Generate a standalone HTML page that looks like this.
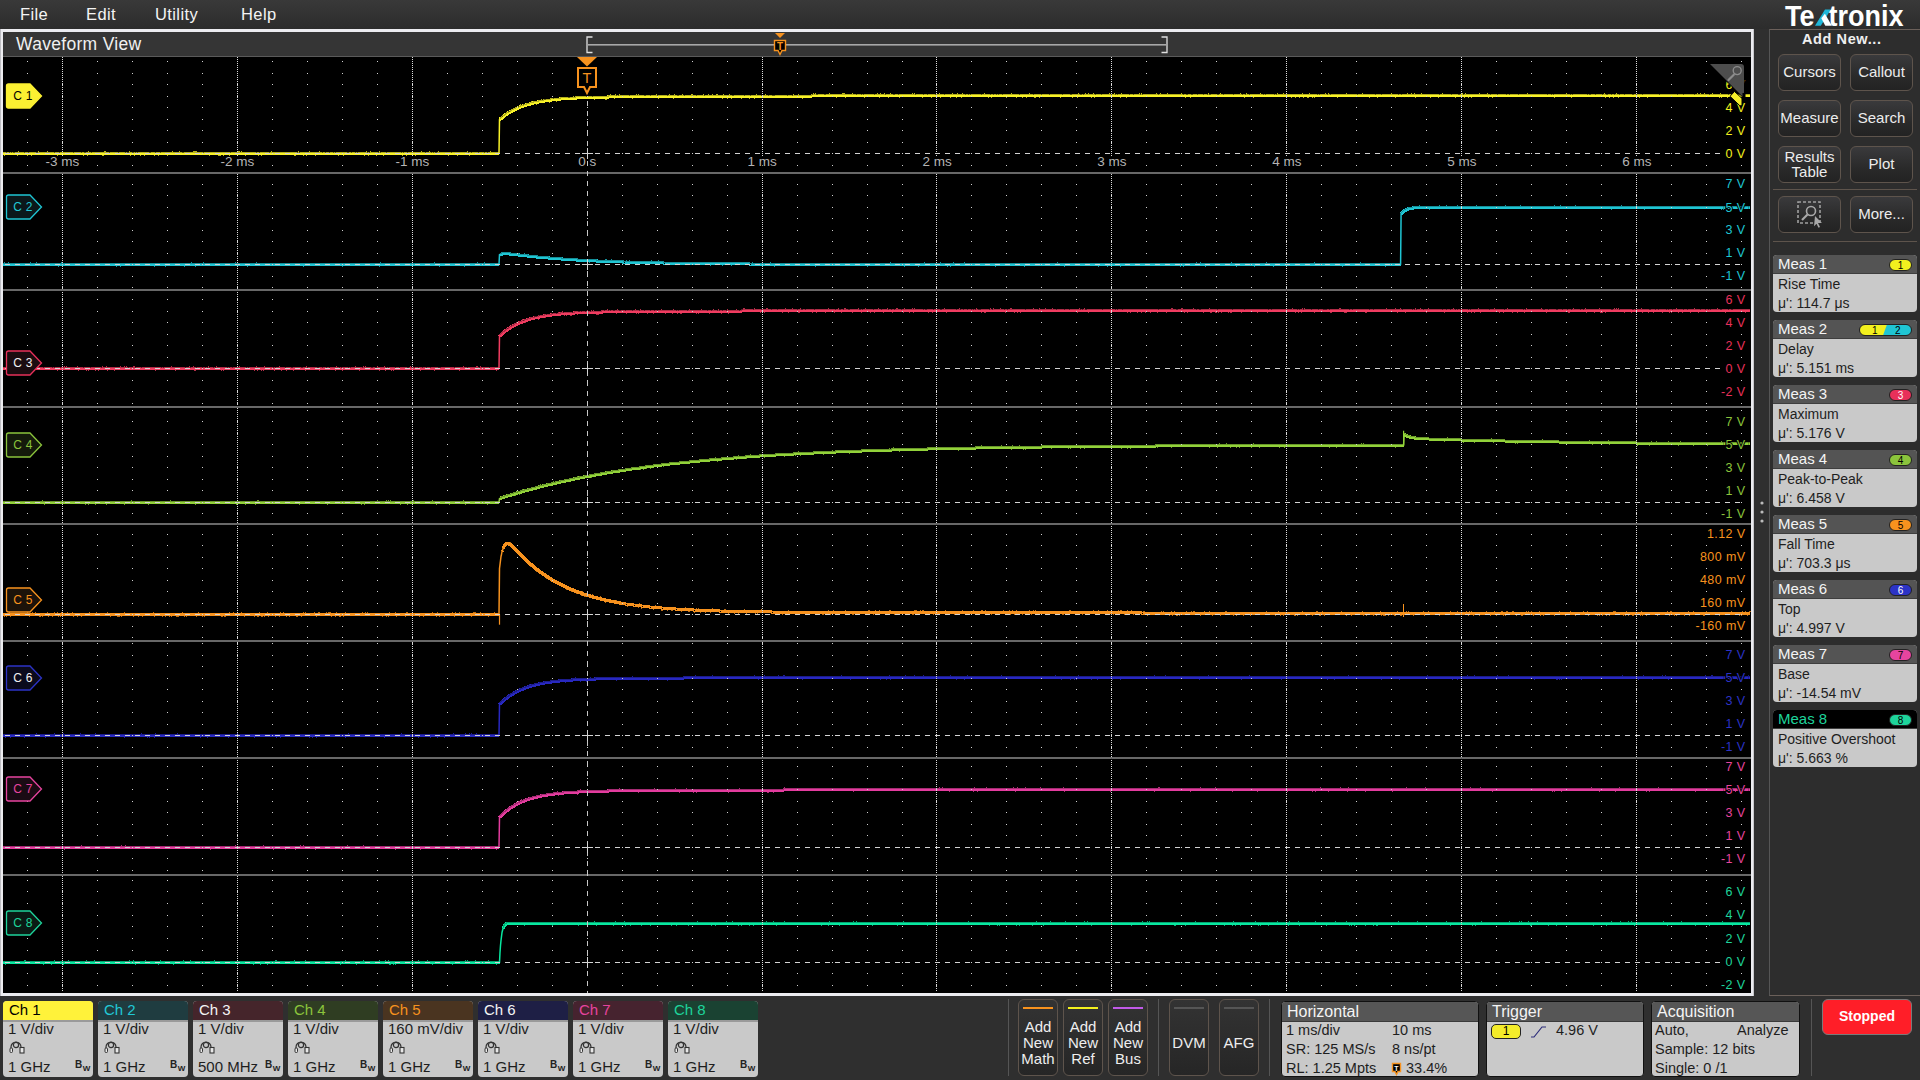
<!DOCTYPE html><html><head><meta charset="utf-8"><style>
*{margin:0;padding:0;box-sizing:border-box}
html,body{width:1920px;height:1080px;overflow:hidden}
body{background:#2f2f2f;font-family:"Liberation Sans",sans-serif;position:relative;color:#eee}
.a{position:absolute}
.menu{left:0;top:0;width:1920px;height:29px;background:linear-gradient(#393939,#2c2c2c)}
.menu span{position:absolute;top:4.5px;font-size:16.5px;color:#f4f4f4;letter-spacing:0.4px}
.frame{left:0;top:29px;width:1754px;height:967px;background:#ececf0;border-left:1px solid #bdbdc2;border-right:1px solid #c8c8cc}
.hdr{left:3px;top:32px;width:1748px;height:25px;background:#353535;border-bottom:1px solid #5a5a5a}
.plot{left:3px;top:57px;width:1748px;height:936px;background:#000}
.rp{left:1769px;top:29px;width:151px;height:967px;border-left:1px solid #555;border-top:1px solid #6b605a;border-bottom:1px solid #6b605a;background:#2d2d2d}
.btn{position:absolute;width:63px;height:37px;border:1px solid #5e544c;border-radius:6px;background:linear-gradient(#3a3a3c,#2a2a2a 60%,#232323);color:#ececec;font-size:15px;text-align:center;line-height:33px}
.meas{position:absolute;left:1773px;width:144px;height:57px;border-radius:4px;overflow:hidden;background:#c9c9c9}
.meas .h{height:19px;background:#545454;color:#f4f4f4;font-size:15px;padding-left:5px;line-height:17px;border-bottom:1px solid #3e3e3e}
.meas .b{color:#1e1e1e;font-size:14px;padding-left:5px;line-height:19px;position:relative;top:1px}
.badge{position:absolute;top:4px;height:12px;border-radius:6px;border:1px solid #222;font-size:10px;line-height:11px;text-align:center;color:#000}
.ch{position:absolute;top:1001px;width:90px;height:76px;border-radius:4px;overflow:hidden;background:#c9c9c9}
.ch .h{height:21px;font-size:15px;line-height:17px;padding-left:6px;border-bottom:2px solid #9a9a9a}
.ch .b{color:#1e1e1e;font-size:15px;padding-left:5px}
.tb{position:absolute;top:999px;width:40px;height:77px;border:1px solid #5e544c;border-radius:6px;background:linear-gradient(#333,#262626);color:#eee;font-size:15px;text-align:center}
.panel{position:absolute;top:1001px;height:76px;border-radius:4px;overflow:hidden;background:#c9c9c9;border:1px solid #111}
.panel .h{height:20px;background:#565656;color:#f4f4f4;font-size:16px;line-height:20px;padding-left:5px;border-bottom:1px solid #3a3a3a}
.panel .r{position:absolute;color:#1e1e1e;font-size:14.5px;white-space:nowrap}
</style></head><body><div class="a menu"><span style="left:20px">File</span><span style="left:86px">Edit</span><span style="left:155px">Utility</span><span style="left:241px">Help</span></div><div class="a frame"></div><div class="a hdr"></div><div class="a plot"></div><div class="a" style="left:16px;top:34px;font-size:17.5px;color:#f0f0f0;letter-spacing:0.3px">Waveform View</div><svg class="a" style="left:0;top:0" width="1920" height="60"><path d="M592.5 37h-5.5v15.5h5.5M1161.5 37h5.5v15.5h-5.5" fill="none" stroke="#e0e0e0" stroke-width="1.3"/><rect x="588" y="44" width="578" height="1.6" fill="#a8a8a8"/><path d="M775 33h10l-5 5z" fill="#f7921e"/><path d="M774.5 40.5h11v10h-3.5l-2 4l-2 -4h-3.5z" fill="#000" stroke="#f7921e" stroke-width="1.4"/><text x="780" y="49.5" fill="#f7921e" font-size="10" font-weight="bold" text-anchor="middle" font-family="Liberation Sans">T</text></svg><svg class="a" style="left:0;top:0" width="1920" height="1080" font-family="Liberation Sans, sans-serif"><g id="tr"><polyline points="3,153.5 5,153.5 7,153.5 9,153.5 11,153.5 13,153.5 15,153.5 17,153.5 19,153.5 21,153.5 23,153.5 25,153.5 27,153.5 29,153.5 31,153.5 33,153.5 35,153.5 37,153.5 39,153.5 41,153.5 43,153.5 45,153.5 47,153.5 49,153.5 51,153.5 53,153.5 55,153.5 57,153.5 59,153.5 61,153.5 63,153.5 65,153.5 67,153.5 69,153.5 71,153.5 73,153.5 75,153.5 77,153.5 79,153.5 81,153.5 83,153.5 85,153.5 87,153.5 89,153.5 91,153.5 93,153.5 95,153.5 97,153.5 99,153.5 101,153.5 103,153.5 105,153.5 107,153.5 109,153.5 111,153.5 113,153.5 115,153.5 117,153.5 119,153.5 121,153.5 123,153.5 125,153.5 127,153.5 129,153.5 131,153.5 133,153.5 135,153.5 137,153.5 139,153.5 141,153.5 143,153.5 145,153.5 147,153.5 149,153.5 151,153.5 153,153.5 155,153.5 157,153.5 159,153.5 161,153.5 163,153.5 165,153.5 167,153.5 169,153.5 171,153.5 173,153.5 175,153.5 177,153.5 179,153.5 181,153.5 183,153.5 185,153.5 187,153.5 189,153.5 191,153.5 193,153.5 195,153.5 197,153.5 199,153.5 201,153.5 203,153.5 205,153.5 207,153.5 209,153.5 211,153.5 213,153.5 215,153.5 217,153.5 219,153.5 221,153.5 223,153.5 225,153.5 227,153.5 229,153.5 231,153.5 233,153.5 235,153.5 237,153.5 239,153.5 241,153.5 243,153.5 245,153.5 247,153.5 249,153.5 251,153.5 253,153.5 255,153.5 257,153.5 259,153.5 261,153.5 263,153.5 265,153.5 267,153.5 269,153.5 271,153.5 273,153.5 275,153.5 277,153.5 279,153.5 281,153.5 283,153.5 285,153.5 287,153.5 289,153.5 291,153.5 293,153.5 295,153.5 297,153.5 299,153.5 301,153.5 303,153.5 305,153.5 307,153.5 309,153.5 311,153.5 313,153.5 315,153.5 317,153.5 319,153.5 321,153.5 323,153.5 325,153.5 327,153.5 329,153.5 331,153.5 333,153.5 335,153.5 337,153.5 339,153.5 341,153.5 343,153.5 345,153.5 347,153.5 349,153.5 351,153.5 353,153.5 355,153.5 357,153.5 359,153.5 361,153.5 363,153.5 365,153.5 367,153.5 369,153.5 371,153.5 373,153.5 375,153.5 377,153.5 379,153.5 381,153.5 383,153.5 385,153.5 387,153.5 389,153.5 391,153.5 393,153.5 395,153.5 397,153.5 399,153.5 401,153.5 403,153.5 405,153.5 407,153.5 409,153.5 411,153.5 413,153.5 415,153.5 417,153.5 419,153.5 421,153.5 423,153.5 425,153.5 427,153.5 429,153.5 431,153.5 433,153.5 435,153.5 437,153.5 439,153.5 441,153.5 443,153.5 445,153.5 447,153.5 449,153.5 451,153.5 453,153.5 455,153.5 457,153.5 459,153.5 461,153.5 463,153.5 465,153.5 467,153.5 469,153.5 471,153.5 473,153.5 475,153.5 477,153.5 479,153.5 481,153.5 483,153.5 485,153.5 487,153.5 489,153.5 491,153.5 493,153.5 495,153.5 495.5,153.5 496,153.5 496.5,153.5 497,153.5 497.5,153.5 498,153.5 498.5,153.5 499,153.5" fill="none" stroke="#f8f228" stroke-width="3" stroke-linejoin="round" shape-rendering="crispEdges"/><polyline points="3,152.5 5,152.5 7,152.5 9,152.5 11,152.5 13,152.5 15,152.5 17,152.5 19,152.5 21,152.5 23,152.5 25,152.5 27,152.5 29,152.5 31,152.5 33,152.5 35,152.5 37,152.5 39,152.5 41,152.5 43,152.5 45,152.5 47,152.5 49,152.5 51,152.5 53,152.5 55,152.5 57,152.5 59,152.5 61,152.5 63,152.5 65,152.5 67,152.5 69,152.5 71,152.5 73,152.5 75,152.5 77,152.5 79,152.5 81,152.5 83,152.5 85,152.5 87,152.5 89,152.5 91,152.5 93,152.5 95,152.5 97,152.5 99,152.5 101,152.5 103,152.5 105,152.5 107,152.5 109,152.5 111,152.5 113,152.5 115,152.5 117,152.5 119,152.5 121,152.5 123,152.5 125,152.5 127,152.5 129,152.5 131,152.5 133,152.5 135,152.5 137,152.5 139,152.5 141,152.5 143,152.5 145,152.5 147,152.5 149,152.5 151,152.5 153,152.5 155,152.5 157,152.5 159,152.5 161,152.5 163,152.5 165,152.5 167,152.5 169,152.5 171,152.5 173,152.5 175,152.5 177,152.5 179,152.5 181,152.5 183,152.5 185,152.5 187,152.5 189,152.5 191,152.5 193,152.5 195,152.5 197,152.5 199,152.5 201,152.5 203,152.5 205,152.5 207,152.5 209,152.5 211,152.5 213,152.5 215,152.5 217,152.5 219,152.5 221,152.5 223,152.5 225,152.5 227,152.5 229,152.5 231,152.5 233,152.5 235,152.5 237,152.5 239,152.5 241,152.5 243,152.5 245,152.5 247,152.5 249,152.5 251,152.5 253,152.5 255,152.5 257,152.5 259,152.5 261,152.5 263,152.5 265,152.5 267,152.5 269,152.5 271,152.5 273,152.5 275,152.5 277,152.5 279,152.5 281,152.5 283,152.5 285,152.5 287,152.5 289,152.5 291,152.5 293,152.5 295,152.5 297,152.5 299,152.5 301,152.5 303,152.5 305,152.5 307,152.5 309,152.5 311,152.5 313,152.5 315,152.5 317,152.5 319,152.5 321,152.5 323,152.5 325,152.5 327,152.5 329,152.5 331,152.5 333,152.5 335,152.5 337,152.5 339,152.5 341,152.5 343,152.5 345,152.5 347,152.5 349,152.5 351,152.5 353,152.5 355,152.5 357,152.5 359,152.5 361,152.5 363,152.5 365,152.5 367,152.5 369,152.5 371,152.5 373,152.5 375,152.5 377,152.5 379,152.5 381,152.5 383,152.5 385,152.5 387,152.5 389,152.5 391,152.5 393,152.5 395,152.5 397,152.5 399,152.5 401,152.5 403,152.5 405,152.5 407,152.5 409,152.5 411,152.5 413,152.5 415,152.5 417,152.5 419,152.5 421,152.5 423,152.5 425,152.5 427,152.5 429,152.5 431,152.5 433,152.5 435,152.5 437,152.5 439,152.5 441,152.5 443,152.5 445,152.5 447,152.5 449,152.5 451,152.5 453,152.5 455,152.5 457,152.5 459,152.5 461,152.5 463,152.5 465,152.5 467,152.5 469,152.5 471,152.5 473,152.5 475,152.5 477,152.5 479,152.5 481,152.5 483,152.5 485,152.5 487,152.5 489,152.5 491,152.5 493,152.5 495,152.5 495.5,152.5 496,152.5 496.5,152.5 497,152.5 497.5,152.5 498,152.5 498.5,152.5 499,152.5" fill="none" stroke="#000" stroke-opacity="0.28" stroke-width="1" shape-rendering="crispEdges"/><polyline points="499.5,119.5 500,119.5 500.5,118.5 501,118.5 501.5,118.5 502,117.5 502.5,117.5 503,116.5 503.5,116.5 504,116.5 504.5,115.5 505,115.5 505.5,114.5 506,114.5 506.5,114.5 507,113.5 507.5,113.5 508,113.5 508.5,112.5 509,112.5 509.5,112.5 510,112.5 510.5,111.5 511,111.5 511.5,111.5 512,110.5 512.5,110.5 513,110.5 513.5,110.5 514,109.5 514.5,109.5 515,109.5 515.5,109.5 516,108.5 516.5,108.5 517,108.5 517.5,108.5 518,108.5 518.5,107.5 519,107.5 519.5,107.5 520,107.5 520.5,106.5 521,106.5 521.5,106.5 522,106.5 522.5,106.5 523,106.5 523.5,105.5 524,105.5 524.5,105.5 525,105.5 525.5,105.5 526,105.5 526.5,104.5 527,104.5 527.5,104.5 528,104.5 528.5,104.5 529,104.5 529.5,104.5 530,103.5 530.5,103.5 531,103.5 531.5,103.5 532,103.5 532.5,103.5 533,103.5 533.5,102.5 534,102.5 534.5,102.5 535,102.5 535.5,102.5 536,102.5 536.5,102.5 537,102.5 537.5,102.5 538,102.5 538.5,101.5 539,101.5 539.5,101.5 540,101.5 540.5,101.5 541,101.5 541.5,101.5 542,101.5 542.5,101.5 543,101.5 543.5,101.5 544,100.5 544.5,100.5 545,100.5 545.5,100.5 546,100.5 546.5,100.5 547,100.5 547.5,100.5 548,100.5 548.5,100.5 549,100.5 549.5,100.5 550,100.5 550.5,100.5 551,99.5 551.5,99.5 552,99.5 552.5,99.5 553,99.5 553.5,99.5 554,99.5 554.5,99.5 555,99.5 555.5,99.5 556,99.5 556.5,99.5 557,99.5 557.5,99.5 558,99.5 558.5,99.5 559,99.5 559.5,99.5 560,99.5 560.5,98.5 561,98.5 561.5,98.5 562,98.5 562.5,98.5 563,98.5 563.5,98.5 564,98.5 564.5,98.5 565,98.5 565.5,98.5 566,98.5 566.5,98.5 567,98.5 567.5,98.5 568,98.5 568.5,98.5 569,98.5 569.5,98.5 570,98.5 570.5,98.5 571,98.5 571.5,98.5 572,98.5 572.5,98.5 573,98.5 573.5,98.5 574,98.5 574.5,98.5 575,98.5 575.5,98.5 576,97.5 576.5,97.5 577,97.5 577.5,97.5 578,97.5 578.5,97.5 579,97.5 579.5,97.5 580,97.5 580.5,97.5 581,97.5 581.5,97.5 582,97.5 582.5,97.5 583,97.5 583.5,97.5 584,97.5 584.5,97.5 585,97.5 585.5,97.5 586,97.5 586.5,97.5 587,97.5 587.5,97.5 588,97.5 588.5,97.5 589,97.5 589.5,97.5 590,97.5 590.5,97.5 591,97.5 591.5,97.5 592,97.5 592.5,97.5 593,97.5 593.5,97.5 594,97.5 594.5,97.5 595,97.5 595.5,97.5 596,97.5 596.5,97.5 597,97.5 597.5,97.5 598,97.5 598.5,97.5 599,97.5 599.5,97.5 600,97.5 600.5,97.5 601,97.5 601.5,97.5 602,97.5 602.5,97.5 603,97.5 603.5,97.5 604,97.5 604.5,97.5 605,97.5 605.5,97.5 606,97.5 606.5,97.5 607,97.5 607.5,97.5 608,97.5 608.5,96.5 609,96.5 609.5,96.5 610,96.5 610.5,96.5 611,96.5 611.5,96.5 612,96.5 612.5,96.5 613,96.5 613.5,96.5 614,96.5 614.5,96.5 615,96.5 615.5,96.5 616,96.5 616.5,96.5 617,96.5 617.5,96.5 618,96.5 618.5,96.5 619,96.5 619.5,96.5 620,96.5 620.5,96.5 622.5,96.5 624.5,96.5 626.5,96.5 628.5,96.5 630.5,96.5 632.5,96.5 634.5,96.5 636.5,96.5 638.5,96.5 640.5,96.5 642.5,96.5 644.5,96.5 646.5,96.5 648.5,96.5 650.5,96.5 652.5,96.5 654.5,96.5 656.5,96.5 658.5,96.5 660.5,96.5 662.5,96.5 664.5,96.5 666.5,96.5 668.5,96.5 670.5,96.5 672.5,96.5 674.5,96.5 676.5,96.5 678.5,96.5 680.5,96.5 682.5,96.5 684.5,96.5 686.5,96.5 688.5,96.5 690.5,96.5 692.5,96.5 694.5,96.5 696.5,96.5 698.5,96.5 700.5,96.5 702.5,96.5 704.5,96.5 706.5,96.5 708.5,96.5 710.5,96.5 712.5,96.5 714.5,96.5 716.5,96.5 718.5,96.5 720.5,96.5 722.5,96.5 724.5,96.5 726.5,96.5 728.5,96.5 730.5,96.5 732.5,96.5 734.5,96.5 736.5,96.5 738.5,96.5 740.5,96.5 742.5,96.5 744.5,96.5 746.5,96.5 748.5,96.5 750.5,96.5 752.5,96.5 754.5,96.5 756.5,96.5 758.5,96.5 760.5,96.5 762.5,96.5 764.5,96.5 766.5,96.5 768.5,96.5 770.5,96.5 772.5,96.5 774.5,96.5 776.5,96.5 778.5,96.5 780.5,96.5 782.5,96.5 784.5,96.5 786.5,96.5 788.5,96.5 790.5,96.5 792.5,96.5 794.5,96.5 796.5,96.5 798.5,96.5 800.5,96.5 802.5,96.5 804.5,96.5 806.5,96.5 808.5,96.5 810.5,96.5 812.5,95.5 814.5,95.5 816.5,95.5 818.5,95.5 820.5,95.5 822.5,95.5 824.5,95.5 826.5,95.5 828.5,95.5 830.5,95.5 832.5,95.5 834.5,95.5 836.5,95.5 838.5,95.5 840.5,95.5 842.5,95.5 844.5,95.5 846.5,95.5 848.5,95.5 850.5,95.5 852.5,95.5 854.5,95.5 856.5,95.5 858.5,95.5 860.5,95.5 862.5,95.5 864.5,95.5 866.5,95.5 868.5,95.5 870.5,95.5 872.5,95.5 874.5,95.5 876.5,95.5 878.5,95.5 880.5,95.5 882.5,95.5 884.5,95.5 886.5,95.5 888.5,95.5 890.5,95.5 892.5,95.5 894.5,95.5 896.5,95.5 898.5,95.5 900.5,95.5 902.5,95.5 904.5,95.5 906.5,95.5 908.5,95.5 910.5,95.5 912.5,95.5 914.5,95.5 916.5,95.5 918.5,95.5 920.5,95.5 922.5,95.5 924.5,95.5 926.5,95.5 928.5,95.5 930.5,95.5 932.5,95.5 934.5,95.5 936.5,95.5 938.5,95.5 940.5,95.5 942.5,95.5 944.5,95.5 946.5,95.5 948.5,95.5 950.5,95.5 952.5,95.5 954.5,95.5 956.5,95.5 958.5,95.5 960.5,95.5 962.5,95.5 964.5,95.5 966.5,95.5 968.5,95.5 970.5,95.5 972.5,95.5 974.5,95.5 976.5,95.5 978.5,95.5 980.5,95.5 982.5,95.5 984.5,95.5 986.5,95.5 988.5,95.5 990.5,95.5 992.5,95.5 994.5,95.5 996.5,95.5 998.5,95.5 1000.5,95.5 1002.5,95.5 1004.5,95.5 1006.5,95.5 1008.5,95.5 1010.5,95.5 1012.5,95.5 1014.5,95.5 1016.5,95.5 1018.5,95.5 1020.5,95.5 1022.5,95.5 1024.5,95.5 1026.5,95.5 1028.5,95.5 1030.5,95.5 1032.5,95.5 1034.5,95.5 1036.5,95.5 1038.5,95.5 1040.5,95.5 1042.5,95.5 1044.5,95.5 1046.5,95.5 1048.5,95.5 1050.5,95.5 1052.5,95.5 1054.5,95.5 1056.5,95.5 1058.5,95.5 1060.5,95.5 1062.5,95.5 1064.5,95.5 1066.5,95.5 1068.5,95.5 1070.5,95.5 1072.5,95.5 1074.5,95.5 1076.5,95.5 1078.5,95.5 1080.5,95.5 1082.5,95.5 1084.5,95.5 1086.5,95.5 1088.5,95.5 1090.5,95.5 1092.5,95.5 1094.5,95.5 1096.5,95.5 1098.5,95.5 1100.5,95.5 1102.5,95.5 1104.5,95.5 1106.5,95.5 1108.5,95.5 1110.5,95.5 1112.5,95.5 1114.5,95.5 1116.5,95.5 1118.5,95.5 1120.5,95.5 1122.5,95.5 1124.5,95.5 1126.5,95.5 1128.5,95.5 1130.5,95.5 1132.5,95.5 1134.5,95.5 1136.5,95.5 1138.5,95.5 1140.5,95.5 1142.5,95.5 1144.5,95.5 1146.5,95.5 1148.5,95.5 1150.5,95.5 1152.5,95.5 1154.5,95.5 1156.5,95.5 1158.5,95.5 1160.5,95.5 1162.5,95.5 1164.5,95.5 1166.5,95.5 1168.5,95.5 1170.5,95.5 1172.5,95.5 1174.5,95.5 1176.5,95.5 1178.5,95.5 1180.5,95.5 1182.5,95.5 1184.5,95.5 1186.5,95.5 1188.5,95.5 1190.5,95.5 1192.5,95.5 1194.5,95.5 1196.5,95.5 1198.5,95.5 1200.5,95.5 1202.5,95.5 1204.5,95.5 1206.5,95.5 1208.5,95.5 1210.5,95.5 1212.5,95.5 1214.5,95.5 1216.5,95.5 1218.5,95.5 1220.5,95.5 1222.5,95.5 1224.5,95.5 1226.5,95.5 1228.5,95.5 1230.5,95.5 1232.5,95.5 1234.5,95.5 1236.5,95.5 1238.5,95.5 1240.5,95.5 1242.5,95.5 1244.5,95.5 1246.5,95.5 1248.5,95.5 1250.5,95.5 1252.5,95.5 1254.5,95.5 1256.5,95.5 1258.5,95.5 1260.5,95.5 1262.5,95.5 1264.5,95.5 1266.5,95.5 1268.5,95.5 1270.5,95.5 1272.5,95.5 1274.5,95.5 1276.5,95.5 1278.5,95.5 1280.5,95.5 1282.5,95.5 1284.5,95.5 1286.5,95.5 1288.5,95.5 1290.5,95.5 1292.5,95.5 1294.5,95.5 1296.5,95.5 1298.5,95.5 1300.5,95.5 1302.5,95.5 1304.5,95.5 1306.5,95.5 1308.5,95.5 1310.5,95.5 1312.5,95.5 1314.5,95.5 1316.5,95.5 1318.5,95.5 1320.5,95.5 1322.5,95.5 1324.5,95.5 1326.5,95.5 1328.5,95.5 1330.5,95.5 1332.5,95.5 1334.5,95.5 1336.5,95.5 1338.5,95.5 1340.5,95.5 1342.5,95.5 1344.5,95.5 1346.5,95.5 1348.5,95.5 1350.5,95.5 1352.5,95.5 1354.5,95.5 1356.5,95.5 1358.5,95.5 1360.5,95.5 1362.5,95.5 1364.5,95.5 1366.5,95.5 1368.5,95.5 1370.5,95.5 1372.5,95.5 1374.5,95.5 1376.5,95.5 1378.5,95.5 1380.5,95.5 1382.5,95.5 1384.5,95.5 1386.5,95.5 1388.5,95.5 1390.5,95.5 1392.5,95.5 1394.5,95.5 1396.5,95.5 1397,95.5 1397.5,95.5 1398,95.5 1398.5,95.5 1399,95.5 1399.5,95.5 1400,95.5 1400.5,95.5 1400.59,95.5 1401.09,95.5 1401.59,95.5 1402.09,95.5 1402.59,95.5 1403.09,95.5 1403.59,95.5 1404.09,95.5 1404.59,95.5 1405.09,95.5 1405.59,95.5 1406.09,95.5 1406.59,95.5 1407.09,95.5 1407.59,95.5 1408.09,95.5 1408.59,95.5 1409.09,95.5 1409.59,95.5 1410.09,95.5 1410.59,95.5 1411.09,95.5 1411.59,95.5 1412.09,95.5 1412.59,95.5 1413.09,95.5 1413.59,95.5 1414.09,95.5 1414.59,95.5 1415.09,95.5 1415.59,95.5 1416.09,95.5 1416.59,95.5 1417.09,95.5 1417.59,95.5 1418.09,95.5 1418.59,95.5 1419.09,95.5 1419.59,95.5 1420.09,95.5 1422.09,95.5 1424.09,95.5 1426.09,95.5 1428.09,95.5 1430.09,95.5 1432.09,95.5 1434.09,95.5 1436.09,95.5 1438.09,95.5 1440.09,95.5 1442.09,95.5 1444.09,95.5 1446.09,95.5 1448.09,95.5 1450.09,95.5 1452.09,95.5 1454.09,95.5 1456.09,95.5 1458.09,95.5 1460.09,95.5 1462.09,95.5 1464.09,95.5 1466.09,95.5 1468.09,95.5 1470.09,95.5 1472.09,95.5 1474.09,95.5 1476.09,95.5 1478.09,95.5 1480.09,95.5 1482.09,95.5 1484.09,95.5 1486.09,95.5 1488.09,95.5 1490.09,95.5 1492.09,95.5 1494.09,95.5 1496.09,95.5 1498.09,95.5 1500.09,95.5 1502.09,95.5 1504.09,95.5 1506.09,95.5 1508.09,95.5 1510.09,95.5 1512.09,95.5 1514.09,95.5 1516.09,95.5 1518.09,95.5 1520.09,95.5 1522.09,95.5 1524.09,95.5 1526.09,95.5 1528.09,95.5 1530.09,95.5 1532.09,95.5 1534.09,95.5 1536.09,95.5 1538.09,95.5 1540.09,95.5 1542.09,95.5 1544.09,95.5 1546.09,95.5 1548.09,95.5 1550.09,95.5 1552.09,95.5 1554.09,95.5 1556.09,95.5 1558.09,95.5 1560.09,95.5 1562.09,95.5 1564.09,95.5 1566.09,95.5 1568.09,95.5 1570.09,95.5 1572.09,95.5 1574.09,95.5 1576.09,95.5 1578.09,95.5 1580.09,95.5 1582.09,95.5 1584.09,95.5 1586.09,95.5 1588.09,95.5 1590.09,95.5 1592.09,95.5 1594.09,95.5 1596.09,95.5 1598.09,95.5 1600.09,95.5 1602.09,95.5 1604.09,95.5 1606.09,95.5 1608.09,95.5 1610.09,95.5 1612.09,95.5 1614.09,95.5 1616.09,95.5 1618.09,95.5 1620.09,95.5 1622.09,95.5 1624.09,95.5 1626.09,95.5 1628.09,95.5 1630.09,95.5 1632.09,95.5 1634.09,95.5 1636.09,95.5 1638.09,95.5 1640.09,95.5 1642.09,95.5 1644.09,95.5 1646.09,95.5 1648.09,95.5 1650.09,95.5 1652.09,95.5 1654.09,95.5 1656.09,95.5 1658.09,95.5 1660.09,95.5 1662.09,95.5 1664.09,95.5 1666.09,95.5 1668.09,95.5 1670.09,95.5 1672.09,95.5 1674.09,95.5 1676.09,95.5 1678.09,95.5 1680.09,95.5 1682.09,95.5 1684.09,95.5 1686.09,95.5 1688.09,95.5 1690.09,95.5 1692.09,95.5 1694.09,95.5 1696.09,95.5 1698.09,95.5 1700.09,95.5 1702.09,95.5 1704.09,95.5 1706.09,95.5 1708.09,95.5 1710.09,95.5 1712.09,95.5 1714.09,95.5 1716.09,95.5 1718.09,95.5 1720.09,95.5 1722.09,95.5 1724.09,95.5 1726.09,95.5 1728.09,95.5 1730.09,95.5 1732.09,95.5 1734.09,95.5 1736.09,95.5 1738.09,95.5 1740.09,95.5 1742.09,95.5 1744.09,95.5 1746.09,95.5 1748.09,95.5 1750.09,95.5" fill="none" stroke="#f8f228" stroke-width="3" stroke-linejoin="round" shape-rendering="crispEdges"/><polyline points="499.5,118.5 500,118.5 500.5,117.5 501,117.5 501.5,117.5 502,116.5 502.5,116.5 503,115.5 503.5,115.5 504,115.5 504.5,114.5 505,114.5 505.5,113.5 506,113.5 506.5,113.5 507,112.5 507.5,112.5 508,112.5 508.5,111.5 509,111.5 509.5,111.5 510,111.5 510.5,110.5 511,110.5 511.5,110.5 512,109.5 512.5,109.5 513,109.5 513.5,109.5 514,108.5 514.5,108.5 515,108.5 515.5,108.5 516,107.5 516.5,107.5 517,107.5 517.5,107.5 518,107.5 518.5,106.5 519,106.5 519.5,106.5 520,106.5 520.5,105.5 521,105.5 521.5,105.5 522,105.5 522.5,105.5 523,105.5 523.5,104.5 524,104.5 524.5,104.5 525,104.5 525.5,104.5 526,104.5 526.5,103.5 527,103.5 527.5,103.5 528,103.5 528.5,103.5 529,103.5 529.5,103.5 530,102.5 530.5,102.5 531,102.5 531.5,102.5 532,102.5 532.5,102.5 533,102.5 533.5,101.5 534,101.5 534.5,101.5 535,101.5 535.5,101.5 536,101.5 536.5,101.5 537,101.5 537.5,101.5 538,101.5 538.5,100.5 539,100.5 539.5,100.5 540,100.5 540.5,100.5 541,100.5 541.5,100.5 542,100.5 542.5,100.5 543,100.5 543.5,100.5 544,99.5 544.5,99.5 545,99.5 545.5,99.5 546,99.5 546.5,99.5 547,99.5 547.5,99.5 548,99.5 548.5,99.5 549,99.5 549.5,99.5 550,99.5 550.5,99.5 551,98.5 551.5,98.5 552,98.5 552.5,98.5 553,98.5 553.5,98.5 554,98.5 554.5,98.5 555,98.5 555.5,98.5 556,98.5 556.5,98.5 557,98.5 557.5,98.5 558,98.5 558.5,98.5 559,98.5 559.5,98.5 560,98.5 560.5,97.5 561,97.5 561.5,97.5 562,97.5 562.5,97.5 563,97.5 563.5,97.5 564,97.5 564.5,97.5 565,97.5 565.5,97.5 566,97.5 566.5,97.5 567,97.5 567.5,97.5 568,97.5 568.5,97.5 569,97.5 569.5,97.5 570,97.5 570.5,97.5 571,97.5 571.5,97.5 572,97.5 572.5,97.5 573,97.5 573.5,97.5 574,97.5 574.5,97.5 575,97.5 575.5,97.5 576,96.5 576.5,96.5 577,96.5 577.5,96.5 578,96.5 578.5,96.5 579,96.5 579.5,96.5 580,96.5 580.5,96.5 581,96.5 581.5,96.5 582,96.5 582.5,96.5 583,96.5 583.5,96.5 584,96.5 584.5,96.5 585,96.5 585.5,96.5 586,96.5 586.5,96.5 587,96.5 587.5,96.5 588,96.5 588.5,96.5 589,96.5 589.5,96.5 590,96.5 590.5,96.5 591,96.5 591.5,96.5 592,96.5 592.5,96.5 593,96.5 593.5,96.5 594,96.5 594.5,96.5 595,96.5 595.5,96.5 596,96.5 596.5,96.5 597,96.5 597.5,96.5 598,96.5 598.5,96.5 599,96.5 599.5,96.5 600,96.5 600.5,96.5 601,96.5 601.5,96.5 602,96.5 602.5,96.5 603,96.5 603.5,96.5 604,96.5 604.5,96.5 605,96.5 605.5,96.5 606,96.5 606.5,96.5 607,96.5 607.5,96.5 608,96.5 608.5,95.5 609,95.5 609.5,95.5 610,95.5 610.5,95.5 611,95.5 611.5,95.5 612,95.5 612.5,95.5 613,95.5 613.5,95.5 614,95.5 614.5,95.5 615,95.5 615.5,95.5 616,95.5 616.5,95.5 617,95.5 617.5,95.5 618,95.5 618.5,95.5 619,95.5 619.5,95.5 620,95.5 620.5,95.5 622.5,95.5 624.5,95.5 626.5,95.5 628.5,95.5 630.5,95.5 632.5,95.5 634.5,95.5 636.5,95.5 638.5,95.5 640.5,95.5 642.5,95.5 644.5,95.5 646.5,95.5 648.5,95.5 650.5,95.5 652.5,95.5 654.5,95.5 656.5,95.5 658.5,95.5 660.5,95.5 662.5,95.5 664.5,95.5 666.5,95.5 668.5,95.5 670.5,95.5 672.5,95.5 674.5,95.5 676.5,95.5 678.5,95.5 680.5,95.5 682.5,95.5 684.5,95.5 686.5,95.5 688.5,95.5 690.5,95.5 692.5,95.5 694.5,95.5 696.5,95.5 698.5,95.5 700.5,95.5 702.5,95.5 704.5,95.5 706.5,95.5 708.5,95.5 710.5,95.5 712.5,95.5 714.5,95.5 716.5,95.5 718.5,95.5 720.5,95.5 722.5,95.5 724.5,95.5 726.5,95.5 728.5,95.5 730.5,95.5 732.5,95.5 734.5,95.5 736.5,95.5 738.5,95.5 740.5,95.5 742.5,95.5 744.5,95.5 746.5,95.5 748.5,95.5 750.5,95.5 752.5,95.5 754.5,95.5 756.5,95.5 758.5,95.5 760.5,95.5 762.5,95.5 764.5,95.5 766.5,95.5 768.5,95.5 770.5,95.5 772.5,95.5 774.5,95.5 776.5,95.5 778.5,95.5 780.5,95.5 782.5,95.5 784.5,95.5 786.5,95.5 788.5,95.5 790.5,95.5 792.5,95.5 794.5,95.5 796.5,95.5 798.5,95.5 800.5,95.5 802.5,95.5 804.5,95.5 806.5,95.5 808.5,95.5 810.5,95.5 812.5,94.5 814.5,94.5 816.5,94.5 818.5,94.5 820.5,94.5 822.5,94.5 824.5,94.5 826.5,94.5 828.5,94.5 830.5,94.5 832.5,94.5 834.5,94.5 836.5,94.5 838.5,94.5 840.5,94.5 842.5,94.5 844.5,94.5 846.5,94.5 848.5,94.5 850.5,94.5 852.5,94.5 854.5,94.5 856.5,94.5 858.5,94.5 860.5,94.5 862.5,94.5 864.5,94.5 866.5,94.5 868.5,94.5 870.5,94.5 872.5,94.5 874.5,94.5 876.5,94.5 878.5,94.5 880.5,94.5 882.5,94.5 884.5,94.5 886.5,94.5 888.5,94.5 890.5,94.5 892.5,94.5 894.5,94.5 896.5,94.5 898.5,94.5 900.5,94.5 902.5,94.5 904.5,94.5 906.5,94.5 908.5,94.5 910.5,94.5 912.5,94.5 914.5,94.5 916.5,94.5 918.5,94.5 920.5,94.5 922.5,94.5 924.5,94.5 926.5,94.5 928.5,94.5 930.5,94.5 932.5,94.5 934.5,94.5 936.5,94.5 938.5,94.5 940.5,94.5 942.5,94.5 944.5,94.5 946.5,94.5 948.5,94.5 950.5,94.5 952.5,94.5 954.5,94.5 956.5,94.5 958.5,94.5 960.5,94.5 962.5,94.5 964.5,94.5 966.5,94.5 968.5,94.5 970.5,94.5 972.5,94.5 974.5,94.5 976.5,94.5 978.5,94.5 980.5,94.5 982.5,94.5 984.5,94.5 986.5,94.5 988.5,94.5 990.5,94.5 992.5,94.5 994.5,94.5 996.5,94.5 998.5,94.5 1000.5,94.5 1002.5,94.5 1004.5,94.5 1006.5,94.5 1008.5,94.5 1010.5,94.5 1012.5,94.5 1014.5,94.5 1016.5,94.5 1018.5,94.5 1020.5,94.5 1022.5,94.5 1024.5,94.5 1026.5,94.5 1028.5,94.5 1030.5,94.5 1032.5,94.5 1034.5,94.5 1036.5,94.5 1038.5,94.5 1040.5,94.5 1042.5,94.5 1044.5,94.5 1046.5,94.5 1048.5,94.5 1050.5,94.5 1052.5,94.5 1054.5,94.5 1056.5,94.5 1058.5,94.5 1060.5,94.5 1062.5,94.5 1064.5,94.5 1066.5,94.5 1068.5,94.5 1070.5,94.5 1072.5,94.5 1074.5,94.5 1076.5,94.5 1078.5,94.5 1080.5,94.5 1082.5,94.5 1084.5,94.5 1086.5,94.5 1088.5,94.5 1090.5,94.5 1092.5,94.5 1094.5,94.5 1096.5,94.5 1098.5,94.5 1100.5,94.5 1102.5,94.5 1104.5,94.5 1106.5,94.5 1108.5,94.5 1110.5,94.5 1112.5,94.5 1114.5,94.5 1116.5,94.5 1118.5,94.5 1120.5,94.5 1122.5,94.5 1124.5,94.5 1126.5,94.5 1128.5,94.5 1130.5,94.5 1132.5,94.5 1134.5,94.5 1136.5,94.5 1138.5,94.5 1140.5,94.5 1142.5,94.5 1144.5,94.5 1146.5,94.5 1148.5,94.5 1150.5,94.5 1152.5,94.5 1154.5,94.5 1156.5,94.5 1158.5,94.5 1160.5,94.5 1162.5,94.5 1164.5,94.5 1166.5,94.5 1168.5,94.5 1170.5,94.5 1172.5,94.5 1174.5,94.5 1176.5,94.5 1178.5,94.5 1180.5,94.5 1182.5,94.5 1184.5,94.5 1186.5,94.5 1188.5,94.5 1190.5,94.5 1192.5,94.5 1194.5,94.5 1196.5,94.5 1198.5,94.5 1200.5,94.5 1202.5,94.5 1204.5,94.5 1206.5,94.5 1208.5,94.5 1210.5,94.5 1212.5,94.5 1214.5,94.5 1216.5,94.5 1218.5,94.5 1220.5,94.5 1222.5,94.5 1224.5,94.5 1226.5,94.5 1228.5,94.5 1230.5,94.5 1232.5,94.5 1234.5,94.5 1236.5,94.5 1238.5,94.5 1240.5,94.5 1242.5,94.5 1244.5,94.5 1246.5,94.5 1248.5,94.5 1250.5,94.5 1252.5,94.5 1254.5,94.5 1256.5,94.5 1258.5,94.5 1260.5,94.5 1262.5,94.5 1264.5,94.5 1266.5,94.5 1268.5,94.5 1270.5,94.5 1272.5,94.5 1274.5,94.5 1276.5,94.5 1278.5,94.5 1280.5,94.5 1282.5,94.5 1284.5,94.5 1286.5,94.5 1288.5,94.5 1290.5,94.5 1292.5,94.5 1294.5,94.5 1296.5,94.5 1298.5,94.5 1300.5,94.5 1302.5,94.5 1304.5,94.5 1306.5,94.5 1308.5,94.5 1310.5,94.5 1312.5,94.5 1314.5,94.5 1316.5,94.5 1318.5,94.5 1320.5,94.5 1322.5,94.5 1324.5,94.5 1326.5,94.5 1328.5,94.5 1330.5,94.5 1332.5,94.5 1334.5,94.5 1336.5,94.5 1338.5,94.5 1340.5,94.5 1342.5,94.5 1344.5,94.5 1346.5,94.5 1348.5,94.5 1350.5,94.5 1352.5,94.5 1354.5,94.5 1356.5,94.5 1358.5,94.5 1360.5,94.5 1362.5,94.5 1364.5,94.5 1366.5,94.5 1368.5,94.5 1370.5,94.5 1372.5,94.5 1374.5,94.5 1376.5,94.5 1378.5,94.5 1380.5,94.5 1382.5,94.5 1384.5,94.5 1386.5,94.5 1388.5,94.5 1390.5,94.5 1392.5,94.5 1394.5,94.5 1396.5,94.5 1397,94.5 1397.5,94.5 1398,94.5 1398.5,94.5 1399,94.5 1399.5,94.5 1400,94.5 1400.5,94.5 1400.59,94.5 1401.09,94.5 1401.59,94.5 1402.09,94.5 1402.59,94.5 1403.09,94.5 1403.59,94.5 1404.09,94.5 1404.59,94.5 1405.09,94.5 1405.59,94.5 1406.09,94.5 1406.59,94.5 1407.09,94.5 1407.59,94.5 1408.09,94.5 1408.59,94.5 1409.09,94.5 1409.59,94.5 1410.09,94.5 1410.59,94.5 1411.09,94.5 1411.59,94.5 1412.09,94.5 1412.59,94.5 1413.09,94.5 1413.59,94.5 1414.09,94.5 1414.59,94.5 1415.09,94.5 1415.59,94.5 1416.09,94.5 1416.59,94.5 1417.09,94.5 1417.59,94.5 1418.09,94.5 1418.59,94.5 1419.09,94.5 1419.59,94.5 1420.09,94.5 1422.09,94.5 1424.09,94.5 1426.09,94.5 1428.09,94.5 1430.09,94.5 1432.09,94.5 1434.09,94.5 1436.09,94.5 1438.09,94.5 1440.09,94.5 1442.09,94.5 1444.09,94.5 1446.09,94.5 1448.09,94.5 1450.09,94.5 1452.09,94.5 1454.09,94.5 1456.09,94.5 1458.09,94.5 1460.09,94.5 1462.09,94.5 1464.09,94.5 1466.09,94.5 1468.09,94.5 1470.09,94.5 1472.09,94.5 1474.09,94.5 1476.09,94.5 1478.09,94.5 1480.09,94.5 1482.09,94.5 1484.09,94.5 1486.09,94.5 1488.09,94.5 1490.09,94.5 1492.09,94.5 1494.09,94.5 1496.09,94.5 1498.09,94.5 1500.09,94.5 1502.09,94.5 1504.09,94.5 1506.09,94.5 1508.09,94.5 1510.09,94.5 1512.09,94.5 1514.09,94.5 1516.09,94.5 1518.09,94.5 1520.09,94.5 1522.09,94.5 1524.09,94.5 1526.09,94.5 1528.09,94.5 1530.09,94.5 1532.09,94.5 1534.09,94.5 1536.09,94.5 1538.09,94.5 1540.09,94.5 1542.09,94.5 1544.09,94.5 1546.09,94.5 1548.09,94.5 1550.09,94.5 1552.09,94.5 1554.09,94.5 1556.09,94.5 1558.09,94.5 1560.09,94.5 1562.09,94.5 1564.09,94.5 1566.09,94.5 1568.09,94.5 1570.09,94.5 1572.09,94.5 1574.09,94.5 1576.09,94.5 1578.09,94.5 1580.09,94.5 1582.09,94.5 1584.09,94.5 1586.09,94.5 1588.09,94.5 1590.09,94.5 1592.09,94.5 1594.09,94.5 1596.09,94.5 1598.09,94.5 1600.09,94.5 1602.09,94.5 1604.09,94.5 1606.09,94.5 1608.09,94.5 1610.09,94.5 1612.09,94.5 1614.09,94.5 1616.09,94.5 1618.09,94.5 1620.09,94.5 1622.09,94.5 1624.09,94.5 1626.09,94.5 1628.09,94.5 1630.09,94.5 1632.09,94.5 1634.09,94.5 1636.09,94.5 1638.09,94.5 1640.09,94.5 1642.09,94.5 1644.09,94.5 1646.09,94.5 1648.09,94.5 1650.09,94.5 1652.09,94.5 1654.09,94.5 1656.09,94.5 1658.09,94.5 1660.09,94.5 1662.09,94.5 1664.09,94.5 1666.09,94.5 1668.09,94.5 1670.09,94.5 1672.09,94.5 1674.09,94.5 1676.09,94.5 1678.09,94.5 1680.09,94.5 1682.09,94.5 1684.09,94.5 1686.09,94.5 1688.09,94.5 1690.09,94.5 1692.09,94.5 1694.09,94.5 1696.09,94.5 1698.09,94.5 1700.09,94.5 1702.09,94.5 1704.09,94.5 1706.09,94.5 1708.09,94.5 1710.09,94.5 1712.09,94.5 1714.09,94.5 1716.09,94.5 1718.09,94.5 1720.09,94.5 1722.09,94.5 1724.09,94.5 1726.09,94.5 1728.09,94.5 1730.09,94.5 1732.09,94.5 1734.09,94.5 1736.09,94.5 1738.09,94.5 1740.09,94.5 1742.09,94.5 1744.09,94.5 1746.09,94.5 1748.09,94.5 1750.09,94.5" fill="none" stroke="#000" stroke-opacity="0.28" stroke-width="1" shape-rendering="crispEdges"/><path d="M499.00 153.5L499.50 119.5" fill="none" stroke="#f8f228" stroke-width="1.5" stroke-linecap="round"/><path d="M6 152h1v1h-1zM9 152h1v1h-1zM11 152h1v1h-1zM13 152h1v1h-1zM14 152h1v1h-1zM24 152h1v1h-1zM28 152h1v1h-1zM36 152h1v1h-1zM37 152h1v1h-1zM54 152h1v1h-1zM59 152h1v1h-1zM73 152h1v1h-1zM81 152h1v1h-1zM84 152h1v1h-1zM85 152h1v1h-1zM91 152h1v1h-1zM109 152h1v1h-1zM118 152h1v1h-1zM125 152h1v1h-1zM127 152h1v1h-1zM128 152h1v1h-1zM132 152h1v1h-1zM133 152h1v1h-1zM135 152h1v1h-1zM137 152h1v1h-1zM149 152h1v1h-1zM150 152h1v1h-1zM155 152h1v1h-1zM160 152h1v1h-1zM182 152h1v1h-1zM183 152h1v1h-1zM203 152h1v1h-1zM230 152h1v1h-1zM256 152h1v1h-1zM259 152h1v1h-1zM269 152h1v1h-1zM297 152h1v1h-1zM299 152h1v1h-1zM322 152h1v1h-1zM325 152h1v1h-1zM329 152h1v1h-1zM333 152h1v1h-1zM335 152h1v1h-1zM347 152h1v1h-1zM348 152h1v1h-1zM351 152h1v1h-1zM355 152h1v1h-1zM357 152h1v1h-1zM367 152h1v1h-1zM369 152h1v1h-1zM378 152h1v1h-1zM380 152h1v1h-1zM386 152h1v1h-1zM401 152h1v1h-1zM403 152h1v1h-1zM407 152h1v1h-1zM425 152h1v1h-1zM431 152h1v1h-1zM433 152h1v1h-1zM435 152h1v1h-1zM436 152h1v1h-1zM451 152h1v1h-1zM468 152h1v1h-1zM471 152h1v1h-1zM478 152h1v1h-1zM484 152h1v1h-1zM487 152h1v1h-1zM502 116h1v1h-1zM508 111h1v1h-1zM509 111h1v1h-1zM518 106h1v1h-1zM523 104h1v1h-1zM544 99h1v1h-1zM545 99h1v1h-1zM553 98h1v1h-1zM568 97h1v1h-1zM569 97h1v1h-1zM586 96h1v1h-1zM592 96h1v1h-1zM616 95h1v1h-1zM618 95h1v1h-1zM629 95h1v1h-1zM644 95h1v1h-1zM645 95h1v1h-1zM650 95h1v1h-1zM657 95h1v1h-1zM667 95h1v1h-1zM677 95h1v1h-1zM678 95h1v1h-1zM684 95h1v1h-1zM696 95h1v1h-1zM704 95h1v1h-1zM732 95h1v1h-1zM733 95h1v1h-1zM744 95h1v1h-1zM750 95h1v1h-1zM761 95h1v1h-1zM768 95h1v1h-1zM772 95h1v1h-1zM773 95h1v1h-1zM774 95h1v1h-1zM787 95h1v1h-1zM792 95h1v1h-1zM812 94h1v1h-1zM816 94h1v1h-1zM817 94h1v1h-1zM824 94h1v1h-1zM825 94h1v1h-1zM856 94h1v1h-1zM861 94h1v1h-1zM863 94h1v1h-1zM874 94h1v1h-1zM885 94h1v1h-1zM893 94h1v1h-1zM894 94h1v1h-1zM898 94h1v1h-1zM915 94h1v1h-1zM923 94h1v1h-1zM927 94h1v1h-1zM935 94h1v1h-1zM944 94h1v1h-1zM965 94h1v1h-1zM968 94h1v1h-1zM970 94h1v1h-1zM981 94h1v1h-1zM990 94h1v1h-1zM993 94h1v1h-1zM996 94h1v1h-1zM998 94h1v1h-1zM1002 94h1v1h-1zM1019 94h1v1h-1zM1033 94h1v1h-1zM1041 94h1v1h-1zM1049 94h1v1h-1zM1062 94h1v1h-1zM1070 94h1v1h-1zM1071 94h1v1h-1zM1080 94h1v1h-1zM1081 94h1v1h-1zM1083 94h1v1h-1zM1095 94h1v1h-1zM1101 94h1v1h-1zM1111 94h1v1h-1zM1115 94h1v1h-1zM1117 94h1v1h-1zM1129 94h1v1h-1zM1133 94h1v1h-1zM1140 94h1v1h-1zM1142 94h1v1h-1zM1158 94h1v1h-1zM1183 94h1v1h-1zM1186 94h1v1h-1zM1187 94h1v1h-1zM1191 94h1v1h-1zM1192 94h1v1h-1zM1197 94h1v1h-1zM1203 94h1v1h-1zM1207 94h1v1h-1zM1209 94h1v1h-1zM1210 94h1v1h-1zM1217 94h1v1h-1zM1218 94h1v1h-1zM1223 94h1v1h-1zM1233 94h1v1h-1zM1242 94h1v1h-1zM1245 94h1v1h-1zM1249 94h1v1h-1zM1263 94h1v1h-1zM1265 94h1v1h-1zM1274 94h1v1h-1zM1276 94h1v1h-1zM1317 94h1v1h-1zM1319 94h1v1h-1zM1327 94h1v1h-1zM1330 94h1v1h-1zM1357 94h1v1h-1zM1375 94h1v1h-1zM1381 94h1v1h-1zM1398 94h1v1h-1zM1401 94h1v1h-1zM1439 94h1v1h-1zM1451 94h1v1h-1zM1458 94h1v1h-1zM1459 94h1v1h-1zM1463 94h1v1h-1zM1490 94h1v1h-1zM1497 94h1v1h-1zM1506 94h1v1h-1zM1509 94h1v1h-1zM1518 94h1v1h-1zM1547 94h1v1h-1zM1551 94h1v1h-1zM1553 94h1v1h-1zM1570 94h1v1h-1zM1572 94h1v1h-1zM1587 94h1v1h-1zM1589 94h1v1h-1zM1590 94h1v1h-1zM1595 94h1v1h-1zM1602 94h1v1h-1zM1606 94h1v1h-1zM1607 94h1v1h-1zM1611 94h1v1h-1zM1614 94h1v1h-1zM1619 94h1v1h-1zM1624 94h1v1h-1zM1632 94h1v1h-1zM1633 94h1v1h-1zM1636 94h1v1h-1zM1642 94h1v1h-1zM1659 94h1v1h-1zM1677 94h1v1h-1zM1683 94h1v1h-1zM1694 94h1v1h-1zM1709 94h1v1h-1zM1728 94h1v1h-1zM1731 94h1v1h-1zM1738 94h1v1h-1zM1739 94h1v1h-1z" fill="#000" opacity="0.45"/><path d="M4 155h1v1h-1zM17 155h1v1h-1zM18 151h1v1h-1zM27 155h1v1h-1zM31 155h1v1h-1zM38 151h1v1h-1zM47 151h1v1h-1zM57 155h1v1h-1zM83 155h1v1h-1zM87 155h1v1h-1zM88 151h1v1h-1zM102 155h1v1h-1zM103 155h1v1h-1zM104 151h1v1h-1zM105 151h1v1h-1zM129 151h1v1h-1zM130 155h1v1h-1zM134 155h1v1h-1zM140 155h1v1h-1zM144 155h1v1h-1zM154 155h1v1h-1zM158 155h1v1h-1zM167 155h1v1h-1zM172 151h1v1h-1zM179 151h1v1h-1zM193 151h1v1h-1zM194 151h1v1h-1zM195 151h1v1h-1zM196 151h1v1h-1zM209 155h1v1h-1zM218 155h1v1h-1zM219 155h1v1h-1zM220 155h1v1h-1zM223 155h1v1h-1zM229 155h1v1h-1zM238 151h1v1h-1zM239 151h1v1h-1zM241 151h1v1h-1zM245 155h1v1h-1zM258 155h1v1h-1zM261 155h1v1h-1zM271 151h1v1h-1zM294 155h1v1h-1zM295 155h1v1h-1zM298 151h1v1h-1zM303 155h1v1h-1zM306 155h1v1h-1zM309 151h1v1h-1zM315 155h1v1h-1zM319 151h1v1h-1zM338 155h1v1h-1zM343 155h1v1h-1zM364 155h1v1h-1zM366 151h1v1h-1zM368 155h1v1h-1zM370 151h1v1h-1zM376 155h1v1h-1zM379 151h1v1h-1zM383 155h1v1h-1zM402 155h1v1h-1zM406 155h1v1h-1zM412 151h1v1h-1zM415 155h1v1h-1zM421 151h1v1h-1zM429 151h1v1h-1zM438 151h1v1h-1zM448 155h1v1h-1zM457 155h1v1h-1zM467 151h1v1h-1zM469 155h1v1h-1zM490 151h1v1h-1zM503 118h1v1h-1zM520 104h1v1h-1zM529 102h1v1h-1zM531 101h1v1h-1zM533 104h1v1h-1zM536 104h1v1h-1zM541 99h1v1h-1zM549 102h1v1h-1zM556 101h1v1h-1zM573 96h1v1h-1zM576 99h1v1h-1zM594 99h1v1h-1zM605 99h1v1h-1zM606 99h1v1h-1zM607 95h1v1h-1zM610 94h1v1h-1zM614 98h1v1h-1zM615 94h1v1h-1zM619 94h1v1h-1zM632 98h1v1h-1zM636 94h1v1h-1zM638 94h1v1h-1zM656 94h1v1h-1zM658 98h1v1h-1zM669 94h1v1h-1zM673 98h1v1h-1zM674 94h1v1h-1zM682 94h1v1h-1zM691 94h1v1h-1zM692 94h1v1h-1zM703 94h1v1h-1zM708 94h1v1h-1zM712 94h1v1h-1zM716 94h1v1h-1zM717 94h1v1h-1zM722 98h1v1h-1zM723 94h1v1h-1zM727 98h1v1h-1zM729 94h1v1h-1zM731 98h1v1h-1zM741 98h1v1h-1zM749 98h1v1h-1zM754 98h1v1h-1zM756 94h1v1h-1zM765 94h1v1h-1zM793 94h1v1h-1zM798 94h1v1h-1zM802 98h1v1h-1zM813 93h1v1h-1zM815 93h1v1h-1zM829 93h1v1h-1zM836 97h1v1h-1zM842 93h1v1h-1zM843 93h1v1h-1zM844 93h1v1h-1zM845 97h1v1h-1zM852 93h1v1h-1zM864 97h1v1h-1zM877 93h1v1h-1zM879 97h1v1h-1zM880 93h1v1h-1zM884 93h1v1h-1zM888 97h1v1h-1zM890 93h1v1h-1zM899 97h1v1h-1zM912 93h1v1h-1zM914 93h1v1h-1zM922 97h1v1h-1zM931 97h1v1h-1zM939 93h1v1h-1zM940 97h1v1h-1zM950 97h1v1h-1zM952 93h1v1h-1zM956 97h1v1h-1zM957 93h1v1h-1zM961 97h1v1h-1zM962 93h1v1h-1zM984 93h1v1h-1zM988 97h1v1h-1zM991 97h1v1h-1zM1006 97h1v1h-1zM1011 93h1v1h-1zM1016 97h1v1h-1zM1022 97h1v1h-1zM1026 97h1v1h-1zM1029 93h1v1h-1zM1034 97h1v1h-1zM1035 97h1v1h-1zM1039 97h1v1h-1zM1060 97h1v1h-1zM1072 97h1v1h-1zM1077 97h1v1h-1zM1078 93h1v1h-1zM1085 93h1v1h-1zM1088 93h1v1h-1zM1091 97h1v1h-1zM1093 93h1v1h-1zM1094 97h1v1h-1zM1109 93h1v1h-1zM1114 93h1v1h-1zM1120 97h1v1h-1zM1121 93h1v1h-1zM1126 97h1v1h-1zM1139 93h1v1h-1zM1141 93h1v1h-1zM1156 93h1v1h-1zM1160 93h1v1h-1zM1167 93h1v1h-1zM1181 93h1v1h-1zM1185 97h1v1h-1zM1190 97h1v1h-1zM1208 93h1v1h-1zM1220 93h1v1h-1zM1240 93h1v1h-1zM1244 97h1v1h-1zM1246 93h1v1h-1zM1253 97h1v1h-1zM1260 93h1v1h-1zM1277 93h1v1h-1zM1283 93h1v1h-1zM1291 97h1v1h-1zM1295 97h1v1h-1zM1299 97h1v1h-1zM1302 93h1v1h-1zM1303 97h1v1h-1zM1307 97h1v1h-1zM1308 97h1v1h-1zM1309 93h1v1h-1zM1312 97h1v1h-1zM1314 97h1v1h-1zM1325 93h1v1h-1zM1328 93h1v1h-1zM1337 97h1v1h-1zM1346 93h1v1h-1zM1362 93h1v1h-1zM1369 97h1v1h-1zM1377 97h1v1h-1zM1391 93h1v1h-1zM1395 97h1v1h-1zM1407 93h1v1h-1zM1411 93h1v1h-1zM1414 93h1v1h-1zM1415 97h1v1h-1zM1421 93h1v1h-1zM1430 97h1v1h-1zM1438 97h1v1h-1zM1442 93h1v1h-1zM1455 97h1v1h-1zM1462 93h1v1h-1zM1464 97h1v1h-1zM1465 93h1v1h-1zM1468 97h1v1h-1zM1471 97h1v1h-1zM1479 93h1v1h-1zM1487 93h1v1h-1zM1488 97h1v1h-1zM1492 97h1v1h-1zM1527 93h1v1h-1zM1554 97h1v1h-1zM1566 93h1v1h-1zM1571 97h1v1h-1zM1604 93h1v1h-1zM1605 97h1v1h-1zM1609 97h1v1h-1zM1613 97h1v1h-1zM1616 93h1v1h-1zM1618 97h1v1h-1zM1639 97h1v1h-1zM1647 97h1v1h-1zM1697 93h1v1h-1zM1700 93h1v1h-1zM1704 93h1v1h-1zM1712 93h1v1h-1zM1719 97h1v1h-1zM1720 93h1v1h-1zM1721 97h1v1h-1zM1727 97h1v1h-1zM1734 97h1v1h-1z" fill="#f8f228" opacity="0.75"/><polyline points="3,264.5 5,264.5 7,264.5 9,264.5 11,264.5 13,264.5 15,264.5 17,264.5 19,264.5 21,264.5 23,264.5 25,264.5 27,264.5 29,264.5 31,264.5 33,264.5 35,264.5 37,264.5 39,264.5 41,264.5 43,264.5 45,264.5 47,264.5 49,264.5 51,264.5 53,264.5 55,264.5 57,264.5 59,264.5 61,264.5 63,264.5 65,264.5 67,264.5 69,264.5 71,264.5 73,264.5 75,264.5 77,264.5 79,264.5 81,264.5 83,264.5 85,264.5 87,264.5 89,264.5 91,264.5 93,264.5 95,264.5 97,264.5 99,264.5 101,264.5 103,264.5 105,264.5 107,264.5 109,264.5 111,264.5 113,264.5 115,264.5 117,264.5 119,264.5 121,264.5 123,264.5 125,264.5 127,264.5 129,264.5 131,264.5 133,264.5 135,264.5 137,264.5 139,264.5 141,264.5 143,264.5 145,264.5 147,264.5 149,264.5 151,264.5 153,264.5 155,264.5 157,264.5 159,264.5 161,264.5 163,264.5 165,264.5 167,264.5 169,264.5 171,264.5 173,264.5 175,264.5 177,264.5 179,264.5 181,264.5 183,264.5 185,264.5 187,264.5 189,264.5 191,264.5 193,264.5 195,264.5 197,264.5 199,264.5 201,264.5 203,264.5 205,264.5 207,264.5 209,264.5 211,264.5 213,264.5 215,264.5 217,264.5 219,264.5 221,264.5 223,264.5 225,264.5 227,264.5 229,264.5 231,264.5 233,264.5 235,264.5 237,264.5 239,264.5 241,264.5 243,264.5 245,264.5 247,264.5 249,264.5 251,264.5 253,264.5 255,264.5 257,264.5 259,264.5 261,264.5 263,264.5 265,264.5 267,264.5 269,264.5 271,264.5 273,264.5 275,264.5 277,264.5 279,264.5 281,264.5 283,264.5 285,264.5 287,264.5 289,264.5 291,264.5 293,264.5 295,264.5 297,264.5 299,264.5 301,264.5 303,264.5 305,264.5 307,264.5 309,264.5 311,264.5 313,264.5 315,264.5 317,264.5 319,264.5 321,264.5 323,264.5 325,264.5 327,264.5 329,264.5 331,264.5 333,264.5 335,264.5 337,264.5 339,264.5 341,264.5 343,264.5 345,264.5 347,264.5 349,264.5 351,264.5 353,264.5 355,264.5 357,264.5 359,264.5 361,264.5 363,264.5 365,264.5 367,264.5 369,264.5 371,264.5 373,264.5 375,264.5 377,264.5 379,264.5 381,264.5 383,264.5 385,264.5 387,264.5 389,264.5 391,264.5 393,264.5 395,264.5 397,264.5 399,264.5 401,264.5 403,264.5 405,264.5 407,264.5 409,264.5 411,264.5 413,264.5 415,264.5 417,264.5 419,264.5 421,264.5 423,264.5 425,264.5 427,264.5 429,264.5 431,264.5 433,264.5 435,264.5 437,264.5 439,264.5 441,264.5 443,264.5 445,264.5 447,264.5 449,264.5 451,264.5 453,264.5 455,264.5 457,264.5 459,264.5 461,264.5 463,264.5 465,264.5 467,264.5 469,264.5 471,264.5 473,264.5 475,264.5 477,264.5 479,264.5 481,264.5 483,264.5 485,264.5 487,264.5 489,264.5 491,264.5 493,264.5 495,264.5 495.5,264.5 496,264.5 496.5,264.5 497,264.5 497.5,264.5 498,264.5 498.5,264.5 499,264.5" fill="none" stroke="#1fc5d3" stroke-width="3" stroke-linejoin="round" shape-rendering="crispEdges"/><polyline points="3,263.5 5,263.5 7,263.5 9,263.5 11,263.5 13,263.5 15,263.5 17,263.5 19,263.5 21,263.5 23,263.5 25,263.5 27,263.5 29,263.5 31,263.5 33,263.5 35,263.5 37,263.5 39,263.5 41,263.5 43,263.5 45,263.5 47,263.5 49,263.5 51,263.5 53,263.5 55,263.5 57,263.5 59,263.5 61,263.5 63,263.5 65,263.5 67,263.5 69,263.5 71,263.5 73,263.5 75,263.5 77,263.5 79,263.5 81,263.5 83,263.5 85,263.5 87,263.5 89,263.5 91,263.5 93,263.5 95,263.5 97,263.5 99,263.5 101,263.5 103,263.5 105,263.5 107,263.5 109,263.5 111,263.5 113,263.5 115,263.5 117,263.5 119,263.5 121,263.5 123,263.5 125,263.5 127,263.5 129,263.5 131,263.5 133,263.5 135,263.5 137,263.5 139,263.5 141,263.5 143,263.5 145,263.5 147,263.5 149,263.5 151,263.5 153,263.5 155,263.5 157,263.5 159,263.5 161,263.5 163,263.5 165,263.5 167,263.5 169,263.5 171,263.5 173,263.5 175,263.5 177,263.5 179,263.5 181,263.5 183,263.5 185,263.5 187,263.5 189,263.5 191,263.5 193,263.5 195,263.5 197,263.5 199,263.5 201,263.5 203,263.5 205,263.5 207,263.5 209,263.5 211,263.5 213,263.5 215,263.5 217,263.5 219,263.5 221,263.5 223,263.5 225,263.5 227,263.5 229,263.5 231,263.5 233,263.5 235,263.5 237,263.5 239,263.5 241,263.5 243,263.5 245,263.5 247,263.5 249,263.5 251,263.5 253,263.5 255,263.5 257,263.5 259,263.5 261,263.5 263,263.5 265,263.5 267,263.5 269,263.5 271,263.5 273,263.5 275,263.5 277,263.5 279,263.5 281,263.5 283,263.5 285,263.5 287,263.5 289,263.5 291,263.5 293,263.5 295,263.5 297,263.5 299,263.5 301,263.5 303,263.5 305,263.5 307,263.5 309,263.5 311,263.5 313,263.5 315,263.5 317,263.5 319,263.5 321,263.5 323,263.5 325,263.5 327,263.5 329,263.5 331,263.5 333,263.5 335,263.5 337,263.5 339,263.5 341,263.5 343,263.5 345,263.5 347,263.5 349,263.5 351,263.5 353,263.5 355,263.5 357,263.5 359,263.5 361,263.5 363,263.5 365,263.5 367,263.5 369,263.5 371,263.5 373,263.5 375,263.5 377,263.5 379,263.5 381,263.5 383,263.5 385,263.5 387,263.5 389,263.5 391,263.5 393,263.5 395,263.5 397,263.5 399,263.5 401,263.5 403,263.5 405,263.5 407,263.5 409,263.5 411,263.5 413,263.5 415,263.5 417,263.5 419,263.5 421,263.5 423,263.5 425,263.5 427,263.5 429,263.5 431,263.5 433,263.5 435,263.5 437,263.5 439,263.5 441,263.5 443,263.5 445,263.5 447,263.5 449,263.5 451,263.5 453,263.5 455,263.5 457,263.5 459,263.5 461,263.5 463,263.5 465,263.5 467,263.5 469,263.5 471,263.5 473,263.5 475,263.5 477,263.5 479,263.5 481,263.5 483,263.5 485,263.5 487,263.5 489,263.5 491,263.5 493,263.5 495,263.5 495.5,263.5 496,263.5 496.5,263.5 497,263.5 497.5,263.5 498,263.5 498.5,263.5 499,263.5" fill="none" stroke="#000" stroke-opacity="0.28" stroke-width="1" shape-rendering="crispEdges"/><polyline points="499.5,254.5 500,254.5 500.5,254.5 501,254.5 501.5,254.5 502,253.5 502.5,253.5 503,253.5 503.5,253.5 504,253.5 504.5,253.5 505,253.5 505.5,253.5 506,253.5 506.5,253.5 507,253.5 507.5,253.5 508,253.5 508.5,253.5 509,253.5 509.5,253.5 510,253.5 510.5,254.5 511,254.5 511.5,254.5 512,254.5 512.5,254.5 513,254.5 513.5,254.5 514,254.5 514.5,254.5 515,254.5 515.5,254.5 516,254.5 516.5,254.5 517,254.5 517.5,254.5 518,254.5 518.5,254.5 519,255.5 519.5,255.5 520,255.5 520.5,255.5 521,255.5 521.5,255.5 522,255.5 522.5,255.5 523,255.5 523.5,255.5 524,255.5 524.5,255.5 525,255.5 525.5,255.5 526,255.5 526.5,255.5 527,255.5 527.5,255.5 528,256.5 528.5,256.5 529,256.5 529.5,256.5 530,256.5 530.5,256.5 531,256.5 531.5,256.5 532,256.5 532.5,256.5 533,256.5 533.5,256.5 534,256.5 534.5,256.5 535,256.5 535.5,256.5 536,256.5 536.5,256.5 537,256.5 537.5,257.5 538,257.5 538.5,257.5 539,257.5 539.5,257.5 540,257.5 540.5,257.5 541,257.5 541.5,257.5 542,257.5 542.5,257.5 543,257.5 543.5,257.5 544,257.5 544.5,257.5 545,257.5 545.5,257.5 546,257.5 546.5,257.5 547,257.5 547.5,257.5 548,257.5 548.5,257.5 549,258.5 549.5,258.5 550,258.5 550.5,258.5 551,258.5 551.5,258.5 552,258.5 552.5,258.5 553,258.5 553.5,258.5 554,258.5 554.5,258.5 555,258.5 555.5,258.5 556,258.5 556.5,258.5 557,258.5 557.5,258.5 558,258.5 558.5,258.5 559,258.5 559.5,258.5 560,258.5 560.5,258.5 561,258.5 561.5,258.5 562,259.5 562.5,259.5 563,259.5 563.5,259.5 564,259.5 564.5,259.5 565,259.5 565.5,259.5 566,259.5 566.5,259.5 567,259.5 567.5,259.5 568,259.5 568.5,259.5 569,259.5 569.5,259.5 570,259.5 570.5,259.5 571,259.5 571.5,259.5 572,259.5 572.5,259.5 573,259.5 573.5,259.5 574,259.5 574.5,259.5 575,259.5 575.5,259.5 576,259.5 576.5,259.5 577,259.5 577.5,260.5 578,260.5 578.5,260.5 579,260.5 579.5,260.5 580,260.5 580.5,260.5 581,260.5 581.5,260.5 582,260.5 582.5,260.5 583,260.5 583.5,260.5 584,260.5 584.5,260.5 585,260.5 585.5,260.5 586,260.5 586.5,260.5 587,260.5 587.5,260.5 588,260.5 588.5,260.5 589,260.5 589.5,260.5 590,260.5 590.5,260.5 591,260.5 591.5,260.5 592,260.5 592.5,260.5 593,260.5 593.5,260.5 594,260.5 594.5,260.5 595,260.5 595.5,260.5 596,260.5 596.5,260.5 597,261.5 597.5,261.5 598,261.5 598.5,261.5 599,261.5 599.5,261.5 600,261.5 600.5,261.5 601,261.5 601.5,261.5 602,261.5 602.5,261.5 603,261.5 603.5,261.5 604,261.5 604.5,261.5 605,261.5 605.5,261.5 606,261.5 606.5,261.5 607,261.5 607.5,261.5 608,261.5 608.5,261.5 609,261.5 609.5,261.5 610,261.5 610.5,261.5 611,261.5 611.5,261.5 612,261.5 612.5,261.5 613,261.5 613.5,261.5 614,261.5 614.5,261.5 615,261.5 615.5,261.5 616,261.5 616.5,261.5 617,261.5 617.5,261.5 618,261.5 618.5,261.5 619,261.5 619.5,261.5 620,261.5 620.5,261.5 622.5,261.5 624.5,262.5 626.5,262.5 628.5,262.5 630.5,262.5 632.5,262.5 634.5,262.5 636.5,262.5 638.5,262.5 640.5,262.5 642.5,262.5 644.5,262.5 646.5,262.5 648.5,262.5 650.5,262.5 652.5,262.5 654.5,262.5 656.5,262.5 658.5,262.5 660.5,262.5 662.5,262.5 664.5,263.5 666.5,263.5 668.5,263.5 670.5,263.5 672.5,263.5 674.5,263.5 676.5,263.5 678.5,263.5 680.5,263.5 682.5,263.5 684.5,263.5 686.5,263.5 688.5,263.5 690.5,263.5 692.5,263.5 694.5,263.5 696.5,263.5 698.5,263.5 700.5,263.5 702.5,263.5 704.5,263.5 706.5,263.5 708.5,263.5 710.5,263.5 712.5,263.5 714.5,263.5 716.5,263.5 718.5,263.5 720.5,263.5 722.5,263.5 724.5,263.5 726.5,263.5 728.5,263.5 730.5,263.5 732.5,263.5 734.5,263.5 736.5,263.5 738.5,263.5 740.5,263.5 742.5,263.5 744.5,263.5 746.5,263.5 748.5,263.5 750.5,264.5 752.5,264.5 754.5,264.5 756.5,264.5 758.5,264.5 760.5,264.5 762.5,264.5 764.5,264.5 766.5,264.5 768.5,264.5 770.5,264.5 772.5,264.5 774.5,264.5 776.5,264.5 778.5,264.5 780.5,264.5 782.5,264.5 784.5,264.5 786.5,264.5 788.5,264.5 790.5,264.5 792.5,264.5 794.5,264.5 796.5,264.5 798.5,264.5 800.5,264.5 802.5,264.5 804.5,264.5 806.5,264.5 808.5,264.5 810.5,264.5 812.5,264.5 814.5,264.5 816.5,264.5 818.5,264.5 820.5,264.5 822.5,264.5 824.5,264.5 826.5,264.5 828.5,264.5 830.5,264.5 832.5,264.5 834.5,264.5 836.5,264.5 838.5,264.5 840.5,264.5 842.5,264.5 844.5,264.5 846.5,264.5 848.5,264.5 850.5,264.5 852.5,264.5 854.5,264.5 856.5,264.5 858.5,264.5 860.5,264.5 862.5,264.5 864.5,264.5 866.5,264.5 868.5,264.5 870.5,264.5 872.5,264.5 874.5,264.5 876.5,264.5 878.5,264.5 880.5,264.5 882.5,264.5 884.5,264.5 886.5,264.5 888.5,264.5 890.5,264.5 892.5,264.5 894.5,264.5 896.5,264.5 898.5,264.5 900.5,264.5 902.5,264.5 904.5,264.5 906.5,264.5 908.5,264.5 910.5,264.5 912.5,264.5 914.5,264.5 916.5,264.5 918.5,264.5 920.5,264.5 922.5,264.5 924.5,264.5 926.5,264.5 928.5,264.5 930.5,264.5 932.5,264.5 934.5,264.5 936.5,264.5 938.5,264.5 940.5,264.5 942.5,264.5 944.5,264.5 946.5,264.5 948.5,264.5 950.5,264.5 952.5,264.5 954.5,264.5 956.5,264.5 958.5,264.5 960.5,264.5 962.5,264.5 964.5,264.5 966.5,264.5 968.5,264.5 970.5,264.5 972.5,264.5 974.5,264.5 976.5,264.5 978.5,264.5 980.5,264.5 982.5,264.5 984.5,264.5 986.5,264.5 988.5,264.5 990.5,264.5 992.5,264.5 994.5,264.5 996.5,264.5 998.5,264.5 1000.5,264.5 1002.5,264.5 1004.5,264.5 1006.5,264.5 1008.5,264.5 1010.5,264.5 1012.5,264.5 1014.5,264.5 1016.5,264.5 1018.5,264.5 1020.5,264.5 1022.5,264.5 1024.5,264.5 1026.5,264.5 1028.5,264.5 1030.5,264.5 1032.5,264.5 1034.5,264.5 1036.5,264.5 1038.5,264.5 1040.5,264.5 1042.5,264.5 1044.5,264.5 1046.5,264.5 1048.5,264.5 1050.5,264.5 1052.5,264.5 1054.5,264.5 1056.5,264.5 1058.5,264.5 1060.5,264.5 1062.5,264.5 1064.5,264.5 1066.5,264.5 1068.5,264.5 1070.5,264.5 1072.5,264.5 1074.5,264.5 1076.5,264.5 1078.5,264.5 1080.5,264.5 1082.5,264.5 1084.5,264.5 1086.5,264.5 1088.5,264.5 1090.5,264.5 1092.5,264.5 1094.5,264.5 1096.5,264.5 1098.5,264.5 1100.5,264.5 1102.5,264.5 1104.5,264.5 1106.5,264.5 1108.5,264.5 1110.5,264.5 1112.5,264.5 1114.5,264.5 1116.5,264.5 1118.5,264.5 1120.5,264.5 1122.5,264.5 1124.5,264.5 1126.5,264.5 1128.5,264.5 1130.5,264.5 1132.5,264.5 1134.5,264.5 1136.5,264.5 1138.5,264.5 1140.5,264.5 1142.5,264.5 1144.5,264.5 1146.5,264.5 1148.5,264.5 1150.5,264.5 1152.5,264.5 1154.5,264.5 1156.5,264.5 1158.5,264.5 1160.5,264.5 1162.5,264.5 1164.5,264.5 1166.5,264.5 1168.5,264.5 1170.5,264.5 1172.5,264.5 1174.5,264.5 1176.5,264.5 1178.5,264.5 1180.5,264.5 1182.5,264.5 1184.5,264.5 1186.5,264.5 1188.5,264.5 1190.5,264.5 1192.5,264.5 1194.5,264.5 1196.5,264.5 1198.5,264.5 1200.5,264.5 1202.5,264.5 1204.5,264.5 1206.5,264.5 1208.5,264.5 1210.5,264.5 1212.5,264.5 1214.5,264.5 1216.5,264.5 1218.5,264.5 1220.5,264.5 1222.5,264.5 1224.5,264.5 1226.5,264.5 1228.5,264.5 1230.5,264.5 1232.5,264.5 1234.5,264.5 1236.5,264.5 1238.5,264.5 1240.5,264.5 1242.5,264.5 1244.5,264.5 1246.5,264.5 1248.5,264.5 1250.5,264.5 1252.5,264.5 1254.5,264.5 1256.5,264.5 1258.5,264.5 1260.5,264.5 1262.5,264.5 1264.5,264.5 1266.5,264.5 1268.5,264.5 1270.5,264.5 1272.5,264.5 1274.5,264.5 1276.5,264.5 1278.5,264.5 1280.5,264.5 1282.5,264.5 1284.5,264.5 1286.5,264.5 1288.5,264.5 1290.5,264.5 1292.5,264.5 1294.5,264.5 1296.5,264.5 1298.5,264.5 1300.5,264.5 1302.5,264.5 1304.5,264.5 1306.5,264.5 1308.5,264.5 1310.5,264.5 1312.5,264.5 1314.5,264.5 1316.5,264.5 1318.5,264.5 1320.5,264.5 1322.5,264.5 1324.5,264.5 1326.5,264.5 1328.5,264.5 1330.5,264.5 1332.5,264.5 1334.5,264.5 1336.5,264.5 1338.5,264.5 1340.5,264.5 1342.5,264.5 1344.5,264.5 1346.5,264.5 1348.5,264.5 1350.5,264.5 1352.5,264.5 1354.5,264.5 1356.5,264.5 1358.5,264.5 1360.5,264.5 1362.5,264.5 1364.5,264.5 1366.5,264.5 1368.5,264.5 1370.5,264.5 1372.5,264.5 1374.5,264.5 1376.5,264.5 1378.5,264.5 1380.5,264.5 1382.5,264.5 1384.5,264.5 1386.5,264.5 1388.5,264.5 1390.5,264.5 1392.5,264.5 1394.5,264.5 1396.5,264.5 1397,264.5 1397.5,264.5 1398,264.5 1398.5,264.5 1399,264.5 1399.5,264.5 1400,264.5 1400.5,264.5 1400.59,264.5" fill="none" stroke="#1fc5d3" stroke-width="3" stroke-linejoin="round" shape-rendering="crispEdges"/><polyline points="499.5,253.5 500,253.5 500.5,253.5 501,253.5 501.5,253.5 502,252.5 502.5,252.5 503,252.5 503.5,252.5 504,252.5 504.5,252.5 505,252.5 505.5,252.5 506,252.5 506.5,252.5 507,252.5 507.5,252.5 508,252.5 508.5,252.5 509,252.5 509.5,252.5 510,252.5 510.5,253.5 511,253.5 511.5,253.5 512,253.5 512.5,253.5 513,253.5 513.5,253.5 514,253.5 514.5,253.5 515,253.5 515.5,253.5 516,253.5 516.5,253.5 517,253.5 517.5,253.5 518,253.5 518.5,253.5 519,254.5 519.5,254.5 520,254.5 520.5,254.5 521,254.5 521.5,254.5 522,254.5 522.5,254.5 523,254.5 523.5,254.5 524,254.5 524.5,254.5 525,254.5 525.5,254.5 526,254.5 526.5,254.5 527,254.5 527.5,254.5 528,255.5 528.5,255.5 529,255.5 529.5,255.5 530,255.5 530.5,255.5 531,255.5 531.5,255.5 532,255.5 532.5,255.5 533,255.5 533.5,255.5 534,255.5 534.5,255.5 535,255.5 535.5,255.5 536,255.5 536.5,255.5 537,255.5 537.5,256.5 538,256.5 538.5,256.5 539,256.5 539.5,256.5 540,256.5 540.5,256.5 541,256.5 541.5,256.5 542,256.5 542.5,256.5 543,256.5 543.5,256.5 544,256.5 544.5,256.5 545,256.5 545.5,256.5 546,256.5 546.5,256.5 547,256.5 547.5,256.5 548,256.5 548.5,256.5 549,257.5 549.5,257.5 550,257.5 550.5,257.5 551,257.5 551.5,257.5 552,257.5 552.5,257.5 553,257.5 553.5,257.5 554,257.5 554.5,257.5 555,257.5 555.5,257.5 556,257.5 556.5,257.5 557,257.5 557.5,257.5 558,257.5 558.5,257.5 559,257.5 559.5,257.5 560,257.5 560.5,257.5 561,257.5 561.5,257.5 562,258.5 562.5,258.5 563,258.5 563.5,258.5 564,258.5 564.5,258.5 565,258.5 565.5,258.5 566,258.5 566.5,258.5 567,258.5 567.5,258.5 568,258.5 568.5,258.5 569,258.5 569.5,258.5 570,258.5 570.5,258.5 571,258.5 571.5,258.5 572,258.5 572.5,258.5 573,258.5 573.5,258.5 574,258.5 574.5,258.5 575,258.5 575.5,258.5 576,258.5 576.5,258.5 577,258.5 577.5,259.5 578,259.5 578.5,259.5 579,259.5 579.5,259.5 580,259.5 580.5,259.5 581,259.5 581.5,259.5 582,259.5 582.5,259.5 583,259.5 583.5,259.5 584,259.5 584.5,259.5 585,259.5 585.5,259.5 586,259.5 586.5,259.5 587,259.5 587.5,259.5 588,259.5 588.5,259.5 589,259.5 589.5,259.5 590,259.5 590.5,259.5 591,259.5 591.5,259.5 592,259.5 592.5,259.5 593,259.5 593.5,259.5 594,259.5 594.5,259.5 595,259.5 595.5,259.5 596,259.5 596.5,259.5 597,260.5 597.5,260.5 598,260.5 598.5,260.5 599,260.5 599.5,260.5 600,260.5 600.5,260.5 601,260.5 601.5,260.5 602,260.5 602.5,260.5 603,260.5 603.5,260.5 604,260.5 604.5,260.5 605,260.5 605.5,260.5 606,260.5 606.5,260.5 607,260.5 607.5,260.5 608,260.5 608.5,260.5 609,260.5 609.5,260.5 610,260.5 610.5,260.5 611,260.5 611.5,260.5 612,260.5 612.5,260.5 613,260.5 613.5,260.5 614,260.5 614.5,260.5 615,260.5 615.5,260.5 616,260.5 616.5,260.5 617,260.5 617.5,260.5 618,260.5 618.5,260.5 619,260.5 619.5,260.5 620,260.5 620.5,260.5 622.5,260.5 624.5,261.5 626.5,261.5 628.5,261.5 630.5,261.5 632.5,261.5 634.5,261.5 636.5,261.5 638.5,261.5 640.5,261.5 642.5,261.5 644.5,261.5 646.5,261.5 648.5,261.5 650.5,261.5 652.5,261.5 654.5,261.5 656.5,261.5 658.5,261.5 660.5,261.5 662.5,261.5 664.5,262.5 666.5,262.5 668.5,262.5 670.5,262.5 672.5,262.5 674.5,262.5 676.5,262.5 678.5,262.5 680.5,262.5 682.5,262.5 684.5,262.5 686.5,262.5 688.5,262.5 690.5,262.5 692.5,262.5 694.5,262.5 696.5,262.5 698.5,262.5 700.5,262.5 702.5,262.5 704.5,262.5 706.5,262.5 708.5,262.5 710.5,262.5 712.5,262.5 714.5,262.5 716.5,262.5 718.5,262.5 720.5,262.5 722.5,262.5 724.5,262.5 726.5,262.5 728.5,262.5 730.5,262.5 732.5,262.5 734.5,262.5 736.5,262.5 738.5,262.5 740.5,262.5 742.5,262.5 744.5,262.5 746.5,262.5 748.5,262.5 750.5,263.5 752.5,263.5 754.5,263.5 756.5,263.5 758.5,263.5 760.5,263.5 762.5,263.5 764.5,263.5 766.5,263.5 768.5,263.5 770.5,263.5 772.5,263.5 774.5,263.5 776.5,263.5 778.5,263.5 780.5,263.5 782.5,263.5 784.5,263.5 786.5,263.5 788.5,263.5 790.5,263.5 792.5,263.5 794.5,263.5 796.5,263.5 798.5,263.5 800.5,263.5 802.5,263.5 804.5,263.5 806.5,263.5 808.5,263.5 810.5,263.5 812.5,263.5 814.5,263.5 816.5,263.5 818.5,263.5 820.5,263.5 822.5,263.5 824.5,263.5 826.5,263.5 828.5,263.5 830.5,263.5 832.5,263.5 834.5,263.5 836.5,263.5 838.5,263.5 840.5,263.5 842.5,263.5 844.5,263.5 846.5,263.5 848.5,263.5 850.5,263.5 852.5,263.5 854.5,263.5 856.5,263.5 858.5,263.5 860.5,263.5 862.5,263.5 864.5,263.5 866.5,263.5 868.5,263.5 870.5,263.5 872.5,263.5 874.5,263.5 876.5,263.5 878.5,263.5 880.5,263.5 882.5,263.5 884.5,263.5 886.5,263.5 888.5,263.5 890.5,263.5 892.5,263.5 894.5,263.5 896.5,263.5 898.5,263.5 900.5,263.5 902.5,263.5 904.5,263.5 906.5,263.5 908.5,263.5 910.5,263.5 912.5,263.5 914.5,263.5 916.5,263.5 918.5,263.5 920.5,263.5 922.5,263.5 924.5,263.5 926.5,263.5 928.5,263.5 930.5,263.5 932.5,263.5 934.5,263.5 936.5,263.5 938.5,263.5 940.5,263.5 942.5,263.5 944.5,263.5 946.5,263.5 948.5,263.5 950.5,263.5 952.5,263.5 954.5,263.5 956.5,263.5 958.5,263.5 960.5,263.5 962.5,263.5 964.5,263.5 966.5,263.5 968.5,263.5 970.5,263.5 972.5,263.5 974.5,263.5 976.5,263.5 978.5,263.5 980.5,263.5 982.5,263.5 984.5,263.5 986.5,263.5 988.5,263.5 990.5,263.5 992.5,263.5 994.5,263.5 996.5,263.5 998.5,263.5 1000.5,263.5 1002.5,263.5 1004.5,263.5 1006.5,263.5 1008.5,263.5 1010.5,263.5 1012.5,263.5 1014.5,263.5 1016.5,263.5 1018.5,263.5 1020.5,263.5 1022.5,263.5 1024.5,263.5 1026.5,263.5 1028.5,263.5 1030.5,263.5 1032.5,263.5 1034.5,263.5 1036.5,263.5 1038.5,263.5 1040.5,263.5 1042.5,263.5 1044.5,263.5 1046.5,263.5 1048.5,263.5 1050.5,263.5 1052.5,263.5 1054.5,263.5 1056.5,263.5 1058.5,263.5 1060.5,263.5 1062.5,263.5 1064.5,263.5 1066.5,263.5 1068.5,263.5 1070.5,263.5 1072.5,263.5 1074.5,263.5 1076.5,263.5 1078.5,263.5 1080.5,263.5 1082.5,263.5 1084.5,263.5 1086.5,263.5 1088.5,263.5 1090.5,263.5 1092.5,263.5 1094.5,263.5 1096.5,263.5 1098.5,263.5 1100.5,263.5 1102.5,263.5 1104.5,263.5 1106.5,263.5 1108.5,263.5 1110.5,263.5 1112.5,263.5 1114.5,263.5 1116.5,263.5 1118.5,263.5 1120.5,263.5 1122.5,263.5 1124.5,263.5 1126.5,263.5 1128.5,263.5 1130.5,263.5 1132.5,263.5 1134.5,263.5 1136.5,263.5 1138.5,263.5 1140.5,263.5 1142.5,263.5 1144.5,263.5 1146.5,263.5 1148.5,263.5 1150.5,263.5 1152.5,263.5 1154.5,263.5 1156.5,263.5 1158.5,263.5 1160.5,263.5 1162.5,263.5 1164.5,263.5 1166.5,263.5 1168.5,263.5 1170.5,263.5 1172.5,263.5 1174.5,263.5 1176.5,263.5 1178.5,263.5 1180.5,263.5 1182.5,263.5 1184.5,263.5 1186.5,263.5 1188.5,263.5 1190.5,263.5 1192.5,263.5 1194.5,263.5 1196.5,263.5 1198.5,263.5 1200.5,263.5 1202.5,263.5 1204.5,263.5 1206.5,263.5 1208.5,263.5 1210.5,263.5 1212.5,263.5 1214.5,263.5 1216.5,263.5 1218.5,263.5 1220.5,263.5 1222.5,263.5 1224.5,263.5 1226.5,263.5 1228.5,263.5 1230.5,263.5 1232.5,263.5 1234.5,263.5 1236.5,263.5 1238.5,263.5 1240.5,263.5 1242.5,263.5 1244.5,263.5 1246.5,263.5 1248.5,263.5 1250.5,263.5 1252.5,263.5 1254.5,263.5 1256.5,263.5 1258.5,263.5 1260.5,263.5 1262.5,263.5 1264.5,263.5 1266.5,263.5 1268.5,263.5 1270.5,263.5 1272.5,263.5 1274.5,263.5 1276.5,263.5 1278.5,263.5 1280.5,263.5 1282.5,263.5 1284.5,263.5 1286.5,263.5 1288.5,263.5 1290.5,263.5 1292.5,263.5 1294.5,263.5 1296.5,263.5 1298.5,263.5 1300.5,263.5 1302.5,263.5 1304.5,263.5 1306.5,263.5 1308.5,263.5 1310.5,263.5 1312.5,263.5 1314.5,263.5 1316.5,263.5 1318.5,263.5 1320.5,263.5 1322.5,263.5 1324.5,263.5 1326.5,263.5 1328.5,263.5 1330.5,263.5 1332.5,263.5 1334.5,263.5 1336.5,263.5 1338.5,263.5 1340.5,263.5 1342.5,263.5 1344.5,263.5 1346.5,263.5 1348.5,263.5 1350.5,263.5 1352.5,263.5 1354.5,263.5 1356.5,263.5 1358.5,263.5 1360.5,263.5 1362.5,263.5 1364.5,263.5 1366.5,263.5 1368.5,263.5 1370.5,263.5 1372.5,263.5 1374.5,263.5 1376.5,263.5 1378.5,263.5 1380.5,263.5 1382.5,263.5 1384.5,263.5 1386.5,263.5 1388.5,263.5 1390.5,263.5 1392.5,263.5 1394.5,263.5 1396.5,263.5 1397,263.5 1397.5,263.5 1398,263.5 1398.5,263.5 1399,263.5 1399.5,263.5 1400,263.5 1400.5,263.5 1400.59,263.5" fill="none" stroke="#000" stroke-opacity="0.28" stroke-width="1" shape-rendering="crispEdges"/><polyline points="1401.09,213.5 1401.59,213.5 1402.09,212.5 1402.59,212.5 1403.09,211.5 1403.59,211.5 1404.09,210.5 1404.59,210.5 1405.09,210.5 1405.59,210.5 1406.09,209.5 1406.59,209.5 1407.09,209.5 1407.59,209.5 1408.09,208.5 1408.59,208.5 1409.09,208.5 1409.59,208.5 1410.09,208.5 1410.59,208.5 1411.09,208.5 1411.59,208.5 1412.09,208.5 1412.59,208.5 1413.09,207.5 1413.59,207.5 1414.09,207.5 1414.59,207.5 1415.09,207.5 1415.59,207.5 1416.09,207.5 1416.59,207.5 1417.09,207.5 1417.59,207.5 1418.09,207.5 1418.59,207.5 1419.09,207.5 1419.59,207.5 1420.09,207.5 1422.09,207.5 1424.09,207.5 1426.09,207.5 1428.09,207.5 1430.09,207.5 1432.09,207.5 1434.09,207.5 1436.09,207.5 1438.09,207.5 1440.09,207.5 1442.09,207.5 1444.09,207.5 1446.09,207.5 1448.09,207.5 1450.09,207.5 1452.09,207.5 1454.09,207.5 1456.09,207.5 1458.09,207.5 1460.09,207.5 1462.09,207.5 1464.09,207.5 1466.09,207.5 1468.09,207.5 1470.09,207.5 1472.09,207.5 1474.09,207.5 1476.09,207.5 1478.09,207.5 1480.09,207.5 1482.09,207.5 1484.09,207.5 1486.09,207.5 1488.09,207.5 1490.09,207.5 1492.09,207.5 1494.09,207.5 1496.09,207.5 1498.09,207.5 1500.09,207.5 1502.09,207.5 1504.09,207.5 1506.09,207.5 1508.09,207.5 1510.09,207.5 1512.09,207.5 1514.09,207.5 1516.09,207.5 1518.09,207.5 1520.09,207.5 1522.09,207.5 1524.09,207.5 1526.09,207.5 1528.09,207.5 1530.09,207.5 1532.09,207.5 1534.09,207.5 1536.09,207.5 1538.09,207.5 1540.09,207.5 1542.09,207.5 1544.09,207.5 1546.09,207.5 1548.09,207.5 1550.09,207.5 1552.09,207.5 1554.09,207.5 1556.09,207.5 1558.09,207.5 1560.09,207.5 1562.09,207.5 1564.09,207.5 1566.09,207.5 1568.09,207.5 1570.09,207.5 1572.09,207.5 1574.09,207.5 1576.09,207.5 1578.09,207.5 1580.09,207.5 1582.09,207.5 1584.09,207.5 1586.09,207.5 1588.09,207.5 1590.09,207.5 1592.09,207.5 1594.09,207.5 1596.09,207.5 1598.09,207.5 1600.09,207.5 1602.09,207.5 1604.09,207.5 1606.09,207.5 1608.09,207.5 1610.09,207.5 1612.09,207.5 1614.09,207.5 1616.09,207.5 1618.09,207.5 1620.09,207.5 1622.09,207.5 1624.09,207.5 1626.09,207.5 1628.09,207.5 1630.09,207.5 1632.09,207.5 1634.09,207.5 1636.09,207.5 1638.09,207.5 1640.09,207.5 1642.09,207.5 1644.09,207.5 1646.09,207.5 1648.09,207.5 1650.09,207.5 1652.09,207.5 1654.09,207.5 1656.09,207.5 1658.09,207.5 1660.09,207.5 1662.09,207.5 1664.09,207.5 1666.09,207.5 1668.09,207.5 1670.09,207.5 1672.09,207.5 1674.09,207.5 1676.09,207.5 1678.09,207.5 1680.09,207.5 1682.09,207.5 1684.09,207.5 1686.09,207.5 1688.09,207.5 1690.09,207.5 1692.09,207.5 1694.09,207.5 1696.09,207.5 1698.09,207.5 1700.09,207.5 1702.09,207.5 1704.09,207.5 1706.09,207.5 1708.09,207.5 1710.09,207.5 1712.09,207.5 1714.09,207.5 1716.09,207.5 1718.09,207.5 1720.09,207.5 1722.09,207.5 1724.09,207.5 1726.09,207.5 1728.09,207.5 1730.09,207.5 1732.09,207.5 1734.09,207.5 1736.09,207.5 1738.09,207.5 1740.09,207.5 1742.09,207.5 1744.09,207.5 1746.09,207.5 1748.09,207.5 1750.09,207.5" fill="none" stroke="#1fc5d3" stroke-width="3" stroke-linejoin="round" shape-rendering="crispEdges"/><polyline points="1401.09,212.5 1401.59,212.5 1402.09,211.5 1402.59,211.5 1403.09,210.5 1403.59,210.5 1404.09,209.5 1404.59,209.5 1405.09,209.5 1405.59,209.5 1406.09,208.5 1406.59,208.5 1407.09,208.5 1407.59,208.5 1408.09,207.5 1408.59,207.5 1409.09,207.5 1409.59,207.5 1410.09,207.5 1410.59,207.5 1411.09,207.5 1411.59,207.5 1412.09,207.5 1412.59,207.5 1413.09,206.5 1413.59,206.5 1414.09,206.5 1414.59,206.5 1415.09,206.5 1415.59,206.5 1416.09,206.5 1416.59,206.5 1417.09,206.5 1417.59,206.5 1418.09,206.5 1418.59,206.5 1419.09,206.5 1419.59,206.5 1420.09,206.5 1422.09,206.5 1424.09,206.5 1426.09,206.5 1428.09,206.5 1430.09,206.5 1432.09,206.5 1434.09,206.5 1436.09,206.5 1438.09,206.5 1440.09,206.5 1442.09,206.5 1444.09,206.5 1446.09,206.5 1448.09,206.5 1450.09,206.5 1452.09,206.5 1454.09,206.5 1456.09,206.5 1458.09,206.5 1460.09,206.5 1462.09,206.5 1464.09,206.5 1466.09,206.5 1468.09,206.5 1470.09,206.5 1472.09,206.5 1474.09,206.5 1476.09,206.5 1478.09,206.5 1480.09,206.5 1482.09,206.5 1484.09,206.5 1486.09,206.5 1488.09,206.5 1490.09,206.5 1492.09,206.5 1494.09,206.5 1496.09,206.5 1498.09,206.5 1500.09,206.5 1502.09,206.5 1504.09,206.5 1506.09,206.5 1508.09,206.5 1510.09,206.5 1512.09,206.5 1514.09,206.5 1516.09,206.5 1518.09,206.5 1520.09,206.5 1522.09,206.5 1524.09,206.5 1526.09,206.5 1528.09,206.5 1530.09,206.5 1532.09,206.5 1534.09,206.5 1536.09,206.5 1538.09,206.5 1540.09,206.5 1542.09,206.5 1544.09,206.5 1546.09,206.5 1548.09,206.5 1550.09,206.5 1552.09,206.5 1554.09,206.5 1556.09,206.5 1558.09,206.5 1560.09,206.5 1562.09,206.5 1564.09,206.5 1566.09,206.5 1568.09,206.5 1570.09,206.5 1572.09,206.5 1574.09,206.5 1576.09,206.5 1578.09,206.5 1580.09,206.5 1582.09,206.5 1584.09,206.5 1586.09,206.5 1588.09,206.5 1590.09,206.5 1592.09,206.5 1594.09,206.5 1596.09,206.5 1598.09,206.5 1600.09,206.5 1602.09,206.5 1604.09,206.5 1606.09,206.5 1608.09,206.5 1610.09,206.5 1612.09,206.5 1614.09,206.5 1616.09,206.5 1618.09,206.5 1620.09,206.5 1622.09,206.5 1624.09,206.5 1626.09,206.5 1628.09,206.5 1630.09,206.5 1632.09,206.5 1634.09,206.5 1636.09,206.5 1638.09,206.5 1640.09,206.5 1642.09,206.5 1644.09,206.5 1646.09,206.5 1648.09,206.5 1650.09,206.5 1652.09,206.5 1654.09,206.5 1656.09,206.5 1658.09,206.5 1660.09,206.5 1662.09,206.5 1664.09,206.5 1666.09,206.5 1668.09,206.5 1670.09,206.5 1672.09,206.5 1674.09,206.5 1676.09,206.5 1678.09,206.5 1680.09,206.5 1682.09,206.5 1684.09,206.5 1686.09,206.5 1688.09,206.5 1690.09,206.5 1692.09,206.5 1694.09,206.5 1696.09,206.5 1698.09,206.5 1700.09,206.5 1702.09,206.5 1704.09,206.5 1706.09,206.5 1708.09,206.5 1710.09,206.5 1712.09,206.5 1714.09,206.5 1716.09,206.5 1718.09,206.5 1720.09,206.5 1722.09,206.5 1724.09,206.5 1726.09,206.5 1728.09,206.5 1730.09,206.5 1732.09,206.5 1734.09,206.5 1736.09,206.5 1738.09,206.5 1740.09,206.5 1742.09,206.5 1744.09,206.5 1746.09,206.5 1748.09,206.5 1750.09,206.5" fill="none" stroke="#000" stroke-opacity="0.28" stroke-width="1" shape-rendering="crispEdges"/><path d="M499.00 264.5L499.50 254.5M1400.59 264.5L1401.09 213.5" fill="none" stroke="#1fc5d3" stroke-width="1.5" stroke-linecap="round"/><path d="M4 262h1v1h-1zM8 262h1v1h-1zM30 262h1v1h-1zM36 262h1v1h-1zM58 266h1v1h-1zM61 262h1v1h-1zM116 266h1v1h-1zM120 266h1v1h-1zM154 266h1v1h-1zM165 266h1v1h-1zM184 266h1v1h-1zM191 262h1v1h-1zM195 266h1v1h-1zM203 262h1v1h-1zM235 262h1v1h-1zM247 266h1v1h-1zM256 262h1v1h-1zM303 266h1v1h-1zM342 266h1v1h-1zM379 266h1v1h-1zM380 262h1v1h-1zM434 262h1v1h-1zM439 266h1v1h-1zM464 266h1v1h-1zM477 262h1v1h-1zM484 262h1v1h-1zM524 253h1v1h-1zM589 262h1v1h-1zM605 259h1v1h-1zM606 259h1v1h-1zM611 259h1v1h-1zM622 263h1v1h-1zM626 260h1v1h-1zM629 260h1v1h-1zM651 260h1v1h-1zM658 260h1v1h-1zM710 265h1v1h-1zM722 265h1v1h-1zM731 265h1v1h-1zM752 262h1v1h-1zM770 262h1v1h-1zM774 266h1v1h-1zM815 266h1v1h-1zM867 266h1v1h-1zM890 262h1v1h-1zM904 266h1v1h-1zM918 266h1v1h-1zM924 262h1v1h-1zM940 262h1v1h-1zM947 266h1v1h-1zM950 266h1v1h-1zM953 262h1v1h-1zM964 262h1v1h-1zM995 266h1v1h-1zM1024 266h1v1h-1zM1057 262h1v1h-1zM1064 266h1v1h-1zM1098 266h1v1h-1zM1107 266h1v1h-1zM1120 266h1v1h-1zM1180 266h1v1h-1zM1183 266h1v1h-1zM1196 262h1v1h-1zM1200 262h1v1h-1zM1205 266h1v1h-1zM1231 262h1v1h-1zM1236 266h1v1h-1zM1254 266h1v1h-1zM1266 262h1v1h-1zM1273 266h1v1h-1zM1314 262h1v1h-1zM1342 266h1v1h-1zM1360 262h1v1h-1zM1385 266h1v1h-1zM1402 210h1v1h-1zM1419 205h1v1h-1zM1429 209h1v1h-1zM1439 205h1v1h-1zM1446 205h1v1h-1zM1457 205h1v1h-1zM1476 205h1v1h-1zM1505 205h1v1h-1zM1520 205h1v1h-1zM1554 205h1v1h-1zM1560 205h1v1h-1zM1575 205h1v1h-1zM1611 209h1v1h-1zM1621 205h1v1h-1zM1636 205h1v1h-1zM1644 209h1v1h-1zM1721 209h1v1h-1zM1723 209h1v1h-1zM1743 205h1v1h-1z" fill="#1fc5d3" opacity="0.75"/><polyline points="3,368.5 5,368.5 7,368.5 9,368.5 11,368.5 13,368.5 15,368.5 17,368.5 19,368.5 21,368.5 23,368.5 25,368.5 27,368.5 29,368.5 31,368.5 33,368.5 35,368.5 37,368.5 39,368.5 41,368.5 43,368.5 45,368.5 47,368.5 49,368.5 51,368.5 53,368.5 55,368.5 57,368.5 59,368.5 61,368.5 63,368.5 65,368.5 67,368.5 69,368.5 71,368.5 73,368.5 75,368.5 77,368.5 79,368.5 81,368.5 83,368.5 85,368.5 87,368.5 89,368.5 91,368.5 93,368.5 95,368.5 97,368.5 99,368.5 101,368.5 103,368.5 105,368.5 107,368.5 109,368.5 111,368.5 113,368.5 115,368.5 117,368.5 119,368.5 121,368.5 123,368.5 125,368.5 127,368.5 129,368.5 131,368.5 133,368.5 135,368.5 137,368.5 139,368.5 141,368.5 143,368.5 145,368.5 147,368.5 149,368.5 151,368.5 153,368.5 155,368.5 157,368.5 159,368.5 161,368.5 163,368.5 165,368.5 167,368.5 169,368.5 171,368.5 173,368.5 175,368.5 177,368.5 179,368.5 181,368.5 183,368.5 185,368.5 187,368.5 189,368.5 191,368.5 193,368.5 195,368.5 197,368.5 199,368.5 201,368.5 203,368.5 205,368.5 207,368.5 209,368.5 211,368.5 213,368.5 215,368.5 217,368.5 219,368.5 221,368.5 223,368.5 225,368.5 227,368.5 229,368.5 231,368.5 233,368.5 235,368.5 237,368.5 239,368.5 241,368.5 243,368.5 245,368.5 247,368.5 249,368.5 251,368.5 253,368.5 255,368.5 257,368.5 259,368.5 261,368.5 263,368.5 265,368.5 267,368.5 269,368.5 271,368.5 273,368.5 275,368.5 277,368.5 279,368.5 281,368.5 283,368.5 285,368.5 287,368.5 289,368.5 291,368.5 293,368.5 295,368.5 297,368.5 299,368.5 301,368.5 303,368.5 305,368.5 307,368.5 309,368.5 311,368.5 313,368.5 315,368.5 317,368.5 319,368.5 321,368.5 323,368.5 325,368.5 327,368.5 329,368.5 331,368.5 333,368.5 335,368.5 337,368.5 339,368.5 341,368.5 343,368.5 345,368.5 347,368.5 349,368.5 351,368.5 353,368.5 355,368.5 357,368.5 359,368.5 361,368.5 363,368.5 365,368.5 367,368.5 369,368.5 371,368.5 373,368.5 375,368.5 377,368.5 379,368.5 381,368.5 383,368.5 385,368.5 387,368.5 389,368.5 391,368.5 393,368.5 395,368.5 397,368.5 399,368.5 401,368.5 403,368.5 405,368.5 407,368.5 409,368.5 411,368.5 413,368.5 415,368.5 417,368.5 419,368.5 421,368.5 423,368.5 425,368.5 427,368.5 429,368.5 431,368.5 433,368.5 435,368.5 437,368.5 439,368.5 441,368.5 443,368.5 445,368.5 447,368.5 449,368.5 451,368.5 453,368.5 455,368.5 457,368.5 459,368.5 461,368.5 463,368.5 465,368.5 467,368.5 469,368.5 471,368.5 473,368.5 475,368.5 477,368.5 479,368.5 481,368.5 483,368.5 485,368.5 487,368.5 489,368.5 491,368.5 493,368.5 495,368.5 495.5,368.5 496,368.5 496.5,368.5 497,368.5 497.5,368.5 498,368.5 498.5,368.5 499,368.5" fill="none" stroke="#f03c60" stroke-width="3" stroke-linejoin="round" shape-rendering="crispEdges"/><polyline points="3,367.5 5,367.5 7,367.5 9,367.5 11,367.5 13,367.5 15,367.5 17,367.5 19,367.5 21,367.5 23,367.5 25,367.5 27,367.5 29,367.5 31,367.5 33,367.5 35,367.5 37,367.5 39,367.5 41,367.5 43,367.5 45,367.5 47,367.5 49,367.5 51,367.5 53,367.5 55,367.5 57,367.5 59,367.5 61,367.5 63,367.5 65,367.5 67,367.5 69,367.5 71,367.5 73,367.5 75,367.5 77,367.5 79,367.5 81,367.5 83,367.5 85,367.5 87,367.5 89,367.5 91,367.5 93,367.5 95,367.5 97,367.5 99,367.5 101,367.5 103,367.5 105,367.5 107,367.5 109,367.5 111,367.5 113,367.5 115,367.5 117,367.5 119,367.5 121,367.5 123,367.5 125,367.5 127,367.5 129,367.5 131,367.5 133,367.5 135,367.5 137,367.5 139,367.5 141,367.5 143,367.5 145,367.5 147,367.5 149,367.5 151,367.5 153,367.5 155,367.5 157,367.5 159,367.5 161,367.5 163,367.5 165,367.5 167,367.5 169,367.5 171,367.5 173,367.5 175,367.5 177,367.5 179,367.5 181,367.5 183,367.5 185,367.5 187,367.5 189,367.5 191,367.5 193,367.5 195,367.5 197,367.5 199,367.5 201,367.5 203,367.5 205,367.5 207,367.5 209,367.5 211,367.5 213,367.5 215,367.5 217,367.5 219,367.5 221,367.5 223,367.5 225,367.5 227,367.5 229,367.5 231,367.5 233,367.5 235,367.5 237,367.5 239,367.5 241,367.5 243,367.5 245,367.5 247,367.5 249,367.5 251,367.5 253,367.5 255,367.5 257,367.5 259,367.5 261,367.5 263,367.5 265,367.5 267,367.5 269,367.5 271,367.5 273,367.5 275,367.5 277,367.5 279,367.5 281,367.5 283,367.5 285,367.5 287,367.5 289,367.5 291,367.5 293,367.5 295,367.5 297,367.5 299,367.5 301,367.5 303,367.5 305,367.5 307,367.5 309,367.5 311,367.5 313,367.5 315,367.5 317,367.5 319,367.5 321,367.5 323,367.5 325,367.5 327,367.5 329,367.5 331,367.5 333,367.5 335,367.5 337,367.5 339,367.5 341,367.5 343,367.5 345,367.5 347,367.5 349,367.5 351,367.5 353,367.5 355,367.5 357,367.5 359,367.5 361,367.5 363,367.5 365,367.5 367,367.5 369,367.5 371,367.5 373,367.5 375,367.5 377,367.5 379,367.5 381,367.5 383,367.5 385,367.5 387,367.5 389,367.5 391,367.5 393,367.5 395,367.5 397,367.5 399,367.5 401,367.5 403,367.5 405,367.5 407,367.5 409,367.5 411,367.5 413,367.5 415,367.5 417,367.5 419,367.5 421,367.5 423,367.5 425,367.5 427,367.5 429,367.5 431,367.5 433,367.5 435,367.5 437,367.5 439,367.5 441,367.5 443,367.5 445,367.5 447,367.5 449,367.5 451,367.5 453,367.5 455,367.5 457,367.5 459,367.5 461,367.5 463,367.5 465,367.5 467,367.5 469,367.5 471,367.5 473,367.5 475,367.5 477,367.5 479,367.5 481,367.5 483,367.5 485,367.5 487,367.5 489,367.5 491,367.5 493,367.5 495,367.5 495.5,367.5 496,367.5 496.5,367.5 497,367.5 497.5,367.5 498,367.5 498.5,367.5 499,367.5" fill="none" stroke="#000" stroke-opacity="0.28" stroke-width="1" shape-rendering="crispEdges"/><polyline points="499.5,336.5 500,335.5 500.5,335.5 501,334.5 501.5,334.5 502,333.5 502.5,333.5 503,332.5 503.5,332.5 504,332.5 504.5,331.5 505,331.5 505.5,330.5 506,330.5 506.5,330.5 507,329.5 507.5,329.5 508,329.5 508.5,328.5 509,328.5 509.5,328.5 510,327.5 510.5,327.5 511,327.5 511.5,326.5 512,326.5 512.5,326.5 513,326.5 513.5,325.5 514,325.5 514.5,325.5 515,324.5 515.5,324.5 516,324.5 516.5,324.5 517,323.5 517.5,323.5 518,323.5 518.5,323.5 519,323.5 519.5,322.5 520,322.5 520.5,322.5 521,322.5 521.5,322.5 522,321.5 522.5,321.5 523,321.5 523.5,321.5 524,321.5 524.5,320.5 525,320.5 525.5,320.5 526,320.5 526.5,320.5 527,320.5 527.5,319.5 528,319.5 528.5,319.5 529,319.5 529.5,319.5 530,319.5 530.5,318.5 531,318.5 531.5,318.5 532,318.5 532.5,318.5 533,318.5 533.5,318.5 534,318.5 534.5,317.5 535,317.5 535.5,317.5 536,317.5 536.5,317.5 537,317.5 537.5,317.5 538,317.5 538.5,317.5 539,316.5 539.5,316.5 540,316.5 540.5,316.5 541,316.5 541.5,316.5 542,316.5 542.5,316.5 543,316.5 543.5,316.5 544,316.5 544.5,315.5 545,315.5 545.5,315.5 546,315.5 546.5,315.5 547,315.5 547.5,315.5 548,315.5 548.5,315.5 549,315.5 549.5,315.5 550,315.5 550.5,315.5 551,315.5 551.5,314.5 552,314.5 552.5,314.5 553,314.5 553.5,314.5 554,314.5 554.5,314.5 555,314.5 555.5,314.5 556,314.5 556.5,314.5 557,314.5 557.5,314.5 558,314.5 558.5,314.5 559,314.5 559.5,314.5 560,314.5 560.5,313.5 561,313.5 561.5,313.5 562,313.5 562.5,313.5 563,313.5 563.5,313.5 564,313.5 564.5,313.5 565,313.5 565.5,313.5 566,313.5 566.5,313.5 567,313.5 567.5,313.5 568,313.5 568.5,313.5 569,313.5 569.5,313.5 570,313.5 570.5,313.5 571,313.5 571.5,313.5 572,313.5 572.5,313.5 573,313.5 573.5,313.5 574,313.5 574.5,312.5 575,312.5 575.5,312.5 576,312.5 576.5,312.5 577,312.5 577.5,312.5 578,312.5 578.5,312.5 579,312.5 579.5,312.5 580,312.5 580.5,312.5 581,312.5 581.5,312.5 582,312.5 582.5,312.5 583,312.5 583.5,312.5 584,312.5 584.5,312.5 585,312.5 585.5,312.5 586,312.5 586.5,312.5 587,312.5 587.5,312.5 588,312.5 588.5,312.5 589,312.5 589.5,312.5 590,312.5 590.5,312.5 591,312.5 591.5,312.5 592,312.5 592.5,312.5 593,312.5 593.5,312.5 594,312.5 594.5,312.5 595,312.5 595.5,312.5 596,312.5 596.5,312.5 597,312.5 597.5,312.5 598,312.5 598.5,312.5 599,312.5 599.5,312.5 600,312.5 600.5,312.5 601,312.5 601.5,312.5 602,311.5 602.5,311.5 603,311.5 603.5,311.5 604,311.5 604.5,311.5 605,311.5 605.5,311.5 606,311.5 606.5,311.5 607,311.5 607.5,311.5 608,311.5 608.5,311.5 609,311.5 609.5,311.5 610,311.5 610.5,311.5 611,311.5 611.5,311.5 612,311.5 612.5,311.5 613,311.5 613.5,311.5 614,311.5 614.5,311.5 615,311.5 615.5,311.5 616,311.5 616.5,311.5 617,311.5 617.5,311.5 618,311.5 618.5,311.5 619,311.5 619.5,311.5 620,311.5 620.5,311.5 622.5,311.5 624.5,311.5 626.5,311.5 628.5,311.5 630.5,311.5 632.5,311.5 634.5,311.5 636.5,311.5 638.5,311.5 640.5,311.5 642.5,311.5 644.5,311.5 646.5,311.5 648.5,311.5 650.5,311.5 652.5,311.5 654.5,311.5 656.5,311.5 658.5,311.5 660.5,311.5 662.5,311.5 664.5,311.5 666.5,311.5 668.5,311.5 670.5,311.5 672.5,311.5 674.5,311.5 676.5,311.5 678.5,311.5 680.5,311.5 682.5,311.5 684.5,311.5 686.5,311.5 688.5,311.5 690.5,311.5 692.5,311.5 694.5,311.5 696.5,311.5 698.5,311.5 700.5,311.5 702.5,311.5 704.5,311.5 706.5,311.5 708.5,311.5 710.5,311.5 712.5,311.5 714.5,311.5 716.5,311.5 718.5,311.5 720.5,311.5 722.5,311.5 724.5,311.5 726.5,311.5 728.5,311.5 730.5,311.5 732.5,311.5 734.5,311.5 736.5,311.5 738.5,311.5 740.5,311.5 742.5,310.5 744.5,310.5 746.5,310.5 748.5,310.5 750.5,310.5 752.5,310.5 754.5,310.5 756.5,310.5 758.5,310.5 760.5,310.5 762.5,310.5 764.5,310.5 766.5,310.5 768.5,310.5 770.5,310.5 772.5,310.5 774.5,310.5 776.5,310.5 778.5,310.5 780.5,310.5 782.5,310.5 784.5,310.5 786.5,310.5 788.5,310.5 790.5,310.5 792.5,310.5 794.5,310.5 796.5,310.5 798.5,310.5 800.5,310.5 802.5,310.5 804.5,310.5 806.5,310.5 808.5,310.5 810.5,310.5 812.5,310.5 814.5,310.5 816.5,310.5 818.5,310.5 820.5,310.5 822.5,310.5 824.5,310.5 826.5,310.5 828.5,310.5 830.5,310.5 832.5,310.5 834.5,310.5 836.5,310.5 838.5,310.5 840.5,310.5 842.5,310.5 844.5,310.5 846.5,310.5 848.5,310.5 850.5,310.5 852.5,310.5 854.5,310.5 856.5,310.5 858.5,310.5 860.5,310.5 862.5,310.5 864.5,310.5 866.5,310.5 868.5,310.5 870.5,310.5 872.5,310.5 874.5,310.5 876.5,310.5 878.5,310.5 880.5,310.5 882.5,310.5 884.5,310.5 886.5,310.5 888.5,310.5 890.5,310.5 892.5,310.5 894.5,310.5 896.5,310.5 898.5,310.5 900.5,310.5 902.5,310.5 904.5,310.5 906.5,310.5 908.5,310.5 910.5,310.5 912.5,310.5 914.5,310.5 916.5,310.5 918.5,310.5 920.5,310.5 922.5,310.5 924.5,310.5 926.5,310.5 928.5,310.5 930.5,310.5 932.5,310.5 934.5,310.5 936.5,310.5 938.5,310.5 940.5,310.5 942.5,310.5 944.5,310.5 946.5,310.5 948.5,310.5 950.5,310.5 952.5,310.5 954.5,310.5 956.5,310.5 958.5,310.5 960.5,310.5 962.5,310.5 964.5,310.5 966.5,310.5 968.5,310.5 970.5,310.5 972.5,310.5 974.5,310.5 976.5,310.5 978.5,310.5 980.5,310.5 982.5,310.5 984.5,310.5 986.5,310.5 988.5,310.5 990.5,310.5 992.5,310.5 994.5,310.5 996.5,310.5 998.5,310.5 1000.5,310.5 1002.5,310.5 1004.5,310.5 1006.5,310.5 1008.5,310.5 1010.5,310.5 1012.5,310.5 1014.5,310.5 1016.5,310.5 1018.5,310.5 1020.5,310.5 1022.5,310.5 1024.5,310.5 1026.5,310.5 1028.5,310.5 1030.5,310.5 1032.5,310.5 1034.5,310.5 1036.5,310.5 1038.5,310.5 1040.5,310.5 1042.5,310.5 1044.5,310.5 1046.5,310.5 1048.5,310.5 1050.5,310.5 1052.5,310.5 1054.5,310.5 1056.5,310.5 1058.5,310.5 1060.5,310.5 1062.5,310.5 1064.5,310.5 1066.5,310.5 1068.5,310.5 1070.5,310.5 1072.5,310.5 1074.5,310.5 1076.5,310.5 1078.5,310.5 1080.5,310.5 1082.5,310.5 1084.5,310.5 1086.5,310.5 1088.5,310.5 1090.5,310.5 1092.5,310.5 1094.5,310.5 1096.5,310.5 1098.5,310.5 1100.5,310.5 1102.5,310.5 1104.5,310.5 1106.5,310.5 1108.5,310.5 1110.5,310.5 1112.5,310.5 1114.5,310.5 1116.5,310.5 1118.5,310.5 1120.5,310.5 1122.5,310.5 1124.5,310.5 1126.5,310.5 1128.5,310.5 1130.5,310.5 1132.5,310.5 1134.5,310.5 1136.5,310.5 1138.5,310.5 1140.5,310.5 1142.5,310.5 1144.5,310.5 1146.5,310.5 1148.5,310.5 1150.5,310.5 1152.5,310.5 1154.5,310.5 1156.5,310.5 1158.5,310.5 1160.5,310.5 1162.5,310.5 1164.5,310.5 1166.5,310.5 1168.5,310.5 1170.5,310.5 1172.5,310.5 1174.5,310.5 1176.5,310.5 1178.5,310.5 1180.5,310.5 1182.5,310.5 1184.5,310.5 1186.5,310.5 1188.5,310.5 1190.5,310.5 1192.5,310.5 1194.5,310.5 1196.5,310.5 1198.5,310.5 1200.5,310.5 1202.5,310.5 1204.5,310.5 1206.5,310.5 1208.5,310.5 1210.5,310.5 1212.5,310.5 1214.5,310.5 1216.5,310.5 1218.5,310.5 1220.5,310.5 1222.5,310.5 1224.5,310.5 1226.5,310.5 1228.5,310.5 1230.5,310.5 1232.5,310.5 1234.5,310.5 1236.5,310.5 1238.5,310.5 1240.5,310.5 1242.5,310.5 1244.5,310.5 1246.5,310.5 1248.5,310.5 1250.5,310.5 1252.5,310.5 1254.5,310.5 1256.5,310.5 1258.5,310.5 1260.5,310.5 1262.5,310.5 1264.5,310.5 1266.5,310.5 1268.5,310.5 1270.5,310.5 1272.5,310.5 1274.5,310.5 1276.5,310.5 1278.5,310.5 1280.5,310.5 1282.5,310.5 1284.5,310.5 1286.5,310.5 1288.5,310.5 1290.5,310.5 1292.5,310.5 1294.5,310.5 1296.5,310.5 1298.5,310.5 1300.5,310.5 1302.5,310.5 1304.5,310.5 1306.5,310.5 1308.5,310.5 1310.5,310.5 1312.5,310.5 1314.5,310.5 1316.5,310.5 1318.5,310.5 1320.5,310.5 1322.5,310.5 1324.5,310.5 1326.5,310.5 1328.5,310.5 1330.5,310.5 1332.5,310.5 1334.5,310.5 1336.5,310.5 1338.5,310.5 1340.5,310.5 1342.5,310.5 1344.5,310.5 1346.5,310.5 1348.5,310.5 1350.5,310.5 1352.5,310.5 1354.5,310.5 1356.5,310.5 1358.5,310.5 1360.5,310.5 1362.5,310.5 1364.5,310.5 1366.5,310.5 1368.5,310.5 1370.5,310.5 1372.5,310.5 1374.5,310.5 1376.5,310.5 1378.5,310.5 1380.5,310.5 1382.5,310.5 1384.5,310.5 1386.5,310.5 1388.5,310.5 1390.5,310.5 1392.5,310.5 1394.5,310.5 1396.5,310.5 1397,310.5 1397.5,310.5 1398,310.5 1398.5,310.5 1399,310.5 1399.5,310.5 1400,310.5 1400.5,310.5 1400.59,310.5 1401.09,310.5 1401.59,310.5 1402.09,310.5 1402.59,310.5 1403.09,310.5 1403.59,310.5 1404.09,310.5 1404.59,310.5 1405.09,310.5 1405.59,310.5 1406.09,310.5 1406.59,310.5 1407.09,310.5 1407.59,310.5 1408.09,310.5 1408.59,310.5 1409.09,310.5 1409.59,310.5 1410.09,310.5 1410.59,310.5 1411.09,310.5 1411.59,310.5 1412.09,310.5 1412.59,310.5 1413.09,310.5 1413.59,310.5 1414.09,310.5 1414.59,310.5 1415.09,310.5 1415.59,310.5 1416.09,310.5 1416.59,310.5 1417.09,310.5 1417.59,310.5 1418.09,310.5 1418.59,310.5 1419.09,310.5 1419.59,310.5 1420.09,310.5 1422.09,310.5 1424.09,310.5 1426.09,310.5 1428.09,310.5 1430.09,310.5 1432.09,310.5 1434.09,310.5 1436.09,310.5 1438.09,310.5 1440.09,310.5 1442.09,310.5 1444.09,310.5 1446.09,310.5 1448.09,310.5 1450.09,310.5 1452.09,310.5 1454.09,310.5 1456.09,310.5 1458.09,310.5 1460.09,310.5 1462.09,310.5 1464.09,310.5 1466.09,310.5 1468.09,310.5 1470.09,310.5 1472.09,310.5 1474.09,310.5 1476.09,310.5 1478.09,310.5 1480.09,310.5 1482.09,310.5 1484.09,310.5 1486.09,310.5 1488.09,310.5 1490.09,310.5 1492.09,310.5 1494.09,310.5 1496.09,310.5 1498.09,310.5 1500.09,310.5 1502.09,310.5 1504.09,310.5 1506.09,310.5 1508.09,310.5 1510.09,310.5 1512.09,310.5 1514.09,310.5 1516.09,310.5 1518.09,310.5 1520.09,310.5 1522.09,310.5 1524.09,310.5 1526.09,310.5 1528.09,310.5 1530.09,310.5 1532.09,310.5 1534.09,310.5 1536.09,310.5 1538.09,310.5 1540.09,310.5 1542.09,310.5 1544.09,310.5 1546.09,310.5 1548.09,310.5 1550.09,310.5 1552.09,310.5 1554.09,310.5 1556.09,310.5 1558.09,310.5 1560.09,310.5 1562.09,310.5 1564.09,310.5 1566.09,310.5 1568.09,310.5 1570.09,310.5 1572.09,310.5 1574.09,310.5 1576.09,310.5 1578.09,310.5 1580.09,310.5 1582.09,310.5 1584.09,310.5 1586.09,310.5 1588.09,310.5 1590.09,310.5 1592.09,310.5 1594.09,310.5 1596.09,310.5 1598.09,310.5 1600.09,310.5 1602.09,310.5 1604.09,310.5 1606.09,310.5 1608.09,310.5 1610.09,310.5 1612.09,310.5 1614.09,310.5 1616.09,310.5 1618.09,310.5 1620.09,310.5 1622.09,310.5 1624.09,310.5 1626.09,310.5 1628.09,310.5 1630.09,310.5 1632.09,310.5 1634.09,310.5 1636.09,310.5 1638.09,310.5 1640.09,310.5 1642.09,310.5 1644.09,310.5 1646.09,310.5 1648.09,310.5 1650.09,310.5 1652.09,310.5 1654.09,310.5 1656.09,310.5 1658.09,310.5 1660.09,310.5 1662.09,310.5 1664.09,310.5 1666.09,310.5 1668.09,310.5 1670.09,310.5 1672.09,310.5 1674.09,310.5 1676.09,310.5 1678.09,310.5 1680.09,310.5 1682.09,310.5 1684.09,310.5 1686.09,310.5 1688.09,310.5 1690.09,310.5 1692.09,310.5 1694.09,310.5 1696.09,310.5 1698.09,310.5 1700.09,310.5 1702.09,310.5 1704.09,310.5 1706.09,310.5 1708.09,310.5 1710.09,310.5 1712.09,310.5 1714.09,310.5 1716.09,310.5 1718.09,310.5 1720.09,310.5 1722.09,310.5 1724.09,310.5 1726.09,310.5 1728.09,310.5 1730.09,310.5 1732.09,310.5 1734.09,310.5 1736.09,310.5 1738.09,310.5 1740.09,310.5 1742.09,310.5 1744.09,310.5 1746.09,310.5 1748.09,310.5 1750.09,310.5" fill="none" stroke="#f03c60" stroke-width="3" stroke-linejoin="round" shape-rendering="crispEdges"/><polyline points="499.5,335.5 500,334.5 500.5,334.5 501,333.5 501.5,333.5 502,332.5 502.5,332.5 503,331.5 503.5,331.5 504,331.5 504.5,330.5 505,330.5 505.5,329.5 506,329.5 506.5,329.5 507,328.5 507.5,328.5 508,328.5 508.5,327.5 509,327.5 509.5,327.5 510,326.5 510.5,326.5 511,326.5 511.5,325.5 512,325.5 512.5,325.5 513,325.5 513.5,324.5 514,324.5 514.5,324.5 515,323.5 515.5,323.5 516,323.5 516.5,323.5 517,322.5 517.5,322.5 518,322.5 518.5,322.5 519,322.5 519.5,321.5 520,321.5 520.5,321.5 521,321.5 521.5,321.5 522,320.5 522.5,320.5 523,320.5 523.5,320.5 524,320.5 524.5,319.5 525,319.5 525.5,319.5 526,319.5 526.5,319.5 527,319.5 527.5,318.5 528,318.5 528.5,318.5 529,318.5 529.5,318.5 530,318.5 530.5,317.5 531,317.5 531.5,317.5 532,317.5 532.5,317.5 533,317.5 533.5,317.5 534,317.5 534.5,316.5 535,316.5 535.5,316.5 536,316.5 536.5,316.5 537,316.5 537.5,316.5 538,316.5 538.5,316.5 539,315.5 539.5,315.5 540,315.5 540.5,315.5 541,315.5 541.5,315.5 542,315.5 542.5,315.5 543,315.5 543.5,315.5 544,315.5 544.5,314.5 545,314.5 545.5,314.5 546,314.5 546.5,314.5 547,314.5 547.5,314.5 548,314.5 548.5,314.5 549,314.5 549.5,314.5 550,314.5 550.5,314.5 551,314.5 551.5,313.5 552,313.5 552.5,313.5 553,313.5 553.5,313.5 554,313.5 554.5,313.5 555,313.5 555.5,313.5 556,313.5 556.5,313.5 557,313.5 557.5,313.5 558,313.5 558.5,313.5 559,313.5 559.5,313.5 560,313.5 560.5,312.5 561,312.5 561.5,312.5 562,312.5 562.5,312.5 563,312.5 563.5,312.5 564,312.5 564.5,312.5 565,312.5 565.5,312.5 566,312.5 566.5,312.5 567,312.5 567.5,312.5 568,312.5 568.5,312.5 569,312.5 569.5,312.5 570,312.5 570.5,312.5 571,312.5 571.5,312.5 572,312.5 572.5,312.5 573,312.5 573.5,312.5 574,312.5 574.5,311.5 575,311.5 575.5,311.5 576,311.5 576.5,311.5 577,311.5 577.5,311.5 578,311.5 578.5,311.5 579,311.5 579.5,311.5 580,311.5 580.5,311.5 581,311.5 581.5,311.5 582,311.5 582.5,311.5 583,311.5 583.5,311.5 584,311.5 584.5,311.5 585,311.5 585.5,311.5 586,311.5 586.5,311.5 587,311.5 587.5,311.5 588,311.5 588.5,311.5 589,311.5 589.5,311.5 590,311.5 590.5,311.5 591,311.5 591.5,311.5 592,311.5 592.5,311.5 593,311.5 593.5,311.5 594,311.5 594.5,311.5 595,311.5 595.5,311.5 596,311.5 596.5,311.5 597,311.5 597.5,311.5 598,311.5 598.5,311.5 599,311.5 599.5,311.5 600,311.5 600.5,311.5 601,311.5 601.5,311.5 602,310.5 602.5,310.5 603,310.5 603.5,310.5 604,310.5 604.5,310.5 605,310.5 605.5,310.5 606,310.5 606.5,310.5 607,310.5 607.5,310.5 608,310.5 608.5,310.5 609,310.5 609.5,310.5 610,310.5 610.5,310.5 611,310.5 611.5,310.5 612,310.5 612.5,310.5 613,310.5 613.5,310.5 614,310.5 614.5,310.5 615,310.5 615.5,310.5 616,310.5 616.5,310.5 617,310.5 617.5,310.5 618,310.5 618.5,310.5 619,310.5 619.5,310.5 620,310.5 620.5,310.5 622.5,310.5 624.5,310.5 626.5,310.5 628.5,310.5 630.5,310.5 632.5,310.5 634.5,310.5 636.5,310.5 638.5,310.5 640.5,310.5 642.5,310.5 644.5,310.5 646.5,310.5 648.5,310.5 650.5,310.5 652.5,310.5 654.5,310.5 656.5,310.5 658.5,310.5 660.5,310.5 662.5,310.5 664.5,310.5 666.5,310.5 668.5,310.5 670.5,310.5 672.5,310.5 674.5,310.5 676.5,310.5 678.5,310.5 680.5,310.5 682.5,310.5 684.5,310.5 686.5,310.5 688.5,310.5 690.5,310.5 692.5,310.5 694.5,310.5 696.5,310.5 698.5,310.5 700.5,310.5 702.5,310.5 704.5,310.5 706.5,310.5 708.5,310.5 710.5,310.5 712.5,310.5 714.5,310.5 716.5,310.5 718.5,310.5 720.5,310.5 722.5,310.5 724.5,310.5 726.5,310.5 728.5,310.5 730.5,310.5 732.5,310.5 734.5,310.5 736.5,310.5 738.5,310.5 740.5,310.5 742.5,309.5 744.5,309.5 746.5,309.5 748.5,309.5 750.5,309.5 752.5,309.5 754.5,309.5 756.5,309.5 758.5,309.5 760.5,309.5 762.5,309.5 764.5,309.5 766.5,309.5 768.5,309.5 770.5,309.5 772.5,309.5 774.5,309.5 776.5,309.5 778.5,309.5 780.5,309.5 782.5,309.5 784.5,309.5 786.5,309.5 788.5,309.5 790.5,309.5 792.5,309.5 794.5,309.5 796.5,309.5 798.5,309.5 800.5,309.5 802.5,309.5 804.5,309.5 806.5,309.5 808.5,309.5 810.5,309.5 812.5,309.5 814.5,309.5 816.5,309.5 818.5,309.5 820.5,309.5 822.5,309.5 824.5,309.5 826.5,309.5 828.5,309.5 830.5,309.5 832.5,309.5 834.5,309.5 836.5,309.5 838.5,309.5 840.5,309.5 842.5,309.5 844.5,309.5 846.5,309.5 848.5,309.5 850.5,309.5 852.5,309.5 854.5,309.5 856.5,309.5 858.5,309.5 860.5,309.5 862.5,309.5 864.5,309.5 866.5,309.5 868.5,309.5 870.5,309.5 872.5,309.5 874.5,309.5 876.5,309.5 878.5,309.5 880.5,309.5 882.5,309.5 884.5,309.5 886.5,309.5 888.5,309.5 890.5,309.5 892.5,309.5 894.5,309.5 896.5,309.5 898.5,309.5 900.5,309.5 902.5,309.5 904.5,309.5 906.5,309.5 908.5,309.5 910.5,309.5 912.5,309.5 914.5,309.5 916.5,309.5 918.5,309.5 920.5,309.5 922.5,309.5 924.5,309.5 926.5,309.5 928.5,309.5 930.5,309.5 932.5,309.5 934.5,309.5 936.5,309.5 938.5,309.5 940.5,309.5 942.5,309.5 944.5,309.5 946.5,309.5 948.5,309.5 950.5,309.5 952.5,309.5 954.5,309.5 956.5,309.5 958.5,309.5 960.5,309.5 962.5,309.5 964.5,309.5 966.5,309.5 968.5,309.5 970.5,309.5 972.5,309.5 974.5,309.5 976.5,309.5 978.5,309.5 980.5,309.5 982.5,309.5 984.5,309.5 986.5,309.5 988.5,309.5 990.5,309.5 992.5,309.5 994.5,309.5 996.5,309.5 998.5,309.5 1000.5,309.5 1002.5,309.5 1004.5,309.5 1006.5,309.5 1008.5,309.5 1010.5,309.5 1012.5,309.5 1014.5,309.5 1016.5,309.5 1018.5,309.5 1020.5,309.5 1022.5,309.5 1024.5,309.5 1026.5,309.5 1028.5,309.5 1030.5,309.5 1032.5,309.5 1034.5,309.5 1036.5,309.5 1038.5,309.5 1040.5,309.5 1042.5,309.5 1044.5,309.5 1046.5,309.5 1048.5,309.5 1050.5,309.5 1052.5,309.5 1054.5,309.5 1056.5,309.5 1058.5,309.5 1060.5,309.5 1062.5,309.5 1064.5,309.5 1066.5,309.5 1068.5,309.5 1070.5,309.5 1072.5,309.5 1074.5,309.5 1076.5,309.5 1078.5,309.5 1080.5,309.5 1082.5,309.5 1084.5,309.5 1086.5,309.5 1088.5,309.5 1090.5,309.5 1092.5,309.5 1094.5,309.5 1096.5,309.5 1098.5,309.5 1100.5,309.5 1102.5,309.5 1104.5,309.5 1106.5,309.5 1108.5,309.5 1110.5,309.5 1112.5,309.5 1114.5,309.5 1116.5,309.5 1118.5,309.5 1120.5,309.5 1122.5,309.5 1124.5,309.5 1126.5,309.5 1128.5,309.5 1130.5,309.5 1132.5,309.5 1134.5,309.5 1136.5,309.5 1138.5,309.5 1140.5,309.5 1142.5,309.5 1144.5,309.5 1146.5,309.5 1148.5,309.5 1150.5,309.5 1152.5,309.5 1154.5,309.5 1156.5,309.5 1158.5,309.5 1160.5,309.5 1162.5,309.5 1164.5,309.5 1166.5,309.5 1168.5,309.5 1170.5,309.5 1172.5,309.5 1174.5,309.5 1176.5,309.5 1178.5,309.5 1180.5,309.5 1182.5,309.5 1184.5,309.5 1186.5,309.5 1188.5,309.5 1190.5,309.5 1192.5,309.5 1194.5,309.5 1196.5,309.5 1198.5,309.5 1200.5,309.5 1202.5,309.5 1204.5,309.5 1206.5,309.5 1208.5,309.5 1210.5,309.5 1212.5,309.5 1214.5,309.5 1216.5,309.5 1218.5,309.5 1220.5,309.5 1222.5,309.5 1224.5,309.5 1226.5,309.5 1228.5,309.5 1230.5,309.5 1232.5,309.5 1234.5,309.5 1236.5,309.5 1238.5,309.5 1240.5,309.5 1242.5,309.5 1244.5,309.5 1246.5,309.5 1248.5,309.5 1250.5,309.5 1252.5,309.5 1254.5,309.5 1256.5,309.5 1258.5,309.5 1260.5,309.5 1262.5,309.5 1264.5,309.5 1266.5,309.5 1268.5,309.5 1270.5,309.5 1272.5,309.5 1274.5,309.5 1276.5,309.5 1278.5,309.5 1280.5,309.5 1282.5,309.5 1284.5,309.5 1286.5,309.5 1288.5,309.5 1290.5,309.5 1292.5,309.5 1294.5,309.5 1296.5,309.5 1298.5,309.5 1300.5,309.5 1302.5,309.5 1304.5,309.5 1306.5,309.5 1308.5,309.5 1310.5,309.5 1312.5,309.5 1314.5,309.5 1316.5,309.5 1318.5,309.5 1320.5,309.5 1322.5,309.5 1324.5,309.5 1326.5,309.5 1328.5,309.5 1330.5,309.5 1332.5,309.5 1334.5,309.5 1336.5,309.5 1338.5,309.5 1340.5,309.5 1342.5,309.5 1344.5,309.5 1346.5,309.5 1348.5,309.5 1350.5,309.5 1352.5,309.5 1354.5,309.5 1356.5,309.5 1358.5,309.5 1360.5,309.5 1362.5,309.5 1364.5,309.5 1366.5,309.5 1368.5,309.5 1370.5,309.5 1372.5,309.5 1374.5,309.5 1376.5,309.5 1378.5,309.5 1380.5,309.5 1382.5,309.5 1384.5,309.5 1386.5,309.5 1388.5,309.5 1390.5,309.5 1392.5,309.5 1394.5,309.5 1396.5,309.5 1397,309.5 1397.5,309.5 1398,309.5 1398.5,309.5 1399,309.5 1399.5,309.5 1400,309.5 1400.5,309.5 1400.59,309.5 1401.09,309.5 1401.59,309.5 1402.09,309.5 1402.59,309.5 1403.09,309.5 1403.59,309.5 1404.09,309.5 1404.59,309.5 1405.09,309.5 1405.59,309.5 1406.09,309.5 1406.59,309.5 1407.09,309.5 1407.59,309.5 1408.09,309.5 1408.59,309.5 1409.09,309.5 1409.59,309.5 1410.09,309.5 1410.59,309.5 1411.09,309.5 1411.59,309.5 1412.09,309.5 1412.59,309.5 1413.09,309.5 1413.59,309.5 1414.09,309.5 1414.59,309.5 1415.09,309.5 1415.59,309.5 1416.09,309.5 1416.59,309.5 1417.09,309.5 1417.59,309.5 1418.09,309.5 1418.59,309.5 1419.09,309.5 1419.59,309.5 1420.09,309.5 1422.09,309.5 1424.09,309.5 1426.09,309.5 1428.09,309.5 1430.09,309.5 1432.09,309.5 1434.09,309.5 1436.09,309.5 1438.09,309.5 1440.09,309.5 1442.09,309.5 1444.09,309.5 1446.09,309.5 1448.09,309.5 1450.09,309.5 1452.09,309.5 1454.09,309.5 1456.09,309.5 1458.09,309.5 1460.09,309.5 1462.09,309.5 1464.09,309.5 1466.09,309.5 1468.09,309.5 1470.09,309.5 1472.09,309.5 1474.09,309.5 1476.09,309.5 1478.09,309.5 1480.09,309.5 1482.09,309.5 1484.09,309.5 1486.09,309.5 1488.09,309.5 1490.09,309.5 1492.09,309.5 1494.09,309.5 1496.09,309.5 1498.09,309.5 1500.09,309.5 1502.09,309.5 1504.09,309.5 1506.09,309.5 1508.09,309.5 1510.09,309.5 1512.09,309.5 1514.09,309.5 1516.09,309.5 1518.09,309.5 1520.09,309.5 1522.09,309.5 1524.09,309.5 1526.09,309.5 1528.09,309.5 1530.09,309.5 1532.09,309.5 1534.09,309.5 1536.09,309.5 1538.09,309.5 1540.09,309.5 1542.09,309.5 1544.09,309.5 1546.09,309.5 1548.09,309.5 1550.09,309.5 1552.09,309.5 1554.09,309.5 1556.09,309.5 1558.09,309.5 1560.09,309.5 1562.09,309.5 1564.09,309.5 1566.09,309.5 1568.09,309.5 1570.09,309.5 1572.09,309.5 1574.09,309.5 1576.09,309.5 1578.09,309.5 1580.09,309.5 1582.09,309.5 1584.09,309.5 1586.09,309.5 1588.09,309.5 1590.09,309.5 1592.09,309.5 1594.09,309.5 1596.09,309.5 1598.09,309.5 1600.09,309.5 1602.09,309.5 1604.09,309.5 1606.09,309.5 1608.09,309.5 1610.09,309.5 1612.09,309.5 1614.09,309.5 1616.09,309.5 1618.09,309.5 1620.09,309.5 1622.09,309.5 1624.09,309.5 1626.09,309.5 1628.09,309.5 1630.09,309.5 1632.09,309.5 1634.09,309.5 1636.09,309.5 1638.09,309.5 1640.09,309.5 1642.09,309.5 1644.09,309.5 1646.09,309.5 1648.09,309.5 1650.09,309.5 1652.09,309.5 1654.09,309.5 1656.09,309.5 1658.09,309.5 1660.09,309.5 1662.09,309.5 1664.09,309.5 1666.09,309.5 1668.09,309.5 1670.09,309.5 1672.09,309.5 1674.09,309.5 1676.09,309.5 1678.09,309.5 1680.09,309.5 1682.09,309.5 1684.09,309.5 1686.09,309.5 1688.09,309.5 1690.09,309.5 1692.09,309.5 1694.09,309.5 1696.09,309.5 1698.09,309.5 1700.09,309.5 1702.09,309.5 1704.09,309.5 1706.09,309.5 1708.09,309.5 1710.09,309.5 1712.09,309.5 1714.09,309.5 1716.09,309.5 1718.09,309.5 1720.09,309.5 1722.09,309.5 1724.09,309.5 1726.09,309.5 1728.09,309.5 1730.09,309.5 1732.09,309.5 1734.09,309.5 1736.09,309.5 1738.09,309.5 1740.09,309.5 1742.09,309.5 1744.09,309.5 1746.09,309.5 1748.09,309.5 1750.09,309.5" fill="none" stroke="#000" stroke-opacity="0.28" stroke-width="1" shape-rendering="crispEdges"/><path d="M499.00 368.5L499.50 336.5" fill="none" stroke="#f03c60" stroke-width="1.5" stroke-linecap="round"/><path d="M14 367h1v1h-1zM21 367h1v1h-1zM29 367h1v1h-1zM43 367h1v1h-1zM52 367h1v1h-1zM54 367h1v1h-1zM60 367h1v1h-1zM83 367h1v1h-1zM90 367h1v1h-1zM101 367h1v1h-1zM128 367h1v1h-1zM135 367h1v1h-1zM141 367h1v1h-1zM161 367h1v1h-1zM163 367h1v1h-1zM185 367h1v1h-1zM190 367h1v1h-1zM196 367h1v1h-1zM202 367h1v1h-1zM205 367h1v1h-1zM207 367h1v1h-1zM209 367h1v1h-1zM213 367h1v1h-1zM215 367h1v1h-1zM227 367h1v1h-1zM229 367h1v1h-1zM232 367h1v1h-1zM246 367h1v1h-1zM248 367h1v1h-1zM273 367h1v1h-1zM275 367h1v1h-1zM285 367h1v1h-1zM291 367h1v1h-1zM292 367h1v1h-1zM301 367h1v1h-1zM302 367h1v1h-1zM307 367h1v1h-1zM317 367h1v1h-1zM318 367h1v1h-1zM322 367h1v1h-1zM326 367h1v1h-1zM329 367h1v1h-1zM339 367h1v1h-1zM341 367h1v1h-1zM348 367h1v1h-1zM350 367h1v1h-1zM362 367h1v1h-1zM371 367h1v1h-1zM372 367h1v1h-1zM375 367h1v1h-1zM376 367h1v1h-1zM386 367h1v1h-1zM388 367h1v1h-1zM395 367h1v1h-1zM399 367h1v1h-1zM407 367h1v1h-1zM408 367h1v1h-1zM412 367h1v1h-1zM414 367h1v1h-1zM418 367h1v1h-1zM422 367h1v1h-1zM426 367h1v1h-1zM430 367h1v1h-1zM438 367h1v1h-1zM439 367h1v1h-1zM440 367h1v1h-1zM454 367h1v1h-1zM467 367h1v1h-1zM479 367h1v1h-1zM489 367h1v1h-1zM507 328h1v1h-1zM511 325h1v1h-1zM523 320h1v1h-1zM534 316h1v1h-1zM535 316h1v1h-1zM536 316h1v1h-1zM539 315h1v1h-1zM546 314h1v1h-1zM552 313h1v1h-1zM556 313h1v1h-1zM563 312h1v1h-1zM572 312h1v1h-1zM578 311h1v1h-1zM579 311h1v1h-1zM581 311h1v1h-1zM585 311h1v1h-1zM590 311h1v1h-1zM604 310h1v1h-1zM608 310h1v1h-1zM610 310h1v1h-1zM613 310h1v1h-1zM614 310h1v1h-1zM619 310h1v1h-1zM620 310h1v1h-1zM625 310h1v1h-1zM632 310h1v1h-1zM639 310h1v1h-1zM644 310h1v1h-1zM650 310h1v1h-1zM654 310h1v1h-1zM657 310h1v1h-1zM676 310h1v1h-1zM678 310h1v1h-1zM687 310h1v1h-1zM707 310h1v1h-1zM711 310h1v1h-1zM717 310h1v1h-1zM719 310h1v1h-1zM722 310h1v1h-1zM726 310h1v1h-1zM739 310h1v1h-1zM741 309h1v1h-1zM742 309h1v1h-1zM753 309h1v1h-1zM761 309h1v1h-1zM771 309h1v1h-1zM777 309h1v1h-1zM797 309h1v1h-1zM801 309h1v1h-1zM802 309h1v1h-1zM805 309h1v1h-1zM814 309h1v1h-1zM835 309h1v1h-1zM839 309h1v1h-1zM840 309h1v1h-1zM843 309h1v1h-1zM848 309h1v1h-1zM849 309h1v1h-1zM859 309h1v1h-1zM860 309h1v1h-1zM862 309h1v1h-1zM873 309h1v1h-1zM881 309h1v1h-1zM888 309h1v1h-1zM891 309h1v1h-1zM894 309h1v1h-1zM901 309h1v1h-1zM923 309h1v1h-1zM925 309h1v1h-1zM926 309h1v1h-1zM933 309h1v1h-1zM940 309h1v1h-1zM941 309h1v1h-1zM956 309h1v1h-1zM960 309h1v1h-1zM963 309h1v1h-1zM967 309h1v1h-1zM971 309h1v1h-1zM973 309h1v1h-1zM975 309h1v1h-1zM978 309h1v1h-1zM979 309h1v1h-1zM980 309h1v1h-1zM989 309h1v1h-1zM992 309h1v1h-1zM1004 309h1v1h-1zM1007 309h1v1h-1zM1025 309h1v1h-1zM1038 309h1v1h-1zM1056 309h1v1h-1zM1064 309h1v1h-1zM1069 309h1v1h-1zM1080 309h1v1h-1zM1082 309h1v1h-1zM1085 309h1v1h-1zM1086 309h1v1h-1zM1102 309h1v1h-1zM1115 309h1v1h-1zM1117 309h1v1h-1zM1122 309h1v1h-1zM1158 309h1v1h-1zM1176 309h1v1h-1zM1177 309h1v1h-1zM1196 309h1v1h-1zM1199 309h1v1h-1zM1200 309h1v1h-1zM1217 309h1v1h-1zM1232 309h1v1h-1zM1244 309h1v1h-1zM1268 309h1v1h-1zM1271 309h1v1h-1zM1297 309h1v1h-1zM1299 309h1v1h-1zM1303 309h1v1h-1zM1311 309h1v1h-1zM1318 309h1v1h-1zM1323 309h1v1h-1zM1324 309h1v1h-1zM1325 309h1v1h-1zM1326 309h1v1h-1zM1329 309h1v1h-1zM1349 309h1v1h-1zM1352 309h1v1h-1zM1369 309h1v1h-1zM1373 309h1v1h-1zM1402 309h1v1h-1zM1412 309h1v1h-1zM1414 309h1v1h-1zM1416 309h1v1h-1zM1423 309h1v1h-1zM1442 309h1v1h-1zM1446 309h1v1h-1zM1450 309h1v1h-1zM1455 309h1v1h-1zM1457 309h1v1h-1zM1460 309h1v1h-1zM1468 309h1v1h-1zM1470 309h1v1h-1zM1489 309h1v1h-1zM1504 309h1v1h-1zM1523 309h1v1h-1zM1525 309h1v1h-1zM1543 309h1v1h-1zM1544 309h1v1h-1zM1548 309h1v1h-1zM1556 309h1v1h-1zM1557 309h1v1h-1zM1562 309h1v1h-1zM1567 309h1v1h-1zM1571 309h1v1h-1zM1580 309h1v1h-1zM1583 309h1v1h-1zM1611 309h1v1h-1zM1612 309h1v1h-1zM1619 309h1v1h-1zM1632 309h1v1h-1zM1633 309h1v1h-1zM1635 309h1v1h-1zM1649 309h1v1h-1zM1650 309h1v1h-1zM1655 309h1v1h-1zM1658 309h1v1h-1zM1666 309h1v1h-1zM1668 309h1v1h-1zM1672 309h1v1h-1zM1683 309h1v1h-1zM1687 309h1v1h-1zM1700 309h1v1h-1zM1705 309h1v1h-1zM1708 309h1v1h-1zM1710 309h1v1h-1zM1720 309h1v1h-1zM1721 309h1v1h-1zM1728 309h1v1h-1zM1731 309h1v1h-1zM1732 309h1v1h-1z" fill="#000" opacity="0.45"/><path d="M10 370h1v1h-1zM12 370h1v1h-1zM15 370h1v1h-1zM19 366h1v1h-1zM57 370h1v1h-1zM64 366h1v1h-1zM66 366h1v1h-1zM77 366h1v1h-1zM78 370h1v1h-1zM86 370h1v1h-1zM88 370h1v1h-1zM95 370h1v1h-1zM98 370h1v1h-1zM102 366h1v1h-1zM106 366h1v1h-1zM107 370h1v1h-1zM114 370h1v1h-1zM120 366h1v1h-1zM124 366h1v1h-1zM126 366h1v1h-1zM133 366h1v1h-1zM134 366h1v1h-1zM155 370h1v1h-1zM171 366h1v1h-1zM175 370h1v1h-1zM189 366h1v1h-1zM193 366h1v1h-1zM194 370h1v1h-1zM195 370h1v1h-1zM208 366h1v1h-1zM216 366h1v1h-1zM221 370h1v1h-1zM223 370h1v1h-1zM239 366h1v1h-1zM254 370h1v1h-1zM256 366h1v1h-1zM257 370h1v1h-1zM261 370h1v1h-1zM263 370h1v1h-1zM264 366h1v1h-1zM274 370h1v1h-1zM279 366h1v1h-1zM281 370h1v1h-1zM286 370h1v1h-1zM293 370h1v1h-1zM305 370h1v1h-1zM306 366h1v1h-1zM319 370h1v1h-1zM335 370h1v1h-1zM336 366h1v1h-1zM342 370h1v1h-1zM355 366h1v1h-1zM359 370h1v1h-1zM363 366h1v1h-1zM365 366h1v1h-1zM377 366h1v1h-1zM379 370h1v1h-1zM384 366h1v1h-1zM385 370h1v1h-1zM391 370h1v1h-1zM393 370h1v1h-1zM410 366h1v1h-1zM420 370h1v1h-1zM434 370h1v1h-1zM459 370h1v1h-1zM463 366h1v1h-1zM476 366h1v1h-1zM477 366h1v1h-1zM480 366h1v1h-1zM496 370h1v1h-1zM508 330h1v1h-1zM509 326h1v1h-1zM512 324h1v1h-1zM515 326h1v1h-1zM521 320h1v1h-1zM522 319h1v1h-1zM525 322h1v1h-1zM526 318h1v1h-1zM538 319h1v1h-1zM543 314h1v1h-1zM545 317h1v1h-1zM558 312h1v1h-1zM562 311h1v1h-1zM564 315h1v1h-1zM566 315h1v1h-1zM570 315h1v1h-1zM571 315h1v1h-1zM577 314h1v1h-1zM587 310h1v1h-1zM591 310h1v1h-1zM593 310h1v1h-1zM596 314h1v1h-1zM597 314h1v1h-1zM598 314h1v1h-1zM607 309h1v1h-1zM616 313h1v1h-1zM617 309h1v1h-1zM626 313h1v1h-1zM635 309h1v1h-1zM636 313h1v1h-1zM638 313h1v1h-1zM640 309h1v1h-1zM647 313h1v1h-1zM653 313h1v1h-1zM661 309h1v1h-1zM665 313h1v1h-1zM672 313h1v1h-1zM673 309h1v1h-1zM677 313h1v1h-1zM680 313h1v1h-1zM681 313h1v1h-1zM689 309h1v1h-1zM696 313h1v1h-1zM698 313h1v1h-1zM701 309h1v1h-1zM709 313h1v1h-1zM713 309h1v1h-1zM718 309h1v1h-1zM721 313h1v1h-1zM727 309h1v1h-1zM728 313h1v1h-1zM736 309h1v1h-1zM743 308h1v1h-1zM744 308h1v1h-1zM754 308h1v1h-1zM760 312h1v1h-1zM764 312h1v1h-1zM766 308h1v1h-1zM767 308h1v1h-1zM782 312h1v1h-1zM785 308h1v1h-1zM788 312h1v1h-1zM792 308h1v1h-1zM798 312h1v1h-1zM799 312h1v1h-1zM800 308h1v1h-1zM812 312h1v1h-1zM816 312h1v1h-1zM825 312h1v1h-1zM828 308h1v1h-1zM834 312h1v1h-1zM838 308h1v1h-1zM841 312h1v1h-1zM844 308h1v1h-1zM845 308h1v1h-1zM852 312h1v1h-1zM858 308h1v1h-1zM861 312h1v1h-1zM865 308h1v1h-1zM870 312h1v1h-1zM874 312h1v1h-1zM878 308h1v1h-1zM883 312h1v1h-1zM887 308h1v1h-1zM892 312h1v1h-1zM896 308h1v1h-1zM897 308h1v1h-1zM903 312h1v1h-1zM904 308h1v1h-1zM909 312h1v1h-1zM912 308h1v1h-1zM913 312h1v1h-1zM914 308h1v1h-1zM928 312h1v1h-1zM932 312h1v1h-1zM944 308h1v1h-1zM946 312h1v1h-1zM959 308h1v1h-1zM976 308h1v1h-1zM981 312h1v1h-1zM984 312h1v1h-1zM985 312h1v1h-1zM990 308h1v1h-1zM993 308h1v1h-1zM1000 308h1v1h-1zM1005 312h1v1h-1zM1010 308h1v1h-1zM1011 308h1v1h-1zM1014 312h1v1h-1zM1017 312h1v1h-1zM1020 312h1v1h-1zM1033 308h1v1h-1zM1039 308h1v1h-1zM1045 308h1v1h-1zM1052 308h1v1h-1zM1077 312h1v1h-1zM1079 308h1v1h-1zM1084 308h1v1h-1zM1088 312h1v1h-1zM1110 312h1v1h-1zM1127 312h1v1h-1zM1130 312h1v1h-1zM1137 312h1v1h-1zM1141 312h1v1h-1zM1145 312h1v1h-1zM1150 312h1v1h-1zM1157 312h1v1h-1zM1166 312h1v1h-1zM1171 308h1v1h-1zM1172 308h1v1h-1zM1181 308h1v1h-1zM1182 308h1v1h-1zM1184 312h1v1h-1zM1187 312h1v1h-1zM1193 308h1v1h-1zM1203 312h1v1h-1zM1209 308h1v1h-1zM1210 312h1v1h-1zM1211 312h1v1h-1zM1215 312h1v1h-1zM1216 312h1v1h-1zM1218 312h1v1h-1zM1221 312h1v1h-1zM1228 312h1v1h-1zM1230 312h1v1h-1zM1231 312h1v1h-1zM1241 312h1v1h-1zM1257 312h1v1h-1zM1267 312h1v1h-1zM1286 308h1v1h-1zM1292 308h1v1h-1zM1295 312h1v1h-1zM1298 312h1v1h-1zM1301 312h1v1h-1zM1302 308h1v1h-1zM1304 308h1v1h-1zM1314 312h1v1h-1zM1330 312h1v1h-1zM1331 312h1v1h-1zM1339 308h1v1h-1zM1340 308h1v1h-1zM1344 312h1v1h-1zM1345 312h1v1h-1zM1346 312h1v1h-1zM1365 312h1v1h-1zM1366 312h1v1h-1zM1386 308h1v1h-1zM1395 308h1v1h-1zM1397 312h1v1h-1zM1400 308h1v1h-1zM1405 312h1v1h-1zM1415 308h1v1h-1zM1420 308h1v1h-1zM1426 312h1v1h-1zM1428 308h1v1h-1zM1444 312h1v1h-1zM1453 308h1v1h-1zM1467 312h1v1h-1zM1471 312h1v1h-1zM1474 312h1v1h-1zM1478 308h1v1h-1zM1480 312h1v1h-1zM1494 308h1v1h-1zM1499 312h1v1h-1zM1503 312h1v1h-1zM1507 308h1v1h-1zM1512 312h1v1h-1zM1517 312h1v1h-1zM1524 312h1v1h-1zM1526 308h1v1h-1zM1541 308h1v1h-1zM1546 312h1v1h-1zM1568 312h1v1h-1zM1569 312h1v1h-1zM1573 308h1v1h-1zM1585 308h1v1h-1zM1586 312h1v1h-1zM1594 312h1v1h-1zM1599 308h1v1h-1zM1600 312h1v1h-1zM1601 312h1v1h-1zM1602 312h1v1h-1zM1605 312h1v1h-1zM1614 308h1v1h-1zM1616 308h1v1h-1zM1618 308h1v1h-1zM1624 312h1v1h-1zM1631 312h1v1h-1zM1641 308h1v1h-1zM1642 312h1v1h-1zM1648 312h1v1h-1zM1653 312h1v1h-1zM1662 312h1v1h-1zM1669 312h1v1h-1zM1671 312h1v1h-1zM1676 308h1v1h-1zM1678 312h1v1h-1zM1682 312h1v1h-1zM1690 312h1v1h-1zM1694 308h1v1h-1zM1698 312h1v1h-1zM1717 308h1v1h-1zM1725 312h1v1h-1zM1745 312h1v1h-1z" fill="#f03c60" opacity="0.75"/><polyline points="3,502.5 5,502.5 7,502.5 9,502.5 11,502.5 13,502.5 15,502.5 17,502.5 19,502.5 21,502.5 23,502.5 25,502.5 27,502.5 29,502.5 31,502.5 33,502.5 35,502.5 37,502.5 39,502.5 41,502.5 43,502.5 45,502.5 47,502.5 49,502.5 51,502.5 53,502.5 55,502.5 57,502.5 59,502.5 61,502.5 63,502.5 65,502.5 67,502.5 69,502.5 71,502.5 73,502.5 75,502.5 77,502.5 79,502.5 81,502.5 83,502.5 85,502.5 87,502.5 89,502.5 91,502.5 93,502.5 95,502.5 97,502.5 99,502.5 101,502.5 103,502.5 105,502.5 107,502.5 109,502.5 111,502.5 113,502.5 115,502.5 117,502.5 119,502.5 121,502.5 123,502.5 125,502.5 127,502.5 129,502.5 131,502.5 133,502.5 135,502.5 137,502.5 139,502.5 141,502.5 143,502.5 145,502.5 147,502.5 149,502.5 151,502.5 153,502.5 155,502.5 157,502.5 159,502.5 161,502.5 163,502.5 165,502.5 167,502.5 169,502.5 171,502.5 173,502.5 175,502.5 177,502.5 179,502.5 181,502.5 183,502.5 185,502.5 187,502.5 189,502.5 191,502.5 193,502.5 195,502.5 197,502.5 199,502.5 201,502.5 203,502.5 205,502.5 207,502.5 209,502.5 211,502.5 213,502.5 215,502.5 217,502.5 219,502.5 221,502.5 223,502.5 225,502.5 227,502.5 229,502.5 231,502.5 233,502.5 235,502.5 237,502.5 239,502.5 241,502.5 243,502.5 245,502.5 247,502.5 249,502.5 251,502.5 253,502.5 255,502.5 257,502.5 259,502.5 261,502.5 263,502.5 265,502.5 267,502.5 269,502.5 271,502.5 273,502.5 275,502.5 277,502.5 279,502.5 281,502.5 283,502.5 285,502.5 287,502.5 289,502.5 291,502.5 293,502.5 295,502.5 297,502.5 299,502.5 301,502.5 303,502.5 305,502.5 307,502.5 309,502.5 311,502.5 313,502.5 315,502.5 317,502.5 319,502.5 321,502.5 323,502.5 325,502.5 327,502.5 329,502.5 331,502.5 333,502.5 335,502.5 337,502.5 339,502.5 341,502.5 343,502.5 345,502.5 347,502.5 349,502.5 351,502.5 353,502.5 355,502.5 357,502.5 359,502.5 361,502.5 363,502.5 365,502.5 367,502.5 369,502.5 371,502.5 373,502.5 375,502.5 377,502.5 379,502.5 381,502.5 383,502.5 385,502.5 387,502.5 389,502.5 391,502.5 393,502.5 395,502.5 397,502.5 399,502.5 401,502.5 403,502.5 405,502.5 407,502.5 409,502.5 411,502.5 413,502.5 415,502.5 417,502.5 419,502.5 421,502.5 423,502.5 425,502.5 427,502.5 429,502.5 431,502.5 433,502.5 435,502.5 437,502.5 439,502.5 441,502.5 443,502.5 445,502.5 447,502.5 449,502.5 451,502.5 453,502.5 455,502.5 457,502.5 459,502.5 461,502.5 463,502.5 465,502.5 467,502.5 469,502.5 471,502.5 473,502.5 475,502.5 477,502.5 479,502.5 481,502.5 483,502.5 485,502.5 487,502.5 489,502.5 491,502.5 493,502.5 495,502.5 495.5,502.5 496,502.5 496.5,502.5 497,502.5 497.5,502.5 498,502.5 498.5,502.5 499,502.5" fill="none" stroke="#92d23a" stroke-width="3" stroke-linejoin="round" shape-rendering="crispEdges"/><polyline points="3,501.5 5,501.5 7,501.5 9,501.5 11,501.5 13,501.5 15,501.5 17,501.5 19,501.5 21,501.5 23,501.5 25,501.5 27,501.5 29,501.5 31,501.5 33,501.5 35,501.5 37,501.5 39,501.5 41,501.5 43,501.5 45,501.5 47,501.5 49,501.5 51,501.5 53,501.5 55,501.5 57,501.5 59,501.5 61,501.5 63,501.5 65,501.5 67,501.5 69,501.5 71,501.5 73,501.5 75,501.5 77,501.5 79,501.5 81,501.5 83,501.5 85,501.5 87,501.5 89,501.5 91,501.5 93,501.5 95,501.5 97,501.5 99,501.5 101,501.5 103,501.5 105,501.5 107,501.5 109,501.5 111,501.5 113,501.5 115,501.5 117,501.5 119,501.5 121,501.5 123,501.5 125,501.5 127,501.5 129,501.5 131,501.5 133,501.5 135,501.5 137,501.5 139,501.5 141,501.5 143,501.5 145,501.5 147,501.5 149,501.5 151,501.5 153,501.5 155,501.5 157,501.5 159,501.5 161,501.5 163,501.5 165,501.5 167,501.5 169,501.5 171,501.5 173,501.5 175,501.5 177,501.5 179,501.5 181,501.5 183,501.5 185,501.5 187,501.5 189,501.5 191,501.5 193,501.5 195,501.5 197,501.5 199,501.5 201,501.5 203,501.5 205,501.5 207,501.5 209,501.5 211,501.5 213,501.5 215,501.5 217,501.5 219,501.5 221,501.5 223,501.5 225,501.5 227,501.5 229,501.5 231,501.5 233,501.5 235,501.5 237,501.5 239,501.5 241,501.5 243,501.5 245,501.5 247,501.5 249,501.5 251,501.5 253,501.5 255,501.5 257,501.5 259,501.5 261,501.5 263,501.5 265,501.5 267,501.5 269,501.5 271,501.5 273,501.5 275,501.5 277,501.5 279,501.5 281,501.5 283,501.5 285,501.5 287,501.5 289,501.5 291,501.5 293,501.5 295,501.5 297,501.5 299,501.5 301,501.5 303,501.5 305,501.5 307,501.5 309,501.5 311,501.5 313,501.5 315,501.5 317,501.5 319,501.5 321,501.5 323,501.5 325,501.5 327,501.5 329,501.5 331,501.5 333,501.5 335,501.5 337,501.5 339,501.5 341,501.5 343,501.5 345,501.5 347,501.5 349,501.5 351,501.5 353,501.5 355,501.5 357,501.5 359,501.5 361,501.5 363,501.5 365,501.5 367,501.5 369,501.5 371,501.5 373,501.5 375,501.5 377,501.5 379,501.5 381,501.5 383,501.5 385,501.5 387,501.5 389,501.5 391,501.5 393,501.5 395,501.5 397,501.5 399,501.5 401,501.5 403,501.5 405,501.5 407,501.5 409,501.5 411,501.5 413,501.5 415,501.5 417,501.5 419,501.5 421,501.5 423,501.5 425,501.5 427,501.5 429,501.5 431,501.5 433,501.5 435,501.5 437,501.5 439,501.5 441,501.5 443,501.5 445,501.5 447,501.5 449,501.5 451,501.5 453,501.5 455,501.5 457,501.5 459,501.5 461,501.5 463,501.5 465,501.5 467,501.5 469,501.5 471,501.5 473,501.5 475,501.5 477,501.5 479,501.5 481,501.5 483,501.5 485,501.5 487,501.5 489,501.5 491,501.5 493,501.5 495,501.5 495.5,501.5 496,501.5 496.5,501.5 497,501.5 497.5,501.5 498,501.5 498.5,501.5 499,501.5" fill="none" stroke="#000" stroke-opacity="0.28" stroke-width="1" shape-rendering="crispEdges"/><polyline points="499.5,498.5 500,498.5 500.5,498.5 501,498.5 501.5,497.5 502,497.5 502.5,497.5 503,497.5 503.5,497.5 504,497.5 504.5,496.5 505,496.5 505.5,496.5 506,496.5 506.5,496.5 507,496.5 507.5,495.5 508,495.5 508.5,495.5 509,495.5 509.5,495.5 510,495.5 510.5,495.5 511,494.5 511.5,494.5 512,494.5 512.5,494.5 513,494.5 513.5,494.5 514,493.5 514.5,493.5 515,493.5 515.5,493.5 516,493.5 516.5,493.5 517,493.5 517.5,492.5 518,492.5 518.5,492.5 519,492.5 519.5,492.5 520,492.5 520.5,492.5 521,491.5 521.5,491.5 522,491.5 522.5,491.5 523,491.5 523.5,491.5 524,491.5 524.5,490.5 525,490.5 525.5,490.5 526,490.5 526.5,490.5 527,490.5 527.5,490.5 528,490.5 528.5,489.5 529,489.5 529.5,489.5 530,489.5 530.5,489.5 531,489.5 531.5,489.5 532,488.5 532.5,488.5 533,488.5 533.5,488.5 534,488.5 534.5,488.5 535,488.5 535.5,488.5 536,487.5 536.5,487.5 537,487.5 537.5,487.5 538,487.5 538.5,487.5 539,487.5 539.5,486.5 540,486.5 540.5,486.5 541,486.5 541.5,486.5 542,486.5 542.5,486.5 543,486.5 543.5,485.5 544,485.5 544.5,485.5 545,485.5 545.5,485.5 546,485.5 546.5,485.5 547,485.5 547.5,484.5 548,484.5 548.5,484.5 549,484.5 549.5,484.5 550,484.5 550.5,484.5 551,484.5 551.5,484.5 552,483.5 552.5,483.5 553,483.5 553.5,483.5 554,483.5 554.5,483.5 555,483.5 555.5,483.5 556,482.5 556.5,482.5 557,482.5 557.5,482.5 558,482.5 558.5,482.5 559,482.5 559.5,482.5 560,482.5 560.5,481.5 561,481.5 561.5,481.5 562,481.5 562.5,481.5 563,481.5 563.5,481.5 564,481.5 564.5,481.5 565,480.5 565.5,480.5 566,480.5 566.5,480.5 567,480.5 567.5,480.5 568,480.5 568.5,480.5 569,480.5 569.5,480.5 570,479.5 570.5,479.5 571,479.5 571.5,479.5 572,479.5 572.5,479.5 573,479.5 573.5,479.5 574,479.5 574.5,478.5 575,478.5 575.5,478.5 576,478.5 576.5,478.5 577,478.5 577.5,478.5 578,478.5 578.5,478.5 579,478.5 579.5,477.5 580,477.5 580.5,477.5 581,477.5 581.5,477.5 582,477.5 582.5,477.5 583,477.5 583.5,477.5 584,477.5 584.5,476.5 585,476.5 585.5,476.5 586,476.5 586.5,476.5 587,476.5 587.5,476.5 588,476.5 588.5,476.5 589,476.5 589.5,476.5 590,475.5 590.5,475.5 591,475.5 591.5,475.5 592,475.5 592.5,475.5 593,475.5 593.5,475.5 594,475.5 594.5,475.5 595,474.5 595.5,474.5 596,474.5 596.5,474.5 597,474.5 597.5,474.5 598,474.5 598.5,474.5 599,474.5 599.5,474.5 600,474.5 600.5,474.5 601,473.5 601.5,473.5 602,473.5 602.5,473.5 603,473.5 603.5,473.5 604,473.5 604.5,473.5 605,473.5 605.5,473.5 606,473.5 606.5,472.5 607,472.5 607.5,472.5 608,472.5 608.5,472.5 609,472.5 609.5,472.5 610,472.5 610.5,472.5 611,472.5 611.5,472.5 612,472.5 612.5,471.5 613,471.5 613.5,471.5 614,471.5 614.5,471.5 615,471.5 615.5,471.5 616,471.5 616.5,471.5 617,471.5 617.5,471.5 618,471.5 618.5,471.5 619,470.5 619.5,470.5 620,470.5 620.5,470.5 622.5,470.5 624.5,470.5 626.5,469.5 628.5,469.5 630.5,469.5 632.5,468.5 634.5,468.5 636.5,468.5 638.5,468.5 640.5,467.5 642.5,467.5 644.5,467.5 646.5,466.5 648.5,466.5 650.5,466.5 652.5,466.5 654.5,465.5 656.5,465.5 658.5,465.5 660.5,465.5 662.5,464.5 664.5,464.5 666.5,464.5 668.5,464.5 670.5,463.5 672.5,463.5 674.5,463.5 676.5,463.5 678.5,463.5 680.5,462.5 682.5,462.5 684.5,462.5 686.5,462.5 688.5,462.5 690.5,461.5 692.5,461.5 694.5,461.5 696.5,461.5 698.5,461.5 700.5,460.5 702.5,460.5 704.5,460.5 706.5,460.5 708.5,460.5 710.5,459.5 712.5,459.5 714.5,459.5 716.5,459.5 718.5,459.5 720.5,459.5 722.5,458.5 724.5,458.5 726.5,458.5 728.5,458.5 730.5,458.5 732.5,458.5 734.5,457.5 736.5,457.5 738.5,457.5 740.5,457.5 742.5,457.5 744.5,457.5 746.5,456.5 748.5,456.5 750.5,456.5 752.5,456.5 754.5,456.5 756.5,456.5 758.5,456.5 760.5,455.5 762.5,455.5 764.5,455.5 766.5,455.5 768.5,455.5 770.5,455.5 772.5,455.5 774.5,455.5 776.5,454.5 778.5,454.5 780.5,454.5 782.5,454.5 784.5,454.5 786.5,454.5 788.5,454.5 790.5,454.5 792.5,454.5 794.5,453.5 796.5,453.5 798.5,453.5 800.5,453.5 802.5,453.5 804.5,453.5 806.5,453.5 808.5,453.5 810.5,453.5 812.5,453.5 814.5,452.5 816.5,452.5 818.5,452.5 820.5,452.5 822.5,452.5 824.5,452.5 826.5,452.5 828.5,452.5 830.5,452.5 832.5,452.5 834.5,452.5 836.5,451.5 838.5,451.5 840.5,451.5 842.5,451.5 844.5,451.5 846.5,451.5 848.5,451.5 850.5,451.5 852.5,451.5 854.5,451.5 856.5,451.5 858.5,451.5 860.5,451.5 862.5,450.5 864.5,450.5 866.5,450.5 868.5,450.5 870.5,450.5 872.5,450.5 874.5,450.5 876.5,450.5 878.5,450.5 880.5,450.5 882.5,450.5 884.5,450.5 886.5,450.5 888.5,450.5 890.5,450.5 892.5,449.5 894.5,449.5 896.5,449.5 898.5,449.5 900.5,449.5 902.5,449.5 904.5,449.5 906.5,449.5 908.5,449.5 910.5,449.5 912.5,449.5 914.5,449.5 916.5,449.5 918.5,449.5 920.5,449.5 922.5,449.5 924.5,449.5 926.5,449.5 928.5,448.5 930.5,448.5 932.5,448.5 934.5,448.5 936.5,448.5 938.5,448.5 940.5,448.5 942.5,448.5 944.5,448.5 946.5,448.5 948.5,448.5 950.5,448.5 952.5,448.5 954.5,448.5 956.5,448.5 958.5,448.5 960.5,448.5 962.5,448.5 964.5,448.5 966.5,448.5 968.5,448.5 970.5,448.5 972.5,448.5 974.5,448.5 976.5,447.5 978.5,447.5 980.5,447.5 982.5,447.5 984.5,447.5 986.5,447.5 988.5,447.5 990.5,447.5 992.5,447.5 994.5,447.5 996.5,447.5 998.5,447.5 1000.5,447.5 1002.5,447.5 1004.5,447.5 1006.5,447.5 1008.5,447.5 1010.5,447.5 1012.5,447.5 1014.5,447.5 1016.5,447.5 1018.5,447.5 1020.5,447.5 1022.5,447.5 1024.5,447.5 1026.5,447.5 1028.5,447.5 1030.5,447.5 1032.5,447.5 1034.5,447.5 1036.5,447.5 1038.5,447.5 1040.5,447.5 1042.5,446.5 1044.5,446.5 1046.5,446.5 1048.5,446.5 1050.5,446.5 1052.5,446.5 1054.5,446.5 1056.5,446.5 1058.5,446.5 1060.5,446.5 1062.5,446.5 1064.5,446.5 1066.5,446.5 1068.5,446.5 1070.5,446.5 1072.5,446.5 1074.5,446.5 1076.5,446.5 1078.5,446.5 1080.5,446.5 1082.5,446.5 1084.5,446.5 1086.5,446.5 1088.5,446.5 1090.5,446.5 1092.5,446.5 1094.5,446.5 1096.5,446.5 1098.5,446.5 1100.5,446.5 1102.5,446.5 1104.5,446.5 1106.5,446.5 1108.5,446.5 1110.5,446.5 1112.5,446.5 1114.5,446.5 1116.5,446.5 1118.5,446.5 1120.5,446.5 1122.5,446.5 1124.5,446.5 1126.5,446.5 1128.5,446.5 1130.5,446.5 1132.5,446.5 1134.5,446.5 1136.5,446.5 1138.5,446.5 1140.5,446.5 1142.5,446.5 1144.5,446.5 1146.5,446.5 1148.5,446.5 1150.5,446.5 1152.5,446.5 1154.5,446.5 1156.5,445.5 1158.5,445.5 1160.5,445.5 1162.5,445.5 1164.5,445.5 1166.5,445.5 1168.5,445.5 1170.5,445.5 1172.5,445.5 1174.5,445.5 1176.5,445.5 1178.5,445.5 1180.5,445.5 1182.5,445.5 1184.5,445.5 1186.5,445.5 1188.5,445.5 1190.5,445.5 1192.5,445.5 1194.5,445.5 1196.5,445.5 1198.5,445.5 1200.5,445.5 1202.5,445.5 1204.5,445.5 1206.5,445.5 1208.5,445.5 1210.5,445.5 1212.5,445.5 1214.5,445.5 1216.5,445.5 1218.5,445.5 1220.5,445.5 1222.5,445.5 1224.5,445.5 1226.5,445.5 1228.5,445.5 1230.5,445.5 1232.5,445.5 1234.5,445.5 1236.5,445.5 1238.5,445.5 1240.5,445.5 1242.5,445.5 1244.5,445.5 1246.5,445.5 1248.5,445.5 1250.5,445.5 1252.5,445.5 1254.5,445.5 1256.5,445.5 1258.5,445.5 1260.5,445.5 1262.5,445.5 1264.5,445.5 1266.5,445.5 1268.5,445.5 1270.5,445.5 1272.5,445.5 1274.5,445.5 1276.5,445.5 1278.5,445.5 1280.5,445.5 1282.5,445.5 1284.5,445.5 1286.5,445.5 1288.5,445.5 1290.5,445.5 1292.5,445.5 1294.5,445.5 1296.5,445.5 1298.5,445.5 1300.5,445.5 1302.5,445.5 1304.5,445.5 1306.5,445.5 1308.5,445.5 1310.5,445.5 1312.5,445.5 1314.5,445.5 1316.5,445.5 1318.5,445.5 1320.5,445.5 1322.5,445.5 1324.5,445.5 1326.5,445.5 1328.5,445.5 1330.5,445.5 1332.5,445.5 1334.5,445.5 1336.5,445.5 1338.5,445.5 1340.5,445.5 1342.5,445.5 1344.5,445.5 1346.5,445.5 1348.5,445.5 1350.5,445.5 1352.5,445.5 1354.5,445.5 1356.5,445.5 1358.5,445.5 1360.5,445.5 1362.5,445.5 1364.5,445.5 1366.5,445.5 1368.5,445.5 1370.5,445.5 1372.5,445.5 1374.5,445.5 1376.5,445.5 1378.5,445.5 1380.5,445.5 1382.5,445.5 1384.5,445.5 1386.5,445.5 1388.5,445.5 1390.5,445.5 1392.5,445.5 1394.5,445.5 1396.5,445.5 1397,445.5 1397.5,445.5 1398,445.5 1398.5,445.5 1399,445.5 1399.5,445.5 1400,445.5 1400.5,445.5 1400.59,445.5 1401.09,445.5 1401.59,445.5 1402.09,445.5 1402.59,445.5 1403.09,445.5 1403.59,445.5" fill="none" stroke="#92d23a" stroke-width="3" stroke-linejoin="round" shape-rendering="crispEdges"/><polyline points="499.5,497.5 500,497.5 500.5,497.5 501,497.5 501.5,496.5 502,496.5 502.5,496.5 503,496.5 503.5,496.5 504,496.5 504.5,495.5 505,495.5 505.5,495.5 506,495.5 506.5,495.5 507,495.5 507.5,494.5 508,494.5 508.5,494.5 509,494.5 509.5,494.5 510,494.5 510.5,494.5 511,493.5 511.5,493.5 512,493.5 512.5,493.5 513,493.5 513.5,493.5 514,492.5 514.5,492.5 515,492.5 515.5,492.5 516,492.5 516.5,492.5 517,492.5 517.5,491.5 518,491.5 518.5,491.5 519,491.5 519.5,491.5 520,491.5 520.5,491.5 521,490.5 521.5,490.5 522,490.5 522.5,490.5 523,490.5 523.5,490.5 524,490.5 524.5,489.5 525,489.5 525.5,489.5 526,489.5 526.5,489.5 527,489.5 527.5,489.5 528,489.5 528.5,488.5 529,488.5 529.5,488.5 530,488.5 530.5,488.5 531,488.5 531.5,488.5 532,487.5 532.5,487.5 533,487.5 533.5,487.5 534,487.5 534.5,487.5 535,487.5 535.5,487.5 536,486.5 536.5,486.5 537,486.5 537.5,486.5 538,486.5 538.5,486.5 539,486.5 539.5,485.5 540,485.5 540.5,485.5 541,485.5 541.5,485.5 542,485.5 542.5,485.5 543,485.5 543.5,484.5 544,484.5 544.5,484.5 545,484.5 545.5,484.5 546,484.5 546.5,484.5 547,484.5 547.5,483.5 548,483.5 548.5,483.5 549,483.5 549.5,483.5 550,483.5 550.5,483.5 551,483.5 551.5,483.5 552,482.5 552.5,482.5 553,482.5 553.5,482.5 554,482.5 554.5,482.5 555,482.5 555.5,482.5 556,481.5 556.5,481.5 557,481.5 557.5,481.5 558,481.5 558.5,481.5 559,481.5 559.5,481.5 560,481.5 560.5,480.5 561,480.5 561.5,480.5 562,480.5 562.5,480.5 563,480.5 563.5,480.5 564,480.5 564.5,480.5 565,479.5 565.5,479.5 566,479.5 566.5,479.5 567,479.5 567.5,479.5 568,479.5 568.5,479.5 569,479.5 569.5,479.5 570,478.5 570.5,478.5 571,478.5 571.5,478.5 572,478.5 572.5,478.5 573,478.5 573.5,478.5 574,478.5 574.5,477.5 575,477.5 575.5,477.5 576,477.5 576.5,477.5 577,477.5 577.5,477.5 578,477.5 578.5,477.5 579,477.5 579.5,476.5 580,476.5 580.5,476.5 581,476.5 581.5,476.5 582,476.5 582.5,476.5 583,476.5 583.5,476.5 584,476.5 584.5,475.5 585,475.5 585.5,475.5 586,475.5 586.5,475.5 587,475.5 587.5,475.5 588,475.5 588.5,475.5 589,475.5 589.5,475.5 590,474.5 590.5,474.5 591,474.5 591.5,474.5 592,474.5 592.5,474.5 593,474.5 593.5,474.5 594,474.5 594.5,474.5 595,473.5 595.5,473.5 596,473.5 596.5,473.5 597,473.5 597.5,473.5 598,473.5 598.5,473.5 599,473.5 599.5,473.5 600,473.5 600.5,473.5 601,472.5 601.5,472.5 602,472.5 602.5,472.5 603,472.5 603.5,472.5 604,472.5 604.5,472.5 605,472.5 605.5,472.5 606,472.5 606.5,471.5 607,471.5 607.5,471.5 608,471.5 608.5,471.5 609,471.5 609.5,471.5 610,471.5 610.5,471.5 611,471.5 611.5,471.5 612,471.5 612.5,470.5 613,470.5 613.5,470.5 614,470.5 614.5,470.5 615,470.5 615.5,470.5 616,470.5 616.5,470.5 617,470.5 617.5,470.5 618,470.5 618.5,470.5 619,469.5 619.5,469.5 620,469.5 620.5,469.5 622.5,469.5 624.5,469.5 626.5,468.5 628.5,468.5 630.5,468.5 632.5,467.5 634.5,467.5 636.5,467.5 638.5,467.5 640.5,466.5 642.5,466.5 644.5,466.5 646.5,465.5 648.5,465.5 650.5,465.5 652.5,465.5 654.5,464.5 656.5,464.5 658.5,464.5 660.5,464.5 662.5,463.5 664.5,463.5 666.5,463.5 668.5,463.5 670.5,462.5 672.5,462.5 674.5,462.5 676.5,462.5 678.5,462.5 680.5,461.5 682.5,461.5 684.5,461.5 686.5,461.5 688.5,461.5 690.5,460.5 692.5,460.5 694.5,460.5 696.5,460.5 698.5,460.5 700.5,459.5 702.5,459.5 704.5,459.5 706.5,459.5 708.5,459.5 710.5,458.5 712.5,458.5 714.5,458.5 716.5,458.5 718.5,458.5 720.5,458.5 722.5,457.5 724.5,457.5 726.5,457.5 728.5,457.5 730.5,457.5 732.5,457.5 734.5,456.5 736.5,456.5 738.5,456.5 740.5,456.5 742.5,456.5 744.5,456.5 746.5,455.5 748.5,455.5 750.5,455.5 752.5,455.5 754.5,455.5 756.5,455.5 758.5,455.5 760.5,454.5 762.5,454.5 764.5,454.5 766.5,454.5 768.5,454.5 770.5,454.5 772.5,454.5 774.5,454.5 776.5,453.5 778.5,453.5 780.5,453.5 782.5,453.5 784.5,453.5 786.5,453.5 788.5,453.5 790.5,453.5 792.5,453.5 794.5,452.5 796.5,452.5 798.5,452.5 800.5,452.5 802.5,452.5 804.5,452.5 806.5,452.5 808.5,452.5 810.5,452.5 812.5,452.5 814.5,451.5 816.5,451.5 818.5,451.5 820.5,451.5 822.5,451.5 824.5,451.5 826.5,451.5 828.5,451.5 830.5,451.5 832.5,451.5 834.5,451.5 836.5,450.5 838.5,450.5 840.5,450.5 842.5,450.5 844.5,450.5 846.5,450.5 848.5,450.5 850.5,450.5 852.5,450.5 854.5,450.5 856.5,450.5 858.5,450.5 860.5,450.5 862.5,449.5 864.5,449.5 866.5,449.5 868.5,449.5 870.5,449.5 872.5,449.5 874.5,449.5 876.5,449.5 878.5,449.5 880.5,449.5 882.5,449.5 884.5,449.5 886.5,449.5 888.5,449.5 890.5,449.5 892.5,448.5 894.5,448.5 896.5,448.5 898.5,448.5 900.5,448.5 902.5,448.5 904.5,448.5 906.5,448.5 908.5,448.5 910.5,448.5 912.5,448.5 914.5,448.5 916.5,448.5 918.5,448.5 920.5,448.5 922.5,448.5 924.5,448.5 926.5,448.5 928.5,447.5 930.5,447.5 932.5,447.5 934.5,447.5 936.5,447.5 938.5,447.5 940.5,447.5 942.5,447.5 944.5,447.5 946.5,447.5 948.5,447.5 950.5,447.5 952.5,447.5 954.5,447.5 956.5,447.5 958.5,447.5 960.5,447.5 962.5,447.5 964.5,447.5 966.5,447.5 968.5,447.5 970.5,447.5 972.5,447.5 974.5,447.5 976.5,446.5 978.5,446.5 980.5,446.5 982.5,446.5 984.5,446.5 986.5,446.5 988.5,446.5 990.5,446.5 992.5,446.5 994.5,446.5 996.5,446.5 998.5,446.5 1000.5,446.5 1002.5,446.5 1004.5,446.5 1006.5,446.5 1008.5,446.5 1010.5,446.5 1012.5,446.5 1014.5,446.5 1016.5,446.5 1018.5,446.5 1020.5,446.5 1022.5,446.5 1024.5,446.5 1026.5,446.5 1028.5,446.5 1030.5,446.5 1032.5,446.5 1034.5,446.5 1036.5,446.5 1038.5,446.5 1040.5,446.5 1042.5,445.5 1044.5,445.5 1046.5,445.5 1048.5,445.5 1050.5,445.5 1052.5,445.5 1054.5,445.5 1056.5,445.5 1058.5,445.5 1060.5,445.5 1062.5,445.5 1064.5,445.5 1066.5,445.5 1068.5,445.5 1070.5,445.5 1072.5,445.5 1074.5,445.5 1076.5,445.5 1078.5,445.5 1080.5,445.5 1082.5,445.5 1084.5,445.5 1086.5,445.5 1088.5,445.5 1090.5,445.5 1092.5,445.5 1094.5,445.5 1096.5,445.5 1098.5,445.5 1100.5,445.5 1102.5,445.5 1104.5,445.5 1106.5,445.5 1108.5,445.5 1110.5,445.5 1112.5,445.5 1114.5,445.5 1116.5,445.5 1118.5,445.5 1120.5,445.5 1122.5,445.5 1124.5,445.5 1126.5,445.5 1128.5,445.5 1130.5,445.5 1132.5,445.5 1134.5,445.5 1136.5,445.5 1138.5,445.5 1140.5,445.5 1142.5,445.5 1144.5,445.5 1146.5,445.5 1148.5,445.5 1150.5,445.5 1152.5,445.5 1154.5,445.5 1156.5,444.5 1158.5,444.5 1160.5,444.5 1162.5,444.5 1164.5,444.5 1166.5,444.5 1168.5,444.5 1170.5,444.5 1172.5,444.5 1174.5,444.5 1176.5,444.5 1178.5,444.5 1180.5,444.5 1182.5,444.5 1184.5,444.5 1186.5,444.5 1188.5,444.5 1190.5,444.5 1192.5,444.5 1194.5,444.5 1196.5,444.5 1198.5,444.5 1200.5,444.5 1202.5,444.5 1204.5,444.5 1206.5,444.5 1208.5,444.5 1210.5,444.5 1212.5,444.5 1214.5,444.5 1216.5,444.5 1218.5,444.5 1220.5,444.5 1222.5,444.5 1224.5,444.5 1226.5,444.5 1228.5,444.5 1230.5,444.5 1232.5,444.5 1234.5,444.5 1236.5,444.5 1238.5,444.5 1240.5,444.5 1242.5,444.5 1244.5,444.5 1246.5,444.5 1248.5,444.5 1250.5,444.5 1252.5,444.5 1254.5,444.5 1256.5,444.5 1258.5,444.5 1260.5,444.5 1262.5,444.5 1264.5,444.5 1266.5,444.5 1268.5,444.5 1270.5,444.5 1272.5,444.5 1274.5,444.5 1276.5,444.5 1278.5,444.5 1280.5,444.5 1282.5,444.5 1284.5,444.5 1286.5,444.5 1288.5,444.5 1290.5,444.5 1292.5,444.5 1294.5,444.5 1296.5,444.5 1298.5,444.5 1300.5,444.5 1302.5,444.5 1304.5,444.5 1306.5,444.5 1308.5,444.5 1310.5,444.5 1312.5,444.5 1314.5,444.5 1316.5,444.5 1318.5,444.5 1320.5,444.5 1322.5,444.5 1324.5,444.5 1326.5,444.5 1328.5,444.5 1330.5,444.5 1332.5,444.5 1334.5,444.5 1336.5,444.5 1338.5,444.5 1340.5,444.5 1342.5,444.5 1344.5,444.5 1346.5,444.5 1348.5,444.5 1350.5,444.5 1352.5,444.5 1354.5,444.5 1356.5,444.5 1358.5,444.5 1360.5,444.5 1362.5,444.5 1364.5,444.5 1366.5,444.5 1368.5,444.5 1370.5,444.5 1372.5,444.5 1374.5,444.5 1376.5,444.5 1378.5,444.5 1380.5,444.5 1382.5,444.5 1384.5,444.5 1386.5,444.5 1388.5,444.5 1390.5,444.5 1392.5,444.5 1394.5,444.5 1396.5,444.5 1397,444.5 1397.5,444.5 1398,444.5 1398.5,444.5 1399,444.5 1399.5,444.5 1400,444.5 1400.5,444.5 1400.59,444.5 1401.09,444.5 1401.59,444.5 1402.09,444.5 1402.59,444.5 1403.09,444.5 1403.59,444.5" fill="none" stroke="#000" stroke-opacity="0.28" stroke-width="1" shape-rendering="crispEdges"/><polyline points="1404.09,434.5 1404.59,434.5 1405.09,435.5 1405.59,435.5 1406.09,435.5 1406.59,435.5 1407.09,436.5 1407.59,436.5 1408.09,436.5 1408.59,436.5 1409.09,436.5 1409.59,436.5 1410.09,437.5 1410.59,437.5 1411.09,437.5 1411.59,437.5 1412.09,437.5 1412.59,437.5 1413.09,437.5 1413.59,437.5 1414.09,437.5 1414.59,437.5 1415.09,438.5 1415.59,438.5 1416.09,438.5 1416.59,438.5 1417.09,438.5 1417.59,438.5 1418.09,438.5 1418.59,438.5 1419.09,438.5 1419.59,438.5 1420.09,438.5 1422.09,438.5 1424.09,438.5 1426.09,438.5 1428.09,438.5 1430.09,439.5 1432.09,439.5 1434.09,439.5 1436.09,439.5 1438.09,439.5 1440.09,439.5 1442.09,439.5 1444.09,439.5 1446.09,439.5 1448.09,439.5 1450.09,439.5 1452.09,439.5 1454.09,439.5 1456.09,439.5 1458.09,439.5 1460.09,439.5 1462.09,440.5 1464.09,440.5 1466.09,440.5 1468.09,440.5 1470.09,440.5 1472.09,440.5 1474.09,440.5 1476.09,440.5 1478.09,440.5 1480.09,440.5 1482.09,440.5 1484.09,440.5 1486.09,440.5 1488.09,440.5 1490.09,440.5 1492.09,440.5 1494.09,440.5 1496.09,440.5 1498.09,440.5 1500.09,440.5 1502.09,440.5 1504.09,440.5 1506.09,441.5 1508.09,441.5 1510.09,441.5 1512.09,441.5 1514.09,441.5 1516.09,441.5 1518.09,441.5 1520.09,441.5 1522.09,441.5 1524.09,441.5 1526.09,441.5 1528.09,441.5 1530.09,441.5 1532.09,441.5 1534.09,441.5 1536.09,441.5 1538.09,441.5 1540.09,441.5 1542.09,441.5 1544.09,441.5 1546.09,441.5 1548.09,441.5 1550.09,441.5 1552.09,441.5 1554.09,441.5 1556.09,441.5 1558.09,441.5 1560.09,442.5 1562.09,442.5 1564.09,442.5 1566.09,442.5 1568.09,442.5 1570.09,442.5 1572.09,442.5 1574.09,442.5 1576.09,442.5 1578.09,442.5 1580.09,442.5 1582.09,442.5 1584.09,442.5 1586.09,442.5 1588.09,442.5 1590.09,442.5 1592.09,442.5 1594.09,442.5 1596.09,442.5 1598.09,442.5 1600.09,442.5 1602.09,442.5 1604.09,442.5 1606.09,442.5 1608.09,442.5 1610.09,442.5 1612.09,442.5 1614.09,442.5 1616.09,442.5 1618.09,442.5 1620.09,442.5 1622.09,442.5 1624.09,442.5 1626.09,442.5 1628.09,442.5 1630.09,442.5 1632.09,442.5 1634.09,442.5 1636.09,442.5 1638.09,443.5 1640.09,443.5 1642.09,443.5 1644.09,443.5 1646.09,443.5 1648.09,443.5 1650.09,443.5 1652.09,443.5 1654.09,443.5 1656.09,443.5 1658.09,443.5 1660.09,443.5 1662.09,443.5 1664.09,443.5 1666.09,443.5 1668.09,443.5 1670.09,443.5 1672.09,443.5 1674.09,443.5 1676.09,443.5 1678.09,443.5 1680.09,443.5 1682.09,443.5 1684.09,443.5 1686.09,443.5 1688.09,443.5 1690.09,443.5 1692.09,443.5 1694.09,443.5 1696.09,443.5 1698.09,443.5 1700.09,443.5 1702.09,443.5 1704.09,443.5 1706.09,443.5 1708.09,443.5 1710.09,443.5 1712.09,443.5 1714.09,443.5 1716.09,443.5 1718.09,443.5 1720.09,443.5 1722.09,443.5 1724.09,443.5 1726.09,443.5 1728.09,443.5 1730.09,443.5 1732.09,443.5 1734.09,443.5 1736.09,443.5 1738.09,443.5 1740.09,443.5 1742.09,443.5 1744.09,443.5 1746.09,443.5 1748.09,443.5 1750.09,443.5" fill="none" stroke="#92d23a" stroke-width="3" stroke-linejoin="round" shape-rendering="crispEdges"/><polyline points="1404.09,433.5 1404.59,433.5 1405.09,434.5 1405.59,434.5 1406.09,434.5 1406.59,434.5 1407.09,435.5 1407.59,435.5 1408.09,435.5 1408.59,435.5 1409.09,435.5 1409.59,435.5 1410.09,436.5 1410.59,436.5 1411.09,436.5 1411.59,436.5 1412.09,436.5 1412.59,436.5 1413.09,436.5 1413.59,436.5 1414.09,436.5 1414.59,436.5 1415.09,437.5 1415.59,437.5 1416.09,437.5 1416.59,437.5 1417.09,437.5 1417.59,437.5 1418.09,437.5 1418.59,437.5 1419.09,437.5 1419.59,437.5 1420.09,437.5 1422.09,437.5 1424.09,437.5 1426.09,437.5 1428.09,437.5 1430.09,438.5 1432.09,438.5 1434.09,438.5 1436.09,438.5 1438.09,438.5 1440.09,438.5 1442.09,438.5 1444.09,438.5 1446.09,438.5 1448.09,438.5 1450.09,438.5 1452.09,438.5 1454.09,438.5 1456.09,438.5 1458.09,438.5 1460.09,438.5 1462.09,439.5 1464.09,439.5 1466.09,439.5 1468.09,439.5 1470.09,439.5 1472.09,439.5 1474.09,439.5 1476.09,439.5 1478.09,439.5 1480.09,439.5 1482.09,439.5 1484.09,439.5 1486.09,439.5 1488.09,439.5 1490.09,439.5 1492.09,439.5 1494.09,439.5 1496.09,439.5 1498.09,439.5 1500.09,439.5 1502.09,439.5 1504.09,439.5 1506.09,440.5 1508.09,440.5 1510.09,440.5 1512.09,440.5 1514.09,440.5 1516.09,440.5 1518.09,440.5 1520.09,440.5 1522.09,440.5 1524.09,440.5 1526.09,440.5 1528.09,440.5 1530.09,440.5 1532.09,440.5 1534.09,440.5 1536.09,440.5 1538.09,440.5 1540.09,440.5 1542.09,440.5 1544.09,440.5 1546.09,440.5 1548.09,440.5 1550.09,440.5 1552.09,440.5 1554.09,440.5 1556.09,440.5 1558.09,440.5 1560.09,441.5 1562.09,441.5 1564.09,441.5 1566.09,441.5 1568.09,441.5 1570.09,441.5 1572.09,441.5 1574.09,441.5 1576.09,441.5 1578.09,441.5 1580.09,441.5 1582.09,441.5 1584.09,441.5 1586.09,441.5 1588.09,441.5 1590.09,441.5 1592.09,441.5 1594.09,441.5 1596.09,441.5 1598.09,441.5 1600.09,441.5 1602.09,441.5 1604.09,441.5 1606.09,441.5 1608.09,441.5 1610.09,441.5 1612.09,441.5 1614.09,441.5 1616.09,441.5 1618.09,441.5 1620.09,441.5 1622.09,441.5 1624.09,441.5 1626.09,441.5 1628.09,441.5 1630.09,441.5 1632.09,441.5 1634.09,441.5 1636.09,441.5 1638.09,442.5 1640.09,442.5 1642.09,442.5 1644.09,442.5 1646.09,442.5 1648.09,442.5 1650.09,442.5 1652.09,442.5 1654.09,442.5 1656.09,442.5 1658.09,442.5 1660.09,442.5 1662.09,442.5 1664.09,442.5 1666.09,442.5 1668.09,442.5 1670.09,442.5 1672.09,442.5 1674.09,442.5 1676.09,442.5 1678.09,442.5 1680.09,442.5 1682.09,442.5 1684.09,442.5 1686.09,442.5 1688.09,442.5 1690.09,442.5 1692.09,442.5 1694.09,442.5 1696.09,442.5 1698.09,442.5 1700.09,442.5 1702.09,442.5 1704.09,442.5 1706.09,442.5 1708.09,442.5 1710.09,442.5 1712.09,442.5 1714.09,442.5 1716.09,442.5 1718.09,442.5 1720.09,442.5 1722.09,442.5 1724.09,442.5 1726.09,442.5 1728.09,442.5 1730.09,442.5 1732.09,442.5 1734.09,442.5 1736.09,442.5 1738.09,442.5 1740.09,442.5 1742.09,442.5 1744.09,442.5 1746.09,442.5 1748.09,442.5 1750.09,442.5" fill="none" stroke="#000" stroke-opacity="0.28" stroke-width="1" shape-rendering="crispEdges"/><path d="M499.00 502.5L499.50 498.5M1403.59 445.5L1404.09 434.5" fill="none" stroke="#92d23a" stroke-width="1.5" stroke-linecap="round"/><path d="M42 500h1v1h-1zM44 504h1v1h-1zM85 504h1v1h-1zM88 504h1v1h-1zM95 504h1v1h-1zM106 504h1v1h-1zM124 504h1v1h-1zM131 500h1v1h-1zM148 504h1v1h-1zM170 500h1v1h-1zM195 504h1v1h-1zM236 504h1v1h-1zM245 504h1v1h-1zM255 504h1v1h-1zM257 500h1v1h-1zM258 500h1v1h-1zM299 504h1v1h-1zM327 504h1v1h-1zM361 504h1v1h-1zM364 504h1v1h-1zM377 500h1v1h-1zM386 500h1v1h-1zM388 500h1v1h-1zM390 500h1v1h-1zM400 504h1v1h-1zM407 504h1v1h-1zM413 500h1v1h-1zM432 500h1v1h-1zM436 504h1v1h-1zM449 504h1v1h-1zM463 500h1v1h-1zM465 504h1v1h-1zM487 504h1v1h-1zM504 498h1v1h-1zM510 493h1v1h-1zM515 495h1v1h-1zM519 494h1v1h-1zM522 489h1v1h-1zM532 490h1v1h-1zM540 484h1v1h-1zM553 481h1v1h-1zM577 476h1v1h-1zM591 477h1v1h-1zM640 469h1v1h-1zM643 469h1v1h-1zM646 468h1v1h-1zM650 468h1v1h-1zM663 466h1v1h-1zM715 457h1v1h-1zM717 461h1v1h-1zM736 459h1v1h-1zM738 455h1v1h-1zM746 458h1v1h-1zM750 454h1v1h-1zM764 457h1v1h-1zM784 456h1v1h-1zM795 455h1v1h-1zM798 451h1v1h-1zM800 455h1v1h-1zM823 454h1v1h-1zM832 450h1v1h-1zM849 453h1v1h-1zM889 448h1v1h-1zM893 447h1v1h-1zM899 451h1v1h-1zM958 450h1v1h-1zM981 445h1v1h-1zM1001 445h1v1h-1zM1011 449h1v1h-1zM1012 445h1v1h-1zM1019 445h1v1h-1zM1023 449h1v1h-1zM1025 449h1v1h-1zM1051 448h1v1h-1zM1068 448h1v1h-1zM1070 448h1v1h-1zM1080 448h1v1h-1zM1084 448h1v1h-1zM1121 448h1v1h-1zM1127 448h1v1h-1zM1130 448h1v1h-1zM1157 447h1v1h-1zM1171 447h1v1h-1zM1209 447h1v1h-1zM1217 447h1v1h-1zM1219 443h1v1h-1zM1226 443h1v1h-1zM1230 447h1v1h-1zM1236 447h1v1h-1zM1239 447h1v1h-1zM1251 447h1v1h-1zM1253 443h1v1h-1zM1259 447h1v1h-1zM1279 447h1v1h-1zM1284 447h1v1h-1zM1329 447h1v1h-1zM1336 447h1v1h-1zM1342 443h1v1h-1zM1361 443h1v1h-1zM1363 443h1v1h-1zM1395 447h1v1h-1zM1444 441h1v1h-1zM1447 437h1v1h-1zM1463 442h1v1h-1zM1474 442h1v1h-1zM1491 438h1v1h-1zM1493 442h1v1h-1zM1515 443h1v1h-1zM1517 443h1v1h-1zM1542 439h1v1h-1zM1589 440h1v1h-1zM1592 444h1v1h-1zM1608 440h1v1h-1zM1609 444h1v1h-1zM1637 445h1v1h-1zM1649 445h1v1h-1zM1651 441h1v1h-1zM1656 441h1v1h-1zM1668 441h1v1h-1zM1678 445h1v1h-1zM1680 441h1v1h-1zM1693 445h1v1h-1zM1707 445h1v1h-1zM1721 441h1v1h-1zM1732 445h1v1h-1zM1743 445h1v1h-1z" fill="#92d23a" opacity="0.75"/><polyline points="3,614.5 5,614.5 7,614.5 9,614.5 11,614.5 13,614.5 15,614.5 17,614.5 19,614.5 21,614.5 23,614.5 25,614.5 27,614.5 29,614.5 31,614.5 33,614.5 35,614.5 37,614.5 39,614.5 41,614.5 43,614.5 45,614.5 47,614.5 49,614.5 51,614.5 53,614.5 55,614.5 57,614.5 59,614.5 61,614.5 63,614.5 65,614.5 67,614.5 69,614.5 71,614.5 73,614.5 75,614.5 77,614.5 79,614.5 81,614.5 83,614.5 85,614.5 87,614.5 89,614.5 91,614.5 93,614.5 95,614.5 97,614.5 99,614.5 101,614.5 103,614.5 105,614.5 107,614.5 109,614.5 111,614.5 113,614.5 115,614.5 117,614.5 119,614.5 121,614.5 123,614.5 125,614.5 127,614.5 129,614.5 131,614.5 133,614.5 135,614.5 137,614.5 139,614.5 141,614.5 143,614.5 145,614.5 147,614.5 149,614.5 151,614.5 153,614.5 155,614.5 157,614.5 159,614.5 161,614.5 163,614.5 165,614.5 167,614.5 169,614.5 171,614.5 173,614.5 175,614.5 177,614.5 179,614.5 181,614.5 183,614.5 185,614.5 187,614.5 189,614.5 191,614.5 193,614.5 195,614.5 197,614.5 199,614.5 201,614.5 203,614.5 205,614.5 207,614.5 209,614.5 211,614.5 213,614.5 215,614.5 217,614.5 219,614.5 221,614.5 223,614.5 225,614.5 227,614.5 229,614.5 231,614.5 233,614.5 235,614.5 237,614.5 239,614.5 241,614.5 243,614.5 245,614.5 247,614.5 249,614.5 251,614.5 253,614.5 255,614.5 257,614.5 259,614.5 261,614.5 263,614.5 265,614.5 267,614.5 269,614.5 271,614.5 273,614.5 275,614.5 277,614.5 279,614.5 281,614.5 283,614.5 285,614.5 287,614.5 289,614.5 291,614.5 293,614.5 295,614.5 297,614.5 299,614.5 301,614.5 303,614.5 305,614.5 307,614.5 309,614.5 311,614.5 313,614.5 315,614.5 317,614.5 319,614.5 321,614.5 323,614.5 325,614.5 327,614.5 329,614.5 331,614.5 333,614.5 335,614.5 337,614.5 339,614.5 341,614.5 343,614.5 345,614.5 347,614.5 349,614.5 351,614.5 353,614.5 355,614.5 357,614.5 359,614.5 361,614.5 363,614.5 365,614.5 367,614.5 369,614.5 371,614.5 373,614.5 375,614.5 377,614.5 379,614.5 381,614.5 383,614.5 385,614.5 387,614.5 389,614.5 391,614.5 393,614.5 395,614.5 397,614.5 399,614.5 401,614.5 403,614.5 405,614.5 407,614.5 409,614.5 411,614.5 413,614.5 415,614.5 417,614.5 419,614.5 421,614.5 423,614.5 425,614.5 427,614.5 429,614.5 431,614.5 433,614.5 435,614.5 437,614.5 439,614.5 441,614.5 443,614.5 445,614.5 447,614.5 449,614.5 451,614.5 453,614.5 455,614.5 457,614.5 459,614.5 461,614.5 463,614.5 465,614.5 467,614.5 469,614.5 471,614.5 473,614.5 475,614.5 477,614.5 479,614.5 481,614.5 483,614.5 485,614.5 487,614.5 489,614.5 491,614.5 493,614.5 495,614.5 495.5,614.5 496,614.5 496.5,614.5 497,614.5 497.5,614.5 498,614.5 498.5,614.5 499,614.5" fill="none" stroke="#f7921e" stroke-width="3" stroke-linejoin="round" shape-rendering="crispEdges"/><polyline points="502,551.5 502.5,550.5" fill="none" stroke="#f7921e" stroke-width="3" stroke-linejoin="round" shape-rendering="crispEdges"/><polyline points="503,548.5 503.5,547.5 504,546.5 504.5,545.5 505,544.5 505.5,544.5 506,543.5 506.5,543.5 507,543.5 507.5,543.5 508,543.5 508.5,543.5 509,543.5 509.5,544.5 510,544.5 510.5,544.5 511,545.5 511.5,545.5 512,546.5 512.5,546.5 513,546.5 513.5,547.5 514,547.5 514.5,548.5 515,548.5 515.5,549.5 516,549.5 516.5,550.5 517,550.5 517.5,551.5 518,551.5 518.5,552.5 519,552.5 519.5,553.5 520,554.5 520.5,554.5 521,555.5 521.5,555.5 522,556.5 522.5,556.5 523,557.5 523.5,557.5 524,558.5 524.5,558.5 525,558.5 525.5,559.5 526,559.5 526.5,560.5 527,560.5 527.5,561.5 528,561.5 528.5,562.5 529,562.5 529.5,563.5 530,563.5 530.5,564.5 531,564.5 531.5,564.5 532,565.5 532.5,565.5 533,566.5 533.5,566.5 534,567.5 534.5,567.5 535,567.5 535.5,568.5 536,568.5 536.5,569.5 537,569.5 537.5,569.5 538,570.5 538.5,570.5 539,570.5 539.5,571.5 540,571.5 540.5,572.5 541,572.5 541.5,572.5 542,573.5 542.5,573.5 543,573.5 543.5,574.5 544,574.5 544.5,574.5 545,575.5 545.5,575.5 546,575.5 546.5,576.5 547,576.5 547.5,576.5 548,577.5 548.5,577.5 549,577.5 549.5,578.5 550,578.5 550.5,578.5 551,579.5 551.5,579.5 552,579.5 552.5,580.5 553,580.5 553.5,580.5 554,580.5 554.5,581.5 555,581.5 555.5,581.5 556,582.5 556.5,582.5 557,582.5 557.5,582.5 558,583.5 558.5,583.5 559,583.5 559.5,583.5 560,584.5 560.5,584.5 561,584.5 561.5,584.5 562,585.5 562.5,585.5 563,585.5 563.5,585.5 564,586.5 564.5,586.5 565,586.5 565.5,586.5 566,587.5 566.5,587.5 567,587.5 567.5,587.5 568,588.5 568.5,588.5 569,588.5 569.5,588.5 570,588.5 570.5,589.5 571,589.5 571.5,589.5 572,589.5 572.5,589.5 573,590.5 573.5,590.5 574,590.5 574.5,590.5 575,590.5 575.5,591.5 576,591.5 576.5,591.5 577,591.5 577.5,591.5 578,592.5 578.5,592.5 579,592.5 579.5,592.5 580,592.5 580.5,592.5 581,593.5 581.5,593.5 582,593.5 582.5,593.5 583,593.5 583.5,594.5 584,594.5 584.5,594.5 585,594.5 585.5,594.5 586,594.5 586.5,594.5 587,595.5 587.5,595.5 588,595.5 588.5,595.5 589,595.5 589.5,595.5 590,596.5 590.5,596.5 591,596.5 591.5,596.5 592,596.5 592.5,596.5 593,596.5 593.5,597.5 594,597.5 594.5,597.5 595,597.5 595.5,597.5 596,597.5 596.5,597.5 597,598.5 597.5,598.5 598,598.5 598.5,598.5 599,598.5 599.5,598.5 600,598.5 600.5,598.5 601,599.5 601.5,599.5 602,599.5 602.5,599.5 603,599.5 603.5,599.5 604,599.5 604.5,599.5 605,599.5 605.5,600.5 606,600.5 606.5,600.5 607,600.5 607.5,600.5 608,600.5 608.5,600.5 609,600.5 609.5,600.5 610,601.5 610.5,601.5 611,601.5 611.5,601.5 612,601.5 612.5,601.5 613,601.5 613.5,601.5 614,601.5 614.5,601.5 615,602.5 615.5,602.5 616,602.5 616.5,602.5 617,602.5 617.5,602.5 618,602.5 618.5,602.5 619,602.5 619.5,602.5 620,602.5 620.5,603.5 622.5,603.5 624.5,603.5 626.5,604.5 628.5,604.5 630.5,604.5 632.5,604.5 634.5,605.5 636.5,605.5 638.5,605.5 640.5,605.5 642.5,606.5 644.5,606.5 646.5,606.5 648.5,606.5 650.5,607.5 652.5,607.5 654.5,607.5 656.5,607.5 658.5,607.5 660.5,607.5 662.5,608.5 664.5,608.5 666.5,608.5 668.5,608.5 670.5,608.5 672.5,608.5 674.5,608.5 676.5,609.5 678.5,609.5 680.5,609.5 682.5,609.5 684.5,609.5 686.5,609.5 688.5,609.5 690.5,609.5 692.5,609.5 694.5,610.5 696.5,610.5 698.5,610.5 700.5,610.5 702.5,610.5 704.5,610.5 706.5,610.5 708.5,610.5 710.5,610.5 712.5,610.5 714.5,610.5 716.5,610.5 718.5,610.5 720.5,611.5 722.5,611.5 724.5,611.5 726.5,611.5 728.5,611.5 730.5,611.5 732.5,611.5 734.5,611.5 736.5,611.5 738.5,611.5 740.5,611.5 742.5,611.5 744.5,611.5 746.5,611.5 748.5,611.5 750.5,611.5 752.5,611.5 754.5,611.5 756.5,611.5 758.5,611.5 760.5,611.5 762.5,611.5 764.5,611.5 766.5,611.5 768.5,611.5 770.5,611.5 772.5,612.5 774.5,612.5 776.5,612.5 778.5,612.5 780.5,612.5 782.5,612.5 784.5,612.5 786.5,612.5 788.5,612.5 790.5,612.5 792.5,612.5 794.5,612.5 796.5,612.5 798.5,612.5 800.5,612.5 802.5,612.5 804.5,612.5 806.5,612.5 808.5,612.5 810.5,612.5 812.5,612.5 814.5,612.5 816.5,612.5 818.5,612.5 820.5,612.5 822.5,612.5 824.5,612.5 826.5,612.5 828.5,612.5 830.5,612.5 832.5,612.5 834.5,612.5 836.5,612.5 838.5,612.5 840.5,612.5 842.5,612.5 844.5,612.5 846.5,612.5 848.5,612.5 850.5,612.5 852.5,612.5 854.5,612.5 856.5,612.5 858.5,612.5 860.5,612.5 862.5,612.5 864.5,612.5 866.5,612.5 868.5,612.5 870.5,612.5 872.5,612.5 874.5,612.5 876.5,612.5 878.5,612.5 880.5,612.5 882.5,612.5 884.5,612.5 886.5,612.5 888.5,612.5 890.5,612.5 892.5,612.5 894.5,612.5 896.5,612.5 898.5,612.5 900.5,612.5 902.5,612.5 904.5,612.5 906.5,612.5 908.5,612.5 910.5,612.5 912.5,612.5 914.5,612.5 916.5,612.5 918.5,612.5 920.5,612.5 922.5,612.5 924.5,612.5 926.5,612.5 928.5,612.5 930.5,612.5 932.5,612.5 934.5,612.5 936.5,612.5 938.5,612.5 940.5,612.5 942.5,612.5 944.5,612.5 946.5,612.5 948.5,612.5 950.5,612.5 952.5,612.5 954.5,612.5 956.5,612.5 958.5,612.5 960.5,612.5 962.5,612.5 964.5,612.5 966.5,612.5 968.5,612.5 970.5,612.5 972.5,612.5 974.5,612.5 976.5,612.5 978.5,612.5 980.5,612.5 982.5,612.5 984.5,612.5 986.5,612.5 988.5,612.5 990.5,612.5 992.5,612.5 994.5,612.5 996.5,612.5 998.5,612.5 1000.5,612.5 1002.5,612.5 1004.5,612.5 1006.5,612.5 1008.5,612.5 1010.5,612.5 1012.5,612.5 1014.5,612.5 1016.5,612.5 1018.5,612.5 1020.5,612.5 1022.5,612.5 1024.5,612.5 1026.5,612.5 1028.5,612.5 1030.5,612.5 1032.5,612.5 1034.5,612.5 1036.5,612.5 1038.5,612.5 1040.5,612.5 1042.5,612.5 1044.5,612.5 1046.5,612.5 1048.5,612.5 1050.5,612.5 1052.5,612.5 1054.5,612.5 1056.5,612.5 1058.5,612.5 1060.5,612.5 1062.5,612.5 1064.5,612.5 1066.5,612.5 1068.5,612.5 1070.5,612.5 1072.5,612.5 1074.5,612.5 1076.5,612.5 1078.5,612.5 1080.5,612.5 1082.5,612.5 1084.5,612.5 1086.5,612.5 1088.5,612.5 1090.5,612.5 1092.5,612.5 1094.5,612.5 1096.5,612.5 1098.5,612.5 1100.5,612.5 1102.5,612.5 1104.5,612.5 1106.5,612.5 1108.5,612.5 1110.5,612.5 1112.5,612.5 1114.5,612.5 1116.5,612.5 1118.5,612.5 1120.5,612.5 1122.5,612.5 1124.5,612.5 1126.5,612.5 1128.5,612.5 1130.5,612.5 1132.5,612.5 1134.5,612.5 1136.5,612.5 1138.5,612.5 1140.5,612.5 1142.5,613.5 1144.5,613.5 1146.5,613.5 1148.5,613.5 1150.5,613.5 1152.5,613.5 1154.5,613.5 1156.5,613.5 1158.5,613.5 1160.5,613.5 1162.5,613.5 1164.5,613.5 1166.5,613.5 1168.5,613.5 1170.5,613.5 1172.5,613.5 1174.5,613.5 1176.5,613.5 1178.5,613.5 1180.5,613.5 1182.5,613.5 1184.5,613.5 1186.5,613.5 1188.5,613.5 1190.5,613.5 1192.5,613.5 1194.5,613.5 1196.5,613.5 1198.5,613.5 1200.5,613.5 1202.5,613.5 1204.5,613.5 1206.5,613.5 1208.5,613.5 1210.5,613.5 1212.5,613.5 1214.5,613.5 1216.5,613.5 1218.5,613.5 1220.5,613.5 1222.5,613.5 1224.5,613.5 1226.5,613.5 1228.5,613.5 1230.5,613.5 1232.5,613.5 1234.5,613.5 1236.5,613.5 1238.5,613.5 1240.5,613.5 1242.5,613.5 1244.5,613.5 1246.5,613.5 1248.5,613.5 1250.5,613.5 1252.5,613.5 1254.5,613.5 1256.5,613.5 1258.5,613.5 1260.5,613.5 1262.5,613.5 1264.5,613.5 1266.5,613.5 1268.5,613.5 1270.5,613.5 1272.5,613.5 1274.5,613.5 1276.5,613.5 1278.5,613.5 1280.5,613.5 1282.5,613.5 1284.5,613.5 1286.5,613.5 1288.5,613.5 1290.5,613.5 1292.5,613.5 1294.5,613.5 1296.5,613.5 1298.5,613.5 1300.5,613.5 1302.5,613.5 1304.5,613.5 1306.5,613.5 1308.5,613.5 1310.5,613.5 1312.5,613.5 1314.5,613.5 1316.5,613.5 1318.5,613.5 1320.5,613.5 1322.5,613.5 1324.5,613.5 1326.5,613.5 1328.5,613.5 1330.5,613.5 1332.5,613.5 1334.5,613.5 1336.5,613.5 1338.5,613.5 1340.5,613.5 1342.5,613.5 1344.5,613.5 1346.5,613.5 1348.5,613.5 1350.5,613.5 1352.5,613.5 1354.5,613.5 1356.5,613.5 1358.5,613.5 1360.5,613.5 1362.5,613.5 1364.5,613.5 1366.5,613.5 1368.5,613.5 1370.5,613.5 1372.5,613.5 1374.5,613.5 1376.5,613.5 1378.5,613.5 1380.5,613.5 1382.5,613.5 1384.5,613.5 1386.5,613.5 1388.5,613.5 1390.5,613.5 1392.5,613.5 1394.5,613.5 1396.5,613.5 1397,613.5 1397.5,613.5 1398,613.5 1398.5,613.5 1399,613.5 1399.5,613.5 1400,613.5 1400.5,613.5 1400.59,613.5 1401.09,613.5 1401.59,613.5 1402.09,613.5 1402.59,613.5 1403.09,613.5 1403.59,613.5 1404.09,613.5 1404.59,613.5 1405.09,613.5 1405.59,613.5 1406.09,613.5 1406.59,613.5 1407.09,613.5 1407.59,613.5 1408.09,613.5 1408.59,613.5 1409.09,613.5 1409.59,613.5 1410.09,613.5 1410.59,613.5 1411.09,613.5 1411.59,613.5 1412.09,613.5 1412.59,613.5 1413.09,613.5 1413.59,613.5 1414.09,613.5 1414.59,613.5 1415.09,613.5 1415.59,613.5 1416.09,613.5 1416.59,613.5 1417.09,613.5 1417.59,613.5 1418.09,613.5 1418.59,613.5 1419.09,613.5 1419.59,613.5 1420.09,613.5 1422.09,613.5 1424.09,613.5 1426.09,613.5 1428.09,613.5 1430.09,613.5 1432.09,613.5 1434.09,613.5 1436.09,613.5 1438.09,613.5 1440.09,613.5 1442.09,613.5 1444.09,613.5 1446.09,613.5 1448.09,613.5 1450.09,613.5 1452.09,613.5 1454.09,613.5 1456.09,613.5 1458.09,613.5 1460.09,613.5 1462.09,613.5 1464.09,613.5 1466.09,613.5 1468.09,613.5 1470.09,613.5 1472.09,613.5 1474.09,613.5 1476.09,613.5 1478.09,613.5 1480.09,613.5 1482.09,613.5 1484.09,613.5 1486.09,613.5 1488.09,613.5 1490.09,613.5 1492.09,613.5 1494.09,613.5 1496.09,613.5 1498.09,613.5 1500.09,613.5 1502.09,613.5 1504.09,613.5 1506.09,613.5 1508.09,613.5 1510.09,613.5 1512.09,613.5 1514.09,613.5 1516.09,613.5 1518.09,613.5 1520.09,613.5 1522.09,613.5 1524.09,613.5 1526.09,613.5 1528.09,613.5 1530.09,613.5 1532.09,613.5 1534.09,613.5 1536.09,613.5 1538.09,613.5 1540.09,613.5 1542.09,613.5 1544.09,613.5 1546.09,613.5 1548.09,613.5 1550.09,613.5 1552.09,613.5 1554.09,613.5 1556.09,613.5 1558.09,613.5 1560.09,613.5 1562.09,613.5 1564.09,613.5 1566.09,613.5 1568.09,613.5 1570.09,613.5 1572.09,613.5 1574.09,613.5 1576.09,613.5 1578.09,613.5 1580.09,613.5 1582.09,613.5 1584.09,613.5 1586.09,613.5 1588.09,613.5 1590.09,613.5 1592.09,613.5 1594.09,613.5 1596.09,613.5 1598.09,613.5 1600.09,613.5 1602.09,613.5 1604.09,613.5 1606.09,613.5 1608.09,613.5 1610.09,613.5 1612.09,613.5 1614.09,613.5 1616.09,613.5 1618.09,613.5 1620.09,613.5 1622.09,613.5 1624.09,613.5 1626.09,613.5 1628.09,613.5 1630.09,613.5 1632.09,613.5 1634.09,613.5 1636.09,613.5 1638.09,613.5 1640.09,613.5 1642.09,613.5 1644.09,613.5 1646.09,613.5 1648.09,613.5 1650.09,613.5 1652.09,613.5 1654.09,613.5 1656.09,613.5 1658.09,613.5 1660.09,613.5 1662.09,613.5 1664.09,613.5 1666.09,613.5 1668.09,613.5 1670.09,613.5 1672.09,613.5 1674.09,613.5 1676.09,613.5 1678.09,613.5 1680.09,613.5 1682.09,613.5 1684.09,613.5 1686.09,613.5 1688.09,613.5 1690.09,613.5 1692.09,613.5 1694.09,613.5 1696.09,613.5 1698.09,613.5 1700.09,613.5 1702.09,613.5 1704.09,613.5 1706.09,613.5 1708.09,613.5 1710.09,613.5 1712.09,613.5 1714.09,613.5 1716.09,613.5 1718.09,613.5 1720.09,613.5 1722.09,613.5 1724.09,613.5 1726.09,613.5 1728.09,613.5 1730.09,613.5 1732.09,613.5 1734.09,613.5 1736.09,613.5 1738.09,613.5 1740.09,613.5 1742.09,613.5 1744.09,613.5 1746.09,613.5 1748.09,613.5 1750.09,613.5" fill="none" stroke="#f7921e" stroke-width="3" stroke-linejoin="round" shape-rendering="crispEdges"/><path d="M499.00 614.5L499.50 568.5M499.50 568.5L500.00 564.5M500.00 564.5L500.50 560.5M500.50 560.5L501.00 556.5M501.00 556.5L501.50 554.5M501.50 554.5L502.00 551.5M502.50 550.5L503.00 548.5" fill="none" stroke="#f7921e" stroke-width="1.5" stroke-linecap="round"/><path d="M4 616h1v1h-1zM6 616h1v1h-1zM9 612h1v1h-1zM10 616h1v1h-1zM27 612h1v1h-1zM29 616h1v1h-1zM32 612h1v1h-1zM35 612h1v1h-1zM39 616h1v1h-1zM40 616h1v1h-1zM42 616h1v1h-1zM47 612h1v1h-1zM48 616h1v1h-1zM52 616h1v1h-1zM54 612h1v1h-1zM57 612h1v1h-1zM58 616h1v1h-1zM60 616h1v1h-1zM61 612h1v1h-1zM67 612h1v1h-1zM72 612h1v1h-1zM73 616h1v1h-1zM77 616h1v1h-1zM81 616h1v1h-1zM89 612h1v1h-1zM96 612h1v1h-1zM107 612h1v1h-1zM110 616h1v1h-1zM117 616h1v1h-1zM118 616h1v1h-1zM119 616h1v1h-1zM121 616h1v1h-1zM124 612h1v1h-1zM133 616h1v1h-1zM138 616h1v1h-1zM142 616h1v1h-1zM153 612h1v1h-1zM154 616h1v1h-1zM162 616h1v1h-1zM165 616h1v1h-1zM169 616h1v1h-1zM171 616h1v1h-1zM176 616h1v1h-1zM177 616h1v1h-1zM178 616h1v1h-1zM182 612h1v1h-1zM184 616h1v1h-1zM186 616h1v1h-1zM196 616h1v1h-1zM198 612h1v1h-1zM202 616h1v1h-1zM204 616h1v1h-1zM221 616h1v1h-1zM222 616h1v1h-1zM224 616h1v1h-1zM225 616h1v1h-1zM229 612h1v1h-1zM233 612h1v1h-1zM237 612h1v1h-1zM241 612h1v1h-1zM244 616h1v1h-1zM254 616h1v1h-1zM257 616h1v1h-1zM258 616h1v1h-1zM259 612h1v1h-1zM261 616h1v1h-1zM262 616h1v1h-1zM264 616h1v1h-1zM267 612h1v1h-1zM268 616h1v1h-1zM275 616h1v1h-1zM279 616h1v1h-1zM280 612h1v1h-1zM283 612h1v1h-1zM286 616h1v1h-1zM289 616h1v1h-1zM296 616h1v1h-1zM297 616h1v1h-1zM301 616h1v1h-1zM303 612h1v1h-1zM305 612h1v1h-1zM314 612h1v1h-1zM316 616h1v1h-1zM318 612h1v1h-1zM319 612h1v1h-1zM326 612h1v1h-1zM328 612h1v1h-1zM329 612h1v1h-1zM330 612h1v1h-1zM331 616h1v1h-1zM335 616h1v1h-1zM336 612h1v1h-1zM339 616h1v1h-1zM340 616h1v1h-1zM343 616h1v1h-1zM345 612h1v1h-1zM362 612h1v1h-1zM365 612h1v1h-1zM367 612h1v1h-1zM382 616h1v1h-1zM386 616h1v1h-1zM388 616h1v1h-1zM389 612h1v1h-1zM395 612h1v1h-1zM396 616h1v1h-1zM405 616h1v1h-1zM406 612h1v1h-1zM407 612h1v1h-1zM419 616h1v1h-1zM423 616h1v1h-1zM432 612h1v1h-1zM436 616h1v1h-1zM437 612h1v1h-1zM439 616h1v1h-1zM444 616h1v1h-1zM452 612h1v1h-1zM454 616h1v1h-1zM455 612h1v1h-1zM459 612h1v1h-1zM462 616h1v1h-1zM471 616h1v1h-1zM473 612h1v1h-1zM474 612h1v1h-1zM475 612h1v1h-1zM480 612h1v1h-1zM488 616h1v1h-1zM494 612h1v1h-1zM506 545h1v1h-1zM510 542h1v1h-1zM513 549h1v1h-1zM522 558h1v1h-1zM526 558h1v1h-1zM528 560h1v1h-1zM529 565h1v1h-1zM530 566h1v1h-1zM531 566h1v1h-1zM536 571h1v1h-1zM539 573h1v1h-1zM545 577h1v1h-1zM546 578h1v1h-1zM547 578h1v1h-1zM553 582h1v1h-1zM559 585h1v1h-1zM560 582h1v1h-1zM561 586h1v1h-1zM565 588h1v1h-1zM566 589h1v1h-1zM571 591h1v1h-1zM576 593h1v1h-1zM581 595h1v1h-1zM582 591h1v1h-1zM584 596h1v1h-1zM585 596h1v1h-1zM592 594h1v1h-1zM600 596h1v1h-1zM605 602h1v1h-1zM616 600h1v1h-1zM625 605h1v1h-1zM627 606h1v1h-1zM633 603h1v1h-1zM638 607h1v1h-1zM639 603h1v1h-1zM641 608h1v1h-1zM653 609h1v1h-1zM655 605h1v1h-1zM661 610h1v1h-1zM662 610h1v1h-1zM667 610h1v1h-1zM671 610h1v1h-1zM672 610h1v1h-1zM675 607h1v1h-1zM681 611h1v1h-1zM685 607h1v1h-1zM688 611h1v1h-1zM689 611h1v1h-1zM694 612h1v1h-1zM696 608h1v1h-1zM698 608h1v1h-1zM700 612h1v1h-1zM705 612h1v1h-1zM710 612h1v1h-1zM712 608h1v1h-1zM724 609h1v1h-1zM725 609h1v1h-1zM728 613h1v1h-1zM734 613h1v1h-1zM738 613h1v1h-1zM744 609h1v1h-1zM746 613h1v1h-1zM755 613h1v1h-1zM757 613h1v1h-1zM761 609h1v1h-1zM776 614h1v1h-1zM782 614h1v1h-1zM788 610h1v1h-1zM796 614h1v1h-1zM798 614h1v1h-1zM805 614h1v1h-1zM808 614h1v1h-1zM818 614h1v1h-1zM822 614h1v1h-1zM823 614h1v1h-1zM828 610h1v1h-1zM830 614h1v1h-1zM833 610h1v1h-1zM845 610h1v1h-1zM852 614h1v1h-1zM853 614h1v1h-1zM855 614h1v1h-1zM868 610h1v1h-1zM869 610h1v1h-1zM873 614h1v1h-1zM875 610h1v1h-1zM877 614h1v1h-1zM879 610h1v1h-1zM889 610h1v1h-1zM890 610h1v1h-1zM894 614h1v1h-1zM912 614h1v1h-1zM913 614h1v1h-1zM914 610h1v1h-1zM915 610h1v1h-1zM916 610h1v1h-1zM920 610h1v1h-1zM922 610h1v1h-1zM923 610h1v1h-1zM933 614h1v1h-1zM938 614h1v1h-1zM945 610h1v1h-1zM946 614h1v1h-1zM954 614h1v1h-1zM955 614h1v1h-1zM962 610h1v1h-1zM965 614h1v1h-1zM973 610h1v1h-1zM977 614h1v1h-1zM981 610h1v1h-1zM982 610h1v1h-1zM985 610h1v1h-1zM987 614h1v1h-1zM988 614h1v1h-1zM991 614h1v1h-1zM998 614h1v1h-1zM1003 610h1v1h-1zM1009 610h1v1h-1zM1010 614h1v1h-1zM1012 610h1v1h-1zM1014 614h1v1h-1zM1015 614h1v1h-1zM1016 610h1v1h-1zM1022 614h1v1h-1zM1026 614h1v1h-1zM1029 610h1v1h-1zM1031 614h1v1h-1zM1033 610h1v1h-1zM1035 610h1v1h-1zM1062 614h1v1h-1zM1063 614h1v1h-1zM1065 614h1v1h-1zM1067 614h1v1h-1zM1069 610h1v1h-1zM1070 610h1v1h-1zM1082 614h1v1h-1zM1088 614h1v1h-1zM1089 614h1v1h-1zM1093 610h1v1h-1zM1098 610h1v1h-1zM1107 610h1v1h-1zM1113 614h1v1h-1zM1118 610h1v1h-1zM1119 614h1v1h-1zM1120 610h1v1h-1zM1121 610h1v1h-1zM1124 614h1v1h-1zM1127 610h1v1h-1zM1131 610h1v1h-1zM1133 614h1v1h-1zM1136 614h1v1h-1zM1143 611h1v1h-1zM1144 611h1v1h-1zM1147 615h1v1h-1zM1161 611h1v1h-1zM1163 611h1v1h-1zM1169 615h1v1h-1zM1171 611h1v1h-1zM1172 615h1v1h-1zM1174 611h1v1h-1zM1176 615h1v1h-1zM1177 615h1v1h-1zM1179 615h1v1h-1zM1186 611h1v1h-1zM1191 611h1v1h-1zM1193 611h1v1h-1zM1194 611h1v1h-1zM1200 615h1v1h-1zM1204 611h1v1h-1zM1209 611h1v1h-1zM1212 615h1v1h-1zM1220 615h1v1h-1zM1225 611h1v1h-1zM1226 611h1v1h-1zM1233 615h1v1h-1zM1236 615h1v1h-1zM1243 615h1v1h-1zM1250 615h1v1h-1zM1266 611h1v1h-1zM1275 615h1v1h-1zM1278 611h1v1h-1zM1280 615h1v1h-1zM1283 615h1v1h-1zM1294 615h1v1h-1zM1295 615h1v1h-1zM1297 615h1v1h-1zM1302 611h1v1h-1zM1306 615h1v1h-1zM1312 615h1v1h-1zM1316 611h1v1h-1zM1317 611h1v1h-1zM1319 615h1v1h-1zM1320 615h1v1h-1zM1322 611h1v1h-1zM1324 615h1v1h-1zM1341 611h1v1h-1zM1346 615h1v1h-1zM1351 615h1v1h-1zM1362 611h1v1h-1zM1363 615h1v1h-1zM1366 615h1v1h-1zM1373 615h1v1h-1zM1376 615h1v1h-1zM1380 611h1v1h-1zM1381 615h1v1h-1zM1383 615h1v1h-1zM1384 615h1v1h-1zM1385 615h1v1h-1zM1388 615h1v1h-1zM1394 615h1v1h-1zM1395 615h1v1h-1zM1397 611h1v1h-1zM1400 615h1v1h-1zM1401 615h1v1h-1zM1403 611h1v1h-1zM1406 611h1v1h-1zM1408 611h1v1h-1zM1413 615h1v1h-1zM1423 611h1v1h-1zM1424 615h1v1h-1zM1428 611h1v1h-1zM1439 615h1v1h-1zM1450 611h1v1h-1zM1457 611h1v1h-1zM1466 611h1v1h-1zM1468 615h1v1h-1zM1469 611h1v1h-1zM1471 611h1v1h-1zM1473 615h1v1h-1zM1479 615h1v1h-1zM1486 611h1v1h-1zM1490 615h1v1h-1zM1494 611h1v1h-1zM1496 615h1v1h-1zM1501 611h1v1h-1zM1502 611h1v1h-1zM1503 615h1v1h-1zM1505 615h1v1h-1zM1506 611h1v1h-1zM1507 611h1v1h-1zM1512 611h1v1h-1zM1513 611h1v1h-1zM1516 615h1v1h-1zM1521 615h1v1h-1zM1522 615h1v1h-1zM1526 611h1v1h-1zM1528 611h1v1h-1zM1531 611h1v1h-1zM1533 615h1v1h-1zM1539 611h1v1h-1zM1540 615h1v1h-1zM1543 615h1v1h-1zM1554 615h1v1h-1zM1559 611h1v1h-1zM1565 615h1v1h-1zM1570 611h1v1h-1zM1575 615h1v1h-1zM1583 611h1v1h-1zM1587 611h1v1h-1zM1588 615h1v1h-1zM1597 615h1v1h-1zM1599 615h1v1h-1zM1602 615h1v1h-1zM1606 615h1v1h-1zM1609 615h1v1h-1zM1613 611h1v1h-1zM1614 611h1v1h-1zM1615 611h1v1h-1zM1623 615h1v1h-1zM1625 615h1v1h-1zM1626 611h1v1h-1zM1628 615h1v1h-1zM1632 615h1v1h-1zM1633 615h1v1h-1zM1636 615h1v1h-1zM1640 615h1v1h-1zM1641 611h1v1h-1zM1642 615h1v1h-1zM1646 615h1v1h-1zM1657 615h1v1h-1zM1667 611h1v1h-1zM1669 615h1v1h-1zM1670 611h1v1h-1zM1671 611h1v1h-1zM1674 615h1v1h-1zM1676 615h1v1h-1zM1684 615h1v1h-1zM1688 611h1v1h-1zM1689 615h1v1h-1zM1693 611h1v1h-1zM1703 615h1v1h-1zM1704 615h1v1h-1zM1706 611h1v1h-1zM1719 615h1v1h-1zM1731 611h1v1h-1zM1739 615h1v1h-1zM1741 615h1v1h-1zM1742 611h1v1h-1zM1745 611h1v1h-1zM1747 615h1v1h-1zM1749 611h1v1h-1zM1750 611h1v1h-1z" fill="#f7921e" opacity="0.75"/><polyline points="3,735.5 5,735.5 7,735.5 9,735.5 11,735.5 13,735.5 15,735.5 17,735.5 19,735.5 21,735.5 23,735.5 25,735.5 27,735.5 29,735.5 31,735.5 33,735.5 35,735.5 37,735.5 39,735.5 41,735.5 43,735.5 45,735.5 47,735.5 49,735.5 51,735.5 53,735.5 55,735.5 57,735.5 59,735.5 61,735.5 63,735.5 65,735.5 67,735.5 69,735.5 71,735.5 73,735.5 75,735.5 77,735.5 79,735.5 81,735.5 83,735.5 85,735.5 87,735.5 89,735.5 91,735.5 93,735.5 95,735.5 97,735.5 99,735.5 101,735.5 103,735.5 105,735.5 107,735.5 109,735.5 111,735.5 113,735.5 115,735.5 117,735.5 119,735.5 121,735.5 123,735.5 125,735.5 127,735.5 129,735.5 131,735.5 133,735.5 135,735.5 137,735.5 139,735.5 141,735.5 143,735.5 145,735.5 147,735.5 149,735.5 151,735.5 153,735.5 155,735.5 157,735.5 159,735.5 161,735.5 163,735.5 165,735.5 167,735.5 169,735.5 171,735.5 173,735.5 175,735.5 177,735.5 179,735.5 181,735.5 183,735.5 185,735.5 187,735.5 189,735.5 191,735.5 193,735.5 195,735.5 197,735.5 199,735.5 201,735.5 203,735.5 205,735.5 207,735.5 209,735.5 211,735.5 213,735.5 215,735.5 217,735.5 219,735.5 221,735.5 223,735.5 225,735.5 227,735.5 229,735.5 231,735.5 233,735.5 235,735.5 237,735.5 239,735.5 241,735.5 243,735.5 245,735.5 247,735.5 249,735.5 251,735.5 253,735.5 255,735.5 257,735.5 259,735.5 261,735.5 263,735.5 265,735.5 267,735.5 269,735.5 271,735.5 273,735.5 275,735.5 277,735.5 279,735.5 281,735.5 283,735.5 285,735.5 287,735.5 289,735.5 291,735.5 293,735.5 295,735.5 297,735.5 299,735.5 301,735.5 303,735.5 305,735.5 307,735.5 309,735.5 311,735.5 313,735.5 315,735.5 317,735.5 319,735.5 321,735.5 323,735.5 325,735.5 327,735.5 329,735.5 331,735.5 333,735.5 335,735.5 337,735.5 339,735.5 341,735.5 343,735.5 345,735.5 347,735.5 349,735.5 351,735.5 353,735.5 355,735.5 357,735.5 359,735.5 361,735.5 363,735.5 365,735.5 367,735.5 369,735.5 371,735.5 373,735.5 375,735.5 377,735.5 379,735.5 381,735.5 383,735.5 385,735.5 387,735.5 389,735.5 391,735.5 393,735.5 395,735.5 397,735.5 399,735.5 401,735.5 403,735.5 405,735.5 407,735.5 409,735.5 411,735.5 413,735.5 415,735.5 417,735.5 419,735.5 421,735.5 423,735.5 425,735.5 427,735.5 429,735.5 431,735.5 433,735.5 435,735.5 437,735.5 439,735.5 441,735.5 443,735.5 445,735.5 447,735.5 449,735.5 451,735.5 453,735.5 455,735.5 457,735.5 459,735.5 461,735.5 463,735.5 465,735.5 467,735.5 469,735.5 471,735.5 473,735.5 475,735.5 477,735.5 479,735.5 481,735.5 483,735.5 485,735.5 487,735.5 489,735.5 491,735.5 493,735.5 495,735.5 495.5,735.5 496,735.5 496.5,735.5 497,735.5 497.5,735.5 498,735.5 498.5,735.5 499,735.5" fill="none" stroke="#2828c0" stroke-width="3" stroke-linejoin="round" shape-rendering="crispEdges"/><polyline points="3,734.5 5,734.5 7,734.5 9,734.5 11,734.5 13,734.5 15,734.5 17,734.5 19,734.5 21,734.5 23,734.5 25,734.5 27,734.5 29,734.5 31,734.5 33,734.5 35,734.5 37,734.5 39,734.5 41,734.5 43,734.5 45,734.5 47,734.5 49,734.5 51,734.5 53,734.5 55,734.5 57,734.5 59,734.5 61,734.5 63,734.5 65,734.5 67,734.5 69,734.5 71,734.5 73,734.5 75,734.5 77,734.5 79,734.5 81,734.5 83,734.5 85,734.5 87,734.5 89,734.5 91,734.5 93,734.5 95,734.5 97,734.5 99,734.5 101,734.5 103,734.5 105,734.5 107,734.5 109,734.5 111,734.5 113,734.5 115,734.5 117,734.5 119,734.5 121,734.5 123,734.5 125,734.5 127,734.5 129,734.5 131,734.5 133,734.5 135,734.5 137,734.5 139,734.5 141,734.5 143,734.5 145,734.5 147,734.5 149,734.5 151,734.5 153,734.5 155,734.5 157,734.5 159,734.5 161,734.5 163,734.5 165,734.5 167,734.5 169,734.5 171,734.5 173,734.5 175,734.5 177,734.5 179,734.5 181,734.5 183,734.5 185,734.5 187,734.5 189,734.5 191,734.5 193,734.5 195,734.5 197,734.5 199,734.5 201,734.5 203,734.5 205,734.5 207,734.5 209,734.5 211,734.5 213,734.5 215,734.5 217,734.5 219,734.5 221,734.5 223,734.5 225,734.5 227,734.5 229,734.5 231,734.5 233,734.5 235,734.5 237,734.5 239,734.5 241,734.5 243,734.5 245,734.5 247,734.5 249,734.5 251,734.5 253,734.5 255,734.5 257,734.5 259,734.5 261,734.5 263,734.5 265,734.5 267,734.5 269,734.5 271,734.5 273,734.5 275,734.5 277,734.5 279,734.5 281,734.5 283,734.5 285,734.5 287,734.5 289,734.5 291,734.5 293,734.5 295,734.5 297,734.5 299,734.5 301,734.5 303,734.5 305,734.5 307,734.5 309,734.5 311,734.5 313,734.5 315,734.5 317,734.5 319,734.5 321,734.5 323,734.5 325,734.5 327,734.5 329,734.5 331,734.5 333,734.5 335,734.5 337,734.5 339,734.5 341,734.5 343,734.5 345,734.5 347,734.5 349,734.5 351,734.5 353,734.5 355,734.5 357,734.5 359,734.5 361,734.5 363,734.5 365,734.5 367,734.5 369,734.5 371,734.5 373,734.5 375,734.5 377,734.5 379,734.5 381,734.5 383,734.5 385,734.5 387,734.5 389,734.5 391,734.5 393,734.5 395,734.5 397,734.5 399,734.5 401,734.5 403,734.5 405,734.5 407,734.5 409,734.5 411,734.5 413,734.5 415,734.5 417,734.5 419,734.5 421,734.5 423,734.5 425,734.5 427,734.5 429,734.5 431,734.5 433,734.5 435,734.5 437,734.5 439,734.5 441,734.5 443,734.5 445,734.5 447,734.5 449,734.5 451,734.5 453,734.5 455,734.5 457,734.5 459,734.5 461,734.5 463,734.5 465,734.5 467,734.5 469,734.5 471,734.5 473,734.5 475,734.5 477,734.5 479,734.5 481,734.5 483,734.5 485,734.5 487,734.5 489,734.5 491,734.5 493,734.5 495,734.5 495.5,734.5 496,734.5 496.5,734.5 497,734.5 497.5,734.5 498,734.5 498.5,734.5 499,734.5" fill="none" stroke="#000" stroke-opacity="0.28" stroke-width="1" shape-rendering="crispEdges"/><polyline points="499.5,704.5 500,703.5 500.5,703.5 501,702.5 501.5,702.5 502,701.5 502.5,701.5 503,701.5 503.5,700.5 504,700.5 504.5,699.5 505,699.5 505.5,698.5 506,698.5 506.5,698.5 507,697.5 507.5,697.5 508,697.5 508.5,696.5 509,696.5 509.5,695.5 510,695.5 510.5,695.5 511,694.5 511.5,694.5 512,694.5 512.5,694.5 513,693.5 513.5,693.5 514,693.5 514.5,692.5 515,692.5 515.5,692.5 516,692.5 516.5,691.5 517,691.5 517.5,691.5 518,691.5 518.5,690.5 519,690.5 519.5,690.5 520,690.5 520.5,689.5 521,689.5 521.5,689.5 522,689.5 522.5,689.5 523,688.5 523.5,688.5 524,688.5 524.5,688.5 525,688.5 525.5,687.5 526,687.5 526.5,687.5 527,687.5 527.5,687.5 528,687.5 528.5,686.5 529,686.5 529.5,686.5 530,686.5 530.5,686.5 531,686.5 531.5,685.5 532,685.5 532.5,685.5 533,685.5 533.5,685.5 534,685.5 534.5,685.5 535,684.5 535.5,684.5 536,684.5 536.5,684.5 537,684.5 537.5,684.5 538,684.5 538.5,684.5 539,684.5 539.5,683.5 540,683.5 540.5,683.5 541,683.5 541.5,683.5 542,683.5 542.5,683.5 543,683.5 543.5,683.5 544,683.5 544.5,682.5 545,682.5 545.5,682.5 546,682.5 546.5,682.5 547,682.5 547.5,682.5 548,682.5 548.5,682.5 549,682.5 549.5,682.5 550,682.5 550.5,682.5 551,681.5 551.5,681.5 552,681.5 552.5,681.5 553,681.5 553.5,681.5 554,681.5 554.5,681.5 555,681.5 555.5,681.5 556,681.5 556.5,681.5 557,681.5 557.5,681.5 558,681.5 558.5,681.5 559,681.5 559.5,680.5 560,680.5 560.5,680.5 561,680.5 561.5,680.5 562,680.5 562.5,680.5 563,680.5 563.5,680.5 564,680.5 564.5,680.5 565,680.5 565.5,680.5 566,680.5 566.5,680.5 567,680.5 567.5,680.5 568,680.5 568.5,680.5 569,680.5 569.5,680.5 570,680.5 570.5,680.5 571,680.5 571.5,680.5 572,680.5 572.5,679.5 573,679.5 573.5,679.5 574,679.5 574.5,679.5 575,679.5 575.5,679.5 576,679.5 576.5,679.5 577,679.5 577.5,679.5 578,679.5 578.5,679.5 579,679.5 579.5,679.5 580,679.5 580.5,679.5 581,679.5 581.5,679.5 582,679.5 582.5,679.5 583,679.5 583.5,679.5 584,679.5 584.5,679.5 585,679.5 585.5,679.5 586,679.5 586.5,679.5 587,679.5 587.5,679.5 588,679.5 588.5,679.5 589,679.5 589.5,679.5 590,679.5 590.5,679.5 591,679.5 591.5,679.5 592,679.5 592.5,679.5 593,679.5 593.5,679.5 594,679.5 594.5,679.5 595,679.5 595.5,678.5 596,678.5 596.5,678.5 597,678.5 597.5,678.5 598,678.5 598.5,678.5 599,678.5 599.5,678.5 600,678.5 600.5,678.5 601,678.5 601.5,678.5 602,678.5 602.5,678.5 603,678.5 603.5,678.5 604,678.5 604.5,678.5 605,678.5 605.5,678.5 606,678.5 606.5,678.5 607,678.5 607.5,678.5 608,678.5 608.5,678.5 609,678.5 609.5,678.5 610,678.5 610.5,678.5 611,678.5 611.5,678.5 612,678.5 612.5,678.5 613,678.5 613.5,678.5 614,678.5 614.5,678.5 615,678.5 615.5,678.5 616,678.5 616.5,678.5 617,678.5 617.5,678.5 618,678.5 618.5,678.5 619,678.5 619.5,678.5 620,678.5 620.5,678.5 622.5,678.5 624.5,678.5 626.5,678.5 628.5,678.5 630.5,678.5 632.5,678.5 634.5,678.5 636.5,678.5 638.5,678.5 640.5,678.5 642.5,678.5 644.5,678.5 646.5,678.5 648.5,678.5 650.5,678.5 652.5,678.5 654.5,678.5 656.5,678.5 658.5,678.5 660.5,678.5 662.5,678.5 664.5,678.5 666.5,678.5 668.5,678.5 670.5,678.5 672.5,678.5 674.5,678.5 676.5,678.5 678.5,678.5 680.5,678.5 682.5,678.5 684.5,677.5 686.5,677.5 688.5,677.5 690.5,677.5 692.5,677.5 694.5,677.5 696.5,677.5 698.5,677.5 700.5,677.5 702.5,677.5 704.5,677.5 706.5,677.5 708.5,677.5 710.5,677.5 712.5,677.5 714.5,677.5 716.5,677.5 718.5,677.5 720.5,677.5 722.5,677.5 724.5,677.5 726.5,677.5 728.5,677.5 730.5,677.5 732.5,677.5 734.5,677.5 736.5,677.5 738.5,677.5 740.5,677.5 742.5,677.5 744.5,677.5 746.5,677.5 748.5,677.5 750.5,677.5 752.5,677.5 754.5,677.5 756.5,677.5 758.5,677.5 760.5,677.5 762.5,677.5 764.5,677.5 766.5,677.5 768.5,677.5 770.5,677.5 772.5,677.5 774.5,677.5 776.5,677.5 778.5,677.5 780.5,677.5 782.5,677.5 784.5,677.5 786.5,677.5 788.5,677.5 790.5,677.5 792.5,677.5 794.5,677.5 796.5,677.5 798.5,677.5 800.5,677.5 802.5,677.5 804.5,677.5 806.5,677.5 808.5,677.5 810.5,677.5 812.5,677.5 814.5,677.5 816.5,677.5 818.5,677.5 820.5,677.5 822.5,677.5 824.5,677.5 826.5,677.5 828.5,677.5 830.5,677.5 832.5,677.5 834.5,677.5 836.5,677.5 838.5,677.5 840.5,677.5 842.5,677.5 844.5,677.5 846.5,677.5 848.5,677.5 850.5,677.5 852.5,677.5 854.5,677.5 856.5,677.5 858.5,677.5 860.5,677.5 862.5,677.5 864.5,677.5 866.5,677.5 868.5,677.5 870.5,677.5 872.5,677.5 874.5,677.5 876.5,677.5 878.5,677.5 880.5,677.5 882.5,677.5 884.5,677.5 886.5,677.5 888.5,677.5 890.5,677.5 892.5,677.5 894.5,677.5 896.5,677.5 898.5,677.5 900.5,677.5 902.5,677.5 904.5,677.5 906.5,677.5 908.5,677.5 910.5,677.5 912.5,677.5 914.5,677.5 916.5,677.5 918.5,677.5 920.5,677.5 922.5,677.5 924.5,677.5 926.5,677.5 928.5,677.5 930.5,677.5 932.5,677.5 934.5,677.5 936.5,677.5 938.5,677.5 940.5,677.5 942.5,677.5 944.5,677.5 946.5,677.5 948.5,677.5 950.5,677.5 952.5,677.5 954.5,677.5 956.5,677.5 958.5,677.5 960.5,677.5 962.5,677.5 964.5,677.5 966.5,677.5 968.5,677.5 970.5,677.5 972.5,677.5 974.5,677.5 976.5,677.5 978.5,677.5 980.5,677.5 982.5,677.5 984.5,677.5 986.5,677.5 988.5,677.5 990.5,677.5 992.5,677.5 994.5,677.5 996.5,677.5 998.5,677.5 1000.5,677.5 1002.5,677.5 1004.5,677.5 1006.5,677.5 1008.5,677.5 1010.5,677.5 1012.5,677.5 1014.5,677.5 1016.5,677.5 1018.5,677.5 1020.5,677.5 1022.5,677.5 1024.5,677.5 1026.5,677.5 1028.5,677.5 1030.5,677.5 1032.5,677.5 1034.5,677.5 1036.5,677.5 1038.5,677.5 1040.5,677.5 1042.5,677.5 1044.5,677.5 1046.5,677.5 1048.5,677.5 1050.5,677.5 1052.5,677.5 1054.5,677.5 1056.5,677.5 1058.5,677.5 1060.5,677.5 1062.5,677.5 1064.5,677.5 1066.5,677.5 1068.5,677.5 1070.5,677.5 1072.5,677.5 1074.5,677.5 1076.5,677.5 1078.5,677.5 1080.5,677.5 1082.5,677.5 1084.5,677.5 1086.5,677.5 1088.5,677.5 1090.5,677.5 1092.5,677.5 1094.5,677.5 1096.5,677.5 1098.5,677.5 1100.5,677.5 1102.5,677.5 1104.5,677.5 1106.5,677.5 1108.5,677.5 1110.5,677.5 1112.5,677.5 1114.5,677.5 1116.5,677.5 1118.5,677.5 1120.5,677.5 1122.5,677.5 1124.5,677.5 1126.5,677.5 1128.5,677.5 1130.5,677.5 1132.5,677.5 1134.5,677.5 1136.5,677.5 1138.5,677.5 1140.5,677.5 1142.5,677.5 1144.5,677.5 1146.5,677.5 1148.5,677.5 1150.5,677.5 1152.5,677.5 1154.5,677.5 1156.5,677.5 1158.5,677.5 1160.5,677.5 1162.5,677.5 1164.5,677.5 1166.5,677.5 1168.5,677.5 1170.5,677.5 1172.5,677.5 1174.5,677.5 1176.5,677.5 1178.5,677.5 1180.5,677.5 1182.5,677.5 1184.5,677.5 1186.5,677.5 1188.5,677.5 1190.5,677.5 1192.5,677.5 1194.5,677.5 1196.5,677.5 1198.5,677.5 1200.5,677.5 1202.5,677.5 1204.5,677.5 1206.5,677.5 1208.5,677.5 1210.5,677.5 1212.5,677.5 1214.5,677.5 1216.5,677.5 1218.5,677.5 1220.5,677.5 1222.5,677.5 1224.5,677.5 1226.5,677.5 1228.5,677.5 1230.5,677.5 1232.5,677.5 1234.5,677.5 1236.5,677.5 1238.5,677.5 1240.5,677.5 1242.5,677.5 1244.5,677.5 1246.5,677.5 1248.5,677.5 1250.5,677.5 1252.5,677.5 1254.5,677.5 1256.5,677.5 1258.5,677.5 1260.5,677.5 1262.5,677.5 1264.5,677.5 1266.5,677.5 1268.5,677.5 1270.5,677.5 1272.5,677.5 1274.5,677.5 1276.5,677.5 1278.5,677.5 1280.5,677.5 1282.5,677.5 1284.5,677.5 1286.5,677.5 1288.5,677.5 1290.5,677.5 1292.5,677.5 1294.5,677.5 1296.5,677.5 1298.5,677.5 1300.5,677.5 1302.5,677.5 1304.5,677.5 1306.5,677.5 1308.5,677.5 1310.5,677.5 1312.5,677.5 1314.5,677.5 1316.5,677.5 1318.5,677.5 1320.5,677.5 1322.5,677.5 1324.5,677.5 1326.5,677.5 1328.5,677.5 1330.5,677.5 1332.5,677.5 1334.5,677.5 1336.5,677.5 1338.5,677.5 1340.5,677.5 1342.5,677.5 1344.5,677.5 1346.5,677.5 1348.5,677.5 1350.5,677.5 1352.5,677.5 1354.5,677.5 1356.5,677.5 1358.5,677.5 1360.5,677.5 1362.5,677.5 1364.5,677.5 1366.5,677.5 1368.5,677.5 1370.5,677.5 1372.5,677.5 1374.5,677.5 1376.5,677.5 1378.5,677.5 1380.5,677.5 1382.5,677.5 1384.5,677.5 1386.5,677.5 1388.5,677.5 1390.5,677.5 1392.5,677.5 1394.5,677.5 1396.5,677.5 1397,677.5 1397.5,677.5 1398,677.5 1398.5,677.5 1399,677.5 1399.5,677.5 1400,677.5 1400.5,677.5 1400.59,677.5 1401.09,677.5 1401.59,677.5 1402.09,677.5 1402.59,677.5 1403.09,677.5 1403.59,677.5 1404.09,677.5 1404.59,677.5 1405.09,677.5 1405.59,677.5 1406.09,677.5 1406.59,677.5 1407.09,677.5 1407.59,677.5 1408.09,677.5 1408.59,677.5 1409.09,677.5 1409.59,677.5 1410.09,677.5 1410.59,677.5 1411.09,677.5 1411.59,677.5 1412.09,677.5 1412.59,677.5 1413.09,677.5 1413.59,677.5 1414.09,677.5 1414.59,677.5 1415.09,677.5 1415.59,677.5 1416.09,677.5 1416.59,677.5 1417.09,677.5 1417.59,677.5 1418.09,677.5 1418.59,677.5 1419.09,677.5 1419.59,677.5 1420.09,677.5 1422.09,677.5 1424.09,677.5 1426.09,677.5 1428.09,677.5 1430.09,677.5 1432.09,677.5 1434.09,677.5 1436.09,677.5 1438.09,677.5 1440.09,677.5 1442.09,677.5 1444.09,677.5 1446.09,677.5 1448.09,677.5 1450.09,677.5 1452.09,677.5 1454.09,677.5 1456.09,677.5 1458.09,677.5 1460.09,677.5 1462.09,677.5 1464.09,677.5 1466.09,677.5 1468.09,677.5 1470.09,677.5 1472.09,677.5 1474.09,677.5 1476.09,677.5 1478.09,677.5 1480.09,677.5 1482.09,677.5 1484.09,677.5 1486.09,677.5 1488.09,677.5 1490.09,677.5 1492.09,677.5 1494.09,677.5 1496.09,677.5 1498.09,677.5 1500.09,677.5 1502.09,677.5 1504.09,677.5 1506.09,677.5 1508.09,677.5 1510.09,677.5 1512.09,677.5 1514.09,677.5 1516.09,677.5 1518.09,677.5 1520.09,677.5 1522.09,677.5 1524.09,677.5 1526.09,677.5 1528.09,677.5 1530.09,677.5 1532.09,677.5 1534.09,677.5 1536.09,677.5 1538.09,677.5 1540.09,677.5 1542.09,677.5 1544.09,677.5 1546.09,677.5 1548.09,677.5 1550.09,677.5 1552.09,677.5 1554.09,677.5 1556.09,677.5 1558.09,677.5 1560.09,677.5 1562.09,677.5 1564.09,677.5 1566.09,677.5 1568.09,677.5 1570.09,677.5 1572.09,677.5 1574.09,677.5 1576.09,677.5 1578.09,677.5 1580.09,677.5 1582.09,677.5 1584.09,677.5 1586.09,677.5 1588.09,677.5 1590.09,677.5 1592.09,677.5 1594.09,677.5 1596.09,677.5 1598.09,677.5 1600.09,677.5 1602.09,677.5 1604.09,677.5 1606.09,677.5 1608.09,677.5 1610.09,677.5 1612.09,677.5 1614.09,677.5 1616.09,677.5 1618.09,677.5 1620.09,677.5 1622.09,677.5 1624.09,677.5 1626.09,677.5 1628.09,677.5 1630.09,677.5 1632.09,677.5 1634.09,677.5 1636.09,677.5 1638.09,677.5 1640.09,677.5 1642.09,677.5 1644.09,677.5 1646.09,677.5 1648.09,677.5 1650.09,677.5 1652.09,677.5 1654.09,677.5 1656.09,677.5 1658.09,677.5 1660.09,677.5 1662.09,677.5 1664.09,677.5 1666.09,677.5 1668.09,677.5 1670.09,677.5 1672.09,677.5 1674.09,677.5 1676.09,677.5 1678.09,677.5 1680.09,677.5 1682.09,677.5 1684.09,677.5 1686.09,677.5 1688.09,677.5 1690.09,677.5 1692.09,677.5 1694.09,677.5 1696.09,677.5 1698.09,677.5 1700.09,677.5 1702.09,677.5 1704.09,677.5 1706.09,677.5 1708.09,677.5 1710.09,677.5 1712.09,677.5 1714.09,677.5 1716.09,677.5 1718.09,677.5 1720.09,677.5 1722.09,677.5 1724.09,677.5 1726.09,677.5 1728.09,677.5 1730.09,677.5 1732.09,677.5 1734.09,677.5 1736.09,677.5 1738.09,677.5 1740.09,677.5 1742.09,677.5 1744.09,677.5 1746.09,677.5 1748.09,677.5 1750.09,677.5" fill="none" stroke="#2828c0" stroke-width="3" stroke-linejoin="round" shape-rendering="crispEdges"/><polyline points="499.5,703.5 500,702.5 500.5,702.5 501,701.5 501.5,701.5 502,700.5 502.5,700.5 503,700.5 503.5,699.5 504,699.5 504.5,698.5 505,698.5 505.5,697.5 506,697.5 506.5,697.5 507,696.5 507.5,696.5 508,696.5 508.5,695.5 509,695.5 509.5,694.5 510,694.5 510.5,694.5 511,693.5 511.5,693.5 512,693.5 512.5,693.5 513,692.5 513.5,692.5 514,692.5 514.5,691.5 515,691.5 515.5,691.5 516,691.5 516.5,690.5 517,690.5 517.5,690.5 518,690.5 518.5,689.5 519,689.5 519.5,689.5 520,689.5 520.5,688.5 521,688.5 521.5,688.5 522,688.5 522.5,688.5 523,687.5 523.5,687.5 524,687.5 524.5,687.5 525,687.5 525.5,686.5 526,686.5 526.5,686.5 527,686.5 527.5,686.5 528,686.5 528.5,685.5 529,685.5 529.5,685.5 530,685.5 530.5,685.5 531,685.5 531.5,684.5 532,684.5 532.5,684.5 533,684.5 533.5,684.5 534,684.5 534.5,684.5 535,683.5 535.5,683.5 536,683.5 536.5,683.5 537,683.5 537.5,683.5 538,683.5 538.5,683.5 539,683.5 539.5,682.5 540,682.5 540.5,682.5 541,682.5 541.5,682.5 542,682.5 542.5,682.5 543,682.5 543.5,682.5 544,682.5 544.5,681.5 545,681.5 545.5,681.5 546,681.5 546.5,681.5 547,681.5 547.5,681.5 548,681.5 548.5,681.5 549,681.5 549.5,681.5 550,681.5 550.5,681.5 551,680.5 551.5,680.5 552,680.5 552.5,680.5 553,680.5 553.5,680.5 554,680.5 554.5,680.5 555,680.5 555.5,680.5 556,680.5 556.5,680.5 557,680.5 557.5,680.5 558,680.5 558.5,680.5 559,680.5 559.5,679.5 560,679.5 560.5,679.5 561,679.5 561.5,679.5 562,679.5 562.5,679.5 563,679.5 563.5,679.5 564,679.5 564.5,679.5 565,679.5 565.5,679.5 566,679.5 566.5,679.5 567,679.5 567.5,679.5 568,679.5 568.5,679.5 569,679.5 569.5,679.5 570,679.5 570.5,679.5 571,679.5 571.5,679.5 572,679.5 572.5,678.5 573,678.5 573.5,678.5 574,678.5 574.5,678.5 575,678.5 575.5,678.5 576,678.5 576.5,678.5 577,678.5 577.5,678.5 578,678.5 578.5,678.5 579,678.5 579.5,678.5 580,678.5 580.5,678.5 581,678.5 581.5,678.5 582,678.5 582.5,678.5 583,678.5 583.5,678.5 584,678.5 584.5,678.5 585,678.5 585.5,678.5 586,678.5 586.5,678.5 587,678.5 587.5,678.5 588,678.5 588.5,678.5 589,678.5 589.5,678.5 590,678.5 590.5,678.5 591,678.5 591.5,678.5 592,678.5 592.5,678.5 593,678.5 593.5,678.5 594,678.5 594.5,678.5 595,678.5 595.5,677.5 596,677.5 596.5,677.5 597,677.5 597.5,677.5 598,677.5 598.5,677.5 599,677.5 599.5,677.5 600,677.5 600.5,677.5 601,677.5 601.5,677.5 602,677.5 602.5,677.5 603,677.5 603.5,677.5 604,677.5 604.5,677.5 605,677.5 605.5,677.5 606,677.5 606.5,677.5 607,677.5 607.5,677.5 608,677.5 608.5,677.5 609,677.5 609.5,677.5 610,677.5 610.5,677.5 611,677.5 611.5,677.5 612,677.5 612.5,677.5 613,677.5 613.5,677.5 614,677.5 614.5,677.5 615,677.5 615.5,677.5 616,677.5 616.5,677.5 617,677.5 617.5,677.5 618,677.5 618.5,677.5 619,677.5 619.5,677.5 620,677.5 620.5,677.5 622.5,677.5 624.5,677.5 626.5,677.5 628.5,677.5 630.5,677.5 632.5,677.5 634.5,677.5 636.5,677.5 638.5,677.5 640.5,677.5 642.5,677.5 644.5,677.5 646.5,677.5 648.5,677.5 650.5,677.5 652.5,677.5 654.5,677.5 656.5,677.5 658.5,677.5 660.5,677.5 662.5,677.5 664.5,677.5 666.5,677.5 668.5,677.5 670.5,677.5 672.5,677.5 674.5,677.5 676.5,677.5 678.5,677.5 680.5,677.5 682.5,677.5 684.5,676.5 686.5,676.5 688.5,676.5 690.5,676.5 692.5,676.5 694.5,676.5 696.5,676.5 698.5,676.5 700.5,676.5 702.5,676.5 704.5,676.5 706.5,676.5 708.5,676.5 710.5,676.5 712.5,676.5 714.5,676.5 716.5,676.5 718.5,676.5 720.5,676.5 722.5,676.5 724.5,676.5 726.5,676.5 728.5,676.5 730.5,676.5 732.5,676.5 734.5,676.5 736.5,676.5 738.5,676.5 740.5,676.5 742.5,676.5 744.5,676.5 746.5,676.5 748.5,676.5 750.5,676.5 752.5,676.5 754.5,676.5 756.5,676.5 758.5,676.5 760.5,676.5 762.5,676.5 764.5,676.5 766.5,676.5 768.5,676.5 770.5,676.5 772.5,676.5 774.5,676.5 776.5,676.5 778.5,676.5 780.5,676.5 782.5,676.5 784.5,676.5 786.5,676.5 788.5,676.5 790.5,676.5 792.5,676.5 794.5,676.5 796.5,676.5 798.5,676.5 800.5,676.5 802.5,676.5 804.5,676.5 806.5,676.5 808.5,676.5 810.5,676.5 812.5,676.5 814.5,676.5 816.5,676.5 818.5,676.5 820.5,676.5 822.5,676.5 824.5,676.5 826.5,676.5 828.5,676.5 830.5,676.5 832.5,676.5 834.5,676.5 836.5,676.5 838.5,676.5 840.5,676.5 842.5,676.5 844.5,676.5 846.5,676.5 848.5,676.5 850.5,676.5 852.5,676.5 854.5,676.5 856.5,676.5 858.5,676.5 860.5,676.5 862.5,676.5 864.5,676.5 866.5,676.5 868.5,676.5 870.5,676.5 872.5,676.5 874.5,676.5 876.5,676.5 878.5,676.5 880.5,676.5 882.5,676.5 884.5,676.5 886.5,676.5 888.5,676.5 890.5,676.5 892.5,676.5 894.5,676.5 896.5,676.5 898.5,676.5 900.5,676.5 902.5,676.5 904.5,676.5 906.5,676.5 908.5,676.5 910.5,676.5 912.5,676.5 914.5,676.5 916.5,676.5 918.5,676.5 920.5,676.5 922.5,676.5 924.5,676.5 926.5,676.5 928.5,676.5 930.5,676.5 932.5,676.5 934.5,676.5 936.5,676.5 938.5,676.5 940.5,676.5 942.5,676.5 944.5,676.5 946.5,676.5 948.5,676.5 950.5,676.5 952.5,676.5 954.5,676.5 956.5,676.5 958.5,676.5 960.5,676.5 962.5,676.5 964.5,676.5 966.5,676.5 968.5,676.5 970.5,676.5 972.5,676.5 974.5,676.5 976.5,676.5 978.5,676.5 980.5,676.5 982.5,676.5 984.5,676.5 986.5,676.5 988.5,676.5 990.5,676.5 992.5,676.5 994.5,676.5 996.5,676.5 998.5,676.5 1000.5,676.5 1002.5,676.5 1004.5,676.5 1006.5,676.5 1008.5,676.5 1010.5,676.5 1012.5,676.5 1014.5,676.5 1016.5,676.5 1018.5,676.5 1020.5,676.5 1022.5,676.5 1024.5,676.5 1026.5,676.5 1028.5,676.5 1030.5,676.5 1032.5,676.5 1034.5,676.5 1036.5,676.5 1038.5,676.5 1040.5,676.5 1042.5,676.5 1044.5,676.5 1046.5,676.5 1048.5,676.5 1050.5,676.5 1052.5,676.5 1054.5,676.5 1056.5,676.5 1058.5,676.5 1060.5,676.5 1062.5,676.5 1064.5,676.5 1066.5,676.5 1068.5,676.5 1070.5,676.5 1072.5,676.5 1074.5,676.5 1076.5,676.5 1078.5,676.5 1080.5,676.5 1082.5,676.5 1084.5,676.5 1086.5,676.5 1088.5,676.5 1090.5,676.5 1092.5,676.5 1094.5,676.5 1096.5,676.5 1098.5,676.5 1100.5,676.5 1102.5,676.5 1104.5,676.5 1106.5,676.5 1108.5,676.5 1110.5,676.5 1112.5,676.5 1114.5,676.5 1116.5,676.5 1118.5,676.5 1120.5,676.5 1122.5,676.5 1124.5,676.5 1126.5,676.5 1128.5,676.5 1130.5,676.5 1132.5,676.5 1134.5,676.5 1136.5,676.5 1138.5,676.5 1140.5,676.5 1142.5,676.5 1144.5,676.5 1146.5,676.5 1148.5,676.5 1150.5,676.5 1152.5,676.5 1154.5,676.5 1156.5,676.5 1158.5,676.5 1160.5,676.5 1162.5,676.5 1164.5,676.5 1166.5,676.5 1168.5,676.5 1170.5,676.5 1172.5,676.5 1174.5,676.5 1176.5,676.5 1178.5,676.5 1180.5,676.5 1182.5,676.5 1184.5,676.5 1186.5,676.5 1188.5,676.5 1190.5,676.5 1192.5,676.5 1194.5,676.5 1196.5,676.5 1198.5,676.5 1200.5,676.5 1202.5,676.5 1204.5,676.5 1206.5,676.5 1208.5,676.5 1210.5,676.5 1212.5,676.5 1214.5,676.5 1216.5,676.5 1218.5,676.5 1220.5,676.5 1222.5,676.5 1224.5,676.5 1226.5,676.5 1228.5,676.5 1230.5,676.5 1232.5,676.5 1234.5,676.5 1236.5,676.5 1238.5,676.5 1240.5,676.5 1242.5,676.5 1244.5,676.5 1246.5,676.5 1248.5,676.5 1250.5,676.5 1252.5,676.5 1254.5,676.5 1256.5,676.5 1258.5,676.5 1260.5,676.5 1262.5,676.5 1264.5,676.5 1266.5,676.5 1268.5,676.5 1270.5,676.5 1272.5,676.5 1274.5,676.5 1276.5,676.5 1278.5,676.5 1280.5,676.5 1282.5,676.5 1284.5,676.5 1286.5,676.5 1288.5,676.5 1290.5,676.5 1292.5,676.5 1294.5,676.5 1296.5,676.5 1298.5,676.5 1300.5,676.5 1302.5,676.5 1304.5,676.5 1306.5,676.5 1308.5,676.5 1310.5,676.5 1312.5,676.5 1314.5,676.5 1316.5,676.5 1318.5,676.5 1320.5,676.5 1322.5,676.5 1324.5,676.5 1326.5,676.5 1328.5,676.5 1330.5,676.5 1332.5,676.5 1334.5,676.5 1336.5,676.5 1338.5,676.5 1340.5,676.5 1342.5,676.5 1344.5,676.5 1346.5,676.5 1348.5,676.5 1350.5,676.5 1352.5,676.5 1354.5,676.5 1356.5,676.5 1358.5,676.5 1360.5,676.5 1362.5,676.5 1364.5,676.5 1366.5,676.5 1368.5,676.5 1370.5,676.5 1372.5,676.5 1374.5,676.5 1376.5,676.5 1378.5,676.5 1380.5,676.5 1382.5,676.5 1384.5,676.5 1386.5,676.5 1388.5,676.5 1390.5,676.5 1392.5,676.5 1394.5,676.5 1396.5,676.5 1397,676.5 1397.5,676.5 1398,676.5 1398.5,676.5 1399,676.5 1399.5,676.5 1400,676.5 1400.5,676.5 1400.59,676.5 1401.09,676.5 1401.59,676.5 1402.09,676.5 1402.59,676.5 1403.09,676.5 1403.59,676.5 1404.09,676.5 1404.59,676.5 1405.09,676.5 1405.59,676.5 1406.09,676.5 1406.59,676.5 1407.09,676.5 1407.59,676.5 1408.09,676.5 1408.59,676.5 1409.09,676.5 1409.59,676.5 1410.09,676.5 1410.59,676.5 1411.09,676.5 1411.59,676.5 1412.09,676.5 1412.59,676.5 1413.09,676.5 1413.59,676.5 1414.09,676.5 1414.59,676.5 1415.09,676.5 1415.59,676.5 1416.09,676.5 1416.59,676.5 1417.09,676.5 1417.59,676.5 1418.09,676.5 1418.59,676.5 1419.09,676.5 1419.59,676.5 1420.09,676.5 1422.09,676.5 1424.09,676.5 1426.09,676.5 1428.09,676.5 1430.09,676.5 1432.09,676.5 1434.09,676.5 1436.09,676.5 1438.09,676.5 1440.09,676.5 1442.09,676.5 1444.09,676.5 1446.09,676.5 1448.09,676.5 1450.09,676.5 1452.09,676.5 1454.09,676.5 1456.09,676.5 1458.09,676.5 1460.09,676.5 1462.09,676.5 1464.09,676.5 1466.09,676.5 1468.09,676.5 1470.09,676.5 1472.09,676.5 1474.09,676.5 1476.09,676.5 1478.09,676.5 1480.09,676.5 1482.09,676.5 1484.09,676.5 1486.09,676.5 1488.09,676.5 1490.09,676.5 1492.09,676.5 1494.09,676.5 1496.09,676.5 1498.09,676.5 1500.09,676.5 1502.09,676.5 1504.09,676.5 1506.09,676.5 1508.09,676.5 1510.09,676.5 1512.09,676.5 1514.09,676.5 1516.09,676.5 1518.09,676.5 1520.09,676.5 1522.09,676.5 1524.09,676.5 1526.09,676.5 1528.09,676.5 1530.09,676.5 1532.09,676.5 1534.09,676.5 1536.09,676.5 1538.09,676.5 1540.09,676.5 1542.09,676.5 1544.09,676.5 1546.09,676.5 1548.09,676.5 1550.09,676.5 1552.09,676.5 1554.09,676.5 1556.09,676.5 1558.09,676.5 1560.09,676.5 1562.09,676.5 1564.09,676.5 1566.09,676.5 1568.09,676.5 1570.09,676.5 1572.09,676.5 1574.09,676.5 1576.09,676.5 1578.09,676.5 1580.09,676.5 1582.09,676.5 1584.09,676.5 1586.09,676.5 1588.09,676.5 1590.09,676.5 1592.09,676.5 1594.09,676.5 1596.09,676.5 1598.09,676.5 1600.09,676.5 1602.09,676.5 1604.09,676.5 1606.09,676.5 1608.09,676.5 1610.09,676.5 1612.09,676.5 1614.09,676.5 1616.09,676.5 1618.09,676.5 1620.09,676.5 1622.09,676.5 1624.09,676.5 1626.09,676.5 1628.09,676.5 1630.09,676.5 1632.09,676.5 1634.09,676.5 1636.09,676.5 1638.09,676.5 1640.09,676.5 1642.09,676.5 1644.09,676.5 1646.09,676.5 1648.09,676.5 1650.09,676.5 1652.09,676.5 1654.09,676.5 1656.09,676.5 1658.09,676.5 1660.09,676.5 1662.09,676.5 1664.09,676.5 1666.09,676.5 1668.09,676.5 1670.09,676.5 1672.09,676.5 1674.09,676.5 1676.09,676.5 1678.09,676.5 1680.09,676.5 1682.09,676.5 1684.09,676.5 1686.09,676.5 1688.09,676.5 1690.09,676.5 1692.09,676.5 1694.09,676.5 1696.09,676.5 1698.09,676.5 1700.09,676.5 1702.09,676.5 1704.09,676.5 1706.09,676.5 1708.09,676.5 1710.09,676.5 1712.09,676.5 1714.09,676.5 1716.09,676.5 1718.09,676.5 1720.09,676.5 1722.09,676.5 1724.09,676.5 1726.09,676.5 1728.09,676.5 1730.09,676.5 1732.09,676.5 1734.09,676.5 1736.09,676.5 1738.09,676.5 1740.09,676.5 1742.09,676.5 1744.09,676.5 1746.09,676.5 1748.09,676.5 1750.09,676.5" fill="none" stroke="#000" stroke-opacity="0.28" stroke-width="1" shape-rendering="crispEdges"/><path d="M499.00 735.5L499.50 704.5" fill="none" stroke="#2828c0" stroke-width="1.5" stroke-linecap="round"/><path d="M5 737h1v1h-1zM10 737h1v1h-1zM24 737h1v1h-1zM36 733h1v1h-1zM45 737h1v1h-1zM54 733h1v1h-1zM63 733h1v1h-1zM80 733h1v1h-1zM95 733h1v1h-1zM124 737h1v1h-1zM141 733h1v1h-1zM147 737h1v1h-1zM149 737h1v1h-1zM154 737h1v1h-1zM155 733h1v1h-1zM177 733h1v1h-1zM200 737h1v1h-1zM207 737h1v1h-1zM228 737h1v1h-1zM237 733h1v1h-1zM254 737h1v1h-1zM276 737h1v1h-1zM280 737h1v1h-1zM309 737h1v1h-1zM312 737h1v1h-1zM316 737h1v1h-1zM345 737h1v1h-1zM348 733h1v1h-1zM384 737h1v1h-1zM401 733h1v1h-1zM418 737h1v1h-1zM430 737h1v1h-1zM437 737h1v1h-1zM444 737h1v1h-1zM453 733h1v1h-1zM465 733h1v1h-1zM469 733h1v1h-1zM471 733h1v1h-1zM476 733h1v1h-1zM529 684h1v1h-1zM538 682h1v1h-1zM565 682h1v1h-1zM575 677h1v1h-1zM580 681h1v1h-1zM586 681h1v1h-1zM590 677h1v1h-1zM616 680h1v1h-1zM632 676h1v1h-1zM648 680h1v1h-1zM667 680h1v1h-1zM695 675h1v1h-1zM712 675h1v1h-1zM754 675h1v1h-1zM758 679h1v1h-1zM764 675h1v1h-1zM778 675h1v1h-1zM783 675h1v1h-1zM784 675h1v1h-1zM802 679h1v1h-1zM841 675h1v1h-1zM850 679h1v1h-1zM880 679h1v1h-1zM886 679h1v1h-1zM889 675h1v1h-1zM890 679h1v1h-1zM905 675h1v1h-1zM914 675h1v1h-1zM923 675h1v1h-1zM950 675h1v1h-1zM956 679h1v1h-1zM964 679h1v1h-1zM967 675h1v1h-1zM1001 675h1v1h-1zM1055 675h1v1h-1zM1061 679h1v1h-1zM1070 679h1v1h-1zM1074 679h1v1h-1zM1076 679h1v1h-1zM1078 675h1v1h-1zM1091 679h1v1h-1zM1097 679h1v1h-1zM1112 679h1v1h-1zM1120 679h1v1h-1zM1154 675h1v1h-1zM1165 675h1v1h-1zM1199 679h1v1h-1zM1208 675h1v1h-1zM1241 679h1v1h-1zM1249 675h1v1h-1zM1281 679h1v1h-1zM1327 679h1v1h-1zM1334 679h1v1h-1zM1348 675h1v1h-1zM1381 679h1v1h-1zM1399 679h1v1h-1zM1427 675h1v1h-1zM1452 679h1v1h-1zM1457 679h1v1h-1zM1467 675h1v1h-1zM1474 675h1v1h-1zM1496 679h1v1h-1zM1497 675h1v1h-1zM1508 675h1v1h-1zM1534 679h1v1h-1zM1556 679h1v1h-1zM1557 679h1v1h-1zM1559 679h1v1h-1zM1561 679h1v1h-1zM1581 679h1v1h-1zM1622 675h1v1h-1zM1638 679h1v1h-1zM1643 675h1v1h-1zM1652 679h1v1h-1zM1662 675h1v1h-1zM1665 675h1v1h-1zM1668 679h1v1h-1zM1705 675h1v1h-1zM1711 675h1v1h-1zM1712 675h1v1h-1zM1729 679h1v1h-1zM1737 679h1v1h-1zM1741 679h1v1h-1zM1748 675h1v1h-1z" fill="#2828c0" opacity="0.75"/><polyline points="3,847.5 5,847.5 7,847.5 9,847.5 11,847.5 13,847.5 15,847.5 17,847.5 19,847.5 21,847.5 23,847.5 25,847.5 27,847.5 29,847.5 31,847.5 33,847.5 35,847.5 37,847.5 39,847.5 41,847.5 43,847.5 45,847.5 47,847.5 49,847.5 51,847.5 53,847.5 55,847.5 57,847.5 59,847.5 61,847.5 63,847.5 65,847.5 67,847.5 69,847.5 71,847.5 73,847.5 75,847.5 77,847.5 79,847.5 81,847.5 83,847.5 85,847.5 87,847.5 89,847.5 91,847.5 93,847.5 95,847.5 97,847.5 99,847.5 101,847.5 103,847.5 105,847.5 107,847.5 109,847.5 111,847.5 113,847.5 115,847.5 117,847.5 119,847.5 121,847.5 123,847.5 125,847.5 127,847.5 129,847.5 131,847.5 133,847.5 135,847.5 137,847.5 139,847.5 141,847.5 143,847.5 145,847.5 147,847.5 149,847.5 151,847.5 153,847.5 155,847.5 157,847.5 159,847.5 161,847.5 163,847.5 165,847.5 167,847.5 169,847.5 171,847.5 173,847.5 175,847.5 177,847.5 179,847.5 181,847.5 183,847.5 185,847.5 187,847.5 189,847.5 191,847.5 193,847.5 195,847.5 197,847.5 199,847.5 201,847.5 203,847.5 205,847.5 207,847.5 209,847.5 211,847.5 213,847.5 215,847.5 217,847.5 219,847.5 221,847.5 223,847.5 225,847.5 227,847.5 229,847.5 231,847.5 233,847.5 235,847.5 237,847.5 239,847.5 241,847.5 243,847.5 245,847.5 247,847.5 249,847.5 251,847.5 253,847.5 255,847.5 257,847.5 259,847.5 261,847.5 263,847.5 265,847.5 267,847.5 269,847.5 271,847.5 273,847.5 275,847.5 277,847.5 279,847.5 281,847.5 283,847.5 285,847.5 287,847.5 289,847.5 291,847.5 293,847.5 295,847.5 297,847.5 299,847.5 301,847.5 303,847.5 305,847.5 307,847.5 309,847.5 311,847.5 313,847.5 315,847.5 317,847.5 319,847.5 321,847.5 323,847.5 325,847.5 327,847.5 329,847.5 331,847.5 333,847.5 335,847.5 337,847.5 339,847.5 341,847.5 343,847.5 345,847.5 347,847.5 349,847.5 351,847.5 353,847.5 355,847.5 357,847.5 359,847.5 361,847.5 363,847.5 365,847.5 367,847.5 369,847.5 371,847.5 373,847.5 375,847.5 377,847.5 379,847.5 381,847.5 383,847.5 385,847.5 387,847.5 389,847.5 391,847.5 393,847.5 395,847.5 397,847.5 399,847.5 401,847.5 403,847.5 405,847.5 407,847.5 409,847.5 411,847.5 413,847.5 415,847.5 417,847.5 419,847.5 421,847.5 423,847.5 425,847.5 427,847.5 429,847.5 431,847.5 433,847.5 435,847.5 437,847.5 439,847.5 441,847.5 443,847.5 445,847.5 447,847.5 449,847.5 451,847.5 453,847.5 455,847.5 457,847.5 459,847.5 461,847.5 463,847.5 465,847.5 467,847.5 469,847.5 471,847.5 473,847.5 475,847.5 477,847.5 479,847.5 481,847.5 483,847.5 485,847.5 487,847.5 489,847.5 491,847.5 493,847.5 495,847.5 495.5,847.5 496,847.5 496.5,847.5 497,847.5 497.5,847.5 498,847.5 498.5,847.5 499,847.5" fill="none" stroke="#e33c9e" stroke-width="3" stroke-linejoin="round" shape-rendering="crispEdges"/><polyline points="3,846.5 5,846.5 7,846.5 9,846.5 11,846.5 13,846.5 15,846.5 17,846.5 19,846.5 21,846.5 23,846.5 25,846.5 27,846.5 29,846.5 31,846.5 33,846.5 35,846.5 37,846.5 39,846.5 41,846.5 43,846.5 45,846.5 47,846.5 49,846.5 51,846.5 53,846.5 55,846.5 57,846.5 59,846.5 61,846.5 63,846.5 65,846.5 67,846.5 69,846.5 71,846.5 73,846.5 75,846.5 77,846.5 79,846.5 81,846.5 83,846.5 85,846.5 87,846.5 89,846.5 91,846.5 93,846.5 95,846.5 97,846.5 99,846.5 101,846.5 103,846.5 105,846.5 107,846.5 109,846.5 111,846.5 113,846.5 115,846.5 117,846.5 119,846.5 121,846.5 123,846.5 125,846.5 127,846.5 129,846.5 131,846.5 133,846.5 135,846.5 137,846.5 139,846.5 141,846.5 143,846.5 145,846.5 147,846.5 149,846.5 151,846.5 153,846.5 155,846.5 157,846.5 159,846.5 161,846.5 163,846.5 165,846.5 167,846.5 169,846.5 171,846.5 173,846.5 175,846.5 177,846.5 179,846.5 181,846.5 183,846.5 185,846.5 187,846.5 189,846.5 191,846.5 193,846.5 195,846.5 197,846.5 199,846.5 201,846.5 203,846.5 205,846.5 207,846.5 209,846.5 211,846.5 213,846.5 215,846.5 217,846.5 219,846.5 221,846.5 223,846.5 225,846.5 227,846.5 229,846.5 231,846.5 233,846.5 235,846.5 237,846.5 239,846.5 241,846.5 243,846.5 245,846.5 247,846.5 249,846.5 251,846.5 253,846.5 255,846.5 257,846.5 259,846.5 261,846.5 263,846.5 265,846.5 267,846.5 269,846.5 271,846.5 273,846.5 275,846.5 277,846.5 279,846.5 281,846.5 283,846.5 285,846.5 287,846.5 289,846.5 291,846.5 293,846.5 295,846.5 297,846.5 299,846.5 301,846.5 303,846.5 305,846.5 307,846.5 309,846.5 311,846.5 313,846.5 315,846.5 317,846.5 319,846.5 321,846.5 323,846.5 325,846.5 327,846.5 329,846.5 331,846.5 333,846.5 335,846.5 337,846.5 339,846.5 341,846.5 343,846.5 345,846.5 347,846.5 349,846.5 351,846.5 353,846.5 355,846.5 357,846.5 359,846.5 361,846.5 363,846.5 365,846.5 367,846.5 369,846.5 371,846.5 373,846.5 375,846.5 377,846.5 379,846.5 381,846.5 383,846.5 385,846.5 387,846.5 389,846.5 391,846.5 393,846.5 395,846.5 397,846.5 399,846.5 401,846.5 403,846.5 405,846.5 407,846.5 409,846.5 411,846.5 413,846.5 415,846.5 417,846.5 419,846.5 421,846.5 423,846.5 425,846.5 427,846.5 429,846.5 431,846.5 433,846.5 435,846.5 437,846.5 439,846.5 441,846.5 443,846.5 445,846.5 447,846.5 449,846.5 451,846.5 453,846.5 455,846.5 457,846.5 459,846.5 461,846.5 463,846.5 465,846.5 467,846.5 469,846.5 471,846.5 473,846.5 475,846.5 477,846.5 479,846.5 481,846.5 483,846.5 485,846.5 487,846.5 489,846.5 491,846.5 493,846.5 495,846.5 495.5,846.5 496,846.5 496.5,846.5 497,846.5 497.5,846.5 498,846.5 498.5,846.5 499,846.5" fill="none" stroke="#000" stroke-opacity="0.28" stroke-width="1" shape-rendering="crispEdges"/><polyline points="499.5,817.5 500,816.5 500.5,816.5 501,815.5 501.5,815.5 502,814.5 502.5,814.5 503,813.5 503.5,813.5 504,812.5 504.5,812.5 505,812.5 505.5,811.5 506,811.5 506.5,810.5 507,810.5 507.5,810.5 508,809.5 508.5,809.5 509,808.5 509.5,808.5 510,808.5 510.5,807.5 511,807.5 511.5,807.5 512,806.5 512.5,806.5 513,806.5 513.5,806.5 514,805.5 514.5,805.5 515,805.5 515.5,804.5 516,804.5 516.5,804.5 517,804.5 517.5,803.5 518,803.5 518.5,803.5 519,803.5 519.5,802.5 520,802.5 520.5,802.5 521,802.5 521.5,801.5 522,801.5 522.5,801.5 523,801.5 523.5,801.5 524,800.5 524.5,800.5 525,800.5 525.5,800.5 526,800.5 526.5,799.5 527,799.5 527.5,799.5 528,799.5 528.5,799.5 529,799.5 529.5,798.5 530,798.5 530.5,798.5 531,798.5 531.5,798.5 532,798.5 532.5,798.5 533,797.5 533.5,797.5 534,797.5 534.5,797.5 535,797.5 535.5,797.5 536,797.5 536.5,797.5 537,796.5 537.5,796.5 538,796.5 538.5,796.5 539,796.5 539.5,796.5 540,796.5 540.5,796.5 541,796.5 541.5,795.5 542,795.5 542.5,795.5 543,795.5 543.5,795.5 544,795.5 544.5,795.5 545,795.5 545.5,795.5 546,795.5 546.5,795.5 547,794.5 547.5,794.5 548,794.5 548.5,794.5 549,794.5 549.5,794.5 550,794.5 550.5,794.5 551,794.5 551.5,794.5 552,794.5 552.5,794.5 553,794.5 553.5,794.5 554,793.5 554.5,793.5 555,793.5 555.5,793.5 556,793.5 556.5,793.5 557,793.5 557.5,793.5 558,793.5 558.5,793.5 559,793.5 559.5,793.5 560,793.5 560.5,793.5 561,793.5 561.5,793.5 562,793.5 562.5,793.5 563,793.5 563.5,792.5 564,792.5 564.5,792.5 565,792.5 565.5,792.5 566,792.5 566.5,792.5 567,792.5 567.5,792.5 568,792.5 568.5,792.5 569,792.5 569.5,792.5 570,792.5 570.5,792.5 571,792.5 571.5,792.5 572,792.5 572.5,792.5 573,792.5 573.5,792.5 574,792.5 574.5,792.5 575,792.5 575.5,792.5 576,792.5 576.5,792.5 577,792.5 577.5,792.5 578,791.5 578.5,791.5 579,791.5 579.5,791.5 580,791.5 580.5,791.5 581,791.5 581.5,791.5 582,791.5 582.5,791.5 583,791.5 583.5,791.5 584,791.5 584.5,791.5 585,791.5 585.5,791.5 586,791.5 586.5,791.5 587,791.5 587.5,791.5 588,791.5 588.5,791.5 589,791.5 589.5,791.5 590,791.5 590.5,791.5 591,791.5 591.5,791.5 592,791.5 592.5,791.5 593,791.5 593.5,791.5 594,791.5 594.5,791.5 595,791.5 595.5,791.5 596,791.5 596.5,791.5 597,791.5 597.5,791.5 598,791.5 598.5,791.5 599,791.5 599.5,791.5 600,791.5 600.5,791.5 601,791.5 601.5,791.5 602,791.5 602.5,791.5 603,791.5 603.5,791.5 604,791.5 604.5,791.5 605,791.5 605.5,791.5 606,791.5 606.5,791.5 607,791.5 607.5,791.5 608,791.5 608.5,790.5 609,790.5 609.5,790.5 610,790.5 610.5,790.5 611,790.5 611.5,790.5 612,790.5 612.5,790.5 613,790.5 613.5,790.5 614,790.5 614.5,790.5 615,790.5 615.5,790.5 616,790.5 616.5,790.5 617,790.5 617.5,790.5 618,790.5 618.5,790.5 619,790.5 619.5,790.5 620,790.5 620.5,790.5 622.5,790.5 624.5,790.5 626.5,790.5 628.5,790.5 630.5,790.5 632.5,790.5 634.5,790.5 636.5,790.5 638.5,790.5 640.5,790.5 642.5,790.5 644.5,790.5 646.5,790.5 648.5,790.5 650.5,790.5 652.5,790.5 654.5,790.5 656.5,790.5 658.5,790.5 660.5,790.5 662.5,790.5 664.5,790.5 666.5,790.5 668.5,790.5 670.5,790.5 672.5,790.5 674.5,790.5 676.5,790.5 678.5,790.5 680.5,790.5 682.5,790.5 684.5,790.5 686.5,790.5 688.5,790.5 690.5,790.5 692.5,790.5 694.5,790.5 696.5,790.5 698.5,790.5 700.5,790.5 702.5,790.5 704.5,790.5 706.5,790.5 708.5,790.5 710.5,790.5 712.5,790.5 714.5,790.5 716.5,790.5 718.5,790.5 720.5,790.5 722.5,790.5 724.5,790.5 726.5,790.5 728.5,790.5 730.5,790.5 732.5,790.5 734.5,790.5 736.5,790.5 738.5,790.5 740.5,790.5 742.5,790.5 744.5,790.5 746.5,790.5 748.5,790.5 750.5,790.5 752.5,790.5 754.5,790.5 756.5,790.5 758.5,790.5 760.5,790.5 762.5,790.5 764.5,790.5 766.5,790.5 768.5,790.5 770.5,790.5 772.5,790.5 774.5,790.5 776.5,790.5 778.5,790.5 780.5,790.5 782.5,790.5 784.5,789.5 786.5,789.5 788.5,789.5 790.5,789.5 792.5,789.5 794.5,789.5 796.5,789.5 798.5,789.5 800.5,789.5 802.5,789.5 804.5,789.5 806.5,789.5 808.5,789.5 810.5,789.5 812.5,789.5 814.5,789.5 816.5,789.5 818.5,789.5 820.5,789.5 822.5,789.5 824.5,789.5 826.5,789.5 828.5,789.5 830.5,789.5 832.5,789.5 834.5,789.5 836.5,789.5 838.5,789.5 840.5,789.5 842.5,789.5 844.5,789.5 846.5,789.5 848.5,789.5 850.5,789.5 852.5,789.5 854.5,789.5 856.5,789.5 858.5,789.5 860.5,789.5 862.5,789.5 864.5,789.5 866.5,789.5 868.5,789.5 870.5,789.5 872.5,789.5 874.5,789.5 876.5,789.5 878.5,789.5 880.5,789.5 882.5,789.5 884.5,789.5 886.5,789.5 888.5,789.5 890.5,789.5 892.5,789.5 894.5,789.5 896.5,789.5 898.5,789.5 900.5,789.5 902.5,789.5 904.5,789.5 906.5,789.5 908.5,789.5 910.5,789.5 912.5,789.5 914.5,789.5 916.5,789.5 918.5,789.5 920.5,789.5 922.5,789.5 924.5,789.5 926.5,789.5 928.5,789.5 930.5,789.5 932.5,789.5 934.5,789.5 936.5,789.5 938.5,789.5 940.5,789.5 942.5,789.5 944.5,789.5 946.5,789.5 948.5,789.5 950.5,789.5 952.5,789.5 954.5,789.5 956.5,789.5 958.5,789.5 960.5,789.5 962.5,789.5 964.5,789.5 966.5,789.5 968.5,789.5 970.5,789.5 972.5,789.5 974.5,789.5 976.5,789.5 978.5,789.5 980.5,789.5 982.5,789.5 984.5,789.5 986.5,789.5 988.5,789.5 990.5,789.5 992.5,789.5 994.5,789.5 996.5,789.5 998.5,789.5 1000.5,789.5 1002.5,789.5 1004.5,789.5 1006.5,789.5 1008.5,789.5 1010.5,789.5 1012.5,789.5 1014.5,789.5 1016.5,789.5 1018.5,789.5 1020.5,789.5 1022.5,789.5 1024.5,789.5 1026.5,789.5 1028.5,789.5 1030.5,789.5 1032.5,789.5 1034.5,789.5 1036.5,789.5 1038.5,789.5 1040.5,789.5 1042.5,789.5 1044.5,789.5 1046.5,789.5 1048.5,789.5 1050.5,789.5 1052.5,789.5 1054.5,789.5 1056.5,789.5 1058.5,789.5 1060.5,789.5 1062.5,789.5 1064.5,789.5 1066.5,789.5 1068.5,789.5 1070.5,789.5 1072.5,789.5 1074.5,789.5 1076.5,789.5 1078.5,789.5 1080.5,789.5 1082.5,789.5 1084.5,789.5 1086.5,789.5 1088.5,789.5 1090.5,789.5 1092.5,789.5 1094.5,789.5 1096.5,789.5 1098.5,789.5 1100.5,789.5 1102.5,789.5 1104.5,789.5 1106.5,789.5 1108.5,789.5 1110.5,789.5 1112.5,789.5 1114.5,789.5 1116.5,789.5 1118.5,789.5 1120.5,789.5 1122.5,789.5 1124.5,789.5 1126.5,789.5 1128.5,789.5 1130.5,789.5 1132.5,789.5 1134.5,789.5 1136.5,789.5 1138.5,789.5 1140.5,789.5 1142.5,789.5 1144.5,789.5 1146.5,789.5 1148.5,789.5 1150.5,789.5 1152.5,789.5 1154.5,789.5 1156.5,789.5 1158.5,789.5 1160.5,789.5 1162.5,789.5 1164.5,789.5 1166.5,789.5 1168.5,789.5 1170.5,789.5 1172.5,789.5 1174.5,789.5 1176.5,789.5 1178.5,789.5 1180.5,789.5 1182.5,789.5 1184.5,789.5 1186.5,789.5 1188.5,789.5 1190.5,789.5 1192.5,789.5 1194.5,789.5 1196.5,789.5 1198.5,789.5 1200.5,789.5 1202.5,789.5 1204.5,789.5 1206.5,789.5 1208.5,789.5 1210.5,789.5 1212.5,789.5 1214.5,789.5 1216.5,789.5 1218.5,789.5 1220.5,789.5 1222.5,789.5 1224.5,789.5 1226.5,789.5 1228.5,789.5 1230.5,789.5 1232.5,789.5 1234.5,789.5 1236.5,789.5 1238.5,789.5 1240.5,789.5 1242.5,789.5 1244.5,789.5 1246.5,789.5 1248.5,789.5 1250.5,789.5 1252.5,789.5 1254.5,789.5 1256.5,789.5 1258.5,789.5 1260.5,789.5 1262.5,789.5 1264.5,789.5 1266.5,789.5 1268.5,789.5 1270.5,789.5 1272.5,789.5 1274.5,789.5 1276.5,789.5 1278.5,789.5 1280.5,789.5 1282.5,789.5 1284.5,789.5 1286.5,789.5 1288.5,789.5 1290.5,789.5 1292.5,789.5 1294.5,789.5 1296.5,789.5 1298.5,789.5 1300.5,789.5 1302.5,789.5 1304.5,789.5 1306.5,789.5 1308.5,789.5 1310.5,789.5 1312.5,789.5 1314.5,789.5 1316.5,789.5 1318.5,789.5 1320.5,789.5 1322.5,789.5 1324.5,789.5 1326.5,789.5 1328.5,789.5 1330.5,789.5 1332.5,789.5 1334.5,789.5 1336.5,789.5 1338.5,789.5 1340.5,789.5 1342.5,789.5 1344.5,789.5 1346.5,789.5 1348.5,789.5 1350.5,789.5 1352.5,789.5 1354.5,789.5 1356.5,789.5 1358.5,789.5 1360.5,789.5 1362.5,789.5 1364.5,789.5 1366.5,789.5 1368.5,789.5 1370.5,789.5 1372.5,789.5 1374.5,789.5 1376.5,789.5 1378.5,789.5 1380.5,789.5 1382.5,789.5 1384.5,789.5 1386.5,789.5 1388.5,789.5 1390.5,789.5 1392.5,789.5 1394.5,789.5 1396.5,789.5 1397,789.5 1397.5,789.5 1398,789.5 1398.5,789.5 1399,789.5 1399.5,789.5 1400,789.5 1400.5,789.5 1400.59,789.5 1401.09,789.5 1401.59,789.5 1402.09,789.5 1402.59,789.5 1403.09,789.5 1403.59,789.5 1404.09,789.5 1404.59,789.5 1405.09,789.5 1405.59,789.5 1406.09,789.5 1406.59,789.5 1407.09,789.5 1407.59,789.5 1408.09,789.5 1408.59,789.5 1409.09,789.5 1409.59,789.5 1410.09,789.5 1410.59,789.5 1411.09,789.5 1411.59,789.5 1412.09,789.5 1412.59,789.5 1413.09,789.5 1413.59,789.5 1414.09,789.5 1414.59,789.5 1415.09,789.5 1415.59,789.5 1416.09,789.5 1416.59,789.5 1417.09,789.5 1417.59,789.5 1418.09,789.5 1418.59,789.5 1419.09,789.5 1419.59,789.5 1420.09,789.5 1422.09,789.5 1424.09,789.5 1426.09,789.5 1428.09,789.5 1430.09,789.5 1432.09,789.5 1434.09,789.5 1436.09,789.5 1438.09,789.5 1440.09,789.5 1442.09,789.5 1444.09,789.5 1446.09,789.5 1448.09,789.5 1450.09,789.5 1452.09,789.5 1454.09,789.5 1456.09,789.5 1458.09,789.5 1460.09,789.5 1462.09,789.5 1464.09,789.5 1466.09,789.5 1468.09,789.5 1470.09,789.5 1472.09,789.5 1474.09,789.5 1476.09,789.5 1478.09,789.5 1480.09,789.5 1482.09,789.5 1484.09,789.5 1486.09,789.5 1488.09,789.5 1490.09,789.5 1492.09,789.5 1494.09,789.5 1496.09,789.5 1498.09,789.5 1500.09,789.5 1502.09,789.5 1504.09,789.5 1506.09,789.5 1508.09,789.5 1510.09,789.5 1512.09,789.5 1514.09,789.5 1516.09,789.5 1518.09,789.5 1520.09,789.5 1522.09,789.5 1524.09,789.5 1526.09,789.5 1528.09,789.5 1530.09,789.5 1532.09,789.5 1534.09,789.5 1536.09,789.5 1538.09,789.5 1540.09,789.5 1542.09,789.5 1544.09,789.5 1546.09,789.5 1548.09,789.5 1550.09,789.5 1552.09,789.5 1554.09,789.5 1556.09,789.5 1558.09,789.5 1560.09,789.5 1562.09,789.5 1564.09,789.5 1566.09,789.5 1568.09,789.5 1570.09,789.5 1572.09,789.5 1574.09,789.5 1576.09,789.5 1578.09,789.5 1580.09,789.5 1582.09,789.5 1584.09,789.5 1586.09,789.5 1588.09,789.5 1590.09,789.5 1592.09,789.5 1594.09,789.5 1596.09,789.5 1598.09,789.5 1600.09,789.5 1602.09,789.5 1604.09,789.5 1606.09,789.5 1608.09,789.5 1610.09,789.5 1612.09,789.5 1614.09,789.5 1616.09,789.5 1618.09,789.5 1620.09,789.5 1622.09,789.5 1624.09,789.5 1626.09,789.5 1628.09,789.5 1630.09,789.5 1632.09,789.5 1634.09,789.5 1636.09,789.5 1638.09,789.5 1640.09,789.5 1642.09,789.5 1644.09,789.5 1646.09,789.5 1648.09,789.5 1650.09,789.5 1652.09,789.5 1654.09,789.5 1656.09,789.5 1658.09,789.5 1660.09,789.5 1662.09,789.5 1664.09,789.5 1666.09,789.5 1668.09,789.5 1670.09,789.5 1672.09,789.5 1674.09,789.5 1676.09,789.5 1678.09,789.5 1680.09,789.5 1682.09,789.5 1684.09,789.5 1686.09,789.5 1688.09,789.5 1690.09,789.5 1692.09,789.5 1694.09,789.5 1696.09,789.5 1698.09,789.5 1700.09,789.5 1702.09,789.5 1704.09,789.5 1706.09,789.5 1708.09,789.5 1710.09,789.5 1712.09,789.5 1714.09,789.5 1716.09,789.5 1718.09,789.5 1720.09,789.5 1722.09,789.5 1724.09,789.5 1726.09,789.5 1728.09,789.5 1730.09,789.5 1732.09,789.5 1734.09,789.5 1736.09,789.5 1738.09,789.5 1740.09,789.5 1742.09,789.5 1744.09,789.5 1746.09,789.5 1748.09,789.5 1750.09,789.5" fill="none" stroke="#e33c9e" stroke-width="3" stroke-linejoin="round" shape-rendering="crispEdges"/><polyline points="499.5,816.5 500,815.5 500.5,815.5 501,814.5 501.5,814.5 502,813.5 502.5,813.5 503,812.5 503.5,812.5 504,811.5 504.5,811.5 505,811.5 505.5,810.5 506,810.5 506.5,809.5 507,809.5 507.5,809.5 508,808.5 508.5,808.5 509,807.5 509.5,807.5 510,807.5 510.5,806.5 511,806.5 511.5,806.5 512,805.5 512.5,805.5 513,805.5 513.5,805.5 514,804.5 514.5,804.5 515,804.5 515.5,803.5 516,803.5 516.5,803.5 517,803.5 517.5,802.5 518,802.5 518.5,802.5 519,802.5 519.5,801.5 520,801.5 520.5,801.5 521,801.5 521.5,800.5 522,800.5 522.5,800.5 523,800.5 523.5,800.5 524,799.5 524.5,799.5 525,799.5 525.5,799.5 526,799.5 526.5,798.5 527,798.5 527.5,798.5 528,798.5 528.5,798.5 529,798.5 529.5,797.5 530,797.5 530.5,797.5 531,797.5 531.5,797.5 532,797.5 532.5,797.5 533,796.5 533.5,796.5 534,796.5 534.5,796.5 535,796.5 535.5,796.5 536,796.5 536.5,796.5 537,795.5 537.5,795.5 538,795.5 538.5,795.5 539,795.5 539.5,795.5 540,795.5 540.5,795.5 541,795.5 541.5,794.5 542,794.5 542.5,794.5 543,794.5 543.5,794.5 544,794.5 544.5,794.5 545,794.5 545.5,794.5 546,794.5 546.5,794.5 547,793.5 547.5,793.5 548,793.5 548.5,793.5 549,793.5 549.5,793.5 550,793.5 550.5,793.5 551,793.5 551.5,793.5 552,793.5 552.5,793.5 553,793.5 553.5,793.5 554,792.5 554.5,792.5 555,792.5 555.5,792.5 556,792.5 556.5,792.5 557,792.5 557.5,792.5 558,792.5 558.5,792.5 559,792.5 559.5,792.5 560,792.5 560.5,792.5 561,792.5 561.5,792.5 562,792.5 562.5,792.5 563,792.5 563.5,791.5 564,791.5 564.5,791.5 565,791.5 565.5,791.5 566,791.5 566.5,791.5 567,791.5 567.5,791.5 568,791.5 568.5,791.5 569,791.5 569.5,791.5 570,791.5 570.5,791.5 571,791.5 571.5,791.5 572,791.5 572.5,791.5 573,791.5 573.5,791.5 574,791.5 574.5,791.5 575,791.5 575.5,791.5 576,791.5 576.5,791.5 577,791.5 577.5,791.5 578,790.5 578.5,790.5 579,790.5 579.5,790.5 580,790.5 580.5,790.5 581,790.5 581.5,790.5 582,790.5 582.5,790.5 583,790.5 583.5,790.5 584,790.5 584.5,790.5 585,790.5 585.5,790.5 586,790.5 586.5,790.5 587,790.5 587.5,790.5 588,790.5 588.5,790.5 589,790.5 589.5,790.5 590,790.5 590.5,790.5 591,790.5 591.5,790.5 592,790.5 592.5,790.5 593,790.5 593.5,790.5 594,790.5 594.5,790.5 595,790.5 595.5,790.5 596,790.5 596.5,790.5 597,790.5 597.5,790.5 598,790.5 598.5,790.5 599,790.5 599.5,790.5 600,790.5 600.5,790.5 601,790.5 601.5,790.5 602,790.5 602.5,790.5 603,790.5 603.5,790.5 604,790.5 604.5,790.5 605,790.5 605.5,790.5 606,790.5 606.5,790.5 607,790.5 607.5,790.5 608,790.5 608.5,789.5 609,789.5 609.5,789.5 610,789.5 610.5,789.5 611,789.5 611.5,789.5 612,789.5 612.5,789.5 613,789.5 613.5,789.5 614,789.5 614.5,789.5 615,789.5 615.5,789.5 616,789.5 616.5,789.5 617,789.5 617.5,789.5 618,789.5 618.5,789.5 619,789.5 619.5,789.5 620,789.5 620.5,789.5 622.5,789.5 624.5,789.5 626.5,789.5 628.5,789.5 630.5,789.5 632.5,789.5 634.5,789.5 636.5,789.5 638.5,789.5 640.5,789.5 642.5,789.5 644.5,789.5 646.5,789.5 648.5,789.5 650.5,789.5 652.5,789.5 654.5,789.5 656.5,789.5 658.5,789.5 660.5,789.5 662.5,789.5 664.5,789.5 666.5,789.5 668.5,789.5 670.5,789.5 672.5,789.5 674.5,789.5 676.5,789.5 678.5,789.5 680.5,789.5 682.5,789.5 684.5,789.5 686.5,789.5 688.5,789.5 690.5,789.5 692.5,789.5 694.5,789.5 696.5,789.5 698.5,789.5 700.5,789.5 702.5,789.5 704.5,789.5 706.5,789.5 708.5,789.5 710.5,789.5 712.5,789.5 714.5,789.5 716.5,789.5 718.5,789.5 720.5,789.5 722.5,789.5 724.5,789.5 726.5,789.5 728.5,789.5 730.5,789.5 732.5,789.5 734.5,789.5 736.5,789.5 738.5,789.5 740.5,789.5 742.5,789.5 744.5,789.5 746.5,789.5 748.5,789.5 750.5,789.5 752.5,789.5 754.5,789.5 756.5,789.5 758.5,789.5 760.5,789.5 762.5,789.5 764.5,789.5 766.5,789.5 768.5,789.5 770.5,789.5 772.5,789.5 774.5,789.5 776.5,789.5 778.5,789.5 780.5,789.5 782.5,789.5 784.5,788.5 786.5,788.5 788.5,788.5 790.5,788.5 792.5,788.5 794.5,788.5 796.5,788.5 798.5,788.5 800.5,788.5 802.5,788.5 804.5,788.5 806.5,788.5 808.5,788.5 810.5,788.5 812.5,788.5 814.5,788.5 816.5,788.5 818.5,788.5 820.5,788.5 822.5,788.5 824.5,788.5 826.5,788.5 828.5,788.5 830.5,788.5 832.5,788.5 834.5,788.5 836.5,788.5 838.5,788.5 840.5,788.5 842.5,788.5 844.5,788.5 846.5,788.5 848.5,788.5 850.5,788.5 852.5,788.5 854.5,788.5 856.5,788.5 858.5,788.5 860.5,788.5 862.5,788.5 864.5,788.5 866.5,788.5 868.5,788.5 870.5,788.5 872.5,788.5 874.5,788.5 876.5,788.5 878.5,788.5 880.5,788.5 882.5,788.5 884.5,788.5 886.5,788.5 888.5,788.5 890.5,788.5 892.5,788.5 894.5,788.5 896.5,788.5 898.5,788.5 900.5,788.5 902.5,788.5 904.5,788.5 906.5,788.5 908.5,788.5 910.5,788.5 912.5,788.5 914.5,788.5 916.5,788.5 918.5,788.5 920.5,788.5 922.5,788.5 924.5,788.5 926.5,788.5 928.5,788.5 930.5,788.5 932.5,788.5 934.5,788.5 936.5,788.5 938.5,788.5 940.5,788.5 942.5,788.5 944.5,788.5 946.5,788.5 948.5,788.5 950.5,788.5 952.5,788.5 954.5,788.5 956.5,788.5 958.5,788.5 960.5,788.5 962.5,788.5 964.5,788.5 966.5,788.5 968.5,788.5 970.5,788.5 972.5,788.5 974.5,788.5 976.5,788.5 978.5,788.5 980.5,788.5 982.5,788.5 984.5,788.5 986.5,788.5 988.5,788.5 990.5,788.5 992.5,788.5 994.5,788.5 996.5,788.5 998.5,788.5 1000.5,788.5 1002.5,788.5 1004.5,788.5 1006.5,788.5 1008.5,788.5 1010.5,788.5 1012.5,788.5 1014.5,788.5 1016.5,788.5 1018.5,788.5 1020.5,788.5 1022.5,788.5 1024.5,788.5 1026.5,788.5 1028.5,788.5 1030.5,788.5 1032.5,788.5 1034.5,788.5 1036.5,788.5 1038.5,788.5 1040.5,788.5 1042.5,788.5 1044.5,788.5 1046.5,788.5 1048.5,788.5 1050.5,788.5 1052.5,788.5 1054.5,788.5 1056.5,788.5 1058.5,788.5 1060.5,788.5 1062.5,788.5 1064.5,788.5 1066.5,788.5 1068.5,788.5 1070.5,788.5 1072.5,788.5 1074.5,788.5 1076.5,788.5 1078.5,788.5 1080.5,788.5 1082.5,788.5 1084.5,788.5 1086.5,788.5 1088.5,788.5 1090.5,788.5 1092.5,788.5 1094.5,788.5 1096.5,788.5 1098.5,788.5 1100.5,788.5 1102.5,788.5 1104.5,788.5 1106.5,788.5 1108.5,788.5 1110.5,788.5 1112.5,788.5 1114.5,788.5 1116.5,788.5 1118.5,788.5 1120.5,788.5 1122.5,788.5 1124.5,788.5 1126.5,788.5 1128.5,788.5 1130.5,788.5 1132.5,788.5 1134.5,788.5 1136.5,788.5 1138.5,788.5 1140.5,788.5 1142.5,788.5 1144.5,788.5 1146.5,788.5 1148.5,788.5 1150.5,788.5 1152.5,788.5 1154.5,788.5 1156.5,788.5 1158.5,788.5 1160.5,788.5 1162.5,788.5 1164.5,788.5 1166.5,788.5 1168.5,788.5 1170.5,788.5 1172.5,788.5 1174.5,788.5 1176.5,788.5 1178.5,788.5 1180.5,788.5 1182.5,788.5 1184.5,788.5 1186.5,788.5 1188.5,788.5 1190.5,788.5 1192.5,788.5 1194.5,788.5 1196.5,788.5 1198.5,788.5 1200.5,788.5 1202.5,788.5 1204.5,788.5 1206.5,788.5 1208.5,788.5 1210.5,788.5 1212.5,788.5 1214.5,788.5 1216.5,788.5 1218.5,788.5 1220.5,788.5 1222.5,788.5 1224.5,788.5 1226.5,788.5 1228.5,788.5 1230.5,788.5 1232.5,788.5 1234.5,788.5 1236.5,788.5 1238.5,788.5 1240.5,788.5 1242.5,788.5 1244.5,788.5 1246.5,788.5 1248.5,788.5 1250.5,788.5 1252.5,788.5 1254.5,788.5 1256.5,788.5 1258.5,788.5 1260.5,788.5 1262.5,788.5 1264.5,788.5 1266.5,788.5 1268.5,788.5 1270.5,788.5 1272.5,788.5 1274.5,788.5 1276.5,788.5 1278.5,788.5 1280.5,788.5 1282.5,788.5 1284.5,788.5 1286.5,788.5 1288.5,788.5 1290.5,788.5 1292.5,788.5 1294.5,788.5 1296.5,788.5 1298.5,788.5 1300.5,788.5 1302.5,788.5 1304.5,788.5 1306.5,788.5 1308.5,788.5 1310.5,788.5 1312.5,788.5 1314.5,788.5 1316.5,788.5 1318.5,788.5 1320.5,788.5 1322.5,788.5 1324.5,788.5 1326.5,788.5 1328.5,788.5 1330.5,788.5 1332.5,788.5 1334.5,788.5 1336.5,788.5 1338.5,788.5 1340.5,788.5 1342.5,788.5 1344.5,788.5 1346.5,788.5 1348.5,788.5 1350.5,788.5 1352.5,788.5 1354.5,788.5 1356.5,788.5 1358.5,788.5 1360.5,788.5 1362.5,788.5 1364.5,788.5 1366.5,788.5 1368.5,788.5 1370.5,788.5 1372.5,788.5 1374.5,788.5 1376.5,788.5 1378.5,788.5 1380.5,788.5 1382.5,788.5 1384.5,788.5 1386.5,788.5 1388.5,788.5 1390.5,788.5 1392.5,788.5 1394.5,788.5 1396.5,788.5 1397,788.5 1397.5,788.5 1398,788.5 1398.5,788.5 1399,788.5 1399.5,788.5 1400,788.5 1400.5,788.5 1400.59,788.5 1401.09,788.5 1401.59,788.5 1402.09,788.5 1402.59,788.5 1403.09,788.5 1403.59,788.5 1404.09,788.5 1404.59,788.5 1405.09,788.5 1405.59,788.5 1406.09,788.5 1406.59,788.5 1407.09,788.5 1407.59,788.5 1408.09,788.5 1408.59,788.5 1409.09,788.5 1409.59,788.5 1410.09,788.5 1410.59,788.5 1411.09,788.5 1411.59,788.5 1412.09,788.5 1412.59,788.5 1413.09,788.5 1413.59,788.5 1414.09,788.5 1414.59,788.5 1415.09,788.5 1415.59,788.5 1416.09,788.5 1416.59,788.5 1417.09,788.5 1417.59,788.5 1418.09,788.5 1418.59,788.5 1419.09,788.5 1419.59,788.5 1420.09,788.5 1422.09,788.5 1424.09,788.5 1426.09,788.5 1428.09,788.5 1430.09,788.5 1432.09,788.5 1434.09,788.5 1436.09,788.5 1438.09,788.5 1440.09,788.5 1442.09,788.5 1444.09,788.5 1446.09,788.5 1448.09,788.5 1450.09,788.5 1452.09,788.5 1454.09,788.5 1456.09,788.5 1458.09,788.5 1460.09,788.5 1462.09,788.5 1464.09,788.5 1466.09,788.5 1468.09,788.5 1470.09,788.5 1472.09,788.5 1474.09,788.5 1476.09,788.5 1478.09,788.5 1480.09,788.5 1482.09,788.5 1484.09,788.5 1486.09,788.5 1488.09,788.5 1490.09,788.5 1492.09,788.5 1494.09,788.5 1496.09,788.5 1498.09,788.5 1500.09,788.5 1502.09,788.5 1504.09,788.5 1506.09,788.5 1508.09,788.5 1510.09,788.5 1512.09,788.5 1514.09,788.5 1516.09,788.5 1518.09,788.5 1520.09,788.5 1522.09,788.5 1524.09,788.5 1526.09,788.5 1528.09,788.5 1530.09,788.5 1532.09,788.5 1534.09,788.5 1536.09,788.5 1538.09,788.5 1540.09,788.5 1542.09,788.5 1544.09,788.5 1546.09,788.5 1548.09,788.5 1550.09,788.5 1552.09,788.5 1554.09,788.5 1556.09,788.5 1558.09,788.5 1560.09,788.5 1562.09,788.5 1564.09,788.5 1566.09,788.5 1568.09,788.5 1570.09,788.5 1572.09,788.5 1574.09,788.5 1576.09,788.5 1578.09,788.5 1580.09,788.5 1582.09,788.5 1584.09,788.5 1586.09,788.5 1588.09,788.5 1590.09,788.5 1592.09,788.5 1594.09,788.5 1596.09,788.5 1598.09,788.5 1600.09,788.5 1602.09,788.5 1604.09,788.5 1606.09,788.5 1608.09,788.5 1610.09,788.5 1612.09,788.5 1614.09,788.5 1616.09,788.5 1618.09,788.5 1620.09,788.5 1622.09,788.5 1624.09,788.5 1626.09,788.5 1628.09,788.5 1630.09,788.5 1632.09,788.5 1634.09,788.5 1636.09,788.5 1638.09,788.5 1640.09,788.5 1642.09,788.5 1644.09,788.5 1646.09,788.5 1648.09,788.5 1650.09,788.5 1652.09,788.5 1654.09,788.5 1656.09,788.5 1658.09,788.5 1660.09,788.5 1662.09,788.5 1664.09,788.5 1666.09,788.5 1668.09,788.5 1670.09,788.5 1672.09,788.5 1674.09,788.5 1676.09,788.5 1678.09,788.5 1680.09,788.5 1682.09,788.5 1684.09,788.5 1686.09,788.5 1688.09,788.5 1690.09,788.5 1692.09,788.5 1694.09,788.5 1696.09,788.5 1698.09,788.5 1700.09,788.5 1702.09,788.5 1704.09,788.5 1706.09,788.5 1708.09,788.5 1710.09,788.5 1712.09,788.5 1714.09,788.5 1716.09,788.5 1718.09,788.5 1720.09,788.5 1722.09,788.5 1724.09,788.5 1726.09,788.5 1728.09,788.5 1730.09,788.5 1732.09,788.5 1734.09,788.5 1736.09,788.5 1738.09,788.5 1740.09,788.5 1742.09,788.5 1744.09,788.5 1746.09,788.5 1748.09,788.5 1750.09,788.5" fill="none" stroke="#000" stroke-opacity="0.28" stroke-width="1" shape-rendering="crispEdges"/><path d="M499.00 847.5L499.50 817.5" fill="none" stroke="#e33c9e" stroke-width="1.5" stroke-linecap="round"/><path d="M64 849h1v1h-1zM81 845h1v1h-1zM121 845h1v1h-1zM125 845h1v1h-1zM210 849h1v1h-1zM235 845h1v1h-1zM263 845h1v1h-1zM273 849h1v1h-1zM285 849h1v1h-1zM295 849h1v1h-1zM300 845h1v1h-1zM303 845h1v1h-1zM315 849h1v1h-1zM341 849h1v1h-1zM347 845h1v1h-1zM363 845h1v1h-1zM395 849h1v1h-1zM420 849h1v1h-1zM458 849h1v1h-1zM471 849h1v1h-1zM496 849h1v1h-1zM521 799h1v1h-1zM557 791h1v1h-1zM558 795h1v1h-1zM577 794h1v1h-1zM580 789h1v1h-1zM619 788h1v1h-1zM638 792h1v1h-1zM654 788h1v1h-1zM675 788h1v1h-1zM679 792h1v1h-1zM686 788h1v1h-1zM693 792h1v1h-1zM696 792h1v1h-1zM728 792h1v1h-1zM739 788h1v1h-1zM767 792h1v1h-1zM768 792h1v1h-1zM773 792h1v1h-1zM784 787h1v1h-1zM853 791h1v1h-1zM939 787h1v1h-1zM942 787h1v1h-1zM949 791h1v1h-1zM973 791h1v1h-1zM974 787h1v1h-1zM977 791h1v1h-1zM986 787h1v1h-1zM1013 787h1v1h-1zM1015 791h1v1h-1zM1017 787h1v1h-1zM1025 787h1v1h-1zM1040 787h1v1h-1zM1063 787h1v1h-1zM1064 791h1v1h-1zM1110 791h1v1h-1zM1154 791h1v1h-1zM1158 787h1v1h-1zM1159 787h1v1h-1zM1190 791h1v1h-1zM1200 787h1v1h-1zM1215 787h1v1h-1zM1232 791h1v1h-1zM1257 791h1v1h-1zM1287 791h1v1h-1zM1312 791h1v1h-1zM1315 791h1v1h-1zM1320 787h1v1h-1zM1328 791h1v1h-1zM1340 787h1v1h-1zM1347 791h1v1h-1zM1348 787h1v1h-1zM1365 791h1v1h-1zM1392 791h1v1h-1zM1406 787h1v1h-1zM1425 787h1v1h-1zM1470 787h1v1h-1zM1480 787h1v1h-1zM1492 791h1v1h-1zM1552 791h1v1h-1zM1554 791h1v1h-1zM1561 791h1v1h-1zM1591 787h1v1h-1zM1599 791h1v1h-1zM1615 791h1v1h-1zM1619 787h1v1h-1zM1646 791h1v1h-1zM1649 791h1v1h-1zM1658 787h1v1h-1zM1695 791h1v1h-1zM1735 791h1v1h-1z" fill="#e33c9e" opacity="0.75"/><polyline points="3,962.5 5,962.5 7,962.5 9,962.5 11,962.5 13,962.5 15,962.5 17,962.5 19,962.5 21,962.5 23,962.5 25,962.5 27,962.5 29,962.5 31,962.5 33,962.5 35,962.5 37,962.5 39,962.5 41,962.5 43,962.5 45,962.5 47,962.5 49,962.5 51,962.5 53,962.5 55,962.5 57,962.5 59,962.5 61,962.5 63,962.5 65,962.5 67,962.5 69,962.5 71,962.5 73,962.5 75,962.5 77,962.5 79,962.5 81,962.5 83,962.5 85,962.5 87,962.5 89,962.5 91,962.5 93,962.5 95,962.5 97,962.5 99,962.5 101,962.5 103,962.5 105,962.5 107,962.5 109,962.5 111,962.5 113,962.5 115,962.5 117,962.5 119,962.5 121,962.5 123,962.5 125,962.5 127,962.5 129,962.5 131,962.5 133,962.5 135,962.5 137,962.5 139,962.5 141,962.5 143,962.5 145,962.5 147,962.5 149,962.5 151,962.5 153,962.5 155,962.5 157,962.5 159,962.5 161,962.5 163,962.5 165,962.5 167,962.5 169,962.5 171,962.5 173,962.5 175,962.5 177,962.5 179,962.5 181,962.5 183,962.5 185,962.5 187,962.5 189,962.5 191,962.5 193,962.5 195,962.5 197,962.5 199,962.5 201,962.5 203,962.5 205,962.5 207,962.5 209,962.5 211,962.5 213,962.5 215,962.5 217,962.5 219,962.5 221,962.5 223,962.5 225,962.5 227,962.5 229,962.5 231,962.5 233,962.5 235,962.5 237,962.5 239,962.5 241,962.5 243,962.5 245,962.5 247,962.5 249,962.5 251,962.5 253,962.5 255,962.5 257,962.5 259,962.5 261,962.5 263,962.5 265,962.5 267,962.5 269,962.5 271,962.5 273,962.5 275,962.5 277,962.5 279,962.5 281,962.5 283,962.5 285,962.5 287,962.5 289,962.5 291,962.5 293,962.5 295,962.5 297,962.5 299,962.5 301,962.5 303,962.5 305,962.5 307,962.5 309,962.5 311,962.5 313,962.5 315,962.5 317,962.5 319,962.5 321,962.5 323,962.5 325,962.5 327,962.5 329,962.5 331,962.5 333,962.5 335,962.5 337,962.5 339,962.5 341,962.5 343,962.5 345,962.5 347,962.5 349,962.5 351,962.5 353,962.5 355,962.5 357,962.5 359,962.5 361,962.5 363,962.5 365,962.5 367,962.5 369,962.5 371,962.5 373,962.5 375,962.5 377,962.5 379,962.5 381,962.5 383,962.5 385,962.5 387,962.5 389,962.5 391,962.5 393,962.5 395,962.5 397,962.5 399,962.5 401,962.5 403,962.5 405,962.5 407,962.5 409,962.5 411,962.5 413,962.5 415,962.5 417,962.5 419,962.5 421,962.5 423,962.5 425,962.5 427,962.5 429,962.5 431,962.5 433,962.5 435,962.5 437,962.5 439,962.5 441,962.5 443,962.5 445,962.5 447,962.5 449,962.5 451,962.5 453,962.5 455,962.5 457,962.5 459,962.5 461,962.5 463,962.5 465,962.5 467,962.5 469,962.5 471,962.5 473,962.5 475,962.5 477,962.5 479,962.5 481,962.5 483,962.5 485,962.5 487,962.5 489,962.5 491,962.5 493,962.5 495,962.5 495.5,962.5 496,962.5 496.5,962.5 497,962.5 497.5,962.5 498,962.5 498.5,962.5 499,962.5 499.5,962.5" fill="none" stroke="#08e8a0" stroke-width="3" stroke-linejoin="round" shape-rendering="crispEdges"/><polyline points="3,961.5 5,961.5 7,961.5 9,961.5 11,961.5 13,961.5 15,961.5 17,961.5 19,961.5 21,961.5 23,961.5 25,961.5 27,961.5 29,961.5 31,961.5 33,961.5 35,961.5 37,961.5 39,961.5 41,961.5 43,961.5 45,961.5 47,961.5 49,961.5 51,961.5 53,961.5 55,961.5 57,961.5 59,961.5 61,961.5 63,961.5 65,961.5 67,961.5 69,961.5 71,961.5 73,961.5 75,961.5 77,961.5 79,961.5 81,961.5 83,961.5 85,961.5 87,961.5 89,961.5 91,961.5 93,961.5 95,961.5 97,961.5 99,961.5 101,961.5 103,961.5 105,961.5 107,961.5 109,961.5 111,961.5 113,961.5 115,961.5 117,961.5 119,961.5 121,961.5 123,961.5 125,961.5 127,961.5 129,961.5 131,961.5 133,961.5 135,961.5 137,961.5 139,961.5 141,961.5 143,961.5 145,961.5 147,961.5 149,961.5 151,961.5 153,961.5 155,961.5 157,961.5 159,961.5 161,961.5 163,961.5 165,961.5 167,961.5 169,961.5 171,961.5 173,961.5 175,961.5 177,961.5 179,961.5 181,961.5 183,961.5 185,961.5 187,961.5 189,961.5 191,961.5 193,961.5 195,961.5 197,961.5 199,961.5 201,961.5 203,961.5 205,961.5 207,961.5 209,961.5 211,961.5 213,961.5 215,961.5 217,961.5 219,961.5 221,961.5 223,961.5 225,961.5 227,961.5 229,961.5 231,961.5 233,961.5 235,961.5 237,961.5 239,961.5 241,961.5 243,961.5 245,961.5 247,961.5 249,961.5 251,961.5 253,961.5 255,961.5 257,961.5 259,961.5 261,961.5 263,961.5 265,961.5 267,961.5 269,961.5 271,961.5 273,961.5 275,961.5 277,961.5 279,961.5 281,961.5 283,961.5 285,961.5 287,961.5 289,961.5 291,961.5 293,961.5 295,961.5 297,961.5 299,961.5 301,961.5 303,961.5 305,961.5 307,961.5 309,961.5 311,961.5 313,961.5 315,961.5 317,961.5 319,961.5 321,961.5 323,961.5 325,961.5 327,961.5 329,961.5 331,961.5 333,961.5 335,961.5 337,961.5 339,961.5 341,961.5 343,961.5 345,961.5 347,961.5 349,961.5 351,961.5 353,961.5 355,961.5 357,961.5 359,961.5 361,961.5 363,961.5 365,961.5 367,961.5 369,961.5 371,961.5 373,961.5 375,961.5 377,961.5 379,961.5 381,961.5 383,961.5 385,961.5 387,961.5 389,961.5 391,961.5 393,961.5 395,961.5 397,961.5 399,961.5 401,961.5 403,961.5 405,961.5 407,961.5 409,961.5 411,961.5 413,961.5 415,961.5 417,961.5 419,961.5 421,961.5 423,961.5 425,961.5 427,961.5 429,961.5 431,961.5 433,961.5 435,961.5 437,961.5 439,961.5 441,961.5 443,961.5 445,961.5 447,961.5 449,961.5 451,961.5 453,961.5 455,961.5 457,961.5 459,961.5 461,961.5 463,961.5 465,961.5 467,961.5 469,961.5 471,961.5 473,961.5 475,961.5 477,961.5 479,961.5 481,961.5 483,961.5 485,961.5 487,961.5 489,961.5 491,961.5 493,961.5 495,961.5 495.5,961.5 496,961.5 496.5,961.5 497,961.5 497.5,961.5 498,961.5 498.5,961.5 499,961.5 499.5,961.5" fill="none" stroke="#000" stroke-opacity="0.28" stroke-width="1" shape-rendering="crispEdges"/><polyline points="503,928.5 503.5,927.5 504,926.5 504.5,925.5 505,924.5 505.5,924.5 506,924.5 506.5,923.5 507,923.5 507.5,923.5 508,923.5 508.5,923.5 509,923.5 509.5,923.5 510,923.5 510.5,923.5 511,923.5 511.5,923.5 512,923.5 512.5,923.5 513,923.5 513.5,923.5 514,923.5 514.5,923.5 515,923.5 515.5,923.5 516,923.5 516.5,923.5 517,923.5 517.5,923.5 518,923.5 518.5,923.5 519,923.5 519.5,923.5 520,923.5 520.5,923.5 521,923.5 521.5,923.5 522,923.5 522.5,923.5 523,923.5 523.5,923.5 524,923.5 524.5,923.5 525,923.5 525.5,923.5 526,923.5 526.5,923.5 527,923.5 527.5,923.5 528,923.5 528.5,923.5 529,923.5 529.5,923.5 530,923.5 530.5,923.5 531,923.5 531.5,923.5 532,923.5 532.5,923.5 533,923.5 533.5,923.5 534,923.5 534.5,923.5 535,923.5 535.5,923.5 536,923.5 536.5,923.5 537,923.5 537.5,923.5 538,923.5 538.5,923.5 539,923.5 539.5,923.5 540,923.5 540.5,923.5 541,923.5 541.5,923.5 542,923.5 542.5,923.5 543,923.5 543.5,923.5 544,923.5 544.5,923.5 545,923.5 545.5,923.5 546,923.5 546.5,923.5 547,923.5 547.5,923.5 548,923.5 548.5,923.5 549,923.5 549.5,923.5 550,923.5 550.5,923.5 551,923.5 551.5,923.5 552,923.5 552.5,923.5 553,923.5 553.5,923.5 554,923.5 554.5,923.5 555,923.5 555.5,923.5 556,923.5 556.5,923.5 557,923.5 557.5,923.5 558,923.5 558.5,923.5 559,923.5 559.5,923.5 560,923.5 560.5,923.5 561,923.5 561.5,923.5 562,923.5 562.5,923.5 563,923.5 563.5,923.5 564,923.5 564.5,923.5 565,923.5 565.5,923.5 566,923.5 566.5,923.5 567,923.5 567.5,923.5 568,923.5 568.5,923.5 569,923.5 569.5,923.5 570,923.5 570.5,923.5 571,923.5 571.5,923.5 572,923.5 572.5,923.5 573,923.5 573.5,923.5 574,923.5 574.5,923.5 575,923.5 575.5,923.5 576,923.5 576.5,923.5 577,923.5 577.5,923.5 578,923.5 578.5,923.5 579,923.5 579.5,923.5 580,923.5 580.5,923.5 581,923.5 581.5,923.5 582,923.5 582.5,923.5 583,923.5 583.5,923.5 584,923.5 584.5,923.5 585,923.5 585.5,923.5 586,923.5 586.5,923.5 587,923.5 587.5,923.5 588,923.5 588.5,923.5 589,923.5 589.5,923.5 590,923.5 590.5,923.5 591,923.5 591.5,923.5 592,923.5 592.5,923.5 593,923.5 593.5,923.5 594,923.5 594.5,923.5 595,923.5 595.5,923.5 596,923.5 596.5,923.5 597,923.5 597.5,923.5 598,923.5 598.5,923.5 599,923.5 599.5,923.5 600,923.5 600.5,923.5 601,923.5 601.5,923.5 602,923.5 602.5,923.5 603,923.5 603.5,923.5 604,923.5 604.5,923.5 605,923.5 605.5,923.5 606,923.5 606.5,923.5 607,923.5 607.5,923.5 608,923.5 608.5,923.5 609,923.5 609.5,923.5 610,923.5 610.5,923.5 611,923.5 611.5,923.5 612,923.5 612.5,923.5 613,923.5 613.5,923.5 614,923.5 614.5,923.5 615,923.5 615.5,923.5 616,923.5 616.5,923.5 617,923.5 617.5,923.5 618,923.5 618.5,923.5 619,923.5 619.5,923.5 620,923.5 620.5,923.5 622.5,923.5 624.5,923.5 626.5,923.5 628.5,923.5 630.5,923.5 632.5,923.5 634.5,923.5 636.5,923.5 638.5,923.5 640.5,923.5 642.5,923.5 644.5,923.5 646.5,923.5 648.5,923.5 650.5,923.5 652.5,923.5 654.5,923.5 656.5,923.5 658.5,923.5 660.5,923.5 662.5,923.5 664.5,923.5 666.5,923.5 668.5,923.5 670.5,923.5 672.5,923.5 674.5,923.5 676.5,923.5 678.5,923.5 680.5,923.5 682.5,923.5 684.5,923.5 686.5,923.5 688.5,923.5 690.5,923.5 692.5,923.5 694.5,923.5 696.5,923.5 698.5,923.5 700.5,923.5 702.5,923.5 704.5,923.5 706.5,923.5 708.5,923.5 710.5,923.5 712.5,923.5 714.5,923.5 716.5,923.5 718.5,923.5 720.5,923.5 722.5,923.5 724.5,923.5 726.5,923.5 728.5,923.5 730.5,923.5 732.5,923.5 734.5,923.5 736.5,923.5 738.5,923.5 740.5,923.5 742.5,923.5 744.5,923.5 746.5,923.5 748.5,923.5 750.5,923.5 752.5,923.5 754.5,923.5 756.5,923.5 758.5,923.5 760.5,923.5 762.5,923.5 764.5,923.5 766.5,923.5 768.5,923.5 770.5,923.5 772.5,923.5 774.5,923.5 776.5,923.5 778.5,923.5 780.5,923.5 782.5,923.5 784.5,923.5 786.5,923.5 788.5,923.5 790.5,923.5 792.5,923.5 794.5,923.5 796.5,923.5 798.5,923.5 800.5,923.5 802.5,923.5 804.5,923.5 806.5,923.5 808.5,923.5 810.5,923.5 812.5,923.5 814.5,923.5 816.5,923.5 818.5,923.5 820.5,923.5 822.5,923.5 824.5,923.5 826.5,923.5 828.5,923.5 830.5,923.5 832.5,923.5 834.5,923.5 836.5,923.5 838.5,923.5 840.5,923.5 842.5,923.5 844.5,923.5 846.5,923.5 848.5,923.5 850.5,923.5 852.5,923.5 854.5,923.5 856.5,923.5 858.5,923.5 860.5,923.5 862.5,923.5 864.5,923.5 866.5,923.5 868.5,923.5 870.5,923.5 872.5,923.5 874.5,923.5 876.5,923.5 878.5,923.5 880.5,923.5 882.5,923.5 884.5,923.5 886.5,923.5 888.5,923.5 890.5,923.5 892.5,923.5 894.5,923.5 896.5,923.5 898.5,923.5 900.5,923.5 902.5,923.5 904.5,923.5 906.5,923.5 908.5,923.5 910.5,923.5 912.5,923.5 914.5,923.5 916.5,923.5 918.5,923.5 920.5,923.5 922.5,923.5 924.5,923.5 926.5,923.5 928.5,923.5 930.5,923.5 932.5,923.5 934.5,923.5 936.5,923.5 938.5,923.5 940.5,923.5 942.5,923.5 944.5,923.5 946.5,923.5 948.5,923.5 950.5,923.5 952.5,923.5 954.5,923.5 956.5,923.5 958.5,923.5 960.5,923.5 962.5,923.5 964.5,923.5 966.5,923.5 968.5,923.5 970.5,923.5 972.5,923.5 974.5,923.5 976.5,923.5 978.5,923.5 980.5,923.5 982.5,923.5 984.5,923.5 986.5,923.5 988.5,923.5 990.5,923.5 992.5,923.5 994.5,923.5 996.5,923.5 998.5,923.5 1000.5,923.5 1002.5,923.5 1004.5,923.5 1006.5,923.5 1008.5,923.5 1010.5,923.5 1012.5,923.5 1014.5,923.5 1016.5,923.5 1018.5,923.5 1020.5,923.5 1022.5,923.5 1024.5,923.5 1026.5,923.5 1028.5,923.5 1030.5,923.5 1032.5,923.5 1034.5,923.5 1036.5,923.5 1038.5,923.5 1040.5,923.5 1042.5,923.5 1044.5,923.5 1046.5,923.5 1048.5,923.5 1050.5,923.5 1052.5,923.5 1054.5,923.5 1056.5,923.5 1058.5,923.5 1060.5,923.5 1062.5,923.5 1064.5,923.5 1066.5,923.5 1068.5,923.5 1070.5,923.5 1072.5,923.5 1074.5,923.5 1076.5,923.5 1078.5,923.5 1080.5,923.5 1082.5,923.5 1084.5,923.5 1086.5,923.5 1088.5,923.5 1090.5,923.5 1092.5,923.5 1094.5,923.5 1096.5,923.5 1098.5,923.5 1100.5,923.5 1102.5,923.5 1104.5,923.5 1106.5,923.5 1108.5,923.5 1110.5,923.5 1112.5,923.5 1114.5,923.5 1116.5,923.5 1118.5,923.5 1120.5,923.5 1122.5,923.5 1124.5,923.5 1126.5,923.5 1128.5,923.5 1130.5,923.5 1132.5,923.5 1134.5,923.5 1136.5,923.5 1138.5,923.5 1140.5,923.5 1142.5,923.5 1144.5,923.5 1146.5,923.5 1148.5,923.5 1150.5,923.5 1152.5,923.5 1154.5,923.5 1156.5,923.5 1158.5,923.5 1160.5,923.5 1162.5,923.5 1164.5,923.5 1166.5,923.5 1168.5,923.5 1170.5,923.5 1172.5,923.5 1174.5,923.5 1176.5,923.5 1178.5,923.5 1180.5,923.5 1182.5,923.5 1184.5,923.5 1186.5,923.5 1188.5,923.5 1190.5,923.5 1192.5,923.5 1194.5,923.5 1196.5,923.5 1198.5,923.5 1200.5,923.5 1202.5,923.5 1204.5,923.5 1206.5,923.5 1208.5,923.5 1210.5,923.5 1212.5,923.5 1214.5,923.5 1216.5,923.5 1218.5,923.5 1220.5,923.5 1222.5,923.5 1224.5,923.5 1226.5,923.5 1228.5,923.5 1230.5,923.5 1232.5,923.5 1234.5,923.5 1236.5,923.5 1238.5,923.5 1240.5,923.5 1242.5,923.5 1244.5,923.5 1246.5,923.5 1248.5,923.5 1250.5,923.5 1252.5,923.5 1254.5,923.5 1256.5,923.5 1258.5,923.5 1260.5,923.5 1262.5,923.5 1264.5,923.5 1266.5,923.5 1268.5,923.5 1270.5,923.5 1272.5,923.5 1274.5,923.5 1276.5,923.5 1278.5,923.5 1280.5,923.5 1282.5,923.5 1284.5,923.5 1286.5,923.5 1288.5,923.5 1290.5,923.5 1292.5,923.5 1294.5,923.5 1296.5,923.5 1298.5,923.5 1300.5,923.5 1302.5,923.5 1304.5,923.5 1306.5,923.5 1308.5,923.5 1310.5,923.5 1312.5,923.5 1314.5,923.5 1316.5,923.5 1318.5,923.5 1320.5,923.5 1322.5,923.5 1324.5,923.5 1326.5,923.5 1328.5,923.5 1330.5,923.5 1332.5,923.5 1334.5,923.5 1336.5,923.5 1338.5,923.5 1340.5,923.5 1342.5,923.5 1344.5,923.5 1346.5,923.5 1348.5,923.5 1350.5,923.5 1352.5,923.5 1354.5,923.5 1356.5,923.5 1358.5,923.5 1360.5,923.5 1362.5,923.5 1364.5,923.5 1366.5,923.5 1368.5,923.5 1370.5,923.5 1372.5,923.5 1374.5,923.5 1376.5,923.5 1378.5,923.5 1380.5,923.5 1382.5,923.5 1384.5,923.5 1386.5,923.5 1388.5,923.5 1390.5,923.5 1392.5,923.5 1394.5,923.5 1396.5,923.5 1397,923.5 1397.5,923.5 1398,923.5 1398.5,923.5 1399,923.5 1399.5,923.5 1400,923.5 1400.5,923.5 1400.59,923.5 1401.09,923.5 1401.59,923.5 1402.09,923.5 1402.59,923.5 1403.09,923.5 1403.59,923.5 1404.09,923.5 1404.59,923.5 1405.09,923.5 1405.59,923.5 1406.09,923.5 1406.59,923.5 1407.09,923.5 1407.59,923.5 1408.09,923.5 1408.59,923.5 1409.09,923.5 1409.59,923.5 1410.09,923.5 1410.59,923.5 1411.09,923.5 1411.59,923.5 1412.09,923.5 1412.59,923.5 1413.09,923.5 1413.59,923.5 1414.09,923.5 1414.59,923.5 1415.09,923.5 1415.59,923.5 1416.09,923.5 1416.59,923.5 1417.09,923.5 1417.59,923.5 1418.09,923.5 1418.59,923.5 1419.09,923.5 1419.59,923.5 1420.09,923.5 1422.09,923.5 1424.09,923.5 1426.09,923.5 1428.09,923.5 1430.09,923.5 1432.09,923.5 1434.09,923.5 1436.09,923.5 1438.09,923.5 1440.09,923.5 1442.09,923.5 1444.09,923.5 1446.09,923.5 1448.09,923.5 1450.09,923.5 1452.09,923.5 1454.09,923.5 1456.09,923.5 1458.09,923.5 1460.09,923.5 1462.09,923.5 1464.09,923.5 1466.09,923.5 1468.09,923.5 1470.09,923.5 1472.09,923.5 1474.09,923.5 1476.09,923.5 1478.09,923.5 1480.09,923.5 1482.09,923.5 1484.09,923.5 1486.09,923.5 1488.09,923.5 1490.09,923.5 1492.09,923.5 1494.09,923.5 1496.09,923.5 1498.09,923.5 1500.09,923.5 1502.09,923.5 1504.09,923.5 1506.09,923.5 1508.09,923.5 1510.09,923.5 1512.09,923.5 1514.09,923.5 1516.09,923.5 1518.09,923.5 1520.09,923.5 1522.09,923.5 1524.09,923.5 1526.09,923.5 1528.09,923.5 1530.09,923.5 1532.09,923.5 1534.09,923.5 1536.09,923.5 1538.09,923.5 1540.09,923.5 1542.09,923.5 1544.09,923.5 1546.09,923.5 1548.09,923.5 1550.09,923.5 1552.09,923.5 1554.09,923.5 1556.09,923.5 1558.09,923.5 1560.09,923.5 1562.09,923.5 1564.09,923.5 1566.09,923.5 1568.09,923.5 1570.09,923.5 1572.09,923.5 1574.09,923.5 1576.09,923.5 1578.09,923.5 1580.09,923.5 1582.09,923.5 1584.09,923.5 1586.09,923.5 1588.09,923.5 1590.09,923.5 1592.09,923.5 1594.09,923.5 1596.09,923.5 1598.09,923.5 1600.09,923.5 1602.09,923.5 1604.09,923.5 1606.09,923.5 1608.09,923.5 1610.09,923.5 1612.09,923.5 1614.09,923.5 1616.09,923.5 1618.09,923.5 1620.09,923.5 1622.09,923.5 1624.09,923.5 1626.09,923.5 1628.09,923.5 1630.09,923.5 1632.09,923.5 1634.09,923.5 1636.09,923.5 1638.09,923.5 1640.09,923.5 1642.09,923.5 1644.09,923.5 1646.09,923.5 1648.09,923.5 1650.09,923.5 1652.09,923.5 1654.09,923.5 1656.09,923.5 1658.09,923.5 1660.09,923.5 1662.09,923.5 1664.09,923.5 1666.09,923.5 1668.09,923.5 1670.09,923.5 1672.09,923.5 1674.09,923.5 1676.09,923.5 1678.09,923.5 1680.09,923.5 1682.09,923.5 1684.09,923.5 1686.09,923.5 1688.09,923.5 1690.09,923.5 1692.09,923.5 1694.09,923.5 1696.09,923.5 1698.09,923.5 1700.09,923.5 1702.09,923.5 1704.09,923.5 1706.09,923.5 1708.09,923.5 1710.09,923.5 1712.09,923.5 1714.09,923.5 1716.09,923.5 1718.09,923.5 1720.09,923.5 1722.09,923.5 1724.09,923.5 1726.09,923.5 1728.09,923.5 1730.09,923.5 1732.09,923.5 1734.09,923.5 1736.09,923.5 1738.09,923.5 1740.09,923.5 1742.09,923.5 1744.09,923.5 1746.09,923.5 1748.09,923.5 1750.09,923.5" fill="none" stroke="#08e8a0" stroke-width="3" stroke-linejoin="round" shape-rendering="crispEdges"/><polyline points="503,927.5 503.5,926.5 504,925.5 504.5,924.5 505,923.5 505.5,923.5 506,923.5 506.5,922.5 507,922.5 507.5,922.5 508,922.5 508.5,922.5 509,922.5 509.5,922.5 510,922.5 510.5,922.5 511,922.5 511.5,922.5 512,922.5 512.5,922.5 513,922.5 513.5,922.5 514,922.5 514.5,922.5 515,922.5 515.5,922.5 516,922.5 516.5,922.5 517,922.5 517.5,922.5 518,922.5 518.5,922.5 519,922.5 519.5,922.5 520,922.5 520.5,922.5 521,922.5 521.5,922.5 522,922.5 522.5,922.5 523,922.5 523.5,922.5 524,922.5 524.5,922.5 525,922.5 525.5,922.5 526,922.5 526.5,922.5 527,922.5 527.5,922.5 528,922.5 528.5,922.5 529,922.5 529.5,922.5 530,922.5 530.5,922.5 531,922.5 531.5,922.5 532,922.5 532.5,922.5 533,922.5 533.5,922.5 534,922.5 534.5,922.5 535,922.5 535.5,922.5 536,922.5 536.5,922.5 537,922.5 537.5,922.5 538,922.5 538.5,922.5 539,922.5 539.5,922.5 540,922.5 540.5,922.5 541,922.5 541.5,922.5 542,922.5 542.5,922.5 543,922.5 543.5,922.5 544,922.5 544.5,922.5 545,922.5 545.5,922.5 546,922.5 546.5,922.5 547,922.5 547.5,922.5 548,922.5 548.5,922.5 549,922.5 549.5,922.5 550,922.5 550.5,922.5 551,922.5 551.5,922.5 552,922.5 552.5,922.5 553,922.5 553.5,922.5 554,922.5 554.5,922.5 555,922.5 555.5,922.5 556,922.5 556.5,922.5 557,922.5 557.5,922.5 558,922.5 558.5,922.5 559,922.5 559.5,922.5 560,922.5 560.5,922.5 561,922.5 561.5,922.5 562,922.5 562.5,922.5 563,922.5 563.5,922.5 564,922.5 564.5,922.5 565,922.5 565.5,922.5 566,922.5 566.5,922.5 567,922.5 567.5,922.5 568,922.5 568.5,922.5 569,922.5 569.5,922.5 570,922.5 570.5,922.5 571,922.5 571.5,922.5 572,922.5 572.5,922.5 573,922.5 573.5,922.5 574,922.5 574.5,922.5 575,922.5 575.5,922.5 576,922.5 576.5,922.5 577,922.5 577.5,922.5 578,922.5 578.5,922.5 579,922.5 579.5,922.5 580,922.5 580.5,922.5 581,922.5 581.5,922.5 582,922.5 582.5,922.5 583,922.5 583.5,922.5 584,922.5 584.5,922.5 585,922.5 585.5,922.5 586,922.5 586.5,922.5 587,922.5 587.5,922.5 588,922.5 588.5,922.5 589,922.5 589.5,922.5 590,922.5 590.5,922.5 591,922.5 591.5,922.5 592,922.5 592.5,922.5 593,922.5 593.5,922.5 594,922.5 594.5,922.5 595,922.5 595.5,922.5 596,922.5 596.5,922.5 597,922.5 597.5,922.5 598,922.5 598.5,922.5 599,922.5 599.5,922.5 600,922.5 600.5,922.5 601,922.5 601.5,922.5 602,922.5 602.5,922.5 603,922.5 603.5,922.5 604,922.5 604.5,922.5 605,922.5 605.5,922.5 606,922.5 606.5,922.5 607,922.5 607.5,922.5 608,922.5 608.5,922.5 609,922.5 609.5,922.5 610,922.5 610.5,922.5 611,922.5 611.5,922.5 612,922.5 612.5,922.5 613,922.5 613.5,922.5 614,922.5 614.5,922.5 615,922.5 615.5,922.5 616,922.5 616.5,922.5 617,922.5 617.5,922.5 618,922.5 618.5,922.5 619,922.5 619.5,922.5 620,922.5 620.5,922.5 622.5,922.5 624.5,922.5 626.5,922.5 628.5,922.5 630.5,922.5 632.5,922.5 634.5,922.5 636.5,922.5 638.5,922.5 640.5,922.5 642.5,922.5 644.5,922.5 646.5,922.5 648.5,922.5 650.5,922.5 652.5,922.5 654.5,922.5 656.5,922.5 658.5,922.5 660.5,922.5 662.5,922.5 664.5,922.5 666.5,922.5 668.5,922.5 670.5,922.5 672.5,922.5 674.5,922.5 676.5,922.5 678.5,922.5 680.5,922.5 682.5,922.5 684.5,922.5 686.5,922.5 688.5,922.5 690.5,922.5 692.5,922.5 694.5,922.5 696.5,922.5 698.5,922.5 700.5,922.5 702.5,922.5 704.5,922.5 706.5,922.5 708.5,922.5 710.5,922.5 712.5,922.5 714.5,922.5 716.5,922.5 718.5,922.5 720.5,922.5 722.5,922.5 724.5,922.5 726.5,922.5 728.5,922.5 730.5,922.5 732.5,922.5 734.5,922.5 736.5,922.5 738.5,922.5 740.5,922.5 742.5,922.5 744.5,922.5 746.5,922.5 748.5,922.5 750.5,922.5 752.5,922.5 754.5,922.5 756.5,922.5 758.5,922.5 760.5,922.5 762.5,922.5 764.5,922.5 766.5,922.5 768.5,922.5 770.5,922.5 772.5,922.5 774.5,922.5 776.5,922.5 778.5,922.5 780.5,922.5 782.5,922.5 784.5,922.5 786.5,922.5 788.5,922.5 790.5,922.5 792.5,922.5 794.5,922.5 796.5,922.5 798.5,922.5 800.5,922.5 802.5,922.5 804.5,922.5 806.5,922.5 808.5,922.5 810.5,922.5 812.5,922.5 814.5,922.5 816.5,922.5 818.5,922.5 820.5,922.5 822.5,922.5 824.5,922.5 826.5,922.5 828.5,922.5 830.5,922.5 832.5,922.5 834.5,922.5 836.5,922.5 838.5,922.5 840.5,922.5 842.5,922.5 844.5,922.5 846.5,922.5 848.5,922.5 850.5,922.5 852.5,922.5 854.5,922.5 856.5,922.5 858.5,922.5 860.5,922.5 862.5,922.5 864.5,922.5 866.5,922.5 868.5,922.5 870.5,922.5 872.5,922.5 874.5,922.5 876.5,922.5 878.5,922.5 880.5,922.5 882.5,922.5 884.5,922.5 886.5,922.5 888.5,922.5 890.5,922.5 892.5,922.5 894.5,922.5 896.5,922.5 898.5,922.5 900.5,922.5 902.5,922.5 904.5,922.5 906.5,922.5 908.5,922.5 910.5,922.5 912.5,922.5 914.5,922.5 916.5,922.5 918.5,922.5 920.5,922.5 922.5,922.5 924.5,922.5 926.5,922.5 928.5,922.5 930.5,922.5 932.5,922.5 934.5,922.5 936.5,922.5 938.5,922.5 940.5,922.5 942.5,922.5 944.5,922.5 946.5,922.5 948.5,922.5 950.5,922.5 952.5,922.5 954.5,922.5 956.5,922.5 958.5,922.5 960.5,922.5 962.5,922.5 964.5,922.5 966.5,922.5 968.5,922.5 970.5,922.5 972.5,922.5 974.5,922.5 976.5,922.5 978.5,922.5 980.5,922.5 982.5,922.5 984.5,922.5 986.5,922.5 988.5,922.5 990.5,922.5 992.5,922.5 994.5,922.5 996.5,922.5 998.5,922.5 1000.5,922.5 1002.5,922.5 1004.5,922.5 1006.5,922.5 1008.5,922.5 1010.5,922.5 1012.5,922.5 1014.5,922.5 1016.5,922.5 1018.5,922.5 1020.5,922.5 1022.5,922.5 1024.5,922.5 1026.5,922.5 1028.5,922.5 1030.5,922.5 1032.5,922.5 1034.5,922.5 1036.5,922.5 1038.5,922.5 1040.5,922.5 1042.5,922.5 1044.5,922.5 1046.5,922.5 1048.5,922.5 1050.5,922.5 1052.5,922.5 1054.5,922.5 1056.5,922.5 1058.5,922.5 1060.5,922.5 1062.5,922.5 1064.5,922.5 1066.5,922.5 1068.5,922.5 1070.5,922.5 1072.5,922.5 1074.5,922.5 1076.5,922.5 1078.5,922.5 1080.5,922.5 1082.5,922.5 1084.5,922.5 1086.5,922.5 1088.5,922.5 1090.5,922.5 1092.5,922.5 1094.5,922.5 1096.5,922.5 1098.5,922.5 1100.5,922.5 1102.5,922.5 1104.5,922.5 1106.5,922.5 1108.5,922.5 1110.5,922.5 1112.5,922.5 1114.5,922.5 1116.5,922.5 1118.5,922.5 1120.5,922.5 1122.5,922.5 1124.5,922.5 1126.5,922.5 1128.5,922.5 1130.5,922.5 1132.5,922.5 1134.5,922.5 1136.5,922.5 1138.5,922.5 1140.5,922.5 1142.5,922.5 1144.5,922.5 1146.5,922.5 1148.5,922.5 1150.5,922.5 1152.5,922.5 1154.5,922.5 1156.5,922.5 1158.5,922.5 1160.5,922.5 1162.5,922.5 1164.5,922.5 1166.5,922.5 1168.5,922.5 1170.5,922.5 1172.5,922.5 1174.5,922.5 1176.5,922.5 1178.5,922.5 1180.5,922.5 1182.5,922.5 1184.5,922.5 1186.5,922.5 1188.5,922.5 1190.5,922.5 1192.5,922.5 1194.5,922.5 1196.5,922.5 1198.5,922.5 1200.5,922.5 1202.5,922.5 1204.5,922.5 1206.5,922.5 1208.5,922.5 1210.5,922.5 1212.5,922.5 1214.5,922.5 1216.5,922.5 1218.5,922.5 1220.5,922.5 1222.5,922.5 1224.5,922.5 1226.5,922.5 1228.5,922.5 1230.5,922.5 1232.5,922.5 1234.5,922.5 1236.5,922.5 1238.5,922.5 1240.5,922.5 1242.5,922.5 1244.5,922.5 1246.5,922.5 1248.5,922.5 1250.5,922.5 1252.5,922.5 1254.5,922.5 1256.5,922.5 1258.5,922.5 1260.5,922.5 1262.5,922.5 1264.5,922.5 1266.5,922.5 1268.5,922.5 1270.5,922.5 1272.5,922.5 1274.5,922.5 1276.5,922.5 1278.5,922.5 1280.5,922.5 1282.5,922.5 1284.5,922.5 1286.5,922.5 1288.5,922.5 1290.5,922.5 1292.5,922.5 1294.5,922.5 1296.5,922.5 1298.5,922.5 1300.5,922.5 1302.5,922.5 1304.5,922.5 1306.5,922.5 1308.5,922.5 1310.5,922.5 1312.5,922.5 1314.5,922.5 1316.5,922.5 1318.5,922.5 1320.5,922.5 1322.5,922.5 1324.5,922.5 1326.5,922.5 1328.5,922.5 1330.5,922.5 1332.5,922.5 1334.5,922.5 1336.5,922.5 1338.5,922.5 1340.5,922.5 1342.5,922.5 1344.5,922.5 1346.5,922.5 1348.5,922.5 1350.5,922.5 1352.5,922.5 1354.5,922.5 1356.5,922.5 1358.5,922.5 1360.5,922.5 1362.5,922.5 1364.5,922.5 1366.5,922.5 1368.5,922.5 1370.5,922.5 1372.5,922.5 1374.5,922.5 1376.5,922.5 1378.5,922.5 1380.5,922.5 1382.5,922.5 1384.5,922.5 1386.5,922.5 1388.5,922.5 1390.5,922.5 1392.5,922.5 1394.5,922.5 1396.5,922.5 1397,922.5 1397.5,922.5 1398,922.5 1398.5,922.5 1399,922.5 1399.5,922.5 1400,922.5 1400.5,922.5 1400.59,922.5 1401.09,922.5 1401.59,922.5 1402.09,922.5 1402.59,922.5 1403.09,922.5 1403.59,922.5 1404.09,922.5 1404.59,922.5 1405.09,922.5 1405.59,922.5 1406.09,922.5 1406.59,922.5 1407.09,922.5 1407.59,922.5 1408.09,922.5 1408.59,922.5 1409.09,922.5 1409.59,922.5 1410.09,922.5 1410.59,922.5 1411.09,922.5 1411.59,922.5 1412.09,922.5 1412.59,922.5 1413.09,922.5 1413.59,922.5 1414.09,922.5 1414.59,922.5 1415.09,922.5 1415.59,922.5 1416.09,922.5 1416.59,922.5 1417.09,922.5 1417.59,922.5 1418.09,922.5 1418.59,922.5 1419.09,922.5 1419.59,922.5 1420.09,922.5 1422.09,922.5 1424.09,922.5 1426.09,922.5 1428.09,922.5 1430.09,922.5 1432.09,922.5 1434.09,922.5 1436.09,922.5 1438.09,922.5 1440.09,922.5 1442.09,922.5 1444.09,922.5 1446.09,922.5 1448.09,922.5 1450.09,922.5 1452.09,922.5 1454.09,922.5 1456.09,922.5 1458.09,922.5 1460.09,922.5 1462.09,922.5 1464.09,922.5 1466.09,922.5 1468.09,922.5 1470.09,922.5 1472.09,922.5 1474.09,922.5 1476.09,922.5 1478.09,922.5 1480.09,922.5 1482.09,922.5 1484.09,922.5 1486.09,922.5 1488.09,922.5 1490.09,922.5 1492.09,922.5 1494.09,922.5 1496.09,922.5 1498.09,922.5 1500.09,922.5 1502.09,922.5 1504.09,922.5 1506.09,922.5 1508.09,922.5 1510.09,922.5 1512.09,922.5 1514.09,922.5 1516.09,922.5 1518.09,922.5 1520.09,922.5 1522.09,922.5 1524.09,922.5 1526.09,922.5 1528.09,922.5 1530.09,922.5 1532.09,922.5 1534.09,922.5 1536.09,922.5 1538.09,922.5 1540.09,922.5 1542.09,922.5 1544.09,922.5 1546.09,922.5 1548.09,922.5 1550.09,922.5 1552.09,922.5 1554.09,922.5 1556.09,922.5 1558.09,922.5 1560.09,922.5 1562.09,922.5 1564.09,922.5 1566.09,922.5 1568.09,922.5 1570.09,922.5 1572.09,922.5 1574.09,922.5 1576.09,922.5 1578.09,922.5 1580.09,922.5 1582.09,922.5 1584.09,922.5 1586.09,922.5 1588.09,922.5 1590.09,922.5 1592.09,922.5 1594.09,922.5 1596.09,922.5 1598.09,922.5 1600.09,922.5 1602.09,922.5 1604.09,922.5 1606.09,922.5 1608.09,922.5 1610.09,922.5 1612.09,922.5 1614.09,922.5 1616.09,922.5 1618.09,922.5 1620.09,922.5 1622.09,922.5 1624.09,922.5 1626.09,922.5 1628.09,922.5 1630.09,922.5 1632.09,922.5 1634.09,922.5 1636.09,922.5 1638.09,922.5 1640.09,922.5 1642.09,922.5 1644.09,922.5 1646.09,922.5 1648.09,922.5 1650.09,922.5 1652.09,922.5 1654.09,922.5 1656.09,922.5 1658.09,922.5 1660.09,922.5 1662.09,922.5 1664.09,922.5 1666.09,922.5 1668.09,922.5 1670.09,922.5 1672.09,922.5 1674.09,922.5 1676.09,922.5 1678.09,922.5 1680.09,922.5 1682.09,922.5 1684.09,922.5 1686.09,922.5 1688.09,922.5 1690.09,922.5 1692.09,922.5 1694.09,922.5 1696.09,922.5 1698.09,922.5 1700.09,922.5 1702.09,922.5 1704.09,922.5 1706.09,922.5 1708.09,922.5 1710.09,922.5 1712.09,922.5 1714.09,922.5 1716.09,922.5 1718.09,922.5 1720.09,922.5 1722.09,922.5 1724.09,922.5 1726.09,922.5 1728.09,922.5 1730.09,922.5 1732.09,922.5 1734.09,922.5 1736.09,922.5 1738.09,922.5 1740.09,922.5 1742.09,922.5 1744.09,922.5 1746.09,922.5 1748.09,922.5 1750.09,922.5" fill="none" stroke="#000" stroke-opacity="0.28" stroke-width="1" shape-rendering="crispEdges"/><path d="M499.50 962.5L500.00 952.5M500.00 952.5L500.50 945.5M500.50 945.5L501.00 940.5M501.00 940.5L501.50 936.5M501.50 936.5L502.00 932.5M502.00 932.5L502.50 930.5M502.50 930.5L503.00 928.5" fill="none" stroke="#08e8a0" stroke-width="1.5" stroke-linecap="round"/><path d="M5 964h1v1h-1zM24 960h1v1h-1zM25 960h1v1h-1zM43 964h1v1h-1zM51 964h1v1h-1zM54 960h1v1h-1zM63 964h1v1h-1zM68 960h1v1h-1zM86 960h1v1h-1zM94 960h1v1h-1zM129 960h1v1h-1zM133 960h1v1h-1zM135 964h1v1h-1zM145 960h1v1h-1zM158 964h1v1h-1zM160 960h1v1h-1zM173 964h1v1h-1zM183 960h1v1h-1zM190 960h1v1h-1zM214 960h1v1h-1zM253 964h1v1h-1zM260 964h1v1h-1zM267 964h1v1h-1zM275 960h1v1h-1zM276 960h1v1h-1zM294 960h1v1h-1zM305 960h1v1h-1zM340 964h1v1h-1zM345 960h1v1h-1zM356 964h1v1h-1zM363 960h1v1h-1zM379 960h1v1h-1zM385 960h1v1h-1zM388 960h1v1h-1zM389 964h1v1h-1zM390 964h1v1h-1zM393 964h1v1h-1zM395 964h1v1h-1zM418 960h1v1h-1zM427 960h1v1h-1zM432 964h1v1h-1zM452 964h1v1h-1zM465 960h1v1h-1zM467 960h1v1h-1zM475 960h1v1h-1zM488 960h1v1h-1zM496 964h1v1h-1zM524 925h1v1h-1zM552 925h1v1h-1zM578 925h1v1h-1zM594 921h1v1h-1zM596 925h1v1h-1zM613 925h1v1h-1zM615 921h1v1h-1zM624 921h1v1h-1zM625 925h1v1h-1zM630 925h1v1h-1zM641 925h1v1h-1zM650 925h1v1h-1zM671 925h1v1h-1zM676 925h1v1h-1zM688 925h1v1h-1zM697 921h1v1h-1zM711 925h1v1h-1zM715 925h1v1h-1zM726 921h1v1h-1zM732 921h1v1h-1zM738 925h1v1h-1zM741 925h1v1h-1zM749 925h1v1h-1zM753 925h1v1h-1zM766 921h1v1h-1zM773 921h1v1h-1zM776 925h1v1h-1zM784 921h1v1h-1zM821 925h1v1h-1zM828 925h1v1h-1zM829 921h1v1h-1zM839 925h1v1h-1zM853 921h1v1h-1zM856 921h1v1h-1zM872 925h1v1h-1zM897 925h1v1h-1zM903 921h1v1h-1zM927 925h1v1h-1zM936 921h1v1h-1zM968 921h1v1h-1zM989 925h1v1h-1zM997 925h1v1h-1zM999 925h1v1h-1zM1016 925h1v1h-1zM1019 925h1v1h-1zM1032 925h1v1h-1zM1036 921h1v1h-1zM1043 925h1v1h-1zM1050 921h1v1h-1zM1065 921h1v1h-1zM1084 921h1v1h-1zM1087 921h1v1h-1zM1091 925h1v1h-1zM1131 925h1v1h-1zM1142 921h1v1h-1zM1147 921h1v1h-1zM1149 921h1v1h-1zM1174 925h1v1h-1zM1175 925h1v1h-1zM1185 925h1v1h-1zM1195 921h1v1h-1zM1224 925h1v1h-1zM1232 925h1v1h-1zM1233 921h1v1h-1zM1235 925h1v1h-1zM1240 925h1v1h-1zM1255 921h1v1h-1zM1258 925h1v1h-1zM1260 925h1v1h-1zM1268 925h1v1h-1zM1277 921h1v1h-1zM1288 925h1v1h-1zM1289 921h1v1h-1zM1298 921h1v1h-1zM1299 925h1v1h-1zM1315 921h1v1h-1zM1326 925h1v1h-1zM1335 921h1v1h-1zM1346 921h1v1h-1zM1349 925h1v1h-1zM1351 925h1v1h-1zM1354 925h1v1h-1zM1365 925h1v1h-1zM1373 925h1v1h-1zM1376 925h1v1h-1zM1377 925h1v1h-1zM1398 921h1v1h-1zM1417 921h1v1h-1zM1446 921h1v1h-1zM1450 925h1v1h-1zM1472 925h1v1h-1zM1475 925h1v1h-1zM1481 921h1v1h-1zM1509 921h1v1h-1zM1519 921h1v1h-1zM1521 921h1v1h-1zM1528 921h1v1h-1zM1530 925h1v1h-1zM1531 925h1v1h-1zM1537 921h1v1h-1zM1548 925h1v1h-1zM1556 925h1v1h-1zM1593 925h1v1h-1zM1606 925h1v1h-1zM1611 921h1v1h-1zM1620 921h1v1h-1zM1628 921h1v1h-1zM1631 921h1v1h-1zM1634 925h1v1h-1zM1663 921h1v1h-1zM1667 925h1v1h-1zM1681 921h1v1h-1zM1695 925h1v1h-1zM1709 925h1v1h-1zM1722 921h1v1h-1zM1732 925h1v1h-1zM1746 925h1v1h-1z" fill="#08e8a0" opacity="0.75"/><line x1="499.5" y1="614.5" x2="499.5" y2="624.7" stroke="#f7921e" stroke-width="1.2"/><line x1="1403.6" y1="445" x2="1403.6" y2="430.7" stroke="#92d23a" stroke-width="1.2"/><line x1="1403.5" y1="604" x2="1403.5" y2="617" stroke="#f7921e" stroke-width="1"/></g><path d="M27 61h1v1h-1zM62 61h1v1h-1zM97 61h1v1h-1zM132 61h1v1h-1zM167 61h1v1h-1zM202 61h1v1h-1zM237 61h1v1h-1zM272 61h1v1h-1zM307 61h1v1h-1zM342 61h1v1h-1zM377 61h1v1h-1zM412 61h1v1h-1zM447 61h1v1h-1zM482 61h1v1h-1zM517 61h1v1h-1zM552 61h1v1h-1zM587 61h1v1h-1zM622 61h1v1h-1zM657 61h1v1h-1zM692 61h1v1h-1zM727 61h1v1h-1zM762 61h1v1h-1zM797 61h1v1h-1zM832 61h1v1h-1zM867 61h1v1h-1zM902 61h1v1h-1zM936 61h1v1h-1zM971 61h1v1h-1zM1006 61h1v1h-1zM1041 61h1v1h-1zM1076 61h1v1h-1zM1111 61h1v1h-1zM1146 61h1v1h-1zM1181 61h1v1h-1zM1216 61h1v1h-1zM1251 61h1v1h-1zM1286 61h1v1h-1zM1321 61h1v1h-1zM1356 61h1v1h-1zM1391 61h1v1h-1zM1426 61h1v1h-1zM1461 61h1v1h-1zM1496 61h1v1h-1zM1531 61h1v1h-1zM1566 61h1v1h-1zM1601 61h1v1h-1zM1636 61h1v1h-1zM1671 61h1v1h-1zM1706 61h1v1h-1zM1741 61h1v1h-1zM27 73h1v1h-1zM62 73h1v1h-1zM97 73h1v1h-1zM132 73h1v1h-1zM167 73h1v1h-1zM202 73h1v1h-1zM237 73h1v1h-1zM272 73h1v1h-1zM307 73h1v1h-1zM342 73h1v1h-1zM377 73h1v1h-1zM412 73h1v1h-1zM447 73h1v1h-1zM482 73h1v1h-1zM517 73h1v1h-1zM552 73h1v1h-1zM587 73h1v1h-1zM622 73h1v1h-1zM657 73h1v1h-1zM692 73h1v1h-1zM727 73h1v1h-1zM762 73h1v1h-1zM797 73h1v1h-1zM832 73h1v1h-1zM867 73h1v1h-1zM902 73h1v1h-1zM936 73h1v1h-1zM971 73h1v1h-1zM1006 73h1v1h-1zM1041 73h1v1h-1zM1076 73h1v1h-1zM1111 73h1v1h-1zM1146 73h1v1h-1zM1181 73h1v1h-1zM1216 73h1v1h-1zM1251 73h1v1h-1zM1286 73h1v1h-1zM1321 73h1v1h-1zM1356 73h1v1h-1zM1391 73h1v1h-1zM1426 73h1v1h-1zM1461 73h1v1h-1zM1496 73h1v1h-1zM1531 73h1v1h-1zM1566 73h1v1h-1zM1601 73h1v1h-1zM1636 73h1v1h-1zM1671 73h1v1h-1zM1706 73h1v1h-1zM1741 73h1v1h-1zM27 84h1v1h-1zM62 84h1v1h-1zM97 84h1v1h-1zM132 84h1v1h-1zM167 84h1v1h-1zM202 84h1v1h-1zM237 84h1v1h-1zM272 84h1v1h-1zM307 84h1v1h-1zM342 84h1v1h-1zM377 84h1v1h-1zM412 84h1v1h-1zM447 84h1v1h-1zM482 84h1v1h-1zM517 84h1v1h-1zM552 84h1v1h-1zM587 84h1v1h-1zM622 84h1v1h-1zM657 84h1v1h-1zM692 84h1v1h-1zM727 84h1v1h-1zM762 84h1v1h-1zM797 84h1v1h-1zM832 84h1v1h-1zM867 84h1v1h-1zM902 84h1v1h-1zM936 84h1v1h-1zM971 84h1v1h-1zM1006 84h1v1h-1zM1041 84h1v1h-1zM1076 84h1v1h-1zM1111 84h1v1h-1zM1146 84h1v1h-1zM1181 84h1v1h-1zM1216 84h1v1h-1zM1251 84h1v1h-1zM1286 84h1v1h-1zM1321 84h1v1h-1zM1356 84h1v1h-1zM1391 84h1v1h-1zM1426 84h1v1h-1zM1461 84h1v1h-1zM1496 84h1v1h-1zM1531 84h1v1h-1zM1566 84h1v1h-1zM1601 84h1v1h-1zM1636 84h1v1h-1zM1671 84h1v1h-1zM1706 84h1v1h-1zM1741 84h1v1h-1zM27 96h1v1h-1zM62 96h1v1h-1zM97 96h1v1h-1zM132 96h1v1h-1zM167 96h1v1h-1zM202 96h1v1h-1zM237 96h1v1h-1zM272 96h1v1h-1zM307 96h1v1h-1zM342 96h1v1h-1zM377 96h1v1h-1zM412 96h1v1h-1zM447 96h1v1h-1zM482 96h1v1h-1zM517 96h1v1h-1zM552 96h1v1h-1zM587 96h1v1h-1zM622 96h1v1h-1zM657 96h1v1h-1zM692 96h1v1h-1zM727 96h1v1h-1zM762 96h1v1h-1zM797 96h1v1h-1zM832 96h1v1h-1zM867 96h1v1h-1zM902 96h1v1h-1zM936 96h1v1h-1zM971 96h1v1h-1zM1006 96h1v1h-1zM1041 96h1v1h-1zM1076 96h1v1h-1zM1111 96h1v1h-1zM1146 96h1v1h-1zM1181 96h1v1h-1zM1216 96h1v1h-1zM1251 96h1v1h-1zM1286 96h1v1h-1zM1321 96h1v1h-1zM1356 96h1v1h-1zM1391 96h1v1h-1zM1426 96h1v1h-1zM1461 96h1v1h-1zM1496 96h1v1h-1zM1531 96h1v1h-1zM1566 96h1v1h-1zM1601 96h1v1h-1zM1636 96h1v1h-1zM1671 96h1v1h-1zM1706 96h1v1h-1zM27 107h1v1h-1zM62 107h1v1h-1zM97 107h1v1h-1zM132 107h1v1h-1zM167 107h1v1h-1zM202 107h1v1h-1zM237 107h1v1h-1zM272 107h1v1h-1zM307 107h1v1h-1zM342 107h1v1h-1zM377 107h1v1h-1zM412 107h1v1h-1zM447 107h1v1h-1zM482 107h1v1h-1zM517 107h1v1h-1zM552 107h1v1h-1zM587 107h1v1h-1zM622 107h1v1h-1zM657 107h1v1h-1zM692 107h1v1h-1zM727 107h1v1h-1zM762 107h1v1h-1zM797 107h1v1h-1zM832 107h1v1h-1zM867 107h1v1h-1zM902 107h1v1h-1zM936 107h1v1h-1zM971 107h1v1h-1zM1006 107h1v1h-1zM1041 107h1v1h-1zM1076 107h1v1h-1zM1111 107h1v1h-1zM1146 107h1v1h-1zM1181 107h1v1h-1zM1216 107h1v1h-1zM1251 107h1v1h-1zM1286 107h1v1h-1zM1321 107h1v1h-1zM1356 107h1v1h-1zM1391 107h1v1h-1zM1426 107h1v1h-1zM1461 107h1v1h-1zM1496 107h1v1h-1zM1531 107h1v1h-1zM1566 107h1v1h-1zM1601 107h1v1h-1zM1636 107h1v1h-1zM1671 107h1v1h-1zM1706 107h1v1h-1zM1741 107h1v1h-1zM27 119h1v1h-1zM62 119h1v1h-1zM97 119h1v1h-1zM132 119h1v1h-1zM167 119h1v1h-1zM202 119h1v1h-1zM237 119h1v1h-1zM272 119h1v1h-1zM307 119h1v1h-1zM342 119h1v1h-1zM377 119h1v1h-1zM412 119h1v1h-1zM447 119h1v1h-1zM482 119h1v1h-1zM517 119h1v1h-1zM552 119h1v1h-1zM587 119h1v1h-1zM622 119h1v1h-1zM657 119h1v1h-1zM692 119h1v1h-1zM727 119h1v1h-1zM762 119h1v1h-1zM797 119h1v1h-1zM832 119h1v1h-1zM867 119h1v1h-1zM902 119h1v1h-1zM936 119h1v1h-1zM971 119h1v1h-1zM1006 119h1v1h-1zM1041 119h1v1h-1zM1076 119h1v1h-1zM1111 119h1v1h-1zM1146 119h1v1h-1zM1181 119h1v1h-1zM1216 119h1v1h-1zM1251 119h1v1h-1zM1286 119h1v1h-1zM1321 119h1v1h-1zM1356 119h1v1h-1zM1391 119h1v1h-1zM1426 119h1v1h-1zM1461 119h1v1h-1zM1496 119h1v1h-1zM1531 119h1v1h-1zM1566 119h1v1h-1zM1601 119h1v1h-1zM1636 119h1v1h-1zM1671 119h1v1h-1zM1706 119h1v1h-1zM1741 119h1v1h-1zM27 130h1v1h-1zM62 130h1v1h-1zM97 130h1v1h-1zM132 130h1v1h-1zM167 130h1v1h-1zM202 130h1v1h-1zM237 130h1v1h-1zM272 130h1v1h-1zM307 130h1v1h-1zM342 130h1v1h-1zM377 130h1v1h-1zM412 130h1v1h-1zM447 130h1v1h-1zM482 130h1v1h-1zM517 130h1v1h-1zM552 130h1v1h-1zM587 130h1v1h-1zM622 130h1v1h-1zM657 130h1v1h-1zM692 130h1v1h-1zM727 130h1v1h-1zM762 130h1v1h-1zM797 130h1v1h-1zM832 130h1v1h-1zM867 130h1v1h-1zM902 130h1v1h-1zM936 130h1v1h-1zM971 130h1v1h-1zM1006 130h1v1h-1zM1041 130h1v1h-1zM1076 130h1v1h-1zM1111 130h1v1h-1zM1146 130h1v1h-1zM1181 130h1v1h-1zM1216 130h1v1h-1zM1251 130h1v1h-1zM1286 130h1v1h-1zM1321 130h1v1h-1zM1356 130h1v1h-1zM1391 130h1v1h-1zM1426 130h1v1h-1zM1461 130h1v1h-1zM1496 130h1v1h-1zM1531 130h1v1h-1zM1566 130h1v1h-1zM1601 130h1v1h-1zM1636 130h1v1h-1zM1671 130h1v1h-1zM1706 130h1v1h-1zM1741 130h1v1h-1zM27 142h1v1h-1zM62 142h1v1h-1zM97 142h1v1h-1zM132 142h1v1h-1zM167 142h1v1h-1zM202 142h1v1h-1zM237 142h1v1h-1zM272 142h1v1h-1zM307 142h1v1h-1zM342 142h1v1h-1zM377 142h1v1h-1zM412 142h1v1h-1zM447 142h1v1h-1zM482 142h1v1h-1zM517 142h1v1h-1zM552 142h1v1h-1zM587 142h1v1h-1zM622 142h1v1h-1zM657 142h1v1h-1zM692 142h1v1h-1zM727 142h1v1h-1zM762 142h1v1h-1zM797 142h1v1h-1zM832 142h1v1h-1zM867 142h1v1h-1zM902 142h1v1h-1zM936 142h1v1h-1zM971 142h1v1h-1zM1006 142h1v1h-1zM1041 142h1v1h-1zM1076 142h1v1h-1zM1111 142h1v1h-1zM1146 142h1v1h-1zM1181 142h1v1h-1zM1216 142h1v1h-1zM1251 142h1v1h-1zM1286 142h1v1h-1zM1321 142h1v1h-1zM1356 142h1v1h-1zM1391 142h1v1h-1zM1426 142h1v1h-1zM1461 142h1v1h-1zM1496 142h1v1h-1zM1531 142h1v1h-1zM1566 142h1v1h-1zM1601 142h1v1h-1zM1636 142h1v1h-1zM1671 142h1v1h-1zM1706 142h1v1h-1zM1741 142h1v1h-1zM27 153h1v1h-1zM62 153h1v1h-1zM97 153h1v1h-1zM132 153h1v1h-1zM167 153h1v1h-1zM202 153h1v1h-1zM237 153h1v1h-1zM272 153h1v1h-1zM307 153h1v1h-1zM342 153h1v1h-1zM377 153h1v1h-1zM412 153h1v1h-1zM447 153h1v1h-1zM482 153h1v1h-1zM517 153h1v1h-1zM552 153h1v1h-1zM587 153h1v1h-1zM622 153h1v1h-1zM657 153h1v1h-1zM692 153h1v1h-1zM727 153h1v1h-1zM762 153h1v1h-1zM797 153h1v1h-1zM832 153h1v1h-1zM867 153h1v1h-1zM902 153h1v1h-1zM936 153h1v1h-1zM971 153h1v1h-1zM1006 153h1v1h-1zM1041 153h1v1h-1zM1076 153h1v1h-1zM1111 153h1v1h-1zM1146 153h1v1h-1zM1181 153h1v1h-1zM1216 153h1v1h-1zM1251 153h1v1h-1zM1286 153h1v1h-1zM1321 153h1v1h-1zM1356 153h1v1h-1zM1391 153h1v1h-1zM1426 153h1v1h-1zM1461 153h1v1h-1zM1496 153h1v1h-1zM1531 153h1v1h-1zM1566 153h1v1h-1zM1601 153h1v1h-1zM1636 153h1v1h-1zM1671 153h1v1h-1zM1706 153h1v1h-1zM1741 153h1v1h-1zM27 165h1v1h-1zM62 165h1v1h-1zM97 165h1v1h-1zM132 165h1v1h-1zM167 165h1v1h-1zM202 165h1v1h-1zM237 165h1v1h-1zM272 165h1v1h-1zM307 165h1v1h-1zM342 165h1v1h-1zM377 165h1v1h-1zM412 165h1v1h-1zM447 165h1v1h-1zM482 165h1v1h-1zM517 165h1v1h-1zM552 165h1v1h-1zM587 165h1v1h-1zM622 165h1v1h-1zM657 165h1v1h-1zM692 165h1v1h-1zM727 165h1v1h-1zM762 165h1v1h-1zM797 165h1v1h-1zM832 165h1v1h-1zM867 165h1v1h-1zM902 165h1v1h-1zM936 165h1v1h-1zM971 165h1v1h-1zM1006 165h1v1h-1zM1041 165h1v1h-1zM1076 165h1v1h-1zM1111 165h1v1h-1zM1146 165h1v1h-1zM1181 165h1v1h-1zM1216 165h1v1h-1zM1251 165h1v1h-1zM1286 165h1v1h-1zM1321 165h1v1h-1zM1356 165h1v1h-1zM1391 165h1v1h-1zM1426 165h1v1h-1zM1461 165h1v1h-1zM1496 165h1v1h-1zM1531 165h1v1h-1zM1566 165h1v1h-1zM1601 165h1v1h-1zM1636 165h1v1h-1zM1671 165h1v1h-1zM1706 165h1v1h-1zM1741 165h1v1h-1zM27 184h1v1h-1zM62 184h1v1h-1zM97 184h1v1h-1zM132 184h1v1h-1zM167 184h1v1h-1zM202 184h1v1h-1zM237 184h1v1h-1zM272 184h1v1h-1zM307 184h1v1h-1zM342 184h1v1h-1zM377 184h1v1h-1zM412 184h1v1h-1zM447 184h1v1h-1zM482 184h1v1h-1zM517 184h1v1h-1zM552 184h1v1h-1zM587 184h1v1h-1zM622 184h1v1h-1zM657 184h1v1h-1zM692 184h1v1h-1zM727 184h1v1h-1zM762 184h1v1h-1zM797 184h1v1h-1zM832 184h1v1h-1zM867 184h1v1h-1zM902 184h1v1h-1zM936 184h1v1h-1zM971 184h1v1h-1zM1006 184h1v1h-1zM1041 184h1v1h-1zM1076 184h1v1h-1zM1111 184h1v1h-1zM1146 184h1v1h-1zM1181 184h1v1h-1zM1216 184h1v1h-1zM1251 184h1v1h-1zM1286 184h1v1h-1zM1321 184h1v1h-1zM1356 184h1v1h-1zM1391 184h1v1h-1zM1426 184h1v1h-1zM1461 184h1v1h-1zM1496 184h1v1h-1zM1531 184h1v1h-1zM1566 184h1v1h-1zM1601 184h1v1h-1zM1636 184h1v1h-1zM1671 184h1v1h-1zM1706 184h1v1h-1zM1741 184h1v1h-1zM27 195h1v1h-1zM62 195h1v1h-1zM97 195h1v1h-1zM132 195h1v1h-1zM167 195h1v1h-1zM202 195h1v1h-1zM237 195h1v1h-1zM272 195h1v1h-1zM307 195h1v1h-1zM342 195h1v1h-1zM377 195h1v1h-1zM412 195h1v1h-1zM447 195h1v1h-1zM482 195h1v1h-1zM517 195h1v1h-1zM552 195h1v1h-1zM587 195h1v1h-1zM622 195h1v1h-1zM657 195h1v1h-1zM692 195h1v1h-1zM727 195h1v1h-1zM762 195h1v1h-1zM797 195h1v1h-1zM832 195h1v1h-1zM867 195h1v1h-1zM902 195h1v1h-1zM936 195h1v1h-1zM971 195h1v1h-1zM1006 195h1v1h-1zM1041 195h1v1h-1zM1076 195h1v1h-1zM1111 195h1v1h-1zM1146 195h1v1h-1zM1181 195h1v1h-1zM1216 195h1v1h-1zM1251 195h1v1h-1zM1286 195h1v1h-1zM1321 195h1v1h-1zM1356 195h1v1h-1zM1391 195h1v1h-1zM1426 195h1v1h-1zM1461 195h1v1h-1zM1496 195h1v1h-1zM1531 195h1v1h-1zM1566 195h1v1h-1zM1601 195h1v1h-1zM1636 195h1v1h-1zM1671 195h1v1h-1zM1706 195h1v1h-1zM1741 195h1v1h-1zM27 207h1v1h-1zM62 207h1v1h-1zM97 207h1v1h-1zM132 207h1v1h-1zM167 207h1v1h-1zM202 207h1v1h-1zM237 207h1v1h-1zM272 207h1v1h-1zM307 207h1v1h-1zM342 207h1v1h-1zM377 207h1v1h-1zM412 207h1v1h-1zM447 207h1v1h-1zM482 207h1v1h-1zM517 207h1v1h-1zM552 207h1v1h-1zM587 207h1v1h-1zM622 207h1v1h-1zM657 207h1v1h-1zM692 207h1v1h-1zM727 207h1v1h-1zM762 207h1v1h-1zM797 207h1v1h-1zM832 207h1v1h-1zM867 207h1v1h-1zM902 207h1v1h-1zM936 207h1v1h-1zM971 207h1v1h-1zM1006 207h1v1h-1zM1041 207h1v1h-1zM1076 207h1v1h-1zM1111 207h1v1h-1zM1146 207h1v1h-1zM1181 207h1v1h-1zM1216 207h1v1h-1zM1251 207h1v1h-1zM1286 207h1v1h-1zM1321 207h1v1h-1zM1356 207h1v1h-1zM1391 207h1v1h-1zM1426 207h1v1h-1zM1461 207h1v1h-1zM1496 207h1v1h-1zM1531 207h1v1h-1zM1566 207h1v1h-1zM1601 207h1v1h-1zM1636 207h1v1h-1zM1671 207h1v1h-1zM1706 207h1v1h-1zM1741 207h1v1h-1zM27 218h1v1h-1zM62 218h1v1h-1zM97 218h1v1h-1zM132 218h1v1h-1zM167 218h1v1h-1zM202 218h1v1h-1zM237 218h1v1h-1zM272 218h1v1h-1zM307 218h1v1h-1zM342 218h1v1h-1zM377 218h1v1h-1zM412 218h1v1h-1zM447 218h1v1h-1zM482 218h1v1h-1zM517 218h1v1h-1zM552 218h1v1h-1zM587 218h1v1h-1zM622 218h1v1h-1zM657 218h1v1h-1zM692 218h1v1h-1zM727 218h1v1h-1zM762 218h1v1h-1zM797 218h1v1h-1zM832 218h1v1h-1zM867 218h1v1h-1zM902 218h1v1h-1zM936 218h1v1h-1zM971 218h1v1h-1zM1006 218h1v1h-1zM1041 218h1v1h-1zM1076 218h1v1h-1zM1111 218h1v1h-1zM1146 218h1v1h-1zM1181 218h1v1h-1zM1216 218h1v1h-1zM1251 218h1v1h-1zM1286 218h1v1h-1zM1321 218h1v1h-1zM1356 218h1v1h-1zM1391 218h1v1h-1zM1426 218h1v1h-1zM1461 218h1v1h-1zM1496 218h1v1h-1zM1531 218h1v1h-1zM1566 218h1v1h-1zM1601 218h1v1h-1zM1636 218h1v1h-1zM1671 218h1v1h-1zM1706 218h1v1h-1zM1741 218h1v1h-1zM27 230h1v1h-1zM62 230h1v1h-1zM97 230h1v1h-1zM132 230h1v1h-1zM167 230h1v1h-1zM202 230h1v1h-1zM237 230h1v1h-1zM272 230h1v1h-1zM307 230h1v1h-1zM342 230h1v1h-1zM377 230h1v1h-1zM412 230h1v1h-1zM447 230h1v1h-1zM482 230h1v1h-1zM517 230h1v1h-1zM552 230h1v1h-1zM587 230h1v1h-1zM622 230h1v1h-1zM657 230h1v1h-1zM692 230h1v1h-1zM727 230h1v1h-1zM762 230h1v1h-1zM797 230h1v1h-1zM832 230h1v1h-1zM867 230h1v1h-1zM902 230h1v1h-1zM936 230h1v1h-1zM971 230h1v1h-1zM1006 230h1v1h-1zM1041 230h1v1h-1zM1076 230h1v1h-1zM1111 230h1v1h-1zM1146 230h1v1h-1zM1181 230h1v1h-1zM1216 230h1v1h-1zM1251 230h1v1h-1zM1286 230h1v1h-1zM1321 230h1v1h-1zM1356 230h1v1h-1zM1391 230h1v1h-1zM1426 230h1v1h-1zM1461 230h1v1h-1zM1496 230h1v1h-1zM1531 230h1v1h-1zM1566 230h1v1h-1zM1601 230h1v1h-1zM1636 230h1v1h-1zM1671 230h1v1h-1zM1706 230h1v1h-1zM1741 230h1v1h-1zM27 241h1v1h-1zM62 241h1v1h-1zM97 241h1v1h-1zM132 241h1v1h-1zM167 241h1v1h-1zM202 241h1v1h-1zM237 241h1v1h-1zM272 241h1v1h-1zM307 241h1v1h-1zM342 241h1v1h-1zM377 241h1v1h-1zM412 241h1v1h-1zM447 241h1v1h-1zM482 241h1v1h-1zM517 241h1v1h-1zM552 241h1v1h-1zM587 241h1v1h-1zM622 241h1v1h-1zM657 241h1v1h-1zM692 241h1v1h-1zM727 241h1v1h-1zM762 241h1v1h-1zM797 241h1v1h-1zM832 241h1v1h-1zM867 241h1v1h-1zM902 241h1v1h-1zM936 241h1v1h-1zM971 241h1v1h-1zM1006 241h1v1h-1zM1041 241h1v1h-1zM1076 241h1v1h-1zM1111 241h1v1h-1zM1146 241h1v1h-1zM1181 241h1v1h-1zM1216 241h1v1h-1zM1251 241h1v1h-1zM1286 241h1v1h-1zM1321 241h1v1h-1zM1356 241h1v1h-1zM1391 241h1v1h-1zM1426 241h1v1h-1zM1461 241h1v1h-1zM1496 241h1v1h-1zM1531 241h1v1h-1zM1566 241h1v1h-1zM1601 241h1v1h-1zM1636 241h1v1h-1zM1671 241h1v1h-1zM1706 241h1v1h-1zM1741 241h1v1h-1zM27 253h1v1h-1zM62 253h1v1h-1zM97 253h1v1h-1zM132 253h1v1h-1zM167 253h1v1h-1zM202 253h1v1h-1zM237 253h1v1h-1zM272 253h1v1h-1zM307 253h1v1h-1zM342 253h1v1h-1zM377 253h1v1h-1zM412 253h1v1h-1zM447 253h1v1h-1zM482 253h1v1h-1zM517 253h1v1h-1zM552 253h1v1h-1zM587 253h1v1h-1zM622 253h1v1h-1zM657 253h1v1h-1zM692 253h1v1h-1zM727 253h1v1h-1zM762 253h1v1h-1zM797 253h1v1h-1zM832 253h1v1h-1zM867 253h1v1h-1zM902 253h1v1h-1zM936 253h1v1h-1zM971 253h1v1h-1zM1006 253h1v1h-1zM1041 253h1v1h-1zM1076 253h1v1h-1zM1111 253h1v1h-1zM1146 253h1v1h-1zM1181 253h1v1h-1zM1216 253h1v1h-1zM1251 253h1v1h-1zM1286 253h1v1h-1zM1321 253h1v1h-1zM1356 253h1v1h-1zM1391 253h1v1h-1zM1426 253h1v1h-1zM1461 253h1v1h-1zM1496 253h1v1h-1zM1531 253h1v1h-1zM1566 253h1v1h-1zM1601 253h1v1h-1zM1636 253h1v1h-1zM1671 253h1v1h-1zM1706 253h1v1h-1zM1741 253h1v1h-1zM27 264h1v1h-1zM62 264h1v1h-1zM97 264h1v1h-1zM132 264h1v1h-1zM167 264h1v1h-1zM202 264h1v1h-1zM237 264h1v1h-1zM272 264h1v1h-1zM307 264h1v1h-1zM342 264h1v1h-1zM377 264h1v1h-1zM412 264h1v1h-1zM447 264h1v1h-1zM482 264h1v1h-1zM517 264h1v1h-1zM552 264h1v1h-1zM587 264h1v1h-1zM622 264h1v1h-1zM657 264h1v1h-1zM692 264h1v1h-1zM727 264h1v1h-1zM762 264h1v1h-1zM797 264h1v1h-1zM832 264h1v1h-1zM867 264h1v1h-1zM902 264h1v1h-1zM936 264h1v1h-1zM971 264h1v1h-1zM1006 264h1v1h-1zM1041 264h1v1h-1zM1076 264h1v1h-1zM1111 264h1v1h-1zM1146 264h1v1h-1zM1181 264h1v1h-1zM1216 264h1v1h-1zM1251 264h1v1h-1zM1286 264h1v1h-1zM1321 264h1v1h-1zM1356 264h1v1h-1zM1391 264h1v1h-1zM1426 264h1v1h-1zM1461 264h1v1h-1zM1496 264h1v1h-1zM1531 264h1v1h-1zM1566 264h1v1h-1zM1601 264h1v1h-1zM1636 264h1v1h-1zM1671 264h1v1h-1zM1706 264h1v1h-1zM1741 264h1v1h-1zM27 276h1v1h-1zM62 276h1v1h-1zM97 276h1v1h-1zM132 276h1v1h-1zM167 276h1v1h-1zM202 276h1v1h-1zM237 276h1v1h-1zM272 276h1v1h-1zM307 276h1v1h-1zM342 276h1v1h-1zM377 276h1v1h-1zM412 276h1v1h-1zM447 276h1v1h-1zM482 276h1v1h-1zM517 276h1v1h-1zM552 276h1v1h-1zM587 276h1v1h-1zM622 276h1v1h-1zM657 276h1v1h-1zM692 276h1v1h-1zM727 276h1v1h-1zM762 276h1v1h-1zM797 276h1v1h-1zM832 276h1v1h-1zM867 276h1v1h-1zM902 276h1v1h-1zM936 276h1v1h-1zM971 276h1v1h-1zM1006 276h1v1h-1zM1041 276h1v1h-1zM1076 276h1v1h-1zM1111 276h1v1h-1zM1146 276h1v1h-1zM1181 276h1v1h-1zM1216 276h1v1h-1zM1251 276h1v1h-1zM1286 276h1v1h-1zM1321 276h1v1h-1zM1356 276h1v1h-1zM1391 276h1v1h-1zM1426 276h1v1h-1zM1461 276h1v1h-1zM1496 276h1v1h-1zM1531 276h1v1h-1zM1566 276h1v1h-1zM1601 276h1v1h-1zM1636 276h1v1h-1zM1671 276h1v1h-1zM1706 276h1v1h-1zM1741 276h1v1h-1zM27 287h1v1h-1zM62 287h1v1h-1zM97 287h1v1h-1zM132 287h1v1h-1zM167 287h1v1h-1zM202 287h1v1h-1zM237 287h1v1h-1zM272 287h1v1h-1zM307 287h1v1h-1zM342 287h1v1h-1zM377 287h1v1h-1zM412 287h1v1h-1zM447 287h1v1h-1zM482 287h1v1h-1zM517 287h1v1h-1zM552 287h1v1h-1zM587 287h1v1h-1zM622 287h1v1h-1zM657 287h1v1h-1zM692 287h1v1h-1zM727 287h1v1h-1zM762 287h1v1h-1zM797 287h1v1h-1zM832 287h1v1h-1zM867 287h1v1h-1zM902 287h1v1h-1zM936 287h1v1h-1zM971 287h1v1h-1zM1006 287h1v1h-1zM1041 287h1v1h-1zM1076 287h1v1h-1zM1111 287h1v1h-1zM1146 287h1v1h-1zM1181 287h1v1h-1zM1216 287h1v1h-1zM1251 287h1v1h-1zM1286 287h1v1h-1zM1321 287h1v1h-1zM1356 287h1v1h-1zM1391 287h1v1h-1zM1426 287h1v1h-1zM1461 287h1v1h-1zM1496 287h1v1h-1zM1531 287h1v1h-1zM1566 287h1v1h-1zM1601 287h1v1h-1zM1636 287h1v1h-1zM1671 287h1v1h-1zM1706 287h1v1h-1zM1741 287h1v1h-1zM27 299h1v1h-1zM62 299h1v1h-1zM97 299h1v1h-1zM132 299h1v1h-1zM167 299h1v1h-1zM202 299h1v1h-1zM237 299h1v1h-1zM272 299h1v1h-1zM307 299h1v1h-1zM342 299h1v1h-1zM377 299h1v1h-1zM412 299h1v1h-1zM447 299h1v1h-1zM482 299h1v1h-1zM517 299h1v1h-1zM552 299h1v1h-1zM587 299h1v1h-1zM622 299h1v1h-1zM657 299h1v1h-1zM692 299h1v1h-1zM727 299h1v1h-1zM762 299h1v1h-1zM797 299h1v1h-1zM832 299h1v1h-1zM867 299h1v1h-1zM902 299h1v1h-1zM936 299h1v1h-1zM971 299h1v1h-1zM1006 299h1v1h-1zM1041 299h1v1h-1zM1076 299h1v1h-1zM1111 299h1v1h-1zM1146 299h1v1h-1zM1181 299h1v1h-1zM1216 299h1v1h-1zM1251 299h1v1h-1zM1286 299h1v1h-1zM1321 299h1v1h-1zM1356 299h1v1h-1zM1391 299h1v1h-1zM1426 299h1v1h-1zM1461 299h1v1h-1zM1496 299h1v1h-1zM1531 299h1v1h-1zM1566 299h1v1h-1zM1601 299h1v1h-1zM1636 299h1v1h-1zM1671 299h1v1h-1zM1706 299h1v1h-1zM1741 299h1v1h-1zM27 311h1v1h-1zM62 311h1v1h-1zM97 311h1v1h-1zM132 311h1v1h-1zM167 311h1v1h-1zM202 311h1v1h-1zM237 311h1v1h-1zM272 311h1v1h-1zM307 311h1v1h-1zM342 311h1v1h-1zM377 311h1v1h-1zM412 311h1v1h-1zM447 311h1v1h-1zM482 311h1v1h-1zM517 311h1v1h-1zM552 311h1v1h-1zM587 311h1v1h-1zM622 311h1v1h-1zM657 311h1v1h-1zM692 311h1v1h-1zM727 311h1v1h-1zM762 311h1v1h-1zM797 311h1v1h-1zM832 311h1v1h-1zM867 311h1v1h-1zM902 311h1v1h-1zM936 311h1v1h-1zM971 311h1v1h-1zM1006 311h1v1h-1zM1041 311h1v1h-1zM1076 311h1v1h-1zM1111 311h1v1h-1zM1146 311h1v1h-1zM1181 311h1v1h-1zM1216 311h1v1h-1zM1251 311h1v1h-1zM1286 311h1v1h-1zM1321 311h1v1h-1zM1356 311h1v1h-1zM1391 311h1v1h-1zM1426 311h1v1h-1zM1461 311h1v1h-1zM1496 311h1v1h-1zM1531 311h1v1h-1zM1566 311h1v1h-1zM1601 311h1v1h-1zM1636 311h1v1h-1zM1671 311h1v1h-1zM1706 311h1v1h-1zM1741 311h1v1h-1zM27 322h1v1h-1zM62 322h1v1h-1zM97 322h1v1h-1zM132 322h1v1h-1zM167 322h1v1h-1zM202 322h1v1h-1zM237 322h1v1h-1zM272 322h1v1h-1zM307 322h1v1h-1zM342 322h1v1h-1zM377 322h1v1h-1zM412 322h1v1h-1zM447 322h1v1h-1zM482 322h1v1h-1zM517 322h1v1h-1zM552 322h1v1h-1zM587 322h1v1h-1zM622 322h1v1h-1zM657 322h1v1h-1zM692 322h1v1h-1zM727 322h1v1h-1zM762 322h1v1h-1zM797 322h1v1h-1zM832 322h1v1h-1zM867 322h1v1h-1zM902 322h1v1h-1zM936 322h1v1h-1zM971 322h1v1h-1zM1006 322h1v1h-1zM1041 322h1v1h-1zM1076 322h1v1h-1zM1111 322h1v1h-1zM1146 322h1v1h-1zM1181 322h1v1h-1zM1216 322h1v1h-1zM1251 322h1v1h-1zM1286 322h1v1h-1zM1321 322h1v1h-1zM1356 322h1v1h-1zM1391 322h1v1h-1zM1426 322h1v1h-1zM1461 322h1v1h-1zM1496 322h1v1h-1zM1531 322h1v1h-1zM1566 322h1v1h-1zM1601 322h1v1h-1zM1636 322h1v1h-1zM1671 322h1v1h-1zM1706 322h1v1h-1zM1741 322h1v1h-1zM27 334h1v1h-1zM62 334h1v1h-1zM97 334h1v1h-1zM132 334h1v1h-1zM167 334h1v1h-1zM202 334h1v1h-1zM237 334h1v1h-1zM272 334h1v1h-1zM307 334h1v1h-1zM342 334h1v1h-1zM377 334h1v1h-1zM412 334h1v1h-1zM447 334h1v1h-1zM482 334h1v1h-1zM517 334h1v1h-1zM552 334h1v1h-1zM587 334h1v1h-1zM622 334h1v1h-1zM657 334h1v1h-1zM692 334h1v1h-1zM727 334h1v1h-1zM762 334h1v1h-1zM797 334h1v1h-1zM832 334h1v1h-1zM867 334h1v1h-1zM902 334h1v1h-1zM936 334h1v1h-1zM971 334h1v1h-1zM1006 334h1v1h-1zM1041 334h1v1h-1zM1076 334h1v1h-1zM1111 334h1v1h-1zM1146 334h1v1h-1zM1181 334h1v1h-1zM1216 334h1v1h-1zM1251 334h1v1h-1zM1286 334h1v1h-1zM1321 334h1v1h-1zM1356 334h1v1h-1zM1391 334h1v1h-1zM1426 334h1v1h-1zM1461 334h1v1h-1zM1496 334h1v1h-1zM1531 334h1v1h-1zM1566 334h1v1h-1zM1601 334h1v1h-1zM1636 334h1v1h-1zM1671 334h1v1h-1zM1706 334h1v1h-1zM1741 334h1v1h-1zM27 345h1v1h-1zM62 345h1v1h-1zM97 345h1v1h-1zM132 345h1v1h-1zM167 345h1v1h-1zM202 345h1v1h-1zM237 345h1v1h-1zM272 345h1v1h-1zM307 345h1v1h-1zM342 345h1v1h-1zM377 345h1v1h-1zM412 345h1v1h-1zM447 345h1v1h-1zM482 345h1v1h-1zM517 345h1v1h-1zM552 345h1v1h-1zM587 345h1v1h-1zM622 345h1v1h-1zM657 345h1v1h-1zM692 345h1v1h-1zM727 345h1v1h-1zM762 345h1v1h-1zM797 345h1v1h-1zM832 345h1v1h-1zM867 345h1v1h-1zM902 345h1v1h-1zM936 345h1v1h-1zM971 345h1v1h-1zM1006 345h1v1h-1zM1041 345h1v1h-1zM1076 345h1v1h-1zM1111 345h1v1h-1zM1146 345h1v1h-1zM1181 345h1v1h-1zM1216 345h1v1h-1zM1251 345h1v1h-1zM1286 345h1v1h-1zM1321 345h1v1h-1zM1356 345h1v1h-1zM1391 345h1v1h-1zM1426 345h1v1h-1zM1461 345h1v1h-1zM1496 345h1v1h-1zM1531 345h1v1h-1zM1566 345h1v1h-1zM1601 345h1v1h-1zM1636 345h1v1h-1zM1671 345h1v1h-1zM1706 345h1v1h-1zM1741 345h1v1h-1zM27 357h1v1h-1zM62 357h1v1h-1zM97 357h1v1h-1zM132 357h1v1h-1zM167 357h1v1h-1zM202 357h1v1h-1zM237 357h1v1h-1zM272 357h1v1h-1zM307 357h1v1h-1zM342 357h1v1h-1zM377 357h1v1h-1zM412 357h1v1h-1zM447 357h1v1h-1zM482 357h1v1h-1zM517 357h1v1h-1zM552 357h1v1h-1zM587 357h1v1h-1zM622 357h1v1h-1zM657 357h1v1h-1zM692 357h1v1h-1zM727 357h1v1h-1zM762 357h1v1h-1zM797 357h1v1h-1zM832 357h1v1h-1zM867 357h1v1h-1zM902 357h1v1h-1zM936 357h1v1h-1zM971 357h1v1h-1zM1006 357h1v1h-1zM1041 357h1v1h-1zM1076 357h1v1h-1zM1111 357h1v1h-1zM1146 357h1v1h-1zM1181 357h1v1h-1zM1216 357h1v1h-1zM1251 357h1v1h-1zM1286 357h1v1h-1zM1321 357h1v1h-1zM1356 357h1v1h-1zM1391 357h1v1h-1zM1426 357h1v1h-1zM1461 357h1v1h-1zM1496 357h1v1h-1zM1531 357h1v1h-1zM1566 357h1v1h-1zM1601 357h1v1h-1zM1636 357h1v1h-1zM1671 357h1v1h-1zM1706 357h1v1h-1zM1741 357h1v1h-1zM27 368h1v1h-1zM62 368h1v1h-1zM97 368h1v1h-1zM132 368h1v1h-1zM167 368h1v1h-1zM202 368h1v1h-1zM237 368h1v1h-1zM272 368h1v1h-1zM307 368h1v1h-1zM342 368h1v1h-1zM377 368h1v1h-1zM412 368h1v1h-1zM447 368h1v1h-1zM482 368h1v1h-1zM517 368h1v1h-1zM552 368h1v1h-1zM587 368h1v1h-1zM622 368h1v1h-1zM657 368h1v1h-1zM692 368h1v1h-1zM727 368h1v1h-1zM762 368h1v1h-1zM797 368h1v1h-1zM832 368h1v1h-1zM867 368h1v1h-1zM902 368h1v1h-1zM936 368h1v1h-1zM971 368h1v1h-1zM1006 368h1v1h-1zM1041 368h1v1h-1zM1076 368h1v1h-1zM1111 368h1v1h-1zM1146 368h1v1h-1zM1181 368h1v1h-1zM1216 368h1v1h-1zM1251 368h1v1h-1zM1286 368h1v1h-1zM1321 368h1v1h-1zM1356 368h1v1h-1zM1391 368h1v1h-1zM1426 368h1v1h-1zM1461 368h1v1h-1zM1496 368h1v1h-1zM1531 368h1v1h-1zM1566 368h1v1h-1zM1601 368h1v1h-1zM1636 368h1v1h-1zM1671 368h1v1h-1zM1706 368h1v1h-1zM1741 368h1v1h-1zM27 380h1v1h-1zM62 380h1v1h-1zM97 380h1v1h-1zM132 380h1v1h-1zM167 380h1v1h-1zM202 380h1v1h-1zM237 380h1v1h-1zM272 380h1v1h-1zM307 380h1v1h-1zM342 380h1v1h-1zM377 380h1v1h-1zM412 380h1v1h-1zM447 380h1v1h-1zM482 380h1v1h-1zM517 380h1v1h-1zM552 380h1v1h-1zM587 380h1v1h-1zM622 380h1v1h-1zM657 380h1v1h-1zM692 380h1v1h-1zM727 380h1v1h-1zM762 380h1v1h-1zM797 380h1v1h-1zM832 380h1v1h-1zM867 380h1v1h-1zM902 380h1v1h-1zM936 380h1v1h-1zM971 380h1v1h-1zM1006 380h1v1h-1zM1041 380h1v1h-1zM1076 380h1v1h-1zM1111 380h1v1h-1zM1146 380h1v1h-1zM1181 380h1v1h-1zM1216 380h1v1h-1zM1251 380h1v1h-1zM1286 380h1v1h-1zM1321 380h1v1h-1zM1356 380h1v1h-1zM1391 380h1v1h-1zM1426 380h1v1h-1zM1461 380h1v1h-1zM1496 380h1v1h-1zM1531 380h1v1h-1zM1566 380h1v1h-1zM1601 380h1v1h-1zM1636 380h1v1h-1zM1671 380h1v1h-1zM1706 380h1v1h-1zM1741 380h1v1h-1zM27 391h1v1h-1zM62 391h1v1h-1zM97 391h1v1h-1zM132 391h1v1h-1zM167 391h1v1h-1zM202 391h1v1h-1zM237 391h1v1h-1zM272 391h1v1h-1zM307 391h1v1h-1zM342 391h1v1h-1zM377 391h1v1h-1zM412 391h1v1h-1zM447 391h1v1h-1zM482 391h1v1h-1zM517 391h1v1h-1zM552 391h1v1h-1zM587 391h1v1h-1zM622 391h1v1h-1zM657 391h1v1h-1zM692 391h1v1h-1zM727 391h1v1h-1zM762 391h1v1h-1zM797 391h1v1h-1zM832 391h1v1h-1zM867 391h1v1h-1zM902 391h1v1h-1zM936 391h1v1h-1zM971 391h1v1h-1zM1006 391h1v1h-1zM1041 391h1v1h-1zM1076 391h1v1h-1zM1111 391h1v1h-1zM1146 391h1v1h-1zM1181 391h1v1h-1zM1216 391h1v1h-1zM1251 391h1v1h-1zM1286 391h1v1h-1zM1321 391h1v1h-1zM1356 391h1v1h-1zM1391 391h1v1h-1zM1426 391h1v1h-1zM1461 391h1v1h-1zM1496 391h1v1h-1zM1531 391h1v1h-1zM1566 391h1v1h-1zM1601 391h1v1h-1zM1636 391h1v1h-1zM1671 391h1v1h-1zM1706 391h1v1h-1zM1741 391h1v1h-1zM27 403h1v1h-1zM62 403h1v1h-1zM97 403h1v1h-1zM132 403h1v1h-1zM167 403h1v1h-1zM202 403h1v1h-1zM237 403h1v1h-1zM272 403h1v1h-1zM307 403h1v1h-1zM342 403h1v1h-1zM377 403h1v1h-1zM412 403h1v1h-1zM447 403h1v1h-1zM482 403h1v1h-1zM517 403h1v1h-1zM552 403h1v1h-1zM587 403h1v1h-1zM622 403h1v1h-1zM657 403h1v1h-1zM692 403h1v1h-1zM727 403h1v1h-1zM762 403h1v1h-1zM797 403h1v1h-1zM832 403h1v1h-1zM867 403h1v1h-1zM902 403h1v1h-1zM936 403h1v1h-1zM971 403h1v1h-1zM1006 403h1v1h-1zM1041 403h1v1h-1zM1076 403h1v1h-1zM1111 403h1v1h-1zM1146 403h1v1h-1zM1181 403h1v1h-1zM1216 403h1v1h-1zM1251 403h1v1h-1zM1286 403h1v1h-1zM1321 403h1v1h-1zM1356 403h1v1h-1zM1391 403h1v1h-1zM1426 403h1v1h-1zM1461 403h1v1h-1zM1496 403h1v1h-1zM1531 403h1v1h-1zM1566 403h1v1h-1zM1601 403h1v1h-1zM1636 403h1v1h-1zM1671 403h1v1h-1zM1706 403h1v1h-1zM1741 403h1v1h-1zM27 410h1v1h-1zM62 410h1v1h-1zM97 410h1v1h-1zM132 410h1v1h-1zM167 410h1v1h-1zM202 410h1v1h-1zM237 410h1v1h-1zM272 410h1v1h-1zM307 410h1v1h-1zM342 410h1v1h-1zM377 410h1v1h-1zM412 410h1v1h-1zM447 410h1v1h-1zM482 410h1v1h-1zM517 410h1v1h-1zM552 410h1v1h-1zM587 410h1v1h-1zM622 410h1v1h-1zM657 410h1v1h-1zM692 410h1v1h-1zM727 410h1v1h-1zM762 410h1v1h-1zM797 410h1v1h-1zM832 410h1v1h-1zM867 410h1v1h-1zM902 410h1v1h-1zM936 410h1v1h-1zM971 410h1v1h-1zM1006 410h1v1h-1zM1041 410h1v1h-1zM1076 410h1v1h-1zM1111 410h1v1h-1zM1146 410h1v1h-1zM1181 410h1v1h-1zM1216 410h1v1h-1zM1251 410h1v1h-1zM1286 410h1v1h-1zM1321 410h1v1h-1zM1356 410h1v1h-1zM1391 410h1v1h-1zM1426 410h1v1h-1zM1461 410h1v1h-1zM1496 410h1v1h-1zM1531 410h1v1h-1zM1566 410h1v1h-1zM1601 410h1v1h-1zM1636 410h1v1h-1zM1671 410h1v1h-1zM1706 410h1v1h-1zM1741 410h1v1h-1zM27 421h1v1h-1zM62 421h1v1h-1zM97 421h1v1h-1zM132 421h1v1h-1zM167 421h1v1h-1zM202 421h1v1h-1zM237 421h1v1h-1zM272 421h1v1h-1zM307 421h1v1h-1zM342 421h1v1h-1zM377 421h1v1h-1zM412 421h1v1h-1zM447 421h1v1h-1zM482 421h1v1h-1zM517 421h1v1h-1zM552 421h1v1h-1zM587 421h1v1h-1zM622 421h1v1h-1zM657 421h1v1h-1zM692 421h1v1h-1zM727 421h1v1h-1zM762 421h1v1h-1zM797 421h1v1h-1zM832 421h1v1h-1zM867 421h1v1h-1zM902 421h1v1h-1zM936 421h1v1h-1zM971 421h1v1h-1zM1006 421h1v1h-1zM1041 421h1v1h-1zM1076 421h1v1h-1zM1111 421h1v1h-1zM1146 421h1v1h-1zM1181 421h1v1h-1zM1216 421h1v1h-1zM1251 421h1v1h-1zM1286 421h1v1h-1zM1321 421h1v1h-1zM1356 421h1v1h-1zM1391 421h1v1h-1zM1426 421h1v1h-1zM1461 421h1v1h-1zM1496 421h1v1h-1zM1531 421h1v1h-1zM1566 421h1v1h-1zM1601 421h1v1h-1zM1636 421h1v1h-1zM1671 421h1v1h-1zM1706 421h1v1h-1zM1741 421h1v1h-1zM27 433h1v1h-1zM62 433h1v1h-1zM97 433h1v1h-1zM132 433h1v1h-1zM167 433h1v1h-1zM202 433h1v1h-1zM237 433h1v1h-1zM272 433h1v1h-1zM307 433h1v1h-1zM342 433h1v1h-1zM377 433h1v1h-1zM412 433h1v1h-1zM447 433h1v1h-1zM482 433h1v1h-1zM517 433h1v1h-1zM552 433h1v1h-1zM587 433h1v1h-1zM622 433h1v1h-1zM657 433h1v1h-1zM692 433h1v1h-1zM727 433h1v1h-1zM762 433h1v1h-1zM797 433h1v1h-1zM832 433h1v1h-1zM867 433h1v1h-1zM902 433h1v1h-1zM936 433h1v1h-1zM971 433h1v1h-1zM1006 433h1v1h-1zM1041 433h1v1h-1zM1076 433h1v1h-1zM1111 433h1v1h-1zM1146 433h1v1h-1zM1181 433h1v1h-1zM1216 433h1v1h-1zM1251 433h1v1h-1zM1286 433h1v1h-1zM1321 433h1v1h-1zM1356 433h1v1h-1zM1391 433h1v1h-1zM1426 433h1v1h-1zM1461 433h1v1h-1zM1496 433h1v1h-1zM1531 433h1v1h-1zM1566 433h1v1h-1zM1601 433h1v1h-1zM1636 433h1v1h-1zM1671 433h1v1h-1zM1706 433h1v1h-1zM1741 433h1v1h-1zM27 444h1v1h-1zM62 444h1v1h-1zM97 444h1v1h-1zM132 444h1v1h-1zM167 444h1v1h-1zM202 444h1v1h-1zM237 444h1v1h-1zM272 444h1v1h-1zM307 444h1v1h-1zM342 444h1v1h-1zM377 444h1v1h-1zM412 444h1v1h-1zM447 444h1v1h-1zM482 444h1v1h-1zM517 444h1v1h-1zM552 444h1v1h-1zM587 444h1v1h-1zM622 444h1v1h-1zM657 444h1v1h-1zM692 444h1v1h-1zM727 444h1v1h-1zM762 444h1v1h-1zM797 444h1v1h-1zM832 444h1v1h-1zM867 444h1v1h-1zM902 444h1v1h-1zM936 444h1v1h-1zM971 444h1v1h-1zM1006 444h1v1h-1zM1041 444h1v1h-1zM1076 444h1v1h-1zM1111 444h1v1h-1zM1146 444h1v1h-1zM1181 444h1v1h-1zM1216 444h1v1h-1zM1251 444h1v1h-1zM1286 444h1v1h-1zM1321 444h1v1h-1zM1356 444h1v1h-1zM1391 444h1v1h-1zM1426 444h1v1h-1zM1461 444h1v1h-1zM1496 444h1v1h-1zM1531 444h1v1h-1zM1566 444h1v1h-1zM1601 444h1v1h-1zM1636 444h1v1h-1zM1671 444h1v1h-1zM1706 444h1v1h-1zM1741 444h1v1h-1zM27 456h1v1h-1zM62 456h1v1h-1zM97 456h1v1h-1zM132 456h1v1h-1zM167 456h1v1h-1zM202 456h1v1h-1zM237 456h1v1h-1zM272 456h1v1h-1zM307 456h1v1h-1zM342 456h1v1h-1zM377 456h1v1h-1zM412 456h1v1h-1zM447 456h1v1h-1zM482 456h1v1h-1zM517 456h1v1h-1zM552 456h1v1h-1zM587 456h1v1h-1zM622 456h1v1h-1zM657 456h1v1h-1zM692 456h1v1h-1zM727 456h1v1h-1zM762 456h1v1h-1zM797 456h1v1h-1zM832 456h1v1h-1zM867 456h1v1h-1zM902 456h1v1h-1zM936 456h1v1h-1zM971 456h1v1h-1zM1006 456h1v1h-1zM1041 456h1v1h-1zM1076 456h1v1h-1zM1111 456h1v1h-1zM1146 456h1v1h-1zM1181 456h1v1h-1zM1216 456h1v1h-1zM1251 456h1v1h-1zM1286 456h1v1h-1zM1321 456h1v1h-1zM1356 456h1v1h-1zM1391 456h1v1h-1zM1426 456h1v1h-1zM1461 456h1v1h-1zM1496 456h1v1h-1zM1531 456h1v1h-1zM1566 456h1v1h-1zM1601 456h1v1h-1zM1636 456h1v1h-1zM1671 456h1v1h-1zM1706 456h1v1h-1zM1741 456h1v1h-1zM27 467h1v1h-1zM62 467h1v1h-1zM97 467h1v1h-1zM132 467h1v1h-1zM167 467h1v1h-1zM202 467h1v1h-1zM237 467h1v1h-1zM272 467h1v1h-1zM307 467h1v1h-1zM342 467h1v1h-1zM377 467h1v1h-1zM412 467h1v1h-1zM447 467h1v1h-1zM482 467h1v1h-1zM517 467h1v1h-1zM552 467h1v1h-1zM587 467h1v1h-1zM622 467h1v1h-1zM657 467h1v1h-1zM692 467h1v1h-1zM727 467h1v1h-1zM762 467h1v1h-1zM797 467h1v1h-1zM832 467h1v1h-1zM867 467h1v1h-1zM902 467h1v1h-1zM936 467h1v1h-1zM971 467h1v1h-1zM1006 467h1v1h-1zM1041 467h1v1h-1zM1076 467h1v1h-1zM1111 467h1v1h-1zM1146 467h1v1h-1zM1181 467h1v1h-1zM1216 467h1v1h-1zM1251 467h1v1h-1zM1286 467h1v1h-1zM1321 467h1v1h-1zM1356 467h1v1h-1zM1391 467h1v1h-1zM1426 467h1v1h-1zM1461 467h1v1h-1zM1496 467h1v1h-1zM1531 467h1v1h-1zM1566 467h1v1h-1zM1601 467h1v1h-1zM1636 467h1v1h-1zM1671 467h1v1h-1zM1706 467h1v1h-1zM1741 467h1v1h-1zM27 479h1v1h-1zM62 479h1v1h-1zM97 479h1v1h-1zM132 479h1v1h-1zM167 479h1v1h-1zM202 479h1v1h-1zM237 479h1v1h-1zM272 479h1v1h-1zM307 479h1v1h-1zM342 479h1v1h-1zM377 479h1v1h-1zM412 479h1v1h-1zM447 479h1v1h-1zM482 479h1v1h-1zM517 479h1v1h-1zM552 479h1v1h-1zM587 479h1v1h-1zM622 479h1v1h-1zM657 479h1v1h-1zM692 479h1v1h-1zM727 479h1v1h-1zM762 479h1v1h-1zM797 479h1v1h-1zM832 479h1v1h-1zM867 479h1v1h-1zM902 479h1v1h-1zM936 479h1v1h-1zM971 479h1v1h-1zM1006 479h1v1h-1zM1041 479h1v1h-1zM1076 479h1v1h-1zM1111 479h1v1h-1zM1146 479h1v1h-1zM1181 479h1v1h-1zM1216 479h1v1h-1zM1251 479h1v1h-1zM1286 479h1v1h-1zM1321 479h1v1h-1zM1356 479h1v1h-1zM1391 479h1v1h-1zM1426 479h1v1h-1zM1461 479h1v1h-1zM1496 479h1v1h-1zM1531 479h1v1h-1zM1566 479h1v1h-1zM1601 479h1v1h-1zM1636 479h1v1h-1zM1671 479h1v1h-1zM1706 479h1v1h-1zM1741 479h1v1h-1zM27 490h1v1h-1zM62 490h1v1h-1zM97 490h1v1h-1zM132 490h1v1h-1zM167 490h1v1h-1zM202 490h1v1h-1zM237 490h1v1h-1zM272 490h1v1h-1zM307 490h1v1h-1zM342 490h1v1h-1zM377 490h1v1h-1zM412 490h1v1h-1zM447 490h1v1h-1zM482 490h1v1h-1zM517 490h1v1h-1zM552 490h1v1h-1zM587 490h1v1h-1zM622 490h1v1h-1zM657 490h1v1h-1zM692 490h1v1h-1zM727 490h1v1h-1zM762 490h1v1h-1zM797 490h1v1h-1zM832 490h1v1h-1zM867 490h1v1h-1zM902 490h1v1h-1zM936 490h1v1h-1zM971 490h1v1h-1zM1006 490h1v1h-1zM1041 490h1v1h-1zM1076 490h1v1h-1zM1111 490h1v1h-1zM1146 490h1v1h-1zM1181 490h1v1h-1zM1216 490h1v1h-1zM1251 490h1v1h-1zM1286 490h1v1h-1zM1321 490h1v1h-1zM1356 490h1v1h-1zM1391 490h1v1h-1zM1426 490h1v1h-1zM1461 490h1v1h-1zM1496 490h1v1h-1zM1531 490h1v1h-1zM1566 490h1v1h-1zM1601 490h1v1h-1zM1636 490h1v1h-1zM1671 490h1v1h-1zM1706 490h1v1h-1zM1741 490h1v1h-1zM27 502h1v1h-1zM62 502h1v1h-1zM97 502h1v1h-1zM132 502h1v1h-1zM167 502h1v1h-1zM202 502h1v1h-1zM237 502h1v1h-1zM272 502h1v1h-1zM307 502h1v1h-1zM342 502h1v1h-1zM377 502h1v1h-1zM412 502h1v1h-1zM447 502h1v1h-1zM482 502h1v1h-1zM517 502h1v1h-1zM552 502h1v1h-1zM587 502h1v1h-1zM622 502h1v1h-1zM657 502h1v1h-1zM692 502h1v1h-1zM727 502h1v1h-1zM762 502h1v1h-1zM797 502h1v1h-1zM832 502h1v1h-1zM867 502h1v1h-1zM902 502h1v1h-1zM936 502h1v1h-1zM971 502h1v1h-1zM1006 502h1v1h-1zM1041 502h1v1h-1zM1076 502h1v1h-1zM1111 502h1v1h-1zM1146 502h1v1h-1zM1181 502h1v1h-1zM1216 502h1v1h-1zM1251 502h1v1h-1zM1286 502h1v1h-1zM1321 502h1v1h-1zM1356 502h1v1h-1zM1391 502h1v1h-1zM1426 502h1v1h-1zM1461 502h1v1h-1zM1496 502h1v1h-1zM1531 502h1v1h-1zM1566 502h1v1h-1zM1601 502h1v1h-1zM1636 502h1v1h-1zM1671 502h1v1h-1zM1706 502h1v1h-1zM1741 502h1v1h-1zM27 513h1v1h-1zM62 513h1v1h-1zM97 513h1v1h-1zM132 513h1v1h-1zM167 513h1v1h-1zM202 513h1v1h-1zM237 513h1v1h-1zM272 513h1v1h-1zM307 513h1v1h-1zM342 513h1v1h-1zM377 513h1v1h-1zM412 513h1v1h-1zM447 513h1v1h-1zM482 513h1v1h-1zM517 513h1v1h-1zM552 513h1v1h-1zM587 513h1v1h-1zM622 513h1v1h-1zM657 513h1v1h-1zM692 513h1v1h-1zM727 513h1v1h-1zM762 513h1v1h-1zM797 513h1v1h-1zM832 513h1v1h-1zM867 513h1v1h-1zM902 513h1v1h-1zM936 513h1v1h-1zM971 513h1v1h-1zM1006 513h1v1h-1zM1041 513h1v1h-1zM1076 513h1v1h-1zM1111 513h1v1h-1zM1146 513h1v1h-1zM1181 513h1v1h-1zM1216 513h1v1h-1zM1251 513h1v1h-1zM1286 513h1v1h-1zM1321 513h1v1h-1zM1356 513h1v1h-1zM1391 513h1v1h-1zM1426 513h1v1h-1zM1461 513h1v1h-1zM1496 513h1v1h-1zM1531 513h1v1h-1zM1566 513h1v1h-1zM1601 513h1v1h-1zM1636 513h1v1h-1zM1671 513h1v1h-1zM1706 513h1v1h-1zM1741 513h1v1h-1zM27 534h1v1h-1zM62 534h1v1h-1zM97 534h1v1h-1zM132 534h1v1h-1zM167 534h1v1h-1zM202 534h1v1h-1zM237 534h1v1h-1zM272 534h1v1h-1zM307 534h1v1h-1zM342 534h1v1h-1zM377 534h1v1h-1zM412 534h1v1h-1zM447 534h1v1h-1zM482 534h1v1h-1zM517 534h1v1h-1zM552 534h1v1h-1zM587 534h1v1h-1zM622 534h1v1h-1zM657 534h1v1h-1zM692 534h1v1h-1zM727 534h1v1h-1zM762 534h1v1h-1zM797 534h1v1h-1zM832 534h1v1h-1zM867 534h1v1h-1zM902 534h1v1h-1zM936 534h1v1h-1zM971 534h1v1h-1zM1006 534h1v1h-1zM1041 534h1v1h-1zM1076 534h1v1h-1zM1111 534h1v1h-1zM1146 534h1v1h-1zM1181 534h1v1h-1zM1216 534h1v1h-1zM1251 534h1v1h-1zM1286 534h1v1h-1zM1321 534h1v1h-1zM1356 534h1v1h-1zM1391 534h1v1h-1zM1426 534h1v1h-1zM1461 534h1v1h-1zM1496 534h1v1h-1zM1531 534h1v1h-1zM1566 534h1v1h-1zM1601 534h1v1h-1zM1636 534h1v1h-1zM1671 534h1v1h-1zM1706 534h1v1h-1zM1741 534h1v1h-1zM27 545h1v1h-1zM62 545h1v1h-1zM97 545h1v1h-1zM132 545h1v1h-1zM167 545h1v1h-1zM202 545h1v1h-1zM237 545h1v1h-1zM272 545h1v1h-1zM307 545h1v1h-1zM342 545h1v1h-1zM377 545h1v1h-1zM412 545h1v1h-1zM447 545h1v1h-1zM482 545h1v1h-1zM517 545h1v1h-1zM552 545h1v1h-1zM587 545h1v1h-1zM622 545h1v1h-1zM657 545h1v1h-1zM692 545h1v1h-1zM727 545h1v1h-1zM762 545h1v1h-1zM797 545h1v1h-1zM832 545h1v1h-1zM867 545h1v1h-1zM902 545h1v1h-1zM936 545h1v1h-1zM971 545h1v1h-1zM1006 545h1v1h-1zM1041 545h1v1h-1zM1076 545h1v1h-1zM1111 545h1v1h-1zM1146 545h1v1h-1zM1181 545h1v1h-1zM1216 545h1v1h-1zM1251 545h1v1h-1zM1286 545h1v1h-1zM1321 545h1v1h-1zM1356 545h1v1h-1zM1391 545h1v1h-1zM1426 545h1v1h-1zM1461 545h1v1h-1zM1496 545h1v1h-1zM1531 545h1v1h-1zM1566 545h1v1h-1zM1601 545h1v1h-1zM1636 545h1v1h-1zM1671 545h1v1h-1zM1706 545h1v1h-1zM1741 545h1v1h-1zM27 557h1v1h-1zM62 557h1v1h-1zM97 557h1v1h-1zM132 557h1v1h-1zM167 557h1v1h-1zM202 557h1v1h-1zM237 557h1v1h-1zM272 557h1v1h-1zM307 557h1v1h-1zM342 557h1v1h-1zM377 557h1v1h-1zM412 557h1v1h-1zM447 557h1v1h-1zM482 557h1v1h-1zM517 557h1v1h-1zM552 557h1v1h-1zM587 557h1v1h-1zM622 557h1v1h-1zM657 557h1v1h-1zM692 557h1v1h-1zM727 557h1v1h-1zM762 557h1v1h-1zM797 557h1v1h-1zM832 557h1v1h-1zM867 557h1v1h-1zM902 557h1v1h-1zM936 557h1v1h-1zM971 557h1v1h-1zM1006 557h1v1h-1zM1041 557h1v1h-1zM1076 557h1v1h-1zM1111 557h1v1h-1zM1146 557h1v1h-1zM1181 557h1v1h-1zM1216 557h1v1h-1zM1251 557h1v1h-1zM1286 557h1v1h-1zM1321 557h1v1h-1zM1356 557h1v1h-1zM1391 557h1v1h-1zM1426 557h1v1h-1zM1461 557h1v1h-1zM1496 557h1v1h-1zM1531 557h1v1h-1zM1566 557h1v1h-1zM1601 557h1v1h-1zM1636 557h1v1h-1zM1671 557h1v1h-1zM1706 557h1v1h-1zM1741 557h1v1h-1zM27 568h1v1h-1zM62 568h1v1h-1zM97 568h1v1h-1zM132 568h1v1h-1zM167 568h1v1h-1zM202 568h1v1h-1zM237 568h1v1h-1zM272 568h1v1h-1zM307 568h1v1h-1zM342 568h1v1h-1zM377 568h1v1h-1zM412 568h1v1h-1zM447 568h1v1h-1zM482 568h1v1h-1zM517 568h1v1h-1zM552 568h1v1h-1zM587 568h1v1h-1zM622 568h1v1h-1zM657 568h1v1h-1zM692 568h1v1h-1zM727 568h1v1h-1zM762 568h1v1h-1zM797 568h1v1h-1zM832 568h1v1h-1zM867 568h1v1h-1zM902 568h1v1h-1zM936 568h1v1h-1zM971 568h1v1h-1zM1006 568h1v1h-1zM1041 568h1v1h-1zM1076 568h1v1h-1zM1111 568h1v1h-1zM1146 568h1v1h-1zM1181 568h1v1h-1zM1216 568h1v1h-1zM1251 568h1v1h-1zM1286 568h1v1h-1zM1321 568h1v1h-1zM1356 568h1v1h-1zM1391 568h1v1h-1zM1426 568h1v1h-1zM1461 568h1v1h-1zM1496 568h1v1h-1zM1531 568h1v1h-1zM1566 568h1v1h-1zM1601 568h1v1h-1zM1636 568h1v1h-1zM1671 568h1v1h-1zM1706 568h1v1h-1zM1741 568h1v1h-1zM27 580h1v1h-1zM62 580h1v1h-1zM97 580h1v1h-1zM132 580h1v1h-1zM167 580h1v1h-1zM202 580h1v1h-1zM237 580h1v1h-1zM272 580h1v1h-1zM307 580h1v1h-1zM342 580h1v1h-1zM377 580h1v1h-1zM412 580h1v1h-1zM447 580h1v1h-1zM482 580h1v1h-1zM517 580h1v1h-1zM552 580h1v1h-1zM587 580h1v1h-1zM622 580h1v1h-1zM657 580h1v1h-1zM692 580h1v1h-1zM727 580h1v1h-1zM762 580h1v1h-1zM797 580h1v1h-1zM832 580h1v1h-1zM867 580h1v1h-1zM902 580h1v1h-1zM936 580h1v1h-1zM971 580h1v1h-1zM1006 580h1v1h-1zM1041 580h1v1h-1zM1076 580h1v1h-1zM1111 580h1v1h-1zM1146 580h1v1h-1zM1181 580h1v1h-1zM1216 580h1v1h-1zM1251 580h1v1h-1zM1286 580h1v1h-1zM1321 580h1v1h-1zM1356 580h1v1h-1zM1391 580h1v1h-1zM1426 580h1v1h-1zM1461 580h1v1h-1zM1496 580h1v1h-1zM1531 580h1v1h-1zM1566 580h1v1h-1zM1601 580h1v1h-1zM1636 580h1v1h-1zM1671 580h1v1h-1zM1706 580h1v1h-1zM1741 580h1v1h-1zM27 591h1v1h-1zM62 591h1v1h-1zM97 591h1v1h-1zM132 591h1v1h-1zM167 591h1v1h-1zM202 591h1v1h-1zM237 591h1v1h-1zM272 591h1v1h-1zM307 591h1v1h-1zM342 591h1v1h-1zM377 591h1v1h-1zM412 591h1v1h-1zM447 591h1v1h-1zM482 591h1v1h-1zM517 591h1v1h-1zM552 591h1v1h-1zM587 591h1v1h-1zM622 591h1v1h-1zM657 591h1v1h-1zM692 591h1v1h-1zM727 591h1v1h-1zM762 591h1v1h-1zM797 591h1v1h-1zM832 591h1v1h-1zM867 591h1v1h-1zM902 591h1v1h-1zM936 591h1v1h-1zM971 591h1v1h-1zM1006 591h1v1h-1zM1041 591h1v1h-1zM1076 591h1v1h-1zM1111 591h1v1h-1zM1146 591h1v1h-1zM1181 591h1v1h-1zM1216 591h1v1h-1zM1251 591h1v1h-1zM1286 591h1v1h-1zM1321 591h1v1h-1zM1356 591h1v1h-1zM1391 591h1v1h-1zM1426 591h1v1h-1zM1461 591h1v1h-1zM1496 591h1v1h-1zM1531 591h1v1h-1zM1566 591h1v1h-1zM1601 591h1v1h-1zM1636 591h1v1h-1zM1671 591h1v1h-1zM1706 591h1v1h-1zM1741 591h1v1h-1zM27 603h1v1h-1zM62 603h1v1h-1zM97 603h1v1h-1zM132 603h1v1h-1zM167 603h1v1h-1zM202 603h1v1h-1zM237 603h1v1h-1zM272 603h1v1h-1zM307 603h1v1h-1zM342 603h1v1h-1zM377 603h1v1h-1zM412 603h1v1h-1zM447 603h1v1h-1zM482 603h1v1h-1zM517 603h1v1h-1zM552 603h1v1h-1zM587 603h1v1h-1zM622 603h1v1h-1zM657 603h1v1h-1zM692 603h1v1h-1zM727 603h1v1h-1zM762 603h1v1h-1zM797 603h1v1h-1zM832 603h1v1h-1zM867 603h1v1h-1zM902 603h1v1h-1zM936 603h1v1h-1zM971 603h1v1h-1zM1006 603h1v1h-1zM1041 603h1v1h-1zM1076 603h1v1h-1zM1111 603h1v1h-1zM1146 603h1v1h-1zM1181 603h1v1h-1zM1216 603h1v1h-1zM1251 603h1v1h-1zM1286 603h1v1h-1zM1321 603h1v1h-1zM1356 603h1v1h-1zM1391 603h1v1h-1zM1426 603h1v1h-1zM1461 603h1v1h-1zM1496 603h1v1h-1zM1531 603h1v1h-1zM1566 603h1v1h-1zM1601 603h1v1h-1zM1636 603h1v1h-1zM1671 603h1v1h-1zM1706 603h1v1h-1zM1741 603h1v1h-1zM27 614h1v1h-1zM62 614h1v1h-1zM97 614h1v1h-1zM132 614h1v1h-1zM167 614h1v1h-1zM202 614h1v1h-1zM237 614h1v1h-1zM272 614h1v1h-1zM307 614h1v1h-1zM342 614h1v1h-1zM377 614h1v1h-1zM412 614h1v1h-1zM447 614h1v1h-1zM482 614h1v1h-1zM517 614h1v1h-1zM552 614h1v1h-1zM587 614h1v1h-1zM622 614h1v1h-1zM657 614h1v1h-1zM692 614h1v1h-1zM727 614h1v1h-1zM762 614h1v1h-1zM797 614h1v1h-1zM832 614h1v1h-1zM867 614h1v1h-1zM902 614h1v1h-1zM936 614h1v1h-1zM971 614h1v1h-1zM1006 614h1v1h-1zM1041 614h1v1h-1zM1076 614h1v1h-1zM1111 614h1v1h-1zM1146 614h1v1h-1zM1181 614h1v1h-1zM1216 614h1v1h-1zM1251 614h1v1h-1zM1286 614h1v1h-1zM1321 614h1v1h-1zM1356 614h1v1h-1zM1391 614h1v1h-1zM1426 614h1v1h-1zM1461 614h1v1h-1zM1496 614h1v1h-1zM1531 614h1v1h-1zM1566 614h1v1h-1zM1601 614h1v1h-1zM1636 614h1v1h-1zM1671 614h1v1h-1zM1706 614h1v1h-1zM1741 614h1v1h-1zM27 626h1v1h-1zM62 626h1v1h-1zM97 626h1v1h-1zM132 626h1v1h-1zM167 626h1v1h-1zM202 626h1v1h-1zM237 626h1v1h-1zM272 626h1v1h-1zM307 626h1v1h-1zM342 626h1v1h-1zM377 626h1v1h-1zM412 626h1v1h-1zM447 626h1v1h-1zM482 626h1v1h-1zM517 626h1v1h-1zM552 626h1v1h-1zM587 626h1v1h-1zM622 626h1v1h-1zM657 626h1v1h-1zM692 626h1v1h-1zM727 626h1v1h-1zM762 626h1v1h-1zM797 626h1v1h-1zM832 626h1v1h-1zM867 626h1v1h-1zM902 626h1v1h-1zM936 626h1v1h-1zM971 626h1v1h-1zM1006 626h1v1h-1zM1041 626h1v1h-1zM1076 626h1v1h-1zM1111 626h1v1h-1zM1146 626h1v1h-1zM1181 626h1v1h-1zM1216 626h1v1h-1zM1251 626h1v1h-1zM1286 626h1v1h-1zM1321 626h1v1h-1zM1356 626h1v1h-1zM1391 626h1v1h-1zM1426 626h1v1h-1zM1461 626h1v1h-1zM1496 626h1v1h-1zM1531 626h1v1h-1zM1566 626h1v1h-1zM1601 626h1v1h-1zM1636 626h1v1h-1zM1671 626h1v1h-1zM1706 626h1v1h-1zM1741 626h1v1h-1zM27 637h1v1h-1zM62 637h1v1h-1zM97 637h1v1h-1zM132 637h1v1h-1zM167 637h1v1h-1zM202 637h1v1h-1zM237 637h1v1h-1zM272 637h1v1h-1zM307 637h1v1h-1zM342 637h1v1h-1zM377 637h1v1h-1zM412 637h1v1h-1zM447 637h1v1h-1zM482 637h1v1h-1zM517 637h1v1h-1zM552 637h1v1h-1zM587 637h1v1h-1zM622 637h1v1h-1zM657 637h1v1h-1zM692 637h1v1h-1zM727 637h1v1h-1zM762 637h1v1h-1zM797 637h1v1h-1zM832 637h1v1h-1zM867 637h1v1h-1zM902 637h1v1h-1zM936 637h1v1h-1zM971 637h1v1h-1zM1006 637h1v1h-1zM1041 637h1v1h-1zM1076 637h1v1h-1zM1111 637h1v1h-1zM1146 637h1v1h-1zM1181 637h1v1h-1zM1216 637h1v1h-1zM1251 637h1v1h-1zM1286 637h1v1h-1zM1321 637h1v1h-1zM1356 637h1v1h-1zM1391 637h1v1h-1zM1426 637h1v1h-1zM1461 637h1v1h-1zM1496 637h1v1h-1zM1531 637h1v1h-1zM1566 637h1v1h-1zM1601 637h1v1h-1zM1636 637h1v1h-1zM1671 637h1v1h-1zM1706 637h1v1h-1zM1741 637h1v1h-1zM27 643h1v1h-1zM62 643h1v1h-1zM97 643h1v1h-1zM132 643h1v1h-1zM167 643h1v1h-1zM202 643h1v1h-1zM237 643h1v1h-1zM272 643h1v1h-1zM307 643h1v1h-1zM342 643h1v1h-1zM377 643h1v1h-1zM412 643h1v1h-1zM447 643h1v1h-1zM482 643h1v1h-1zM517 643h1v1h-1zM552 643h1v1h-1zM587 643h1v1h-1zM622 643h1v1h-1zM657 643h1v1h-1zM692 643h1v1h-1zM727 643h1v1h-1zM762 643h1v1h-1zM797 643h1v1h-1zM832 643h1v1h-1zM867 643h1v1h-1zM902 643h1v1h-1zM936 643h1v1h-1zM971 643h1v1h-1zM1006 643h1v1h-1zM1041 643h1v1h-1zM1076 643h1v1h-1zM1111 643h1v1h-1zM1146 643h1v1h-1zM1181 643h1v1h-1zM1216 643h1v1h-1zM1251 643h1v1h-1zM1286 643h1v1h-1zM1321 643h1v1h-1zM1356 643h1v1h-1zM1391 643h1v1h-1zM1426 643h1v1h-1zM1461 643h1v1h-1zM1496 643h1v1h-1zM1531 643h1v1h-1zM1566 643h1v1h-1zM1601 643h1v1h-1zM1636 643h1v1h-1zM1671 643h1v1h-1zM1706 643h1v1h-1zM1741 643h1v1h-1zM27 655h1v1h-1zM62 655h1v1h-1zM97 655h1v1h-1zM132 655h1v1h-1zM167 655h1v1h-1zM202 655h1v1h-1zM237 655h1v1h-1zM272 655h1v1h-1zM307 655h1v1h-1zM342 655h1v1h-1zM377 655h1v1h-1zM412 655h1v1h-1zM447 655h1v1h-1zM482 655h1v1h-1zM517 655h1v1h-1zM552 655h1v1h-1zM587 655h1v1h-1zM622 655h1v1h-1zM657 655h1v1h-1zM692 655h1v1h-1zM727 655h1v1h-1zM762 655h1v1h-1zM797 655h1v1h-1zM832 655h1v1h-1zM867 655h1v1h-1zM902 655h1v1h-1zM936 655h1v1h-1zM971 655h1v1h-1zM1006 655h1v1h-1zM1041 655h1v1h-1zM1076 655h1v1h-1zM1111 655h1v1h-1zM1146 655h1v1h-1zM1181 655h1v1h-1zM1216 655h1v1h-1zM1251 655h1v1h-1zM1286 655h1v1h-1zM1321 655h1v1h-1zM1356 655h1v1h-1zM1391 655h1v1h-1zM1426 655h1v1h-1zM1461 655h1v1h-1zM1496 655h1v1h-1zM1531 655h1v1h-1zM1566 655h1v1h-1zM1601 655h1v1h-1zM1636 655h1v1h-1zM1671 655h1v1h-1zM1706 655h1v1h-1zM1741 655h1v1h-1zM27 666h1v1h-1zM62 666h1v1h-1zM97 666h1v1h-1zM132 666h1v1h-1zM167 666h1v1h-1zM202 666h1v1h-1zM237 666h1v1h-1zM272 666h1v1h-1zM307 666h1v1h-1zM342 666h1v1h-1zM377 666h1v1h-1zM412 666h1v1h-1zM447 666h1v1h-1zM482 666h1v1h-1zM517 666h1v1h-1zM552 666h1v1h-1zM587 666h1v1h-1zM622 666h1v1h-1zM657 666h1v1h-1zM692 666h1v1h-1zM727 666h1v1h-1zM762 666h1v1h-1zM797 666h1v1h-1zM832 666h1v1h-1zM867 666h1v1h-1zM902 666h1v1h-1zM936 666h1v1h-1zM971 666h1v1h-1zM1006 666h1v1h-1zM1041 666h1v1h-1zM1076 666h1v1h-1zM1111 666h1v1h-1zM1146 666h1v1h-1zM1181 666h1v1h-1zM1216 666h1v1h-1zM1251 666h1v1h-1zM1286 666h1v1h-1zM1321 666h1v1h-1zM1356 666h1v1h-1zM1391 666h1v1h-1zM1426 666h1v1h-1zM1461 666h1v1h-1zM1496 666h1v1h-1zM1531 666h1v1h-1zM1566 666h1v1h-1zM1601 666h1v1h-1zM1636 666h1v1h-1zM1671 666h1v1h-1zM1706 666h1v1h-1zM1741 666h1v1h-1zM27 678h1v1h-1zM62 678h1v1h-1zM97 678h1v1h-1zM132 678h1v1h-1zM167 678h1v1h-1zM202 678h1v1h-1zM237 678h1v1h-1zM272 678h1v1h-1zM307 678h1v1h-1zM342 678h1v1h-1zM377 678h1v1h-1zM412 678h1v1h-1zM447 678h1v1h-1zM482 678h1v1h-1zM517 678h1v1h-1zM552 678h1v1h-1zM587 678h1v1h-1zM622 678h1v1h-1zM657 678h1v1h-1zM692 678h1v1h-1zM727 678h1v1h-1zM762 678h1v1h-1zM797 678h1v1h-1zM832 678h1v1h-1zM867 678h1v1h-1zM902 678h1v1h-1zM936 678h1v1h-1zM971 678h1v1h-1zM1006 678h1v1h-1zM1041 678h1v1h-1zM1076 678h1v1h-1zM1111 678h1v1h-1zM1146 678h1v1h-1zM1181 678h1v1h-1zM1216 678h1v1h-1zM1251 678h1v1h-1zM1286 678h1v1h-1zM1321 678h1v1h-1zM1356 678h1v1h-1zM1391 678h1v1h-1zM1426 678h1v1h-1zM1461 678h1v1h-1zM1496 678h1v1h-1zM1531 678h1v1h-1zM1566 678h1v1h-1zM1601 678h1v1h-1zM1636 678h1v1h-1zM1671 678h1v1h-1zM1706 678h1v1h-1zM1741 678h1v1h-1zM27 689h1v1h-1zM62 689h1v1h-1zM97 689h1v1h-1zM132 689h1v1h-1zM167 689h1v1h-1zM202 689h1v1h-1zM237 689h1v1h-1zM272 689h1v1h-1zM307 689h1v1h-1zM342 689h1v1h-1zM377 689h1v1h-1zM412 689h1v1h-1zM447 689h1v1h-1zM482 689h1v1h-1zM517 689h1v1h-1zM552 689h1v1h-1zM587 689h1v1h-1zM622 689h1v1h-1zM657 689h1v1h-1zM692 689h1v1h-1zM727 689h1v1h-1zM762 689h1v1h-1zM797 689h1v1h-1zM832 689h1v1h-1zM867 689h1v1h-1zM902 689h1v1h-1zM936 689h1v1h-1zM971 689h1v1h-1zM1006 689h1v1h-1zM1041 689h1v1h-1zM1076 689h1v1h-1zM1111 689h1v1h-1zM1146 689h1v1h-1zM1181 689h1v1h-1zM1216 689h1v1h-1zM1251 689h1v1h-1zM1286 689h1v1h-1zM1321 689h1v1h-1zM1356 689h1v1h-1zM1391 689h1v1h-1zM1426 689h1v1h-1zM1461 689h1v1h-1zM1496 689h1v1h-1zM1531 689h1v1h-1zM1566 689h1v1h-1zM1601 689h1v1h-1zM1636 689h1v1h-1zM1671 689h1v1h-1zM1706 689h1v1h-1zM1741 689h1v1h-1zM27 701h1v1h-1zM62 701h1v1h-1zM97 701h1v1h-1zM132 701h1v1h-1zM167 701h1v1h-1zM202 701h1v1h-1zM237 701h1v1h-1zM272 701h1v1h-1zM307 701h1v1h-1zM342 701h1v1h-1zM377 701h1v1h-1zM412 701h1v1h-1zM447 701h1v1h-1zM482 701h1v1h-1zM517 701h1v1h-1zM552 701h1v1h-1zM587 701h1v1h-1zM622 701h1v1h-1zM657 701h1v1h-1zM692 701h1v1h-1zM727 701h1v1h-1zM762 701h1v1h-1zM797 701h1v1h-1zM832 701h1v1h-1zM867 701h1v1h-1zM902 701h1v1h-1zM936 701h1v1h-1zM971 701h1v1h-1zM1006 701h1v1h-1zM1041 701h1v1h-1zM1076 701h1v1h-1zM1111 701h1v1h-1zM1146 701h1v1h-1zM1181 701h1v1h-1zM1216 701h1v1h-1zM1251 701h1v1h-1zM1286 701h1v1h-1zM1321 701h1v1h-1zM1356 701h1v1h-1zM1391 701h1v1h-1zM1426 701h1v1h-1zM1461 701h1v1h-1zM1496 701h1v1h-1zM1531 701h1v1h-1zM1566 701h1v1h-1zM1601 701h1v1h-1zM1636 701h1v1h-1zM1671 701h1v1h-1zM1706 701h1v1h-1zM1741 701h1v1h-1zM27 712h1v1h-1zM62 712h1v1h-1zM97 712h1v1h-1zM132 712h1v1h-1zM167 712h1v1h-1zM202 712h1v1h-1zM237 712h1v1h-1zM272 712h1v1h-1zM307 712h1v1h-1zM342 712h1v1h-1zM377 712h1v1h-1zM412 712h1v1h-1zM447 712h1v1h-1zM482 712h1v1h-1zM517 712h1v1h-1zM552 712h1v1h-1zM587 712h1v1h-1zM622 712h1v1h-1zM657 712h1v1h-1zM692 712h1v1h-1zM727 712h1v1h-1zM762 712h1v1h-1zM797 712h1v1h-1zM832 712h1v1h-1zM867 712h1v1h-1zM902 712h1v1h-1zM936 712h1v1h-1zM971 712h1v1h-1zM1006 712h1v1h-1zM1041 712h1v1h-1zM1076 712h1v1h-1zM1111 712h1v1h-1zM1146 712h1v1h-1zM1181 712h1v1h-1zM1216 712h1v1h-1zM1251 712h1v1h-1zM1286 712h1v1h-1zM1321 712h1v1h-1zM1356 712h1v1h-1zM1391 712h1v1h-1zM1426 712h1v1h-1zM1461 712h1v1h-1zM1496 712h1v1h-1zM1531 712h1v1h-1zM1566 712h1v1h-1zM1601 712h1v1h-1zM1636 712h1v1h-1zM1671 712h1v1h-1zM1706 712h1v1h-1zM1741 712h1v1h-1zM27 724h1v1h-1zM62 724h1v1h-1zM97 724h1v1h-1zM132 724h1v1h-1zM167 724h1v1h-1zM202 724h1v1h-1zM237 724h1v1h-1zM272 724h1v1h-1zM307 724h1v1h-1zM342 724h1v1h-1zM377 724h1v1h-1zM412 724h1v1h-1zM447 724h1v1h-1zM482 724h1v1h-1zM517 724h1v1h-1zM552 724h1v1h-1zM587 724h1v1h-1zM622 724h1v1h-1zM657 724h1v1h-1zM692 724h1v1h-1zM727 724h1v1h-1zM762 724h1v1h-1zM797 724h1v1h-1zM832 724h1v1h-1zM867 724h1v1h-1zM902 724h1v1h-1zM936 724h1v1h-1zM971 724h1v1h-1zM1006 724h1v1h-1zM1041 724h1v1h-1zM1076 724h1v1h-1zM1111 724h1v1h-1zM1146 724h1v1h-1zM1181 724h1v1h-1zM1216 724h1v1h-1zM1251 724h1v1h-1zM1286 724h1v1h-1zM1321 724h1v1h-1zM1356 724h1v1h-1zM1391 724h1v1h-1zM1426 724h1v1h-1zM1461 724h1v1h-1zM1496 724h1v1h-1zM1531 724h1v1h-1zM1566 724h1v1h-1zM1601 724h1v1h-1zM1636 724h1v1h-1zM1671 724h1v1h-1zM1706 724h1v1h-1zM1741 724h1v1h-1zM27 735h1v1h-1zM62 735h1v1h-1zM97 735h1v1h-1zM132 735h1v1h-1zM167 735h1v1h-1zM202 735h1v1h-1zM237 735h1v1h-1zM272 735h1v1h-1zM307 735h1v1h-1zM342 735h1v1h-1zM377 735h1v1h-1zM412 735h1v1h-1zM447 735h1v1h-1zM482 735h1v1h-1zM517 735h1v1h-1zM552 735h1v1h-1zM587 735h1v1h-1zM622 735h1v1h-1zM657 735h1v1h-1zM692 735h1v1h-1zM727 735h1v1h-1zM762 735h1v1h-1zM797 735h1v1h-1zM832 735h1v1h-1zM867 735h1v1h-1zM902 735h1v1h-1zM936 735h1v1h-1zM971 735h1v1h-1zM1006 735h1v1h-1zM1041 735h1v1h-1zM1076 735h1v1h-1zM1111 735h1v1h-1zM1146 735h1v1h-1zM1181 735h1v1h-1zM1216 735h1v1h-1zM1251 735h1v1h-1zM1286 735h1v1h-1zM1321 735h1v1h-1zM1356 735h1v1h-1zM1391 735h1v1h-1zM1426 735h1v1h-1zM1461 735h1v1h-1zM1496 735h1v1h-1zM1531 735h1v1h-1zM1566 735h1v1h-1zM1601 735h1v1h-1zM1636 735h1v1h-1zM1671 735h1v1h-1zM1706 735h1v1h-1zM1741 735h1v1h-1zM27 747h1v1h-1zM62 747h1v1h-1zM97 747h1v1h-1zM132 747h1v1h-1zM167 747h1v1h-1zM202 747h1v1h-1zM237 747h1v1h-1zM272 747h1v1h-1zM307 747h1v1h-1zM342 747h1v1h-1zM377 747h1v1h-1zM412 747h1v1h-1zM447 747h1v1h-1zM482 747h1v1h-1zM517 747h1v1h-1zM552 747h1v1h-1zM587 747h1v1h-1zM622 747h1v1h-1zM657 747h1v1h-1zM692 747h1v1h-1zM727 747h1v1h-1zM762 747h1v1h-1zM797 747h1v1h-1zM832 747h1v1h-1zM867 747h1v1h-1zM902 747h1v1h-1zM936 747h1v1h-1zM971 747h1v1h-1zM1006 747h1v1h-1zM1041 747h1v1h-1zM1076 747h1v1h-1zM1111 747h1v1h-1zM1146 747h1v1h-1zM1181 747h1v1h-1zM1216 747h1v1h-1zM1251 747h1v1h-1zM1286 747h1v1h-1zM1321 747h1v1h-1zM1356 747h1v1h-1zM1391 747h1v1h-1zM1426 747h1v1h-1zM1461 747h1v1h-1zM1496 747h1v1h-1zM1531 747h1v1h-1zM1566 747h1v1h-1zM1601 747h1v1h-1zM1636 747h1v1h-1zM1671 747h1v1h-1zM1706 747h1v1h-1zM1741 747h1v1h-1zM27 766h1v1h-1zM62 766h1v1h-1zM97 766h1v1h-1zM132 766h1v1h-1zM167 766h1v1h-1zM202 766h1v1h-1zM237 766h1v1h-1zM272 766h1v1h-1zM307 766h1v1h-1zM342 766h1v1h-1zM377 766h1v1h-1zM412 766h1v1h-1zM447 766h1v1h-1zM482 766h1v1h-1zM517 766h1v1h-1zM552 766h1v1h-1zM587 766h1v1h-1zM622 766h1v1h-1zM657 766h1v1h-1zM692 766h1v1h-1zM727 766h1v1h-1zM762 766h1v1h-1zM797 766h1v1h-1zM832 766h1v1h-1zM867 766h1v1h-1zM902 766h1v1h-1zM936 766h1v1h-1zM971 766h1v1h-1zM1006 766h1v1h-1zM1041 766h1v1h-1zM1076 766h1v1h-1zM1111 766h1v1h-1zM1146 766h1v1h-1zM1181 766h1v1h-1zM1216 766h1v1h-1zM1251 766h1v1h-1zM1286 766h1v1h-1zM1321 766h1v1h-1zM1356 766h1v1h-1zM1391 766h1v1h-1zM1426 766h1v1h-1zM1461 766h1v1h-1zM1496 766h1v1h-1zM1531 766h1v1h-1zM1566 766h1v1h-1zM1601 766h1v1h-1zM1636 766h1v1h-1zM1671 766h1v1h-1zM1706 766h1v1h-1zM1741 766h1v1h-1zM27 778h1v1h-1zM62 778h1v1h-1zM97 778h1v1h-1zM132 778h1v1h-1zM167 778h1v1h-1zM202 778h1v1h-1zM237 778h1v1h-1zM272 778h1v1h-1zM307 778h1v1h-1zM342 778h1v1h-1zM377 778h1v1h-1zM412 778h1v1h-1zM447 778h1v1h-1zM482 778h1v1h-1zM517 778h1v1h-1zM552 778h1v1h-1zM587 778h1v1h-1zM622 778h1v1h-1zM657 778h1v1h-1zM692 778h1v1h-1zM727 778h1v1h-1zM762 778h1v1h-1zM797 778h1v1h-1zM832 778h1v1h-1zM867 778h1v1h-1zM902 778h1v1h-1zM936 778h1v1h-1zM971 778h1v1h-1zM1006 778h1v1h-1zM1041 778h1v1h-1zM1076 778h1v1h-1zM1111 778h1v1h-1zM1146 778h1v1h-1zM1181 778h1v1h-1zM1216 778h1v1h-1zM1251 778h1v1h-1zM1286 778h1v1h-1zM1321 778h1v1h-1zM1356 778h1v1h-1zM1391 778h1v1h-1zM1426 778h1v1h-1zM1461 778h1v1h-1zM1496 778h1v1h-1zM1531 778h1v1h-1zM1566 778h1v1h-1zM1601 778h1v1h-1zM1636 778h1v1h-1zM1671 778h1v1h-1zM1706 778h1v1h-1zM1741 778h1v1h-1zM27 789h1v1h-1zM62 789h1v1h-1zM97 789h1v1h-1zM132 789h1v1h-1zM167 789h1v1h-1zM202 789h1v1h-1zM237 789h1v1h-1zM272 789h1v1h-1zM307 789h1v1h-1zM342 789h1v1h-1zM377 789h1v1h-1zM412 789h1v1h-1zM447 789h1v1h-1zM482 789h1v1h-1zM517 789h1v1h-1zM552 789h1v1h-1zM587 789h1v1h-1zM622 789h1v1h-1zM657 789h1v1h-1zM692 789h1v1h-1zM727 789h1v1h-1zM762 789h1v1h-1zM797 789h1v1h-1zM832 789h1v1h-1zM867 789h1v1h-1zM902 789h1v1h-1zM936 789h1v1h-1zM971 789h1v1h-1zM1006 789h1v1h-1zM1041 789h1v1h-1zM1076 789h1v1h-1zM1111 789h1v1h-1zM1146 789h1v1h-1zM1181 789h1v1h-1zM1216 789h1v1h-1zM1251 789h1v1h-1zM1286 789h1v1h-1zM1321 789h1v1h-1zM1356 789h1v1h-1zM1391 789h1v1h-1zM1426 789h1v1h-1zM1461 789h1v1h-1zM1496 789h1v1h-1zM1531 789h1v1h-1zM1566 789h1v1h-1zM1601 789h1v1h-1zM1636 789h1v1h-1zM1671 789h1v1h-1zM1706 789h1v1h-1zM1741 789h1v1h-1zM27 801h1v1h-1zM62 801h1v1h-1zM97 801h1v1h-1zM132 801h1v1h-1zM167 801h1v1h-1zM202 801h1v1h-1zM237 801h1v1h-1zM272 801h1v1h-1zM307 801h1v1h-1zM342 801h1v1h-1zM377 801h1v1h-1zM412 801h1v1h-1zM447 801h1v1h-1zM482 801h1v1h-1zM517 801h1v1h-1zM552 801h1v1h-1zM587 801h1v1h-1zM622 801h1v1h-1zM657 801h1v1h-1zM692 801h1v1h-1zM727 801h1v1h-1zM762 801h1v1h-1zM797 801h1v1h-1zM832 801h1v1h-1zM867 801h1v1h-1zM902 801h1v1h-1zM936 801h1v1h-1zM971 801h1v1h-1zM1006 801h1v1h-1zM1041 801h1v1h-1zM1076 801h1v1h-1zM1111 801h1v1h-1zM1146 801h1v1h-1zM1181 801h1v1h-1zM1216 801h1v1h-1zM1251 801h1v1h-1zM1286 801h1v1h-1zM1321 801h1v1h-1zM1356 801h1v1h-1zM1391 801h1v1h-1zM1426 801h1v1h-1zM1461 801h1v1h-1zM1496 801h1v1h-1zM1531 801h1v1h-1zM1566 801h1v1h-1zM1601 801h1v1h-1zM1636 801h1v1h-1zM1671 801h1v1h-1zM1706 801h1v1h-1zM1741 801h1v1h-1zM27 812h1v1h-1zM62 812h1v1h-1zM97 812h1v1h-1zM132 812h1v1h-1zM167 812h1v1h-1zM202 812h1v1h-1zM237 812h1v1h-1zM272 812h1v1h-1zM307 812h1v1h-1zM342 812h1v1h-1zM377 812h1v1h-1zM412 812h1v1h-1zM447 812h1v1h-1zM482 812h1v1h-1zM517 812h1v1h-1zM552 812h1v1h-1zM587 812h1v1h-1zM622 812h1v1h-1zM657 812h1v1h-1zM692 812h1v1h-1zM727 812h1v1h-1zM762 812h1v1h-1zM797 812h1v1h-1zM832 812h1v1h-1zM867 812h1v1h-1zM902 812h1v1h-1zM936 812h1v1h-1zM971 812h1v1h-1zM1006 812h1v1h-1zM1041 812h1v1h-1zM1076 812h1v1h-1zM1111 812h1v1h-1zM1146 812h1v1h-1zM1181 812h1v1h-1zM1216 812h1v1h-1zM1251 812h1v1h-1zM1286 812h1v1h-1zM1321 812h1v1h-1zM1356 812h1v1h-1zM1391 812h1v1h-1zM1426 812h1v1h-1zM1461 812h1v1h-1zM1496 812h1v1h-1zM1531 812h1v1h-1zM1566 812h1v1h-1zM1601 812h1v1h-1zM1636 812h1v1h-1zM1671 812h1v1h-1zM1706 812h1v1h-1zM1741 812h1v1h-1zM27 824h1v1h-1zM62 824h1v1h-1zM97 824h1v1h-1zM132 824h1v1h-1zM167 824h1v1h-1zM202 824h1v1h-1zM237 824h1v1h-1zM272 824h1v1h-1zM307 824h1v1h-1zM342 824h1v1h-1zM377 824h1v1h-1zM412 824h1v1h-1zM447 824h1v1h-1zM482 824h1v1h-1zM517 824h1v1h-1zM552 824h1v1h-1zM587 824h1v1h-1zM622 824h1v1h-1zM657 824h1v1h-1zM692 824h1v1h-1zM727 824h1v1h-1zM762 824h1v1h-1zM797 824h1v1h-1zM832 824h1v1h-1zM867 824h1v1h-1zM902 824h1v1h-1zM936 824h1v1h-1zM971 824h1v1h-1zM1006 824h1v1h-1zM1041 824h1v1h-1zM1076 824h1v1h-1zM1111 824h1v1h-1zM1146 824h1v1h-1zM1181 824h1v1h-1zM1216 824h1v1h-1zM1251 824h1v1h-1zM1286 824h1v1h-1zM1321 824h1v1h-1zM1356 824h1v1h-1zM1391 824h1v1h-1zM1426 824h1v1h-1zM1461 824h1v1h-1zM1496 824h1v1h-1zM1531 824h1v1h-1zM1566 824h1v1h-1zM1601 824h1v1h-1zM1636 824h1v1h-1zM1671 824h1v1h-1zM1706 824h1v1h-1zM1741 824h1v1h-1zM27 835h1v1h-1zM62 835h1v1h-1zM97 835h1v1h-1zM132 835h1v1h-1zM167 835h1v1h-1zM202 835h1v1h-1zM237 835h1v1h-1zM272 835h1v1h-1zM307 835h1v1h-1zM342 835h1v1h-1zM377 835h1v1h-1zM412 835h1v1h-1zM447 835h1v1h-1zM482 835h1v1h-1zM517 835h1v1h-1zM552 835h1v1h-1zM587 835h1v1h-1zM622 835h1v1h-1zM657 835h1v1h-1zM692 835h1v1h-1zM727 835h1v1h-1zM762 835h1v1h-1zM797 835h1v1h-1zM832 835h1v1h-1zM867 835h1v1h-1zM902 835h1v1h-1zM936 835h1v1h-1zM971 835h1v1h-1zM1006 835h1v1h-1zM1041 835h1v1h-1zM1076 835h1v1h-1zM1111 835h1v1h-1zM1146 835h1v1h-1zM1181 835h1v1h-1zM1216 835h1v1h-1zM1251 835h1v1h-1zM1286 835h1v1h-1zM1321 835h1v1h-1zM1356 835h1v1h-1zM1391 835h1v1h-1zM1426 835h1v1h-1zM1461 835h1v1h-1zM1496 835h1v1h-1zM1531 835h1v1h-1zM1566 835h1v1h-1zM1601 835h1v1h-1zM1636 835h1v1h-1zM1671 835h1v1h-1zM1706 835h1v1h-1zM1741 835h1v1h-1zM27 847h1v1h-1zM62 847h1v1h-1zM97 847h1v1h-1zM132 847h1v1h-1zM167 847h1v1h-1zM202 847h1v1h-1zM237 847h1v1h-1zM272 847h1v1h-1zM307 847h1v1h-1zM342 847h1v1h-1zM377 847h1v1h-1zM412 847h1v1h-1zM447 847h1v1h-1zM482 847h1v1h-1zM517 847h1v1h-1zM552 847h1v1h-1zM587 847h1v1h-1zM622 847h1v1h-1zM657 847h1v1h-1zM692 847h1v1h-1zM727 847h1v1h-1zM762 847h1v1h-1zM797 847h1v1h-1zM832 847h1v1h-1zM867 847h1v1h-1zM902 847h1v1h-1zM936 847h1v1h-1zM971 847h1v1h-1zM1006 847h1v1h-1zM1041 847h1v1h-1zM1076 847h1v1h-1zM1111 847h1v1h-1zM1146 847h1v1h-1zM1181 847h1v1h-1zM1216 847h1v1h-1zM1251 847h1v1h-1zM1286 847h1v1h-1zM1321 847h1v1h-1zM1356 847h1v1h-1zM1391 847h1v1h-1zM1426 847h1v1h-1zM1461 847h1v1h-1zM1496 847h1v1h-1zM1531 847h1v1h-1zM1566 847h1v1h-1zM1601 847h1v1h-1zM1636 847h1v1h-1zM1671 847h1v1h-1zM1706 847h1v1h-1zM1741 847h1v1h-1zM27 858h1v1h-1zM62 858h1v1h-1zM97 858h1v1h-1zM132 858h1v1h-1zM167 858h1v1h-1zM202 858h1v1h-1zM237 858h1v1h-1zM272 858h1v1h-1zM307 858h1v1h-1zM342 858h1v1h-1zM377 858h1v1h-1zM412 858h1v1h-1zM447 858h1v1h-1zM482 858h1v1h-1zM517 858h1v1h-1zM552 858h1v1h-1zM587 858h1v1h-1zM622 858h1v1h-1zM657 858h1v1h-1zM692 858h1v1h-1zM727 858h1v1h-1zM762 858h1v1h-1zM797 858h1v1h-1zM832 858h1v1h-1zM867 858h1v1h-1zM902 858h1v1h-1zM936 858h1v1h-1zM971 858h1v1h-1zM1006 858h1v1h-1zM1041 858h1v1h-1zM1076 858h1v1h-1zM1111 858h1v1h-1zM1146 858h1v1h-1zM1181 858h1v1h-1zM1216 858h1v1h-1zM1251 858h1v1h-1zM1286 858h1v1h-1zM1321 858h1v1h-1zM1356 858h1v1h-1zM1391 858h1v1h-1zM1426 858h1v1h-1zM1461 858h1v1h-1zM1496 858h1v1h-1zM1531 858h1v1h-1zM1566 858h1v1h-1zM1601 858h1v1h-1zM1636 858h1v1h-1zM1671 858h1v1h-1zM1706 858h1v1h-1zM1741 858h1v1h-1zM27 870h1v1h-1zM62 870h1v1h-1zM97 870h1v1h-1zM132 870h1v1h-1zM167 870h1v1h-1zM202 870h1v1h-1zM237 870h1v1h-1zM272 870h1v1h-1zM307 870h1v1h-1zM342 870h1v1h-1zM377 870h1v1h-1zM412 870h1v1h-1zM447 870h1v1h-1zM482 870h1v1h-1zM517 870h1v1h-1zM552 870h1v1h-1zM587 870h1v1h-1zM622 870h1v1h-1zM657 870h1v1h-1zM692 870h1v1h-1zM727 870h1v1h-1zM762 870h1v1h-1zM797 870h1v1h-1zM832 870h1v1h-1zM867 870h1v1h-1zM902 870h1v1h-1zM936 870h1v1h-1zM971 870h1v1h-1zM1006 870h1v1h-1zM1041 870h1v1h-1zM1076 870h1v1h-1zM1111 870h1v1h-1zM1146 870h1v1h-1zM1181 870h1v1h-1zM1216 870h1v1h-1zM1251 870h1v1h-1zM1286 870h1v1h-1zM1321 870h1v1h-1zM1356 870h1v1h-1zM1391 870h1v1h-1zM1426 870h1v1h-1zM1461 870h1v1h-1zM1496 870h1v1h-1zM1531 870h1v1h-1zM1566 870h1v1h-1zM1601 870h1v1h-1zM1636 870h1v1h-1zM1671 870h1v1h-1zM1706 870h1v1h-1zM1741 870h1v1h-1zM27 880h1v1h-1zM62 880h1v1h-1zM97 880h1v1h-1zM132 880h1v1h-1zM167 880h1v1h-1zM202 880h1v1h-1zM237 880h1v1h-1zM272 880h1v1h-1zM307 880h1v1h-1zM342 880h1v1h-1zM377 880h1v1h-1zM412 880h1v1h-1zM447 880h1v1h-1zM482 880h1v1h-1zM517 880h1v1h-1zM552 880h1v1h-1zM587 880h1v1h-1zM622 880h1v1h-1zM657 880h1v1h-1zM692 880h1v1h-1zM727 880h1v1h-1zM762 880h1v1h-1zM797 880h1v1h-1zM832 880h1v1h-1zM867 880h1v1h-1zM902 880h1v1h-1zM936 880h1v1h-1zM971 880h1v1h-1zM1006 880h1v1h-1zM1041 880h1v1h-1zM1076 880h1v1h-1zM1111 880h1v1h-1zM1146 880h1v1h-1zM1181 880h1v1h-1zM1216 880h1v1h-1zM1251 880h1v1h-1zM1286 880h1v1h-1zM1321 880h1v1h-1zM1356 880h1v1h-1zM1391 880h1v1h-1zM1426 880h1v1h-1zM1461 880h1v1h-1zM1496 880h1v1h-1zM1531 880h1v1h-1zM1566 880h1v1h-1zM1601 880h1v1h-1zM1636 880h1v1h-1zM1671 880h1v1h-1zM1706 880h1v1h-1zM1741 880h1v1h-1zM27 891h1v1h-1zM62 891h1v1h-1zM97 891h1v1h-1zM132 891h1v1h-1zM167 891h1v1h-1zM202 891h1v1h-1zM237 891h1v1h-1zM272 891h1v1h-1zM307 891h1v1h-1zM342 891h1v1h-1zM377 891h1v1h-1zM412 891h1v1h-1zM447 891h1v1h-1zM482 891h1v1h-1zM517 891h1v1h-1zM552 891h1v1h-1zM587 891h1v1h-1zM622 891h1v1h-1zM657 891h1v1h-1zM692 891h1v1h-1zM727 891h1v1h-1zM762 891h1v1h-1zM797 891h1v1h-1zM832 891h1v1h-1zM867 891h1v1h-1zM902 891h1v1h-1zM936 891h1v1h-1zM971 891h1v1h-1zM1006 891h1v1h-1zM1041 891h1v1h-1zM1076 891h1v1h-1zM1111 891h1v1h-1zM1146 891h1v1h-1zM1181 891h1v1h-1zM1216 891h1v1h-1zM1251 891h1v1h-1zM1286 891h1v1h-1zM1321 891h1v1h-1zM1356 891h1v1h-1zM1391 891h1v1h-1zM1426 891h1v1h-1zM1461 891h1v1h-1zM1496 891h1v1h-1zM1531 891h1v1h-1zM1566 891h1v1h-1zM1601 891h1v1h-1zM1636 891h1v1h-1zM1671 891h1v1h-1zM1706 891h1v1h-1zM1741 891h1v1h-1zM27 903h1v1h-1zM62 903h1v1h-1zM97 903h1v1h-1zM132 903h1v1h-1zM167 903h1v1h-1zM202 903h1v1h-1zM237 903h1v1h-1zM272 903h1v1h-1zM307 903h1v1h-1zM342 903h1v1h-1zM377 903h1v1h-1zM412 903h1v1h-1zM447 903h1v1h-1zM482 903h1v1h-1zM517 903h1v1h-1zM552 903h1v1h-1zM587 903h1v1h-1zM622 903h1v1h-1zM657 903h1v1h-1zM692 903h1v1h-1zM727 903h1v1h-1zM762 903h1v1h-1zM797 903h1v1h-1zM832 903h1v1h-1zM867 903h1v1h-1zM902 903h1v1h-1zM936 903h1v1h-1zM971 903h1v1h-1zM1006 903h1v1h-1zM1041 903h1v1h-1zM1076 903h1v1h-1zM1111 903h1v1h-1zM1146 903h1v1h-1zM1181 903h1v1h-1zM1216 903h1v1h-1zM1251 903h1v1h-1zM1286 903h1v1h-1zM1321 903h1v1h-1zM1356 903h1v1h-1zM1391 903h1v1h-1zM1426 903h1v1h-1zM1461 903h1v1h-1zM1496 903h1v1h-1zM1531 903h1v1h-1zM1566 903h1v1h-1zM1601 903h1v1h-1zM1636 903h1v1h-1zM1671 903h1v1h-1zM1706 903h1v1h-1zM1741 903h1v1h-1zM27 915h1v1h-1zM62 915h1v1h-1zM97 915h1v1h-1zM132 915h1v1h-1zM167 915h1v1h-1zM202 915h1v1h-1zM237 915h1v1h-1zM272 915h1v1h-1zM307 915h1v1h-1zM342 915h1v1h-1zM377 915h1v1h-1zM412 915h1v1h-1zM447 915h1v1h-1zM482 915h1v1h-1zM517 915h1v1h-1zM552 915h1v1h-1zM587 915h1v1h-1zM622 915h1v1h-1zM657 915h1v1h-1zM692 915h1v1h-1zM727 915h1v1h-1zM762 915h1v1h-1zM797 915h1v1h-1zM832 915h1v1h-1zM867 915h1v1h-1zM902 915h1v1h-1zM936 915h1v1h-1zM971 915h1v1h-1zM1006 915h1v1h-1zM1041 915h1v1h-1zM1076 915h1v1h-1zM1111 915h1v1h-1zM1146 915h1v1h-1zM1181 915h1v1h-1zM1216 915h1v1h-1zM1251 915h1v1h-1zM1286 915h1v1h-1zM1321 915h1v1h-1zM1356 915h1v1h-1zM1391 915h1v1h-1zM1426 915h1v1h-1zM1461 915h1v1h-1zM1496 915h1v1h-1zM1531 915h1v1h-1zM1566 915h1v1h-1zM1601 915h1v1h-1zM1636 915h1v1h-1zM1671 915h1v1h-1zM1706 915h1v1h-1zM1741 915h1v1h-1zM27 926h1v1h-1zM62 926h1v1h-1zM97 926h1v1h-1zM132 926h1v1h-1zM167 926h1v1h-1zM202 926h1v1h-1zM237 926h1v1h-1zM272 926h1v1h-1zM307 926h1v1h-1zM342 926h1v1h-1zM377 926h1v1h-1zM412 926h1v1h-1zM447 926h1v1h-1zM482 926h1v1h-1zM517 926h1v1h-1zM552 926h1v1h-1zM587 926h1v1h-1zM622 926h1v1h-1zM657 926h1v1h-1zM692 926h1v1h-1zM727 926h1v1h-1zM762 926h1v1h-1zM797 926h1v1h-1zM832 926h1v1h-1zM867 926h1v1h-1zM902 926h1v1h-1zM936 926h1v1h-1zM971 926h1v1h-1zM1006 926h1v1h-1zM1041 926h1v1h-1zM1076 926h1v1h-1zM1111 926h1v1h-1zM1146 926h1v1h-1zM1181 926h1v1h-1zM1216 926h1v1h-1zM1251 926h1v1h-1zM1286 926h1v1h-1zM1321 926h1v1h-1zM1356 926h1v1h-1zM1391 926h1v1h-1zM1426 926h1v1h-1zM1461 926h1v1h-1zM1496 926h1v1h-1zM1531 926h1v1h-1zM1566 926h1v1h-1zM1601 926h1v1h-1zM1636 926h1v1h-1zM1671 926h1v1h-1zM1706 926h1v1h-1zM1741 926h1v1h-1zM27 938h1v1h-1zM62 938h1v1h-1zM97 938h1v1h-1zM132 938h1v1h-1zM167 938h1v1h-1zM202 938h1v1h-1zM237 938h1v1h-1zM272 938h1v1h-1zM307 938h1v1h-1zM342 938h1v1h-1zM377 938h1v1h-1zM412 938h1v1h-1zM447 938h1v1h-1zM482 938h1v1h-1zM517 938h1v1h-1zM552 938h1v1h-1zM587 938h1v1h-1zM622 938h1v1h-1zM657 938h1v1h-1zM692 938h1v1h-1zM727 938h1v1h-1zM762 938h1v1h-1zM797 938h1v1h-1zM832 938h1v1h-1zM867 938h1v1h-1zM902 938h1v1h-1zM936 938h1v1h-1zM971 938h1v1h-1zM1006 938h1v1h-1zM1041 938h1v1h-1zM1076 938h1v1h-1zM1111 938h1v1h-1zM1146 938h1v1h-1zM1181 938h1v1h-1zM1216 938h1v1h-1zM1251 938h1v1h-1zM1286 938h1v1h-1zM1321 938h1v1h-1zM1356 938h1v1h-1zM1391 938h1v1h-1zM1426 938h1v1h-1zM1461 938h1v1h-1zM1496 938h1v1h-1zM1531 938h1v1h-1zM1566 938h1v1h-1zM1601 938h1v1h-1zM1636 938h1v1h-1zM1671 938h1v1h-1zM1706 938h1v1h-1zM1741 938h1v1h-1zM27 950h1v1h-1zM62 950h1v1h-1zM97 950h1v1h-1zM132 950h1v1h-1zM167 950h1v1h-1zM202 950h1v1h-1zM237 950h1v1h-1zM272 950h1v1h-1zM307 950h1v1h-1zM342 950h1v1h-1zM377 950h1v1h-1zM412 950h1v1h-1zM447 950h1v1h-1zM482 950h1v1h-1zM517 950h1v1h-1zM552 950h1v1h-1zM587 950h1v1h-1zM622 950h1v1h-1zM657 950h1v1h-1zM692 950h1v1h-1zM727 950h1v1h-1zM762 950h1v1h-1zM797 950h1v1h-1zM832 950h1v1h-1zM867 950h1v1h-1zM902 950h1v1h-1zM936 950h1v1h-1zM971 950h1v1h-1zM1006 950h1v1h-1zM1041 950h1v1h-1zM1076 950h1v1h-1zM1111 950h1v1h-1zM1146 950h1v1h-1zM1181 950h1v1h-1zM1216 950h1v1h-1zM1251 950h1v1h-1zM1286 950h1v1h-1zM1321 950h1v1h-1zM1356 950h1v1h-1zM1391 950h1v1h-1zM1426 950h1v1h-1zM1461 950h1v1h-1zM1496 950h1v1h-1zM1531 950h1v1h-1zM1566 950h1v1h-1zM1601 950h1v1h-1zM1636 950h1v1h-1zM1671 950h1v1h-1zM1706 950h1v1h-1zM1741 950h1v1h-1zM27 962h1v1h-1zM62 962h1v1h-1zM97 962h1v1h-1zM132 962h1v1h-1zM167 962h1v1h-1zM202 962h1v1h-1zM237 962h1v1h-1zM272 962h1v1h-1zM307 962h1v1h-1zM342 962h1v1h-1zM377 962h1v1h-1zM412 962h1v1h-1zM447 962h1v1h-1zM482 962h1v1h-1zM517 962h1v1h-1zM552 962h1v1h-1zM587 962h1v1h-1zM622 962h1v1h-1zM657 962h1v1h-1zM692 962h1v1h-1zM727 962h1v1h-1zM762 962h1v1h-1zM797 962h1v1h-1zM832 962h1v1h-1zM867 962h1v1h-1zM902 962h1v1h-1zM936 962h1v1h-1zM971 962h1v1h-1zM1006 962h1v1h-1zM1041 962h1v1h-1zM1076 962h1v1h-1zM1111 962h1v1h-1zM1146 962h1v1h-1zM1181 962h1v1h-1zM1216 962h1v1h-1zM1251 962h1v1h-1zM1286 962h1v1h-1zM1321 962h1v1h-1zM1356 962h1v1h-1zM1391 962h1v1h-1zM1426 962h1v1h-1zM1461 962h1v1h-1zM1496 962h1v1h-1zM1531 962h1v1h-1zM1566 962h1v1h-1zM1601 962h1v1h-1zM1636 962h1v1h-1zM1671 962h1v1h-1zM1706 962h1v1h-1zM1741 962h1v1h-1zM27 973h1v1h-1zM62 973h1v1h-1zM97 973h1v1h-1zM132 973h1v1h-1zM167 973h1v1h-1zM202 973h1v1h-1zM237 973h1v1h-1zM272 973h1v1h-1zM307 973h1v1h-1zM342 973h1v1h-1zM377 973h1v1h-1zM412 973h1v1h-1zM447 973h1v1h-1zM482 973h1v1h-1zM517 973h1v1h-1zM552 973h1v1h-1zM587 973h1v1h-1zM622 973h1v1h-1zM657 973h1v1h-1zM692 973h1v1h-1zM727 973h1v1h-1zM762 973h1v1h-1zM797 973h1v1h-1zM832 973h1v1h-1zM867 973h1v1h-1zM902 973h1v1h-1zM936 973h1v1h-1zM971 973h1v1h-1zM1006 973h1v1h-1zM1041 973h1v1h-1zM1076 973h1v1h-1zM1111 973h1v1h-1zM1146 973h1v1h-1zM1181 973h1v1h-1zM1216 973h1v1h-1zM1251 973h1v1h-1zM1286 973h1v1h-1zM1321 973h1v1h-1zM1356 973h1v1h-1zM1391 973h1v1h-1zM1426 973h1v1h-1zM1461 973h1v1h-1zM1496 973h1v1h-1zM1531 973h1v1h-1zM1566 973h1v1h-1zM1601 973h1v1h-1zM1636 973h1v1h-1zM1671 973h1v1h-1zM1706 973h1v1h-1zM1741 973h1v1h-1zM27 985h1v1h-1zM62 985h1v1h-1zM97 985h1v1h-1zM132 985h1v1h-1zM167 985h1v1h-1zM202 985h1v1h-1zM237 985h1v1h-1zM272 985h1v1h-1zM307 985h1v1h-1zM342 985h1v1h-1zM377 985h1v1h-1zM412 985h1v1h-1zM447 985h1v1h-1zM482 985h1v1h-1zM517 985h1v1h-1zM552 985h1v1h-1zM587 985h1v1h-1zM622 985h1v1h-1zM657 985h1v1h-1zM692 985h1v1h-1zM727 985h1v1h-1zM762 985h1v1h-1zM797 985h1v1h-1zM832 985h1v1h-1zM867 985h1v1h-1zM902 985h1v1h-1zM936 985h1v1h-1zM971 985h1v1h-1zM1006 985h1v1h-1zM1041 985h1v1h-1zM1076 985h1v1h-1zM1111 985h1v1h-1zM1146 985h1v1h-1zM1181 985h1v1h-1zM1216 985h1v1h-1zM1251 985h1v1h-1zM1286 985h1v1h-1zM1321 985h1v1h-1zM1356 985h1v1h-1zM1391 985h1v1h-1zM1426 985h1v1h-1zM1461 985h1v1h-1zM1496 985h1v1h-1zM1531 985h1v1h-1zM1566 985h1v1h-1zM1601 985h1v1h-1zM1636 985h1v1h-1zM1671 985h1v1h-1zM1706 985h1v1h-1zM1741 985h1v1h-1z" fill="#d0d0d0"/><line x1="62.5" y1="57" x2="62.5" y2="157" stroke="#dcdcdc" stroke-width="1" stroke-dasharray="1 1"/><line x1="62.5" y1="174" x2="62.5" y2="992" stroke="#dcdcdc" stroke-width="1" stroke-dasharray="1 1"/><line x1="237.5" y1="57" x2="237.5" y2="157" stroke="#dcdcdc" stroke-width="1" stroke-dasharray="1 1"/><line x1="237.5" y1="174" x2="237.5" y2="992" stroke="#dcdcdc" stroke-width="1" stroke-dasharray="1 1"/><line x1="412.5" y1="57" x2="412.5" y2="157" stroke="#dcdcdc" stroke-width="1" stroke-dasharray="1 1"/><line x1="412.5" y1="174" x2="412.5" y2="992" stroke="#dcdcdc" stroke-width="1" stroke-dasharray="1 1"/><line x1="762.5" y1="57" x2="762.5" y2="157" stroke="#dcdcdc" stroke-width="1" stroke-dasharray="1 1"/><line x1="762.5" y1="174" x2="762.5" y2="992" stroke="#dcdcdc" stroke-width="1" stroke-dasharray="1 1"/><line x1="936.5" y1="57" x2="936.5" y2="157" stroke="#dcdcdc" stroke-width="1" stroke-dasharray="1 1"/><line x1="936.5" y1="174" x2="936.5" y2="992" stroke="#dcdcdc" stroke-width="1" stroke-dasharray="1 1"/><line x1="1111.5" y1="57" x2="1111.5" y2="157" stroke="#dcdcdc" stroke-width="1" stroke-dasharray="1 1"/><line x1="1111.5" y1="174" x2="1111.5" y2="992" stroke="#dcdcdc" stroke-width="1" stroke-dasharray="1 1"/><line x1="1286.5" y1="57" x2="1286.5" y2="157" stroke="#dcdcdc" stroke-width="1" stroke-dasharray="1 1"/><line x1="1286.5" y1="174" x2="1286.5" y2="992" stroke="#dcdcdc" stroke-width="1" stroke-dasharray="1 1"/><line x1="1461.5" y1="57" x2="1461.5" y2="157" stroke="#dcdcdc" stroke-width="1" stroke-dasharray="1 1"/><line x1="1461.5" y1="174" x2="1461.5" y2="992" stroke="#dcdcdc" stroke-width="1" stroke-dasharray="1 1"/><line x1="1636.5" y1="57" x2="1636.5" y2="157" stroke="#dcdcdc" stroke-width="1" stroke-dasharray="1 1"/><line x1="1636.5" y1="174" x2="1636.5" y2="992" stroke="#dcdcdc" stroke-width="1" stroke-dasharray="1 1"/><rect x="3" y="172" width="1748" height="2" fill="#686868"/><rect x="3" y="289" width="1748" height="2" fill="#686868"/><rect x="3" y="406" width="1748" height="2" fill="#686868"/><rect x="3" y="523" width="1748" height="2" fill="#686868"/><rect x="3" y="640" width="1748" height="2" fill="#686868"/><rect x="3" y="757" width="1748" height="2" fill="#686868"/><rect x="3" y="874" width="1748" height="2" fill="#686868"/><line x1="587.5" y1="101" x2="587.5" y2="993" stroke="#c8c8c8" stroke-width="1" stroke-dasharray="5 5"/><line x1="5" y1="153.5" x2="1720" y2="153.5" stroke="#d4d4d4" stroke-width="1" stroke-dasharray="5 5"/><path d="M582 153.5h11M587.5 148.0v11" stroke="#d4d4d4" stroke-width="1"/><line x1="5" y1="264.5" x2="1740" y2="264.5" stroke="#d4d4d4" stroke-width="1" stroke-dasharray="5 5"/><path d="M582 264.5h11M587.5 259.0v11" stroke="#d4d4d4" stroke-width="1"/><line x1="5" y1="368.5" x2="1720" y2="368.5" stroke="#d4d4d4" stroke-width="1" stroke-dasharray="5 5"/><path d="M582 368.5h11M587.5 363.0v11" stroke="#d4d4d4" stroke-width="1"/><line x1="5" y1="502.5" x2="1740" y2="502.5" stroke="#d4d4d4" stroke-width="1" stroke-dasharray="5 5"/><path d="M582 502.5h11M587.5 497.0v11" stroke="#d4d4d4" stroke-width="1"/><line x1="5" y1="614.5" x2="1740" y2="614.5" stroke="#d4d4d4" stroke-width="1" stroke-dasharray="5 5"/><path d="M582 614.5h11M587.5 609.0v11" stroke="#d4d4d4" stroke-width="1"/><line x1="5" y1="735.5" x2="1740" y2="735.5" stroke="#d4d4d4" stroke-width="1" stroke-dasharray="5 5"/><path d="M582 735.5h11M587.5 730.0v11" stroke="#d4d4d4" stroke-width="1"/><line x1="5" y1="847.5" x2="1740" y2="847.5" stroke="#d4d4d4" stroke-width="1" stroke-dasharray="5 5"/><path d="M582 847.5h11M587.5 842.0v11" stroke="#d4d4d4" stroke-width="1"/><line x1="5" y1="962.5" x2="1720" y2="962.5" stroke="#d4d4d4" stroke-width="1" stroke-dasharray="5 5"/><path d="M582 962.5h11M587.5 957.0v11" stroke="#d4d4d4" stroke-width="1"/><clipPath id="lab"><rect x="1723.5" y="78.5" width="25.0" height="12"/><rect x="1723.5" y="101.5" width="25.0" height="12"/><rect x="1723.5" y="124.5" width="25.0" height="12"/><rect x="1723.5" y="147.5" width="25.0" height="12"/><rect x="1723.5" y="177.5" width="25.0" height="12"/><rect x="1723.5" y="201.5" width="25.0" height="12"/><rect x="1723.5" y="223.5" width="25.0" height="12"/><rect x="1723.5" y="246.5" width="25.0" height="12"/><rect x="1719.0" y="269.5" width="29.5" height="12"/><rect x="1723.5" y="293.5" width="25.0" height="12"/><rect x="1723.5" y="316.5" width="25.0" height="12"/><rect x="1723.5" y="339.5" width="25.0" height="12"/><rect x="1723.5" y="362.5" width="25.0" height="12"/><rect x="1719.0" y="385.5" width="29.5" height="12"/><rect x="1723.5" y="415.5" width="25.0" height="12"/><rect x="1723.5" y="438.5" width="25.0" height="12"/><rect x="1723.5" y="461.5" width="25.0" height="12"/><rect x="1723.5" y="484.5" width="25.0" height="12"/><rect x="1719.0" y="507.5" width="29.5" height="12"/><rect x="1705.0" y="527.5" width="43.5" height="12"/><rect x="1698.0" y="550.5" width="50.5" height="12"/><rect x="1698.0" y="573.5" width="50.5" height="12"/><rect x="1698.0" y="596.5" width="50.5" height="12"/><rect x="1693.5" y="619.5" width="55.0" height="12"/><rect x="1723.5" y="648.5" width="25.0" height="12"/><rect x="1723.5" y="671.5" width="25.0" height="12"/><rect x="1723.5" y="694.5" width="25.0" height="12"/><rect x="1723.5" y="717.5" width="25.0" height="12"/><rect x="1719.0" y="740.5" width="29.5" height="12"/><rect x="1723.5" y="760.5" width="25.0" height="12"/><rect x="1723.5" y="783.5" width="25.0" height="12"/><rect x="1723.5" y="806.5" width="25.0" height="12"/><rect x="1723.5" y="829.5" width="25.0" height="12"/><rect x="1719.0" y="852.5" width="29.5" height="12"/><rect x="1723.5" y="885.5" width="25.0" height="12"/><rect x="1723.5" y="908.5" width="25.0" height="12"/><rect x="1723.5" y="932.5" width="25.0" height="12"/><rect x="1723.5" y="955.5" width="25.0" height="12"/><rect x="1719.0" y="978.5" width="29.5" height="12"/></clipPath><g clip-path="url(#lab)"><rect x="1600" y="57" width="151" height="936" fill="#000"/><use href="#tr"/></g><text x="1745.5" y="88.5" fill="#f2f01e" stroke="#000" stroke-width="2" paint-order="stroke" font-size="12.5" letter-spacing="0.4" text-anchor="end">6 V</text><text x="1745.5" y="111.5" fill="#f2f01e" stroke="#000" stroke-width="2" paint-order="stroke" font-size="12.5" letter-spacing="0.4" text-anchor="end">4 V</text><text x="1745.5" y="134.5" fill="#f2f01e" stroke="#000" stroke-width="2" paint-order="stroke" font-size="12.5" letter-spacing="0.4" text-anchor="end">2 V</text><text x="1745.5" y="157.5" fill="#f2f01e" stroke="#000" stroke-width="2" paint-order="stroke" font-size="12.5" letter-spacing="0.4" text-anchor="end">0 V</text><text x="1745.5" y="187.5" fill="#1fc5d3" stroke="#000" stroke-width="2" paint-order="stroke" font-size="12.5" letter-spacing="0.4" text-anchor="end">7 V</text><text x="1745.5" y="211.5" fill="#1fc5d3" stroke="#000" stroke-width="2" paint-order="stroke" font-size="12.5" letter-spacing="0.4" text-anchor="end">5 V</text><text x="1745.5" y="233.5" fill="#1fc5d3" stroke="#000" stroke-width="2" paint-order="stroke" font-size="12.5" letter-spacing="0.4" text-anchor="end">3 V</text><text x="1745.5" y="256.5" fill="#1fc5d3" stroke="#000" stroke-width="2" paint-order="stroke" font-size="12.5" letter-spacing="0.4" text-anchor="end">1 V</text><text x="1745.5" y="279.5" fill="#1fc5d3" stroke="#000" stroke-width="2" paint-order="stroke" font-size="12.5" letter-spacing="0.4" text-anchor="end">-1 V</text><text x="1745.5" y="303.5" fill="#e8305a" stroke="#000" stroke-width="2" paint-order="stroke" font-size="12.5" letter-spacing="0.4" text-anchor="end">6 V</text><text x="1745.5" y="326.5" fill="#e8305a" stroke="#000" stroke-width="2" paint-order="stroke" font-size="12.5" letter-spacing="0.4" text-anchor="end">4 V</text><text x="1745.5" y="349.5" fill="#e8305a" stroke="#000" stroke-width="2" paint-order="stroke" font-size="12.5" letter-spacing="0.4" text-anchor="end">2 V</text><text x="1745.5" y="372.5" fill="#e8305a" stroke="#000" stroke-width="2" paint-order="stroke" font-size="12.5" letter-spacing="0.4" text-anchor="end">0 V</text><text x="1745.5" y="395.5" fill="#e8305a" stroke="#000" stroke-width="2" paint-order="stroke" font-size="12.5" letter-spacing="0.4" text-anchor="end">-2 V</text><text x="1745.5" y="425.5" fill="#8bc43c" stroke="#000" stroke-width="2" paint-order="stroke" font-size="12.5" letter-spacing="0.4" text-anchor="end">7 V</text><text x="1745.5" y="448.5" fill="#8bc43c" stroke="#000" stroke-width="2" paint-order="stroke" font-size="12.5" letter-spacing="0.4" text-anchor="end">5 V</text><text x="1745.5" y="471.5" fill="#8bc43c" stroke="#000" stroke-width="2" paint-order="stroke" font-size="12.5" letter-spacing="0.4" text-anchor="end">3 V</text><text x="1745.5" y="494.5" fill="#8bc43c" stroke="#000" stroke-width="2" paint-order="stroke" font-size="12.5" letter-spacing="0.4" text-anchor="end">1 V</text><text x="1745.5" y="517.5" fill="#8bc43c" stroke="#000" stroke-width="2" paint-order="stroke" font-size="12.5" letter-spacing="0.4" text-anchor="end">-1 V</text><text x="1745.5" y="537.5" fill="#f7921e" stroke="#000" stroke-width="2" paint-order="stroke" font-size="12.5" letter-spacing="0.4" text-anchor="end">1.12 V</text><text x="1745.5" y="560.5" fill="#f7921e" stroke="#000" stroke-width="2" paint-order="stroke" font-size="12.5" letter-spacing="0.4" text-anchor="end">800 mV</text><text x="1745.5" y="583.5" fill="#f7921e" stroke="#000" stroke-width="2" paint-order="stroke" font-size="12.5" letter-spacing="0.4" text-anchor="end">480 mV</text><text x="1745.5" y="606.5" fill="#f7921e" stroke="#000" stroke-width="2" paint-order="stroke" font-size="12.5" letter-spacing="0.4" text-anchor="end">160 mV</text><text x="1745.5" y="629.5" fill="#f7921e" stroke="#000" stroke-width="2" paint-order="stroke" font-size="12.5" letter-spacing="0.4" text-anchor="end">-160 mV</text><text x="1745.5" y="658.5" fill="#2c33c6" stroke="#000" stroke-width="2" paint-order="stroke" font-size="12.5" letter-spacing="0.4" text-anchor="end">7 V</text><text x="1745.5" y="681.5" fill="#2c33c6" stroke="#000" stroke-width="2" paint-order="stroke" font-size="12.5" letter-spacing="0.4" text-anchor="end">5 V</text><text x="1745.5" y="704.5" fill="#2c33c6" stroke="#000" stroke-width="2" paint-order="stroke" font-size="12.5" letter-spacing="0.4" text-anchor="end">3 V</text><text x="1745.5" y="727.5" fill="#2c33c6" stroke="#000" stroke-width="2" paint-order="stroke" font-size="12.5" letter-spacing="0.4" text-anchor="end">1 V</text><text x="1745.5" y="750.5" fill="#2c33c6" stroke="#000" stroke-width="2" paint-order="stroke" font-size="12.5" letter-spacing="0.4" text-anchor="end">-1 V</text><text x="1745.5" y="770.5" fill="#e6449e" stroke="#000" stroke-width="2" paint-order="stroke" font-size="12.5" letter-spacing="0.4" text-anchor="end">7 V</text><text x="1745.5" y="793.5" fill="#e6449e" stroke="#000" stroke-width="2" paint-order="stroke" font-size="12.5" letter-spacing="0.4" text-anchor="end">5 V</text><text x="1745.5" y="816.5" fill="#e6449e" stroke="#000" stroke-width="2" paint-order="stroke" font-size="12.5" letter-spacing="0.4" text-anchor="end">3 V</text><text x="1745.5" y="839.5" fill="#e6449e" stroke="#000" stroke-width="2" paint-order="stroke" font-size="12.5" letter-spacing="0.4" text-anchor="end">1 V</text><text x="1745.5" y="862.5" fill="#e6449e" stroke="#000" stroke-width="2" paint-order="stroke" font-size="12.5" letter-spacing="0.4" text-anchor="end">-1 V</text><text x="1745.5" y="895.5" fill="#1ed49b" stroke="#000" stroke-width="2" paint-order="stroke" font-size="12.5" letter-spacing="0.4" text-anchor="end">6 V</text><text x="1745.5" y="918.5" fill="#1ed49b" stroke="#000" stroke-width="2" paint-order="stroke" font-size="12.5" letter-spacing="0.4" text-anchor="end">4 V</text><text x="1745.5" y="942.5" fill="#1ed49b" stroke="#000" stroke-width="2" paint-order="stroke" font-size="12.5" letter-spacing="0.4" text-anchor="end">2 V</text><text x="1745.5" y="965.5" fill="#1ed49b" stroke="#000" stroke-width="2" paint-order="stroke" font-size="12.5" letter-spacing="0.4" text-anchor="end">0 V</text><text x="1745.5" y="988.5" fill="#1ed49b" stroke="#000" stroke-width="2" paint-order="stroke" font-size="12.5" letter-spacing="0.4" text-anchor="end">-2 V</text><text x="62.41000000000008" y="166" fill="#b4b4b4" stroke="#000" stroke-width="2" paint-order="stroke" font-size="13.5" text-anchor="middle">-3 ms</text><text x="237.34000000000003" y="166" fill="#b4b4b4" stroke="#000" stroke-width="2" paint-order="stroke" font-size="13.5" text-anchor="middle">-2 ms</text><text x="412.27000000000004" y="166" fill="#b4b4b4" stroke="#000" stroke-width="2" paint-order="stroke" font-size="13.5" text-anchor="middle">-1 ms</text><text x="587.2" y="166" fill="#b4b4b4" stroke="#000" stroke-width="2" paint-order="stroke" font-size="13.5" text-anchor="middle">0 s</text><text x="762.1300000000001" y="166" fill="#b4b4b4" stroke="#000" stroke-width="2" paint-order="stroke" font-size="13.5" text-anchor="middle">1 ms</text><text x="937.0600000000001" y="166" fill="#b4b4b4" stroke="#000" stroke-width="2" paint-order="stroke" font-size="13.5" text-anchor="middle">2 ms</text><text x="1111.99" y="166" fill="#b4b4b4" stroke="#000" stroke-width="2" paint-order="stroke" font-size="13.5" text-anchor="middle">3 ms</text><text x="1286.92" y="166" fill="#b4b4b4" stroke="#000" stroke-width="2" paint-order="stroke" font-size="13.5" text-anchor="middle">4 ms</text><text x="1461.8500000000001" y="166" fill="#b4b4b4" stroke="#000" stroke-width="2" paint-order="stroke" font-size="13.5" text-anchor="middle">5 ms</text><text x="1636.78" y="166" fill="#b4b4b4" stroke="#000" stroke-width="2" paint-order="stroke" font-size="13.5" text-anchor="middle">6 ms</text><path d="M8.5 84h21.5l11.5 12l-11.5 12h-21.5a2 2 0 0 1 -2 -2v-20a2 2 0 0 1 2 -2z" fill="#fbf032" stroke="#fbf032" stroke-width="1.3"/><text x="23" y="99.8" fill="#000" font-size="12" text-anchor="middle" letter-spacing="0.3">C 1</text><path d="M8.5 195h21.5l11.5 12l-11.5 12h-21.5a2 2 0 0 1 -2 -2v-20a2 2 0 0 1 2 -2z" fill="#0b181b" stroke="#1fc5d3" stroke-width="1.3"/><text x="23" y="210.8" fill="#22c8d6" font-size="12" text-anchor="middle" letter-spacing="0.3">C 2</text><path d="M8.5 351h21.5l11.5 12l-11.5 12h-21.5a2 2 0 0 1 -2 -2v-20a2 2 0 0 1 2 -2z" fill="#1b0c10" stroke="#e8305a" stroke-width="1.3"/><text x="23" y="366.8" fill="#f0f0f0" font-size="12" text-anchor="middle" letter-spacing="0.3">C 3</text><path d="M8.5 433h21.5l11.5 12l-11.5 12h-21.5a2 2 0 0 1 -2 -2v-20a2 2 0 0 1 2 -2z" fill="#141a0b" stroke="#8bc43c" stroke-width="1.3"/><text x="23" y="448.8" fill="#8bc43c" font-size="12" text-anchor="middle" letter-spacing="0.3">C 4</text><path d="M8.5 588h21.5l11.5 12l-11.5 12h-21.5a2 2 0 0 1 -2 -2v-20a2 2 0 0 1 2 -2z" fill="#1c130a" stroke="#f7921e" stroke-width="1.3"/><text x="23" y="603.8" fill="#f7921e" font-size="12" text-anchor="middle" letter-spacing="0.3">C 5</text><path d="M8.5 666h21.5l11.5 12l-11.5 12h-21.5a2 2 0 0 1 -2 -2v-20a2 2 0 0 1 2 -2z" fill="#0a0a1c" stroke="#2c33c6" stroke-width="1.3"/><text x="23" y="681.8" fill="#f0f0f0" font-size="12" text-anchor="middle" letter-spacing="0.3">C 6</text><path d="M8.5 777h21.5l11.5 12l-11.5 12h-21.5a2 2 0 0 1 -2 -2v-20a2 2 0 0 1 2 -2z" fill="#1a0b14" stroke="#e6449e" stroke-width="1.3"/><text x="23" y="792.8" fill="#e6449e" font-size="12" text-anchor="middle" letter-spacing="0.3">C 7</text><path d="M8.5 911h21.5l11.5 12l-11.5 12h-21.5a2 2 0 0 1 -2 -2v-20a2 2 0 0 1 2 -2z" fill="#0a1a14" stroke="#1ed49b" stroke-width="1.3"/><text x="23" y="926.8" fill="#1ed49b" font-size="12" text-anchor="middle" letter-spacing="0.3">C 8</text><path d="M577 57h20l-10 9.5z" fill="#f7921e"/><path d="M578 68h18v19h-6l-3 6l-3 -6h-6z" fill="#000" stroke="#f7921e" stroke-width="2"/><text x="587" y="83" fill="#f7921e" font-size="14.5" text-anchor="middle">T</text><path d="M1710 64h31a3 3 0 0 1 3 3v31z" fill="#4d4d4d" stroke="#000" stroke-width="1.5" paint-order="stroke"/><circle cx="1737.2" cy="70.6" r="4" fill="none" stroke="#8c8c8c" stroke-width="1.4"/><line x1="1728.5" y1="80" x2="1733.8" y2="74.7" stroke="#8c8c8c" stroke-width="2.2" stroke-linecap="round"/><rect x="1742.5" y="93" width="3" height="7" fill="#000"/><path d="M1730 96.3L1734.5 91.5L1742 98.4V105.7L1739.9 105.8Z" fill="#f4ee2a" stroke="#000" stroke-width="1"/></svg><div class="a rp"></div><svg class="a" style="left:0;top:0" width="1920" height="30"><g font-family="Liberation Sans" font-weight="bold" fill="#fff" font-size="30"><text x="1785" y="25.7" textLength="29.5" lengthAdjust="spacingAndGlyphs">Te</text><text x="1828.5" y="25.7" textLength="75" lengthAdjust="spacingAndGlyphs">tronix</text></g><path d="M1815 25.7h5.8l10 -16.3h-5.8z" fill="#1fb6d8"/><path d="M1821.3 18.2l3.6 -4.4l7 11.9h-6.6z" fill="#fff"/></svg><div class="a" style="left:1802px;top:31px;font-size:14.5px;font-weight:bold;color:#efefef;letter-spacing:0.6px">Add New...</div><div class="btn" style="left:1778px;top:54px;">Cursors</div><div class="btn" style="left:1850px;top:54px;">Callout</div><div class="btn" style="left:1778px;top:100px;">Measure</div><div class="btn" style="left:1850px;top:100px;">Search</div><div class="btn" style="left:1778px;top:146px;line-height:15px;padding-top:2px;">Results<br>Table</div><div class="btn" style="left:1850px;top:146px;">Plot</div><div class="btn" style="left:1778px;top:196px;"></div><div class="btn" style="left:1850px;top:196px;">More...</div><div class="a" style="left:1773px;top:189px;width:144px;height:1px;background:#5e544c"></div><div class="a" style="left:1773px;top:241px;width:144px;height:1px;background:#5e544c"></div><svg class="a" style="left:1778px;top:196px" width="62" height="36"><rect x="20" y="6" width="22" height="21" fill="none" stroke="#a0a0a0" stroke-width="1.6" stroke-dasharray="3 2"/><circle cx="33" cy="15" r="4.5" fill="none" stroke="#a8a8a8" stroke-width="1.6"/><line x1="29.5" y1="18.5" x2="24" y2="24" stroke="#a8a8a8" stroke-width="2.2"/><path d="M37 20l7 7h-4l2 4l-1.5 .8l-2 -4l-2.5 2.5z" fill="#a8a8a8"/></svg><div class="meas" style="top:255px"><div class="h" style="">Meas 1</div><div class="badge" style="left:116px;width:23px;background:#f2f01e;color:#000">1</div><div class="b">Rise Time</div><div class="b">μ': 114.7 μs</div></div><div class="meas" style="top:320px"><div class="h" style="">Meas 2</div><div class="badge" style="left:86px;width:53px;background:linear-gradient(110deg,#f2f01e 0,#f2f01e 48%,#1fc5d3 50%);"><span style="position:absolute;left:12px">1</span><span style="position:absolute;left:35px">2</span></div><div class="b">Delay</div><div class="b">μ': 5.151 ms</div></div><div class="meas" style="top:385px"><div class="h" style="">Meas 3</div><div class="badge" style="left:116px;width:23px;background:#e8305a;color:#fff">3</div><div class="b">Maximum</div><div class="b">μ': 5.176 V</div></div><div class="meas" style="top:450px"><div class="h" style="">Meas 4</div><div class="badge" style="left:116px;width:23px;background:#8bc43c;color:#000">4</div><div class="b">Peak-to-Peak</div><div class="b">μ': 6.458 V</div></div><div class="meas" style="top:515px"><div class="h" style="">Meas 5</div><div class="badge" style="left:116px;width:23px;background:#f7921e;color:#000">5</div><div class="b">Fall Time</div><div class="b">μ': 703.3 μs</div></div><div class="meas" style="top:580px"><div class="h" style="">Meas 6</div><div class="badge" style="left:116px;width:23px;background:#2c33c6;color:#fff">6</div><div class="b">Top</div><div class="b">μ': 4.997 V</div></div><div class="meas" style="top:645px"><div class="h" style="">Meas 7</div><div class="badge" style="left:116px;width:23px;background:#e6449e;color:#000">7</div><div class="b">Base</div><div class="b">μ': -14.54 mV</div></div><div class="meas" style="top:710px"><div class="h" style="background:#000;color:#1ed49b;">Meas 8</div><div class="badge" style="left:116px;width:23px;background:#1ed49b;color:#000">8</div><div class="b">Positive Overshoot</div><div class="b">μ': 5.663 %</div></div><svg class="a" style="left:1758px;top:498px" width="8" height="28"><circle cx="4" cy="5" r="1.6" fill="#bbb"/><circle cx="4" cy="14" r="1.6" fill="#bbb"/><circle cx="4" cy="23" r="1.6" fill="#bbb"/></svg><div class="ch" style="left:3px"><div class="h" style="background:#fff23a;color:#000">Ch 1</div><div class="b" style="position:absolute;top:19px;">1 V/div</div><svg style="position:absolute;left:6px;top:39px" width="18" height="14"><path d="M2 11v-4a5 5 0 0 1 10 0" fill="none" stroke="#333" stroke-width="1.2"/><circle cx="7" cy="5" r="2.6" fill="none" stroke="#333" stroke-width="1.2"/><rect x="11" y="7.5" width="4" height="5.5" fill="#e8e8e8" stroke="#333" stroke-width="1.1"/><rect x="1" y="8" width="2.5" height="4.5" rx="1" fill="#e8e8e8" stroke="#333" stroke-width="1"/></svg><div class="b" style="position:absolute;top:57px">1 GHz</div><div style="position:absolute;left:72px;top:58px;font-size:10px;font-weight:bold;color:#222;letter-spacing:-0.5px;line-height:12px">B<span style="font-size:8px;position:relative;top:3px;left:1px">W</span></div></div><div class="ch" style="left:98px"><div class="h" style="background:#1f3c40;color:#22c8d6">Ch 2</div><div class="b" style="position:absolute;top:19px;">1 V/div</div><svg style="position:absolute;left:6px;top:39px" width="18" height="14"><path d="M2 11v-4a5 5 0 0 1 10 0" fill="none" stroke="#333" stroke-width="1.2"/><circle cx="7" cy="5" r="2.6" fill="none" stroke="#333" stroke-width="1.2"/><rect x="11" y="7.5" width="4" height="5.5" fill="#e8e8e8" stroke="#333" stroke-width="1.1"/><rect x="1" y="8" width="2.5" height="4.5" rx="1" fill="#e8e8e8" stroke="#333" stroke-width="1"/></svg><div class="b" style="position:absolute;top:57px">1 GHz</div><div style="position:absolute;left:72px;top:58px;font-size:10px;font-weight:bold;color:#222;letter-spacing:-0.5px;line-height:12px">B<span style="font-size:8px;position:relative;top:3px;left:1px">W</span></div></div><div class="ch" style="left:193px"><div class="h" style="background:#45252b;color:#f4f4f4">Ch 3</div><div class="b" style="position:absolute;top:19px;">1 V/div</div><svg style="position:absolute;left:6px;top:39px" width="18" height="14"><path d="M2 11v-4a5 5 0 0 1 10 0" fill="none" stroke="#333" stroke-width="1.2"/><circle cx="7" cy="5" r="2.6" fill="none" stroke="#333" stroke-width="1.2"/><rect x="11" y="7.5" width="4" height="5.5" fill="#e8e8e8" stroke="#333" stroke-width="1.1"/><rect x="1" y="8" width="2.5" height="4.5" rx="1" fill="#e8e8e8" stroke="#333" stroke-width="1"/></svg><div class="b" style="position:absolute;top:57px">500 MHz</div><div style="position:absolute;left:72px;top:58px;font-size:10px;font-weight:bold;color:#222;letter-spacing:-0.5px;line-height:12px">B<span style="font-size:8px;position:relative;top:3px;left:1px">W</span></div></div><div class="ch" style="left:288px"><div class="h" style="background:#2f3d22;color:#8bc43c">Ch 4</div><div class="b" style="position:absolute;top:19px;">1 V/div</div><svg style="position:absolute;left:6px;top:39px" width="18" height="14"><path d="M2 11v-4a5 5 0 0 1 10 0" fill="none" stroke="#333" stroke-width="1.2"/><circle cx="7" cy="5" r="2.6" fill="none" stroke="#333" stroke-width="1.2"/><rect x="11" y="7.5" width="4" height="5.5" fill="#e8e8e8" stroke="#333" stroke-width="1.1"/><rect x="1" y="8" width="2.5" height="4.5" rx="1" fill="#e8e8e8" stroke="#333" stroke-width="1"/></svg><div class="b" style="position:absolute;top:57px">1 GHz</div><div style="position:absolute;left:72px;top:58px;font-size:10px;font-weight:bold;color:#222;letter-spacing:-0.5px;line-height:12px">B<span style="font-size:8px;position:relative;top:3px;left:1px">W</span></div></div><div class="ch" style="left:383px"><div class="h" style="background:#4a3420;color:#f7921e">Ch 5</div><div class="b" style="position:absolute;top:19px;">160 mV/div</div><svg style="position:absolute;left:6px;top:39px" width="18" height="14"><path d="M2 11v-4a5 5 0 0 1 10 0" fill="none" stroke="#333" stroke-width="1.2"/><circle cx="7" cy="5" r="2.6" fill="none" stroke="#333" stroke-width="1.2"/><rect x="11" y="7.5" width="4" height="5.5" fill="#e8e8e8" stroke="#333" stroke-width="1.1"/><rect x="1" y="8" width="2.5" height="4.5" rx="1" fill="#e8e8e8" stroke="#333" stroke-width="1"/></svg><div class="b" style="position:absolute;top:57px">1 GHz</div><div style="position:absolute;left:72px;top:58px;font-size:10px;font-weight:bold;color:#222;letter-spacing:-0.5px;line-height:12px">B<span style="font-size:8px;position:relative;top:3px;left:1px">W</span></div></div><div class="ch" style="left:478px"><div class="h" style="background:#1e1f45;color:#f4f4f4">Ch 6</div><div class="b" style="position:absolute;top:19px;">1 V/div</div><svg style="position:absolute;left:6px;top:39px" width="18" height="14"><path d="M2 11v-4a5 5 0 0 1 10 0" fill="none" stroke="#333" stroke-width="1.2"/><circle cx="7" cy="5" r="2.6" fill="none" stroke="#333" stroke-width="1.2"/><rect x="11" y="7.5" width="4" height="5.5" fill="#e8e8e8" stroke="#333" stroke-width="1.1"/><rect x="1" y="8" width="2.5" height="4.5" rx="1" fill="#e8e8e8" stroke="#333" stroke-width="1"/></svg><div class="b" style="position:absolute;top:57px">1 GHz</div><div style="position:absolute;left:72px;top:58px;font-size:10px;font-weight:bold;color:#222;letter-spacing:-0.5px;line-height:12px">B<span style="font-size:8px;position:relative;top:3px;left:1px">W</span></div></div><div class="ch" style="left:573px"><div class="h" style="background:#46232f;color:#e6449e">Ch 7</div><div class="b" style="position:absolute;top:19px;">1 V/div</div><svg style="position:absolute;left:6px;top:39px" width="18" height="14"><path d="M2 11v-4a5 5 0 0 1 10 0" fill="none" stroke="#333" stroke-width="1.2"/><circle cx="7" cy="5" r="2.6" fill="none" stroke="#333" stroke-width="1.2"/><rect x="11" y="7.5" width="4" height="5.5" fill="#e8e8e8" stroke="#333" stroke-width="1.1"/><rect x="1" y="8" width="2.5" height="4.5" rx="1" fill="#e8e8e8" stroke="#333" stroke-width="1"/></svg><div class="b" style="position:absolute;top:57px">1 GHz</div><div style="position:absolute;left:72px;top:58px;font-size:10px;font-weight:bold;color:#222;letter-spacing:-0.5px;line-height:12px">B<span style="font-size:8px;position:relative;top:3px;left:1px">W</span></div></div><div class="ch" style="left:668px"><div class="h" style="background:#1a4232;color:#1ed49b">Ch 8</div><div class="b" style="position:absolute;top:19px;">1 V/div</div><svg style="position:absolute;left:6px;top:39px" width="18" height="14"><path d="M2 11v-4a5 5 0 0 1 10 0" fill="none" stroke="#333" stroke-width="1.2"/><circle cx="7" cy="5" r="2.6" fill="none" stroke="#333" stroke-width="1.2"/><rect x="11" y="7.5" width="4" height="5.5" fill="#e8e8e8" stroke="#333" stroke-width="1.1"/><rect x="1" y="8" width="2.5" height="4.5" rx="1" fill="#e8e8e8" stroke="#333" stroke-width="1"/></svg><div class="b" style="position:absolute;top:57px">1 GHz</div><div style="position:absolute;left:72px;top:58px;font-size:10px;font-weight:bold;color:#222;letter-spacing:-0.5px;line-height:12px">B<span style="font-size:8px;position:relative;top:3px;left:1px">W</span></div></div><div class="a" style="left:1008px;top:999px;width:1px;height:77px;background:#555"></div><div class="a" style="left:1158px;top:999px;width:1px;height:77px;background:#555"></div><div class="a" style="left:1269px;top:999px;width:1px;height:77px;background:#555"></div><div class="a" style="left:1811px;top:999px;width:1px;height:77px;background:#555"></div><div class="tb" style="left:1018px;padding-top:19px;line-height:16px"><div style="position:absolute;left:4px;top:7px;width:30px;height:2px;background:#f7921e"></div>Add<br>New<br>Math</div><div class="tb" style="left:1063px;padding-top:19px;line-height:16px"><div style="position:absolute;left:4px;top:7px;width:30px;height:2px;background:#f2f01e"></div>Add<br>New<br>Ref</div><div class="tb" style="left:1108px;padding-top:19px;line-height:16px"><div style="position:absolute;left:4px;top:7px;width:30px;height:2px;background:#c05ae8"></div>Add<br>New<br>Bus</div><div class="tb" style="left:1169px;padding-top:35px;line-height:16px"><div style="position:absolute;left:4px;top:7px;width:30px;height:2px;background:#555"></div>DVM</div><div class="tb" style="left:1219px;padding-top:35px;line-height:16px"><div style="position:absolute;left:4px;top:7px;width:30px;height:2px;background:#555"></div>AFG</div><div class="panel" style="left:1281px;width:198px"><div class="h">Horizontal</div><div class="r" style="left:4px;top:20px">1 ms/div</div><div class="r" style="left:110px;top:20px">10 ms</div><div class="r" style="left:4px;top:39px">SR: 125 MS/s</div><div class="r" style="left:110px;top:39px">8 ns/pt</div><div class="r" style="left:4px;top:58px">RL: 1.25 Mpts</div><div class="r" style="left:124px;top:58px">33.4%</div><svg style="position:absolute;left:109px;top:60px" width="12" height="14"><path d="M1.5 1.5h8v8h-2.5l-1.5 3l-1.5 -3h-2.5z" fill="#000" stroke="#f7921e" stroke-width="1.4"/><text x="5.5" y="8.5" font-size="7" fill="#fff" font-weight="bold" text-anchor="middle" font-family="Liberation Sans">T</text></svg></div><div class="panel" style="left:1486px;width:158px"><div class="h">Trigger</div><div style="position:absolute;left:4px;top:22px;width:30px;height:15px;border-radius:5px;background:#f4ec2a;border:1px solid #222;font-size:12px;color:#000;text-align:center;line-height:13px">1</div><svg style="position:absolute;left:43px;top:23px" width="20" height="14"><path d="M1 12h3l8 -10h4" fill="none" stroke="#2c2c7a" stroke-width="1.2"/></svg><div class="r" style="left:69px;top:20px">4.96 V</div></div><div class="panel" style="left:1651px;width:149px"><div class="h">Acquisition</div><div class="r" style="left:3px;top:20px">Auto,</div><div class="r" style="left:85px;top:20px">Analyze</div><div class="r" style="left:3px;top:39px">Sample: 12 bits</div><div class="r" style="left:3px;top:57.5px">Single: 0 /1</div></div><div class="a" style="left:1822px;top:999px;width:90px;height:36px;border-radius:6px;background:#ff1e28;border:1px solid #7a7a7a;color:#fff;font-weight:bold;font-size:14px;text-align:center;line-height:32px">Stopped</div></body></html>
